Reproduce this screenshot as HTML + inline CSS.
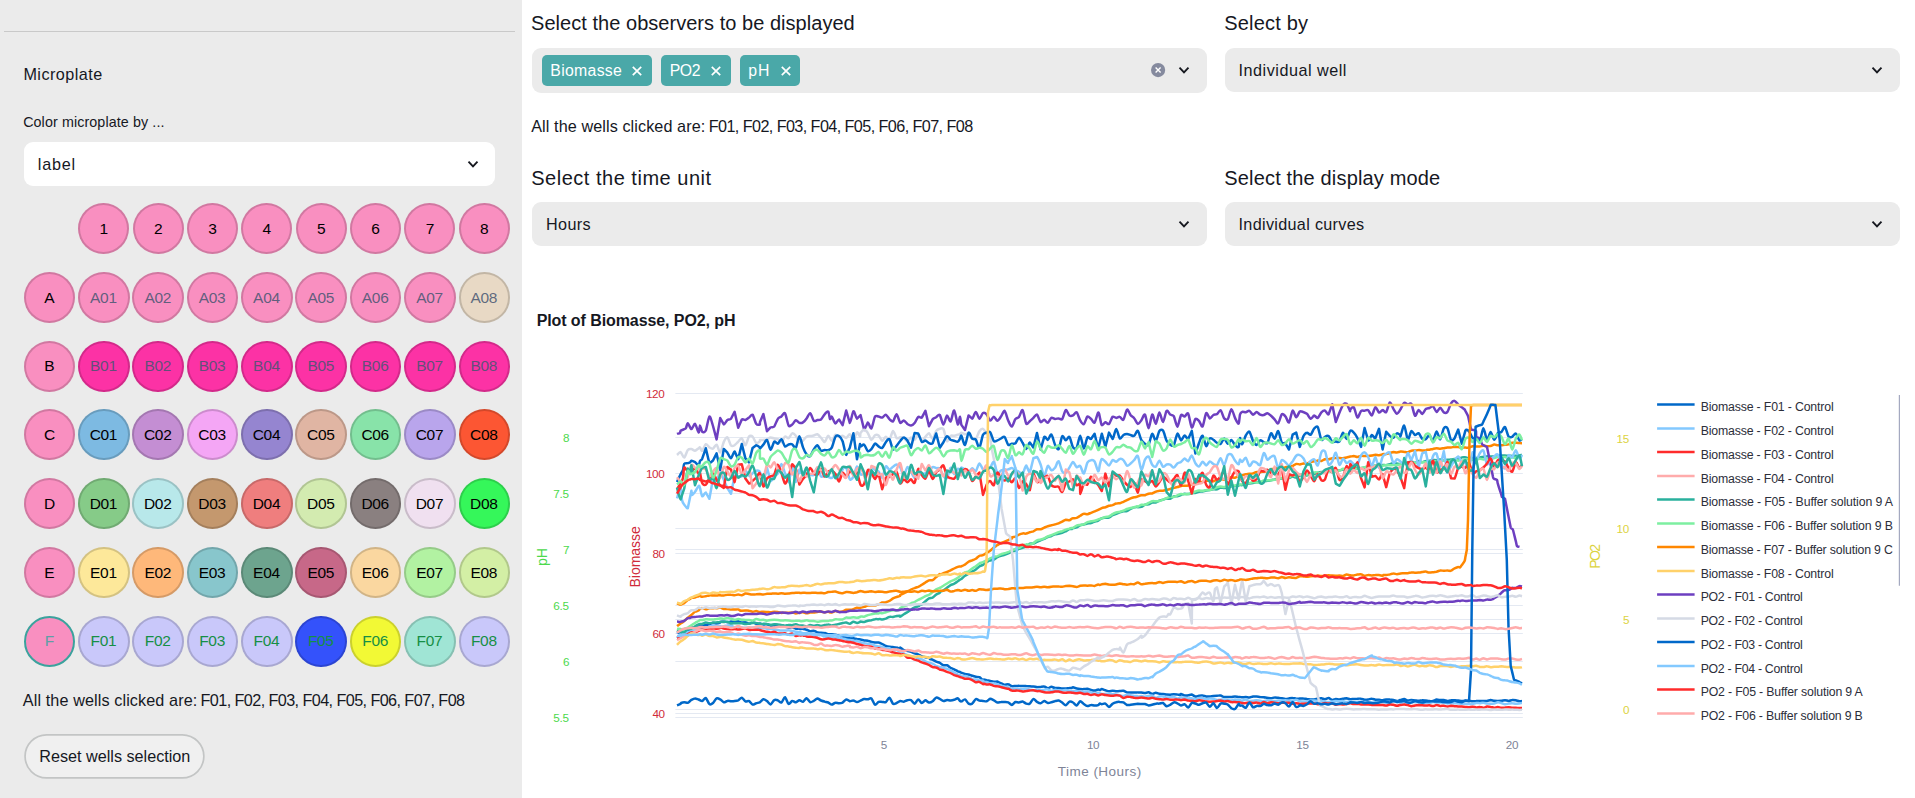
<!DOCTYPE html><html><head><meta charset="utf-8"><title>Microplate</title><style>html,body{margin:0;padding:0}body{width:1915px;height:798px;overflow:hidden;position:relative;background:#fff;font-family:'Liberation Sans',sans-serif;}</style></head><body><div style="position:absolute;left:0;top:0;width:522px;height:798px;background:#ebebeb"></div>
<div style="position:absolute;left:4px;top:30.5px;width:511px;height:1.5px;background:#c9c9c9"></div>
<div style="position:absolute;left:23.43px;top:64px;font-size:16.2px;line-height:20px;color:#16181f;white-space:pre;letter-spacing:0.452px;">Microplate</div>
<div style="position:absolute;left:23.14px;top:113px;font-size:14.3px;line-height:18px;color:#16181f;white-space:pre;letter-spacing:0.103px;">Color microplate by ...</div>
<div style="position:absolute;left:24px;top:142px;width:471px;height:44px;background:#fff;border-radius:9px"></div>
<div style="position:absolute;left:37.73px;top:154px;font-size:16.2px;line-height:20px;color:#16181f;white-space:pre;letter-spacing:0.810px;">label</div>
<svg style="position:absolute;left:462.7px;top:154px" width="20" height="20" viewBox="462.7 154 20 20"><path d="M468.20 161.70 L472.70 166.30 L477.20 161.70" fill="none" stroke="#16181f" stroke-width="1.9" stroke-linecap="butt" stroke-linejoin="miter"/></svg>
<div style="position:absolute;left:78.35px;top:202.95px;width:51.0px;height:51.0px;box-sizing:border-box;border-radius:50%;background:#f98fc0;border:2px solid rgba(0,0,0,0.16)"></div><div style="position:absolute;left:99.54px;top:219px;font-size:15.5px;line-height:19px;color:#000;white-space:pre;">1</div>
<div style="position:absolute;left:132.70px;top:202.95px;width:51.0px;height:51.0px;box-sizing:border-box;border-radius:50%;background:#f98fc0;border:2px solid rgba(0,0,0,0.16)"></div><div style="position:absolute;left:153.89px;top:219px;font-size:15.5px;line-height:19px;color:#000;white-space:pre;">2</div>
<div style="position:absolute;left:187.05px;top:202.95px;width:51.0px;height:51.0px;box-sizing:border-box;border-radius:50%;background:#f98fc0;border:2px solid rgba(0,0,0,0.16)"></div><div style="position:absolute;left:208.24px;top:219px;font-size:15.5px;line-height:19px;color:#000;white-space:pre;">3</div>
<div style="position:absolute;left:241.40px;top:202.95px;width:51.0px;height:51.0px;box-sizing:border-box;border-radius:50%;background:#f98fc0;border:2px solid rgba(0,0,0,0.16)"></div><div style="position:absolute;left:262.59px;top:219px;font-size:15.5px;line-height:19px;color:#000;white-space:pre;">4</div>
<div style="position:absolute;left:295.75px;top:202.95px;width:51.0px;height:51.0px;box-sizing:border-box;border-radius:50%;background:#f98fc0;border:2px solid rgba(0,0,0,0.16)"></div><div style="position:absolute;left:316.94px;top:219px;font-size:15.5px;line-height:19px;color:#000;white-space:pre;">5</div>
<div style="position:absolute;left:350.10px;top:202.95px;width:51.0px;height:51.0px;box-sizing:border-box;border-radius:50%;background:#f98fc0;border:2px solid rgba(0,0,0,0.16)"></div><div style="position:absolute;left:371.29px;top:219px;font-size:15.5px;line-height:19px;color:#000;white-space:pre;">6</div>
<div style="position:absolute;left:404.45px;top:202.95px;width:51.0px;height:51.0px;box-sizing:border-box;border-radius:50%;background:#f98fc0;border:2px solid rgba(0,0,0,0.16)"></div><div style="position:absolute;left:425.64px;top:219px;font-size:15.5px;line-height:19px;color:#000;white-space:pre;">7</div>
<div style="position:absolute;left:458.80px;top:202.95px;width:51.0px;height:51.0px;box-sizing:border-box;border-radius:50%;background:#f98fc0;border:2px solid rgba(0,0,0,0.16)"></div><div style="position:absolute;left:479.99px;top:219px;font-size:15.5px;line-height:19px;color:#000;white-space:pre;">8</div>
<div style="position:absolute;left:24.00px;top:271.76px;width:51.0px;height:51.0px;box-sizing:border-box;border-radius:50%;background:#f98fc0;border:2px solid rgba(0,0,0,0.16)"></div><div style="position:absolute;left:44.33px;top:288px;font-size:15.5px;line-height:19px;color:#000;white-space:pre;">A</div>
<div style="position:absolute;left:78.05px;top:271.76px;width:51.6px;height:51.0px;box-sizing:border-box;border-radius:50%;background:#f98fc0;border:2px solid rgba(0,0,0,0.16)"></div><div style="position:absolute;left:90.05px;top:288px;font-size:15.5px;line-height:19px;color:rgba(70,85,113,0.85);white-space:pre;letter-spacing:-0.3px;">A01</div>
<div style="position:absolute;left:132.40px;top:271.76px;width:51.6px;height:51.0px;box-sizing:border-box;border-radius:50%;background:#f98fc0;border:2px solid rgba(0,0,0,0.16)"></div><div style="position:absolute;left:144.40px;top:288px;font-size:15.5px;line-height:19px;color:rgba(70,85,113,0.85);white-space:pre;letter-spacing:-0.3px;">A02</div>
<div style="position:absolute;left:186.75px;top:271.76px;width:51.6px;height:51.0px;box-sizing:border-box;border-radius:50%;background:#f98fc0;border:2px solid rgba(0,0,0,0.16)"></div><div style="position:absolute;left:198.75px;top:288px;font-size:15.5px;line-height:19px;color:rgba(70,85,113,0.85);white-space:pre;letter-spacing:-0.3px;">A03</div>
<div style="position:absolute;left:241.10px;top:271.76px;width:51.6px;height:51.0px;box-sizing:border-box;border-radius:50%;background:#f98fc0;border:2px solid rgba(0,0,0,0.16)"></div><div style="position:absolute;left:253.10px;top:288px;font-size:15.5px;line-height:19px;color:rgba(70,85,113,0.85);white-space:pre;letter-spacing:-0.3px;">A04</div>
<div style="position:absolute;left:295.45px;top:271.76px;width:51.6px;height:51.0px;box-sizing:border-box;border-radius:50%;background:#f98fc0;border:2px solid rgba(0,0,0,0.16)"></div><div style="position:absolute;left:307.45px;top:288px;font-size:15.5px;line-height:19px;color:rgba(70,85,113,0.85);white-space:pre;letter-spacing:-0.3px;">A05</div>
<div style="position:absolute;left:349.80px;top:271.76px;width:51.6px;height:51.0px;box-sizing:border-box;border-radius:50%;background:#f98fc0;border:2px solid rgba(0,0,0,0.16)"></div><div style="position:absolute;left:361.80px;top:288px;font-size:15.5px;line-height:19px;color:rgba(70,85,113,0.85);white-space:pre;letter-spacing:-0.3px;">A06</div>
<div style="position:absolute;left:404.15px;top:271.76px;width:51.6px;height:51.0px;box-sizing:border-box;border-radius:50%;background:#f98fc0;border:2px solid rgba(0,0,0,0.16)"></div><div style="position:absolute;left:416.15px;top:288px;font-size:15.5px;line-height:19px;color:rgba(70,85,113,0.85);white-space:pre;letter-spacing:-0.3px;">A07</div>
<div style="position:absolute;left:458.50px;top:271.76px;width:51.6px;height:51.0px;box-sizing:border-box;border-radius:50%;background:#e8d9c5;border:2px solid rgba(0,0,0,0.16)"></div><div style="position:absolute;left:470.50px;top:288px;font-size:15.5px;line-height:19px;color:rgba(70,85,113,0.85);white-space:pre;letter-spacing:-0.3px;">A08</div>
<div style="position:absolute;left:24.00px;top:340.57px;width:51.0px;height:51.0px;box-sizing:border-box;border-radius:50%;background:#f98fc0;border:2px solid rgba(0,0,0,0.16)"></div><div style="position:absolute;left:44.33px;top:356px;font-size:15.5px;line-height:19px;color:#000;white-space:pre;">B</div>
<div style="position:absolute;left:78.05px;top:340.57px;width:51.6px;height:51.0px;box-sizing:border-box;border-radius:50%;background:#fc32a5;border:2px solid rgba(0,0,0,0.16)"></div><div style="position:absolute;left:90.05px;top:356px;font-size:15.5px;line-height:19px;color:rgba(70,85,113,0.85);white-space:pre;letter-spacing:-0.3px;">B01</div>
<div style="position:absolute;left:132.40px;top:340.57px;width:51.6px;height:51.0px;box-sizing:border-box;border-radius:50%;background:#fc32a5;border:2px solid rgba(0,0,0,0.16)"></div><div style="position:absolute;left:144.40px;top:356px;font-size:15.5px;line-height:19px;color:rgba(70,85,113,0.85);white-space:pre;letter-spacing:-0.3px;">B02</div>
<div style="position:absolute;left:186.75px;top:340.57px;width:51.6px;height:51.0px;box-sizing:border-box;border-radius:50%;background:#fc32a5;border:2px solid rgba(0,0,0,0.16)"></div><div style="position:absolute;left:198.75px;top:356px;font-size:15.5px;line-height:19px;color:rgba(70,85,113,0.85);white-space:pre;letter-spacing:-0.3px;">B03</div>
<div style="position:absolute;left:241.10px;top:340.57px;width:51.6px;height:51.0px;box-sizing:border-box;border-radius:50%;background:#fc32a5;border:2px solid rgba(0,0,0,0.16)"></div><div style="position:absolute;left:253.10px;top:356px;font-size:15.5px;line-height:19px;color:rgba(70,85,113,0.85);white-space:pre;letter-spacing:-0.3px;">B04</div>
<div style="position:absolute;left:295.45px;top:340.57px;width:51.6px;height:51.0px;box-sizing:border-box;border-radius:50%;background:#fc32a5;border:2px solid rgba(0,0,0,0.16)"></div><div style="position:absolute;left:307.45px;top:356px;font-size:15.5px;line-height:19px;color:rgba(70,85,113,0.85);white-space:pre;letter-spacing:-0.3px;">B05</div>
<div style="position:absolute;left:349.80px;top:340.57px;width:51.6px;height:51.0px;box-sizing:border-box;border-radius:50%;background:#fc32a5;border:2px solid rgba(0,0,0,0.16)"></div><div style="position:absolute;left:361.80px;top:356px;font-size:15.5px;line-height:19px;color:rgba(70,85,113,0.85);white-space:pre;letter-spacing:-0.3px;">B06</div>
<div style="position:absolute;left:404.15px;top:340.57px;width:51.6px;height:51.0px;box-sizing:border-box;border-radius:50%;background:#fc32a5;border:2px solid rgba(0,0,0,0.16)"></div><div style="position:absolute;left:416.15px;top:356px;font-size:15.5px;line-height:19px;color:rgba(70,85,113,0.85);white-space:pre;letter-spacing:-0.3px;">B07</div>
<div style="position:absolute;left:458.50px;top:340.57px;width:51.6px;height:51.0px;box-sizing:border-box;border-radius:50%;background:#fc32a5;border:2px solid rgba(0,0,0,0.16)"></div><div style="position:absolute;left:470.50px;top:356px;font-size:15.5px;line-height:19px;color:rgba(70,85,113,0.85);white-space:pre;letter-spacing:-0.3px;">B08</div>
<div style="position:absolute;left:24.00px;top:409.38px;width:51.0px;height:51.0px;box-sizing:border-box;border-radius:50%;background:#f98fc0;border:2px solid rgba(0,0,0,0.16)"></div><div style="position:absolute;left:43.90px;top:425px;font-size:15.5px;line-height:19px;color:#000;white-space:pre;">C</div>
<div style="position:absolute;left:78.05px;top:409.38px;width:51.6px;height:51.0px;box-sizing:border-box;border-radius:50%;background:#7dbae2;border:2px solid rgba(0,0,0,0.16)"></div><div style="position:absolute;left:89.63px;top:425px;font-size:15.5px;line-height:19px;color:#000;white-space:pre;letter-spacing:-0.3px;">C01</div>
<div style="position:absolute;left:132.40px;top:409.38px;width:51.6px;height:51.0px;box-sizing:border-box;border-radius:50%;background:#c48ed3;border:2px solid rgba(0,0,0,0.16)"></div><div style="position:absolute;left:143.98px;top:425px;font-size:15.5px;line-height:19px;color:#000;white-space:pre;letter-spacing:-0.3px;">C02</div>
<div style="position:absolute;left:186.75px;top:409.38px;width:51.6px;height:51.0px;box-sizing:border-box;border-radius:50%;background:#f4a6f5;border:2px solid rgba(0,0,0,0.16)"></div><div style="position:absolute;left:198.33px;top:425px;font-size:15.5px;line-height:19px;color:#000;white-space:pre;letter-spacing:-0.3px;">C03</div>
<div style="position:absolute;left:241.10px;top:409.38px;width:51.6px;height:51.0px;box-sizing:border-box;border-radius:50%;background:#9585d0;border:2px solid rgba(0,0,0,0.16)"></div><div style="position:absolute;left:252.68px;top:425px;font-size:15.5px;line-height:19px;color:#000;white-space:pre;letter-spacing:-0.3px;">C04</div>
<div style="position:absolute;left:295.45px;top:409.38px;width:51.6px;height:51.0px;box-sizing:border-box;border-radius:50%;background:#e0b5a3;border:2px solid rgba(0,0,0,0.16)"></div><div style="position:absolute;left:307.03px;top:425px;font-size:15.5px;line-height:19px;color:#000;white-space:pre;letter-spacing:-0.3px;">C05</div>
<div style="position:absolute;left:349.80px;top:409.38px;width:51.6px;height:51.0px;box-sizing:border-box;border-radius:50%;background:#88e3a9;border:2px solid rgba(0,0,0,0.16)"></div><div style="position:absolute;left:361.38px;top:425px;font-size:15.5px;line-height:19px;color:#000;white-space:pre;letter-spacing:-0.3px;">C06</div>
<div style="position:absolute;left:404.15px;top:409.38px;width:51.6px;height:51.0px;box-sizing:border-box;border-radius:50%;background:#b9a5ec;border:2px solid rgba(0,0,0,0.16)"></div><div style="position:absolute;left:415.73px;top:425px;font-size:15.5px;line-height:19px;color:#000;white-space:pre;letter-spacing:-0.3px;">C07</div>
<div style="position:absolute;left:458.50px;top:409.38px;width:51.6px;height:51.0px;box-sizing:border-box;border-radius:50%;background:#fc5633;border:2px solid rgba(0,0,0,0.16)"></div><div style="position:absolute;left:470.08px;top:425px;font-size:15.5px;line-height:19px;color:#000;white-space:pre;letter-spacing:-0.3px;">C08</div>
<div style="position:absolute;left:24.00px;top:478.19px;width:51.0px;height:51.0px;box-sizing:border-box;border-radius:50%;background:#f98fc0;border:2px solid rgba(0,0,0,0.16)"></div><div style="position:absolute;left:43.90px;top:494px;font-size:15.5px;line-height:19px;color:#000;white-space:pre;">D</div>
<div style="position:absolute;left:78.05px;top:478.19px;width:51.6px;height:51.0px;box-sizing:border-box;border-radius:50%;background:#86cb88;border:2px solid rgba(0,0,0,0.16)"></div><div style="position:absolute;left:89.63px;top:494px;font-size:15.5px;line-height:19px;color:#000;white-space:pre;letter-spacing:-0.3px;">D01</div>
<div style="position:absolute;left:132.40px;top:478.19px;width:51.6px;height:51.0px;box-sizing:border-box;border-radius:50%;background:#b8e8ea;border:2px solid rgba(0,0,0,0.16)"></div><div style="position:absolute;left:143.98px;top:494px;font-size:15.5px;line-height:19px;color:#000;white-space:pre;letter-spacing:-0.3px;">D02</div>
<div style="position:absolute;left:186.75px;top:478.19px;width:51.6px;height:51.0px;box-sizing:border-box;border-radius:50%;background:#c4986e;border:2px solid rgba(0,0,0,0.16)"></div><div style="position:absolute;left:198.33px;top:494px;font-size:15.5px;line-height:19px;color:#000;white-space:pre;letter-spacing:-0.3px;">D03</div>
<div style="position:absolute;left:241.10px;top:478.19px;width:51.6px;height:51.0px;box-sizing:border-box;border-radius:50%;background:#ef7e7e;border:2px solid rgba(0,0,0,0.16)"></div><div style="position:absolute;left:252.68px;top:494px;font-size:15.5px;line-height:19px;color:#000;white-space:pre;letter-spacing:-0.3px;">D04</div>
<div style="position:absolute;left:295.45px;top:478.19px;width:51.6px;height:51.0px;box-sizing:border-box;border-radius:50%;background:#d3ebb0;border:2px solid rgba(0,0,0,0.16)"></div><div style="position:absolute;left:307.03px;top:494px;font-size:15.5px;line-height:19px;color:#000;white-space:pre;letter-spacing:-0.3px;">D05</div>
<div style="position:absolute;left:349.80px;top:478.19px;width:51.6px;height:51.0px;box-sizing:border-box;border-radius:50%;background:#8a8080;border:2px solid rgba(0,0,0,0.16)"></div><div style="position:absolute;left:361.38px;top:494px;font-size:15.5px;line-height:19px;color:#000;white-space:pre;letter-spacing:-0.3px;">D06</div>
<div style="position:absolute;left:404.15px;top:478.19px;width:51.6px;height:51.0px;box-sizing:border-box;border-radius:50%;background:#f0e0f0;border:2px solid rgba(0,0,0,0.16)"></div><div style="position:absolute;left:415.73px;top:494px;font-size:15.5px;line-height:19px;color:#000;white-space:pre;letter-spacing:-0.3px;">D07</div>
<div style="position:absolute;left:458.50px;top:478.19px;width:51.6px;height:51.0px;box-sizing:border-box;border-radius:50%;background:#35f75a;border:2px solid rgba(0,0,0,0.16)"></div><div style="position:absolute;left:470.08px;top:494px;font-size:15.5px;line-height:19px;color:#000;white-space:pre;letter-spacing:-0.3px;">D08</div>
<div style="position:absolute;left:24.00px;top:547.00px;width:51.0px;height:51.0px;box-sizing:border-box;border-radius:50%;background:#f98fc0;border:2px solid rgba(0,0,0,0.16)"></div><div style="position:absolute;left:44.33px;top:563px;font-size:15.5px;line-height:19px;color:#000;white-space:pre;">E</div>
<div style="position:absolute;left:78.05px;top:547.00px;width:51.6px;height:51.0px;box-sizing:border-box;border-radius:50%;background:#fde89a;border:2px solid rgba(0,0,0,0.16)"></div><div style="position:absolute;left:90.05px;top:563px;font-size:15.5px;line-height:19px;color:#000;white-space:pre;letter-spacing:-0.3px;">E01</div>
<div style="position:absolute;left:132.40px;top:547.00px;width:51.6px;height:51.0px;box-sizing:border-box;border-radius:50%;background:#feb87a;border:2px solid rgba(0,0,0,0.16)"></div><div style="position:absolute;left:144.40px;top:563px;font-size:15.5px;line-height:19px;color:#000;white-space:pre;letter-spacing:-0.3px;">E02</div>
<div style="position:absolute;left:186.75px;top:547.00px;width:51.6px;height:51.0px;box-sizing:border-box;border-radius:50%;background:#88c6cc;border:2px solid rgba(0,0,0,0.16)"></div><div style="position:absolute;left:198.75px;top:563px;font-size:15.5px;line-height:19px;color:#000;white-space:pre;letter-spacing:-0.3px;">E03</div>
<div style="position:absolute;left:241.10px;top:547.00px;width:51.6px;height:51.0px;box-sizing:border-box;border-radius:50%;background:#6da48e;border:2px solid rgba(0,0,0,0.16)"></div><div style="position:absolute;left:253.10px;top:563px;font-size:15.5px;line-height:19px;color:#000;white-space:pre;letter-spacing:-0.3px;">E04</div>
<div style="position:absolute;left:295.45px;top:547.00px;width:51.6px;height:51.0px;box-sizing:border-box;border-radius:50%;background:#c76888;border:2px solid rgba(0,0,0,0.16)"></div><div style="position:absolute;left:307.45px;top:563px;font-size:15.5px;line-height:19px;color:#000;white-space:pre;letter-spacing:-0.3px;">E05</div>
<div style="position:absolute;left:349.80px;top:547.00px;width:51.6px;height:51.0px;box-sizing:border-box;border-radius:50%;background:#fad7a0;border:2px solid rgba(0,0,0,0.16)"></div><div style="position:absolute;left:361.80px;top:563px;font-size:15.5px;line-height:19px;color:#000;white-space:pre;letter-spacing:-0.3px;">E06</div>
<div style="position:absolute;left:404.15px;top:547.00px;width:51.6px;height:51.0px;box-sizing:border-box;border-radius:50%;background:#b2f2a2;border:2px solid rgba(0,0,0,0.16)"></div><div style="position:absolute;left:416.15px;top:563px;font-size:15.5px;line-height:19px;color:#000;white-space:pre;letter-spacing:-0.3px;">E07</div>
<div style="position:absolute;left:458.50px;top:547.00px;width:51.6px;height:51.0px;box-sizing:border-box;border-radius:50%;background:#d3efa5;border:2px solid rgba(0,0,0,0.16)"></div><div style="position:absolute;left:470.50px;top:563px;font-size:15.5px;line-height:19px;color:#000;white-space:pre;letter-spacing:-0.3px;">E08</div>
<div style="position:absolute;left:24.00px;top:615.81px;width:51.0px;height:51.0px;box-sizing:border-box;border-radius:50%;background:#f98fc0;border:2px solid #3ba29d"></div><div style="position:absolute;left:44.77px;top:631px;font-size:15.5px;line-height:19px;color:#5f9ea6;white-space:pre;">F</div>
<div style="position:absolute;left:78.05px;top:615.81px;width:51.6px;height:51.0px;box-sizing:border-box;border-radius:50%;background:#c9c8fa;border:2px solid rgba(0,0,0,0.16)"></div><div style="position:absolute;left:90.49px;top:631px;font-size:15.5px;line-height:19px;color:#168f45;white-space:pre;letter-spacing:-0.3px;">F01</div>
<div style="position:absolute;left:132.40px;top:615.81px;width:51.6px;height:51.0px;box-sizing:border-box;border-radius:50%;background:#c9c8fa;border:2px solid rgba(0,0,0,0.16)"></div><div style="position:absolute;left:144.84px;top:631px;font-size:15.5px;line-height:19px;color:#168f45;white-space:pre;letter-spacing:-0.3px;">F02</div>
<div style="position:absolute;left:186.75px;top:615.81px;width:51.6px;height:51.0px;box-sizing:border-box;border-radius:50%;background:#c9c8fa;border:2px solid rgba(0,0,0,0.16)"></div><div style="position:absolute;left:199.19px;top:631px;font-size:15.5px;line-height:19px;color:#168f45;white-space:pre;letter-spacing:-0.3px;">F03</div>
<div style="position:absolute;left:241.10px;top:615.81px;width:51.6px;height:51.0px;box-sizing:border-box;border-radius:50%;background:#c9c8fa;border:2px solid rgba(0,0,0,0.16)"></div><div style="position:absolute;left:253.54px;top:631px;font-size:15.5px;line-height:19px;color:#168f45;white-space:pre;letter-spacing:-0.3px;">F04</div>
<div style="position:absolute;left:295.45px;top:615.81px;width:51.6px;height:51.0px;box-sizing:border-box;border-radius:50%;background:#3452fb;border:2px solid rgba(0,0,0,0.16)"></div><div style="position:absolute;left:307.89px;top:631px;font-size:15.5px;line-height:19px;color:#168f45;white-space:pre;letter-spacing:-0.3px;">F05</div>
<div style="position:absolute;left:349.80px;top:615.81px;width:51.6px;height:51.0px;box-sizing:border-box;border-radius:50%;background:#f2f935;border:2px solid rgba(0,0,0,0.16)"></div><div style="position:absolute;left:362.24px;top:631px;font-size:15.5px;line-height:19px;color:#168f45;white-space:pre;letter-spacing:-0.3px;">F06</div>
<div style="position:absolute;left:404.15px;top:615.81px;width:51.6px;height:51.0px;box-sizing:border-box;border-radius:50%;background:#a0e5d5;border:2px solid rgba(0,0,0,0.16)"></div><div style="position:absolute;left:416.59px;top:631px;font-size:15.5px;line-height:19px;color:#168f45;white-space:pre;letter-spacing:-0.3px;">F07</div>
<div style="position:absolute;left:458.50px;top:615.81px;width:51.6px;height:51.0px;box-sizing:border-box;border-radius:50%;background:#c9c8fa;border:2px solid rgba(0,0,0,0.16)"></div><div style="position:absolute;left:470.94px;top:631px;font-size:15.5px;line-height:19px;color:#168f45;white-space:pre;letter-spacing:-0.3px;">F08</div>
<div><span style="position:absolute;left:22.83px;top:690px;font-size:16.2px;line-height:20px;color:#16181f;white-space:pre;letter-spacing:0.104px;">All the wells clicked are: </span><span style="position:absolute;left:200.53px;top:690px;font-size:16.2px;line-height:20px;color:#16181f;white-space:pre;letter-spacing:-0.583px;">F01, F02, F03, F04, F05, F06, F07, F08</span></div>
<svg style="position:absolute;left:20px;top:730px" width="190" height="54" viewBox="20 730 190 54"><rect x="25.05" y="734.85" width="178.8" height="43" rx="21.5" fill="#f0f0f0" stroke="#c3c5c5" stroke-width="1.7"/></svg>
<div style="position:absolute;left:39.23px;top:746px;font-size:16.2px;line-height:20px;color:#16181f;white-space:pre;">Reset wells selection</div>
<div style="position:absolute;left:531.10px;top:11px;font-size:20px;line-height:24px;color:#16181f;white-space:pre;letter-spacing:0.034px;">Select the observers to be displayed</div>
<div style="position:absolute;left:1224.30px;top:11px;font-size:20px;line-height:24px;color:#16181f;white-space:pre;letter-spacing:0.179px;">Select by</div>
<div style="position:absolute;left:531.20px;top:166px;font-size:20px;line-height:24px;color:#16181f;white-space:pre;letter-spacing:0.516px;">Select the time unit</div>
<div style="position:absolute;left:1224.30px;top:166px;font-size:20px;line-height:24px;color:#16181f;white-space:pre;letter-spacing:0.162px;">Select the display mode</div>
<div style="position:absolute;left:532px;top:48px;width:675px;height:45px;background:#ebebeb;border-radius:9px"></div>
<div style="position:absolute;left:1225px;top:48px;width:675px;height:44px;background:#ebebeb;border-radius:9px"></div>
<div style="position:absolute;left:532px;top:202px;width:675px;height:44px;background:#ebebeb;border-radius:9px"></div>
<div style="position:absolute;left:1225px;top:202px;width:675px;height:44px;background:#ebebeb;border-radius:9px"></div>
<div style="position:absolute;left:542px;top:55px;width:110px;height:31px;background:#4aa8a8;border-radius:5px"></div><div style="position:absolute;left:550.35px;top:61px;font-size:15.8px;line-height:19px;color:#fff;white-space:pre;letter-spacing:0.305px;">Biomasse</div><svg style="position:absolute;left:628.9px;top:62.599999999999994px" width="16" height="16" viewBox="628.9 62.599999999999994 16 16"><path d="M632.6999999999999 66.39999999999999 L641.1 74.8 M641.1 66.39999999999999 L632.6999999999999 74.8" stroke="#fff" stroke-width="1.7" fill="none"/></svg>
<div style="position:absolute;left:661px;top:55px;width:70px;height:31px;background:#4aa8a8;border-radius:5px"></div><div style="position:absolute;left:669.65px;top:61px;font-size:15.8px;line-height:19px;color:#fff;white-space:pre;letter-spacing:-0.407px;">PO2</div><svg style="position:absolute;left:707.9px;top:62.599999999999994px" width="16" height="16" viewBox="707.9 62.599999999999994 16 16"><path d="M711.6999999999999 66.39999999999999 L720.1 74.8 M720.1 66.39999999999999 L711.6999999999999 74.8" stroke="#fff" stroke-width="1.7" fill="none"/></svg>
<div style="position:absolute;left:740px;top:55px;width:60px;height:31px;background:#4aa8a8;border-radius:5px"></div><div style="position:absolute;left:748.35px;top:61px;font-size:15.8px;line-height:19px;color:#fff;white-space:pre;letter-spacing:0.993px;">pH</div><svg style="position:absolute;left:777.7px;top:62.599999999999994px" width="16" height="16" viewBox="777.7 62.599999999999994 16 16"><path d="M781.5 66.39999999999999 L789.9000000000001 74.8 M789.9000000000001 66.39999999999999 L781.5 74.8" stroke="#fff" stroke-width="1.7" fill="none"/></svg>
<svg style="position:absolute;left:1150px;top:62px" width="16" height="16" viewBox="1150 62 16 16"><circle cx="1158.1" cy="70.1" r="7.1" fill="#858a9e"/><path d="M1155.6 67.6 L1160.6 72.6 M1160.6 67.6 L1155.6 72.6" stroke="#fff" stroke-width="1.35" fill="none"/></svg>
<svg style="position:absolute;left:1174.2px;top:60px" width="20" height="20" viewBox="1174.2 60 20 20"><path d="M1179.70 67.70 L1184.20 72.30 L1188.70 67.70" fill="none" stroke="#16181f" stroke-width="1.9" stroke-linecap="butt" stroke-linejoin="miter"/></svg>
<svg style="position:absolute;left:1867.3px;top:60px" width="20" height="20" viewBox="1867.3 60 20 20"><path d="M1872.80 67.70 L1877.30 72.30 L1881.80 67.70" fill="none" stroke="#16181f" stroke-width="1.9" stroke-linecap="butt" stroke-linejoin="miter"/></svg>
<svg style="position:absolute;left:1174.2px;top:214px" width="20" height="20" viewBox="1174.2 214 20 20"><path d="M1179.70 221.70 L1184.20 226.30 L1188.70 221.70" fill="none" stroke="#16181f" stroke-width="1.9" stroke-linecap="butt" stroke-linejoin="miter"/></svg>
<svg style="position:absolute;left:1867.3px;top:214px" width="20" height="20" viewBox="1867.3 214 20 20"><path d="M1872.80 221.70 L1877.30 226.30 L1881.80 221.70" fill="none" stroke="#16181f" stroke-width="1.9" stroke-linecap="butt" stroke-linejoin="miter"/></svg>
<div style="position:absolute;left:1238.53px;top:60px;font-size:16.2px;line-height:20px;color:#16181f;white-space:pre;letter-spacing:0.512px;">Individual well</div>
<div style="position:absolute;left:546.03px;top:214px;font-size:16.2px;line-height:20px;color:#16181f;white-space:pre;letter-spacing:0.339px;">Hours</div>
<div style="position:absolute;left:1238.53px;top:214px;font-size:16.2px;line-height:20px;color:#16181f;white-space:pre;letter-spacing:0.317px;">Individual curves</div>
<div><span style="position:absolute;left:531.23px;top:116px;font-size:16.2px;line-height:20px;color:#16181f;white-space:pre;letter-spacing:0.088px;">All the wells clicked are: </span><span style="position:absolute;left:708.73px;top:116px;font-size:16.2px;line-height:20px;color:#16181f;white-space:pre;letter-spacing:-0.586px;">F01, F02, F03, F04, F05, F06, F07, F08</span></div>
<div style="position:absolute;left:536.64px;top:311px;font-size:16px;line-height:19px;color:#16181f;white-space:pre;font-weight:700;letter-spacing:-0.084px;">Plot of Biomasse, PO2, pH</div>
<svg style="position:absolute;left:522px;top:340px" width="1393" height="458" viewBox="522 340 1393 458" font-family="'Liberation Sans',sans-serif"><path d="M675.4 393.5 H1522.8" stroke="#e4e9f2" stroke-width="1" fill="none"/><path d="M675.4 473.5 H1522.8" stroke="#e4e9f2" stroke-width="1" fill="none"/><path d="M675.4 553.5 H1522.8" stroke="#e4e9f2" stroke-width="1" fill="none"/><path d="M675.4 633.5 H1522.8" stroke="#e4e9f2" stroke-width="1" fill="none"/><path d="M675.4 713.5 H1522.8" stroke="#e4e9f2" stroke-width="1" fill="none"/><path d="M675.4 437.5 H1522.8" stroke="#e4e9f2" stroke-width="1" fill="none"/><path d="M675.4 493.5 H1522.8" stroke="#e4e9f2" stroke-width="1" fill="none"/><path d="M675.4 549.5 H1522.8" stroke="#e4e9f2" stroke-width="1" fill="none"/><path d="M675.4 605.5 H1522.8" stroke="#e4e9f2" stroke-width="1" fill="none"/><path d="M675.4 661.5 H1522.8" stroke="#e4e9f2" stroke-width="1" fill="none"/><path d="M675.4 717.5 H1522.8" stroke="#e4e9f2" stroke-width="1" fill="none"/><path d="M675.4 528.5 H1522.8" stroke="#e4e9f2" stroke-width="1" fill="none"/><path d="M675.4 619.5 H1522.8" stroke="#e4e9f2" stroke-width="1" fill="none"/><path d="M675.4 709.5 H1522.8" stroke="#e4e9f2" stroke-width="1" fill="none"/><g fill="none" stroke-width="2.5" stroke-linejoin="round" stroke-linecap="butt"><path d="M677.0 632.0 C677.5 632.2 679.9 633.2 680.6 633.5 C681.3 633.7 681.5 634.1 682.0 634.0 C682.5 633.9 683.4 633.0 684.2 632.6 C685.0 632.1 687.0 631.4 687.8 630.9 C688.6 630.4 689.5 629.5 690.0 629.0 C690.5 628.5 690.7 627.7 691.4 627.6 C692.1 627.4 694.0 628.2 695.0 628.0 C696.0 627.8 697.6 626.7 698.6 626.4 C699.6 626.1 701.3 626.1 702.2 625.9 C703.1 625.7 704.5 625.1 705.0 625.0 C705.5 624.9 705.2 625.2 705.8 625.1 C706.4 625.0 708.4 624.5 709.4 624.2 C710.4 623.9 712.0 623.3 713.0 623.1 C714.0 623.0 715.6 623.5 716.6 623.5 C717.6 623.4 719.5 622.7 720.0 622.5 C720.2 622.3 720.0 622.2 720.2 622.1 C720.7 621.9 722.8 621.5 723.8 621.5 C724.8 621.5 726.4 622.2 727.4 622.2 C728.4 622.2 730.0 621.7 731.0 621.6 C732.0 621.5 733.6 621.8 734.6 621.7 C735.6 621.7 737.4 621.2 738.2 621.2 C739.0 621.3 739.5 621.8 740.0 622.0 C740.5 622.2 741.0 622.6 741.8 622.6 C742.6 622.6 744.4 622.0 745.4 622.2 C746.4 622.4 748.0 623.7 749.0 623.7 C750.0 623.7 751.6 622.3 752.6 622.3 C753.6 622.3 755.2 623.5 756.2 623.7 C757.2 624.0 759.3 623.9 759.8 623.9 C760.0 623.9 759.8 623.4 760.0 623.5 C760.5 623.6 762.4 624.4 763.4 624.5 C764.4 624.6 766.0 624.1 767.0 624.2 C768.0 624.4 769.6 625.5 770.6 625.7 C771.6 625.9 773.2 625.5 774.2 625.4 C775.2 625.3 777.0 624.8 777.8 624.9 C778.6 624.9 779.5 625.8 780.0 626.0 C780.5 626.2 780.7 626.4 781.4 626.5 C782.1 626.5 784.0 626.2 785.0 626.4 C786.0 626.6 787.6 627.6 788.6 627.7 C789.6 627.9 791.2 627.5 792.2 627.6 C793.2 627.7 794.8 628.5 795.8 628.7 C796.8 628.9 798.8 628.8 799.4 628.8 C800.0 628.8 799.5 629.0 800.0 629.0 C800.5 629.0 802.1 628.8 803.0 628.9 C803.9 629.0 805.6 629.4 806.6 629.8 C807.6 630.1 809.2 631.2 810.2 631.3 C811.2 631.5 812.8 630.5 813.8 630.7 C814.8 630.8 816.4 632.1 817.4 632.4 C818.4 632.7 820.0 632.6 821.0 632.7 C822.0 632.8 824.0 633.0 824.6 633.0 C825.0 633.1 824.6 632.8 825.0 633.0 C825.5 633.2 827.2 634.0 828.2 634.2 C829.2 634.3 830.8 634.2 831.8 634.3 C832.8 634.4 834.4 634.6 835.4 634.7 C836.4 634.9 838.0 635.3 839.0 635.6 C840.0 635.9 841.6 636.7 842.6 637.0 C843.6 637.3 845.2 637.6 846.2 637.7 C847.2 637.9 849.3 638.1 849.8 638.1 C850.0 638.1 849.8 637.7 850.0 637.7 C850.5 637.7 852.4 638.2 853.4 638.3 C854.4 638.5 856.0 638.8 857.0 639.0 C858.0 639.1 859.6 639.3 860.6 639.5 C861.6 639.7 863.2 640.2 864.2 640.4 C865.2 640.6 866.8 640.5 867.8 640.8 C868.8 641.0 870.4 641.7 871.4 642.0 C872.4 642.3 874.0 642.5 875.0 642.6 C876.0 642.7 877.6 642.3 878.6 642.5 C879.6 642.7 881.2 643.5 882.2 644.0 C883.2 644.5 884.8 645.6 885.8 646.0 C886.8 646.4 888.4 646.7 889.4 646.8 C890.4 647.0 892.0 647.0 893.0 647.1 C894.0 647.2 895.6 647.3 896.6 647.6 C897.6 647.8 899.5 648.7 900.0 648.7 C900.2 648.7 900.0 647.4 900.2 647.6 C900.7 647.8 902.8 649.5 903.8 650.0 C904.8 650.5 906.4 650.7 907.4 650.9 C908.4 651.2 910.0 651.4 911.0 651.8 C912.0 652.1 913.6 653.0 914.6 653.3 C915.6 653.7 917.2 653.8 918.2 654.3 C919.2 654.7 920.8 656.0 921.8 656.4 C922.8 656.8 924.4 657.0 925.4 657.2 C926.4 657.4 928.3 657.7 929.0 657.9 C929.7 658.2 929.5 658.8 930.0 659.0 C930.5 659.2 931.7 659.3 932.6 659.7 C933.5 660.0 935.2 661.2 936.2 661.7 C937.2 662.2 938.8 662.4 939.8 662.9 C940.8 663.4 942.4 665.0 943.4 665.3 C944.4 665.6 946.0 664.9 947.0 665.2 C948.0 665.6 949.6 667.2 950.6 667.8 C951.6 668.3 953.2 668.8 954.2 669.3 C955.2 669.8 957.0 670.9 957.8 671.3 C958.6 671.7 959.5 671.8 960.0 672.0 C960.5 672.2 960.7 672.4 961.4 672.7 C962.1 672.9 964.0 673.7 965.0 673.9 C966.0 674.2 967.6 674.2 968.6 674.5 C969.6 674.8 971.2 675.4 972.2 675.7 C973.2 676.1 974.8 676.6 975.8 676.8 C976.8 677.0 978.4 676.7 979.4 677.2 C980.4 677.7 982.3 679.8 983.0 680.1 C983.7 680.4 983.5 679.4 984.0 679.4 C984.5 679.4 985.7 679.9 986.6 680.2 C987.5 680.4 989.2 680.9 990.2 681.1 C991.2 681.3 992.8 681.7 993.8 681.8 C994.8 681.9 996.5 681.4 997.4 681.5 C998.3 681.7 999.5 682.8 1000.0 683.0 C1000.5 683.2 1000.3 682.8 1001.0 683.1 C1001.7 683.3 1003.6 684.6 1004.6 684.8 C1005.6 684.9 1007.2 684.0 1008.2 684.2 C1009.2 684.3 1010.8 685.9 1011.8 686.1 C1012.8 686.4 1014.7 686.0 1015.4 686.0 C1016.1 686.0 1016.3 686.0 1016.8 686.0 C1017.3 686.0 1018.2 685.7 1019.0 685.8 C1019.8 685.8 1021.6 686.1 1022.6 686.1 C1023.6 686.1 1025.2 685.9 1026.2 686.0 C1027.2 686.0 1028.8 686.2 1029.8 686.3 C1030.8 686.4 1032.4 686.4 1033.4 686.5 C1034.4 686.6 1036.1 687.0 1037.0 687.1 C1037.9 687.2 1039.5 687.0 1040.0 687.0 C1040.5 687.0 1040.0 687.0 1040.6 686.9 C1041.2 686.9 1043.2 686.4 1044.2 686.6 C1045.2 686.7 1046.8 688.1 1047.8 688.2 C1048.8 688.2 1050.4 686.8 1051.4 686.8 C1052.4 686.8 1054.0 687.9 1055.0 688.1 C1056.0 688.2 1057.6 687.9 1058.6 687.9 C1059.6 688.0 1061.2 688.3 1062.2 688.4 C1063.2 688.5 1064.8 688.5 1065.8 688.4 C1066.8 688.3 1068.6 687.9 1069.4 687.9 C1070.2 687.8 1071.1 688.1 1071.6 688.0 C1072.1 687.9 1072.3 687.1 1073.0 687.2 C1073.7 687.3 1075.6 688.2 1076.6 688.5 C1077.6 688.8 1079.2 689.0 1080.2 689.0 C1081.2 689.1 1082.8 689.2 1083.8 689.1 C1084.8 689.1 1086.4 688.6 1087.4 688.7 C1088.4 688.8 1090.0 689.7 1091.0 689.9 C1092.0 690.2 1093.6 690.7 1094.6 690.6 C1095.6 690.6 1097.4 689.6 1098.2 689.5 C1099.0 689.4 1099.5 690.1 1100.0 690.0 C1100.5 689.9 1101.0 689.1 1101.8 689.1 C1102.6 689.1 1104.4 690.0 1105.4 690.3 C1106.4 690.6 1108.0 691.3 1109.0 691.3 C1110.0 691.4 1111.6 690.8 1112.6 690.8 C1113.6 690.8 1115.2 691.2 1116.2 691.3 C1117.2 691.3 1118.8 691.2 1119.8 691.1 C1120.8 691.0 1122.4 690.6 1123.4 690.8 C1124.4 691.0 1126.0 692.1 1127.0 692.4 C1128.0 692.6 1129.6 692.5 1130.6 692.5 C1131.6 692.5 1133.3 692.4 1134.2 692.4 C1135.1 692.4 1136.5 692.5 1137.0 692.5 C1137.5 692.5 1137.2 692.4 1137.8 692.4 C1138.4 692.4 1140.4 692.4 1141.4 692.5 C1142.4 692.6 1144.0 693.0 1145.0 693.0 C1146.0 692.9 1147.6 692.2 1148.6 692.3 C1149.6 692.4 1151.2 693.8 1152.2 693.9 C1153.2 693.9 1154.8 692.7 1155.8 692.7 C1156.8 692.7 1158.4 693.6 1159.4 693.8 C1160.4 694.0 1162.0 693.9 1163.0 694.0 C1164.0 694.1 1165.6 694.5 1166.6 694.6 C1167.6 694.7 1169.2 694.7 1170.2 694.7 C1171.2 694.6 1172.8 694.3 1173.8 694.3 C1174.8 694.3 1176.5 694.5 1177.4 694.6 C1178.3 694.6 1179.5 695.1 1180.0 695.0 C1180.5 694.9 1180.3 693.8 1181.0 693.9 C1181.7 694.0 1183.6 695.3 1184.6 695.5 C1185.6 695.7 1187.2 695.4 1188.2 695.3 C1189.2 695.2 1190.8 694.5 1191.8 694.6 C1192.8 694.8 1194.4 696.4 1195.4 696.6 C1196.4 696.7 1198.0 695.9 1199.0 695.7 C1200.0 695.6 1201.6 695.4 1202.6 695.6 C1203.6 695.7 1205.2 696.4 1206.2 696.5 C1207.2 696.6 1208.8 696.5 1209.8 696.4 C1210.8 696.3 1212.4 696.0 1213.4 695.9 C1214.4 695.8 1216.0 695.7 1217.0 695.7 C1218.0 695.7 1219.6 695.4 1220.6 695.6 C1221.6 695.8 1223.2 696.8 1224.2 697.0 C1225.2 697.2 1226.8 696.9 1227.8 696.9 C1228.8 697.0 1230.4 697.2 1231.4 697.1 C1232.4 697.0 1234.0 696.4 1235.0 696.4 C1236.0 696.4 1237.9 697.1 1238.6 697.1 C1239.3 697.2 1239.5 697.0 1240.0 697.0 C1240.5 697.0 1241.4 697.3 1242.2 697.3 C1243.0 697.3 1244.8 697.0 1245.8 697.0 C1246.8 697.0 1248.4 697.5 1249.4 697.4 C1250.4 697.4 1252.0 696.6 1253.0 696.4 C1254.0 696.3 1255.6 696.5 1256.6 696.6 C1257.6 696.7 1259.2 697.0 1260.2 697.1 C1261.2 697.1 1262.8 697.1 1263.8 697.2 C1264.8 697.4 1266.4 697.6 1267.4 697.8 C1268.4 697.9 1270.0 698.2 1271.0 698.2 C1272.0 698.2 1273.6 697.5 1274.6 697.5 C1275.6 697.4 1277.2 697.7 1278.2 697.8 C1279.2 697.9 1280.8 698.0 1281.8 698.2 C1282.8 698.4 1284.4 699.0 1285.4 699.0 C1286.4 699.1 1288.0 698.6 1289.0 698.4 C1290.0 698.2 1291.6 697.8 1292.6 697.9 C1293.6 697.9 1295.2 698.6 1296.2 698.7 C1297.2 698.8 1299.3 698.6 1299.8 698.5 C1300.0 698.5 1299.8 698.5 1300.0 698.5 C1300.5 698.5 1302.4 698.4 1303.4 698.5 C1304.4 698.5 1306.0 698.7 1307.0 698.9 C1308.0 699.0 1309.6 699.4 1310.6 699.5 C1311.6 699.6 1313.2 699.5 1314.2 699.4 C1315.2 699.3 1316.8 698.8 1317.8 698.6 C1318.8 698.5 1320.4 698.2 1321.4 698.3 C1322.4 698.4 1324.0 699.4 1325.0 699.3 C1326.0 699.3 1327.6 698.0 1328.6 698.1 C1329.6 698.2 1331.2 699.8 1332.2 699.9 C1333.2 700.1 1334.8 699.2 1335.8 699.1 C1336.8 699.1 1338.4 699.5 1339.4 699.5 C1340.4 699.4 1342.0 699.0 1343.0 698.8 C1344.0 698.7 1345.6 698.3 1346.6 698.3 C1347.6 698.4 1349.2 699.3 1350.2 699.3 C1351.2 699.4 1352.8 698.9 1353.8 698.9 C1354.8 698.8 1356.4 698.8 1357.4 698.8 C1358.4 698.7 1360.0 698.5 1361.0 698.7 C1362.0 698.8 1363.6 699.6 1364.6 699.7 C1365.6 699.9 1367.2 699.7 1368.2 699.5 C1369.2 699.4 1370.8 698.6 1371.8 698.7 C1372.8 698.7 1374.4 699.5 1375.4 699.7 C1376.4 699.8 1378.0 699.7 1379.0 699.8 C1380.0 699.9 1381.6 700.3 1382.6 700.2 C1383.6 700.2 1385.2 699.6 1386.2 699.5 C1387.2 699.4 1388.8 699.4 1389.8 699.5 C1390.8 699.5 1392.4 699.7 1393.4 699.9 C1394.4 700.1 1396.1 700.9 1397.0 700.9 C1397.9 701.0 1399.5 700.1 1400.0 700.0 C1400.5 699.9 1400.0 700.1 1400.6 699.9 C1401.2 699.8 1403.2 698.9 1404.2 699.0 C1405.2 699.1 1406.8 700.4 1407.8 700.5 C1408.8 700.7 1410.4 700.0 1411.4 700.0 C1412.4 700.0 1414.0 700.2 1415.0 700.4 C1416.0 700.5 1417.6 700.8 1418.6 700.8 C1419.6 700.8 1421.2 700.3 1422.2 700.3 C1423.2 700.2 1424.8 700.5 1425.8 700.6 C1426.8 700.7 1428.4 701.1 1429.4 701.1 C1430.4 701.2 1432.0 701.1 1433.0 700.9 C1434.0 700.7 1435.6 699.7 1436.6 699.6 C1437.6 699.5 1439.2 700.0 1440.2 700.1 C1441.2 700.1 1442.8 700.0 1443.8 700.1 C1444.8 700.2 1446.4 700.8 1447.4 700.9 C1448.4 700.9 1450.0 700.3 1451.0 700.3 C1452.0 700.2 1453.6 700.3 1454.6 700.3 C1455.6 700.4 1457.2 700.4 1458.2 700.5 C1459.2 700.6 1460.8 701.0 1461.8 701.0 C1462.8 701.1 1464.4 700.8 1465.4 700.8 C1466.4 700.7 1468.0 700.6 1469.0 700.7 C1470.0 700.8 1471.6 701.3 1472.6 701.3 C1473.6 701.4 1475.2 701.1 1476.2 701.1 C1477.2 701.0 1478.8 701.1 1479.8 701.1 C1480.8 701.1 1482.4 701.1 1483.4 701.1 C1484.4 701.1 1486.0 701.1 1487.0 701.0 C1488.0 700.9 1489.6 700.2 1490.6 700.1 C1491.6 700.1 1493.2 700.7 1494.2 700.8 C1495.2 700.9 1496.8 700.9 1497.8 700.9 C1498.8 700.9 1500.4 700.9 1501.4 700.8 C1502.4 700.7 1504.0 700.2 1505.0 700.2 C1506.0 700.2 1507.6 700.9 1508.6 700.9 C1509.6 700.9 1511.2 700.0 1512.2 700.0 C1513.2 699.9 1514.8 700.1 1515.8 700.3 C1516.8 700.5 1518.5 701.2 1519.4 701.3 C1520.3 701.4 1521.6 701.1 1522.0 701.1" stroke="#0068c9"/><path d="M677.0 638.1 C677.5 637.5 679.6 634.7 680.6 634.2 C681.6 633.6 683.6 634.3 684.2 634.1 C684.8 633.9 684.5 633.3 685.0 633.0 C685.5 632.7 686.9 632.3 687.8 632.0 C688.7 631.8 690.4 631.5 691.4 631.1 C692.4 630.7 694.0 629.8 695.0 629.4 C696.0 628.9 697.9 628.4 698.6 628.3 C699.3 628.1 699.5 627.9 700.0 628.0 C700.5 628.1 701.4 628.6 702.2 628.6 C703.0 628.6 704.8 628.3 705.8 628.0 C706.8 627.7 708.4 627.1 709.4 626.7 C710.4 626.4 712.0 625.7 713.0 625.6 C714.0 625.5 715.6 626.0 716.6 626.1 C717.6 626.1 719.5 626.0 720.0 626.0 C720.2 626.0 720.0 626.3 720.2 626.3 C720.7 626.4 722.8 626.4 723.8 626.2 C724.8 626.1 726.4 625.5 727.4 625.4 C728.4 625.3 730.0 625.5 731.0 625.8 C732.0 626.0 733.6 627.1 734.6 627.2 C735.6 627.3 737.2 626.4 738.2 626.5 C739.2 626.6 740.8 627.5 741.8 627.6 C742.8 627.8 744.4 627.7 745.4 627.7 C746.4 627.7 748.0 627.8 749.0 627.8 C750.0 627.7 751.6 627.7 752.6 627.6 C753.6 627.6 755.2 627.4 756.2 627.5 C757.2 627.6 759.3 628.1 759.8 628.1 C760.0 628.1 759.8 627.5 760.0 627.5 C760.5 627.5 762.4 627.7 763.4 627.9 C764.4 628.1 766.0 628.6 767.0 628.8 C768.0 629.0 769.6 629.0 770.6 629.1 C771.6 629.2 773.2 629.3 774.2 629.4 C775.2 629.5 776.8 629.8 777.8 629.9 C778.8 630.1 780.4 630.4 781.4 630.5 C782.4 630.6 784.0 630.6 785.0 630.6 C786.0 630.5 787.6 630.1 788.6 630.2 C789.6 630.2 791.2 630.7 792.2 631.0 C793.2 631.2 794.8 631.6 795.8 631.7 C796.8 631.9 798.8 632.2 799.4 632.2 C800.0 632.2 799.5 631.8 800.0 632.0 C800.5 632.2 802.1 633.1 803.0 633.3 C803.9 633.4 805.6 633.0 806.6 633.1 C807.6 633.2 809.2 633.8 810.2 633.9 C811.2 634.0 812.8 633.4 813.8 633.6 C814.8 633.8 816.4 635.1 817.4 635.3 C818.4 635.5 820.0 634.8 821.0 635.0 C822.0 635.2 823.6 636.4 824.6 636.6 C825.6 636.8 827.2 636.6 828.2 636.6 C829.2 636.7 830.8 636.7 831.8 636.9 C832.8 637.0 834.4 637.4 835.4 637.6 C836.4 637.8 838.0 638.2 839.0 638.4 C840.0 638.5 841.6 638.2 842.6 638.4 C843.6 638.5 845.2 639.3 846.2 639.5 C847.2 639.8 849.3 640.0 849.8 640.1 C850.0 640.1 849.8 639.9 850.0 640.0 C850.5 640.1 852.4 640.8 853.4 640.9 C854.4 641.1 856.0 640.7 857.0 640.9 C858.0 641.1 859.6 641.9 860.6 642.3 C861.6 642.6 863.2 643.1 864.2 643.3 C865.2 643.5 866.8 643.7 867.8 643.8 C868.8 643.9 870.4 643.8 871.4 644.1 C872.4 644.3 874.0 645.4 875.0 645.7 C876.0 646.1 877.6 646.3 878.6 646.4 C879.6 646.6 881.2 646.4 882.2 646.7 C883.2 647.0 884.8 648.2 885.8 648.4 C886.8 648.6 888.4 648.0 889.4 648.3 C890.4 648.6 892.0 650.1 893.0 650.3 C894.0 650.6 895.6 649.9 896.6 650.1 C897.6 650.2 899.5 651.4 900.0 651.5 C900.2 651.6 900.0 650.7 900.2 651.0 C900.7 651.2 902.8 653.0 903.8 653.6 C904.8 654.2 906.4 654.8 907.4 655.2 C908.4 655.6 910.0 656.2 911.0 656.4 C912.0 656.7 913.6 656.5 914.6 656.8 C915.6 657.1 917.2 658.2 918.2 658.5 C919.2 658.9 920.8 659.0 921.8 659.4 C922.8 659.8 924.4 660.9 925.4 661.3 C926.4 661.8 928.0 662.4 929.0 662.7 C930.0 663.0 931.6 663.3 932.6 663.7 C933.6 664.2 935.2 665.3 936.2 665.8 C937.2 666.2 939.3 666.8 939.8 667.0 C940.0 667.1 939.8 666.9 940.0 667.0 C940.5 667.1 942.4 667.6 943.4 667.9 C944.4 668.1 946.0 668.5 947.0 668.8 C948.0 669.2 949.6 669.8 950.6 670.3 C951.6 670.8 953.2 671.7 954.2 672.4 C955.2 673.0 957.0 674.3 957.8 674.7 C958.6 675.1 959.5 674.7 960.0 675.0 C960.5 675.3 960.7 676.4 961.4 676.5 C962.1 676.7 964.0 676.0 965.0 676.1 C966.0 676.2 967.6 676.9 968.6 677.3 C969.6 677.7 971.2 678.7 972.2 679.1 C973.2 679.4 974.8 679.4 975.8 679.6 C976.8 679.8 978.4 680.5 979.4 680.6 C980.4 680.7 982.3 680.4 983.0 680.6 C983.7 680.8 983.5 681.8 984.0 682.0 C984.5 682.2 985.7 681.8 986.6 682.0 C987.5 682.2 989.2 683.1 990.2 683.3 C991.2 683.5 992.8 683.1 993.8 683.3 C994.8 683.4 996.4 683.9 997.4 684.3 C998.4 684.6 1000.0 685.4 1001.0 685.7 C1002.0 686.0 1003.6 686.2 1004.6 686.4 C1005.6 686.7 1007.2 687.1 1008.2 687.4 C1009.2 687.8 1010.8 688.7 1011.8 688.9 C1012.8 689.1 1014.8 688.8 1015.4 688.8 C1016.0 688.8 1015.5 689.0 1016.0 689.0 C1016.5 689.0 1018.1 688.6 1019.0 688.7 C1019.9 688.7 1021.6 689.2 1022.6 689.2 C1023.6 689.1 1025.2 688.4 1026.2 688.5 C1027.2 688.6 1028.8 689.5 1029.8 689.7 C1030.8 689.9 1032.4 690.2 1033.4 690.2 C1034.4 690.2 1036.0 689.6 1037.0 689.6 C1038.0 689.7 1039.6 690.3 1040.6 690.3 C1041.6 690.3 1043.2 689.8 1044.2 689.7 C1045.2 689.5 1046.8 689.3 1047.8 689.4 C1048.8 689.6 1050.4 690.9 1051.4 690.9 C1052.4 691.0 1054.0 689.8 1055.0 689.8 C1056.0 689.7 1057.6 690.3 1058.6 690.4 C1059.6 690.5 1061.2 690.5 1062.2 690.4 C1063.2 690.4 1064.8 689.9 1065.8 690.0 C1066.8 690.2 1068.7 691.2 1069.4 691.3 C1070.1 691.4 1070.5 691.1 1071.0 691.0 C1071.5 690.9 1072.2 690.9 1073.0 690.9 C1073.8 691.0 1075.6 691.1 1076.6 691.1 C1077.6 691.2 1079.2 691.4 1080.2 691.5 C1081.2 691.7 1082.8 692.2 1083.8 692.1 C1084.8 692.1 1086.4 691.3 1087.4 691.3 C1088.4 691.4 1090.0 692.1 1091.0 692.4 C1092.0 692.7 1093.6 693.5 1094.6 693.5 C1095.6 693.5 1097.2 692.7 1098.2 692.7 C1099.2 692.8 1100.8 693.7 1101.8 693.9 C1102.8 694.0 1104.4 693.9 1105.4 693.9 C1106.4 693.8 1108.0 693.6 1109.0 693.7 C1110.0 693.7 1111.6 694.1 1112.6 694.2 C1113.6 694.3 1115.2 694.2 1116.2 694.4 C1117.2 694.6 1118.8 695.4 1119.8 695.6 C1120.8 695.8 1122.4 696.0 1123.4 695.9 C1124.4 695.8 1126.0 694.8 1127.0 694.7 C1128.0 694.6 1129.6 695.0 1130.6 695.2 C1131.6 695.4 1133.3 695.8 1134.2 695.9 C1135.1 696.0 1136.5 695.9 1137.0 696.0 C1137.5 696.1 1137.2 696.6 1137.8 696.6 C1138.4 696.6 1140.4 696.1 1141.4 696.1 C1142.4 696.1 1144.0 696.8 1145.0 696.7 C1146.0 696.7 1147.6 696.1 1148.6 695.9 C1149.6 695.8 1151.2 695.3 1152.2 695.6 C1153.2 695.8 1154.8 697.6 1155.8 697.8 C1156.8 697.9 1158.4 696.8 1159.4 696.6 C1160.4 696.4 1162.0 696.3 1163.0 696.4 C1164.0 696.6 1165.6 697.5 1166.6 697.6 C1167.6 697.7 1169.2 697.3 1170.2 697.2 C1171.2 697.2 1172.8 696.8 1173.8 697.0 C1174.8 697.2 1176.4 698.4 1177.4 698.4 C1178.4 698.4 1180.0 697.3 1181.0 697.2 C1182.0 697.2 1183.6 697.6 1184.6 697.8 C1185.6 698.0 1187.2 698.4 1188.2 698.4 C1189.2 698.5 1190.8 698.1 1191.8 698.3 C1192.8 698.4 1194.4 699.2 1195.4 699.2 C1196.4 699.2 1198.0 698.3 1199.0 698.1 C1200.0 697.9 1201.6 697.7 1202.6 697.9 C1203.6 698.1 1205.2 699.2 1206.2 699.3 C1207.2 699.3 1208.8 698.5 1209.8 698.5 C1210.8 698.4 1212.4 698.6 1213.4 698.8 C1214.4 699.0 1216.0 699.8 1217.0 699.9 C1218.0 700.0 1219.6 699.5 1220.6 699.5 C1221.6 699.4 1223.2 699.7 1224.2 699.7 C1225.2 699.8 1226.8 699.9 1227.8 700.0 C1228.8 700.1 1230.4 700.5 1231.4 700.4 C1232.4 700.3 1234.0 699.7 1235.0 699.6 C1236.0 699.6 1237.9 700.0 1238.6 700.0 C1239.3 700.1 1239.5 699.9 1240.0 700.0 C1240.5 700.1 1241.4 700.8 1242.2 700.8 C1243.0 700.7 1244.8 699.4 1245.8 699.5 C1246.8 699.5 1248.4 700.7 1249.4 700.9 C1250.4 701.0 1252.0 700.9 1253.0 700.8 C1254.0 700.7 1255.6 700.2 1256.6 700.2 C1257.6 700.2 1259.2 700.6 1260.2 700.7 C1261.2 700.9 1262.8 701.4 1263.8 701.3 C1264.8 701.3 1266.4 700.5 1267.4 700.3 C1268.4 700.2 1270.0 700.4 1271.0 700.4 C1272.0 700.5 1273.6 700.9 1274.6 700.9 C1275.6 701.0 1277.2 700.7 1278.2 700.6 C1279.2 700.5 1280.8 700.4 1281.8 700.4 C1282.8 700.3 1284.4 700.3 1285.4 700.3 C1286.4 700.4 1288.0 700.7 1289.0 700.8 C1290.0 700.9 1291.6 701.2 1292.6 701.0 C1293.6 700.9 1295.2 699.7 1296.2 699.8 C1297.2 699.8 1298.8 701.1 1299.8 701.3 C1300.8 701.6 1302.4 701.5 1303.4 701.5 C1304.4 701.5 1306.0 701.4 1307.0 701.2 C1308.0 701.1 1309.6 700.7 1310.6 700.6 C1311.6 700.5 1313.2 700.5 1314.2 700.6 C1315.2 700.7 1316.8 700.9 1317.8 701.0 C1318.8 701.1 1320.4 701.1 1321.4 701.2 C1322.4 701.3 1324.0 701.4 1325.0 701.6 C1326.0 701.7 1327.6 702.0 1328.6 701.9 C1329.6 701.9 1331.2 701.6 1332.2 701.4 C1333.2 701.3 1334.8 701.0 1335.8 700.9 C1336.8 700.9 1338.4 701.2 1339.4 701.3 C1340.4 701.3 1342.0 701.0 1343.0 701.1 C1344.0 701.2 1345.6 702.0 1346.6 702.1 C1347.6 702.1 1349.2 701.6 1350.2 701.6 C1351.2 701.6 1352.8 702.1 1353.8 702.2 C1354.8 702.2 1356.4 701.8 1357.4 701.8 C1358.4 701.7 1360.0 701.9 1361.0 701.9 C1362.0 701.9 1363.6 701.9 1364.6 701.9 C1365.6 702.0 1367.2 702.1 1368.2 702.2 C1369.2 702.2 1370.8 702.6 1371.8 702.6 C1372.8 702.6 1374.4 702.2 1375.4 702.2 C1376.4 702.1 1378.0 702.1 1379.0 702.1 C1380.0 702.1 1381.6 702.2 1382.6 702.3 C1383.6 702.3 1385.2 702.7 1386.2 702.7 C1387.2 702.8 1388.8 703.0 1389.8 702.9 C1390.8 702.7 1392.4 702.0 1393.4 701.8 C1394.4 701.7 1396.1 702.0 1397.0 702.1 C1397.9 702.2 1399.5 702.4 1400.0 702.5 C1400.5 702.6 1400.0 702.8 1400.6 702.8 C1401.2 702.8 1403.2 702.5 1404.2 702.5 C1405.2 702.4 1406.8 702.3 1407.8 702.3 C1408.8 702.2 1410.4 701.9 1411.4 701.9 C1412.4 701.9 1414.0 702.1 1415.0 702.2 C1416.0 702.2 1417.6 702.1 1418.6 702.3 C1419.6 702.5 1421.2 703.6 1422.2 703.7 C1423.2 703.7 1424.8 702.9 1425.8 702.8 C1426.8 702.7 1428.4 703.2 1429.4 703.0 C1430.4 702.9 1432.0 702.0 1433.0 702.0 C1434.0 701.9 1435.6 702.6 1436.6 702.6 C1437.6 702.7 1439.2 702.5 1440.2 702.5 C1441.2 702.5 1442.8 702.8 1443.8 702.9 C1444.8 703.0 1446.4 703.4 1447.4 703.4 C1448.4 703.5 1450.0 703.2 1451.0 703.2 C1452.0 703.2 1453.6 703.2 1454.6 703.2 C1455.6 703.3 1457.2 703.4 1458.2 703.5 C1459.2 703.6 1460.8 703.8 1461.8 703.8 C1462.8 703.8 1464.4 703.6 1465.4 703.6 C1466.4 703.7 1468.0 704.0 1469.0 704.0 C1470.0 704.1 1471.6 704.1 1472.6 704.0 C1473.6 703.8 1475.2 703.1 1476.2 703.0 C1477.2 702.9 1478.8 703.2 1479.8 703.2 C1480.8 703.1 1482.4 702.6 1483.4 702.7 C1484.4 702.7 1486.0 703.4 1487.0 703.6 C1488.0 703.7 1489.6 703.7 1490.6 703.7 C1491.6 703.7 1493.2 703.6 1494.2 703.4 C1495.2 703.3 1496.8 702.4 1497.8 702.3 C1498.8 702.2 1500.4 702.7 1501.4 703.0 C1502.4 703.3 1504.0 704.2 1505.0 704.3 C1506.0 704.4 1507.6 703.8 1508.6 703.6 C1509.6 703.5 1511.2 703.1 1512.2 703.2 C1513.2 703.2 1514.8 703.7 1515.8 703.7 C1516.8 703.7 1518.5 703.5 1519.4 703.4 C1520.3 703.3 1521.6 702.9 1522.0 702.9" stroke="#83c9ff"/><path d="M677.0 637.7 C677.5 637.6 679.8 637.0 680.6 636.8 C681.5 636.5 682.5 636.2 683.0 636.0 C683.5 635.8 683.5 635.5 684.2 635.2 C684.9 634.9 686.8 634.5 687.8 634.1 C688.8 633.7 690.4 632.7 691.4 632.4 C692.4 632.2 694.0 632.5 695.0 632.3 C696.0 632.1 697.9 631.2 698.6 630.9 C699.3 630.5 699.5 630.2 700.0 630.0 C700.5 629.8 701.4 629.5 702.2 629.5 C703.0 629.5 704.8 630.0 705.8 630.0 C706.8 630.0 708.4 629.6 709.4 629.4 C710.4 629.1 712.0 628.5 713.0 628.4 C714.0 628.3 715.6 628.8 716.6 628.8 C717.6 628.7 719.5 628.2 720.0 628.0 C720.2 627.8 720.0 627.1 720.2 627.2 C720.7 627.3 722.8 628.3 723.8 628.6 C724.8 628.9 726.4 629.0 727.4 629.1 C728.4 629.2 730.0 629.3 731.0 629.3 C732.0 629.3 733.6 629.0 734.6 629.0 C735.6 629.0 737.2 629.4 738.2 629.4 C739.2 629.4 740.8 629.2 741.8 629.1 C742.8 628.9 744.4 628.4 745.4 628.5 C746.4 628.6 748.0 629.8 749.0 629.9 C750.0 630.1 751.6 629.6 752.6 629.5 C753.6 629.5 755.2 629.6 756.2 629.7 C757.2 629.7 759.3 629.9 759.8 629.9 C760.0 630.0 759.8 629.8 760.0 630.0 C760.5 630.2 762.4 630.8 763.4 631.1 C764.4 631.3 766.0 631.5 767.0 631.7 C768.0 631.9 769.6 632.5 770.6 632.5 C771.6 632.5 773.2 631.6 774.2 631.8 C775.2 631.9 776.8 633.2 777.8 633.4 C778.8 633.7 780.4 633.5 781.4 633.5 C782.4 633.5 784.0 633.2 785.0 633.3 C786.0 633.5 787.6 634.4 788.6 634.4 C789.6 634.5 791.2 633.4 792.2 633.6 C793.2 633.9 794.8 635.7 795.8 635.9 C796.8 636.2 798.8 635.3 799.4 635.3 C800.0 635.2 799.5 635.5 800.0 635.5 C800.5 635.5 802.1 635.2 803.0 635.4 C803.9 635.5 805.6 636.2 806.6 636.4 C807.6 636.6 809.2 636.7 810.2 636.7 C811.2 636.8 812.8 636.7 813.8 636.9 C814.8 637.0 816.4 637.5 817.4 637.8 C818.4 638.2 820.0 639.1 821.0 639.3 C822.0 639.5 823.6 639.4 824.6 639.3 C825.6 639.2 827.2 638.4 828.2 638.4 C829.2 638.4 830.8 639.0 831.8 639.2 C832.8 639.4 834.4 639.5 835.4 639.6 C836.4 639.8 838.0 640.1 839.0 640.3 C840.0 640.5 841.6 640.7 842.6 640.9 C843.6 641.1 845.2 641.6 846.2 641.8 C847.2 642.0 849.3 642.3 849.8 642.3 C850.0 642.3 849.8 641.9 850.0 642.0 C850.5 642.1 852.4 642.5 853.4 642.8 C854.4 643.1 856.0 643.7 857.0 644.0 C858.0 644.2 859.6 644.5 860.6 644.8 C861.6 645.0 863.2 645.7 864.2 645.9 C865.2 646.2 866.8 646.4 867.8 646.5 C868.8 646.5 870.4 646.3 871.4 646.6 C872.4 646.9 874.0 648.4 875.0 648.6 C876.0 648.8 877.6 648.2 878.6 648.3 C879.6 648.5 881.2 649.5 882.2 649.7 C883.2 650.0 884.8 650.0 885.8 650.2 C886.8 650.3 888.4 650.8 889.4 651.1 C890.4 651.4 892.0 652.1 893.0 652.4 C894.0 652.7 895.6 653.0 896.6 653.2 C897.6 653.4 899.5 653.8 900.0 654.0 C900.2 654.2 900.0 654.6 900.2 654.6 C900.7 654.7 902.8 653.9 903.8 654.4 C904.8 654.8 906.4 657.1 907.4 657.6 C908.4 658.1 910.0 657.6 911.0 657.9 C912.0 658.2 913.6 659.2 914.6 659.6 C915.6 659.9 917.2 660.3 918.2 660.7 C919.2 661.1 920.8 662.0 921.8 662.4 C922.8 662.8 924.4 663.1 925.4 663.5 C926.4 663.8 928.0 664.5 929.0 665.0 C930.0 665.5 931.6 666.6 932.6 667.0 C933.6 667.3 935.2 667.1 936.2 667.5 C937.2 667.8 939.3 669.2 939.8 669.5 C940.0 669.8 939.8 669.4 940.0 669.5 C940.5 669.6 942.4 670.0 943.4 670.3 C944.4 670.7 946.0 671.5 947.0 671.9 C948.0 672.3 949.6 672.6 950.6 673.1 C951.6 673.5 953.2 674.7 954.2 675.2 C955.2 675.6 957.0 675.9 957.8 676.2 C958.6 676.5 959.5 676.8 960.0 677.0 C960.5 677.2 960.7 677.1 961.4 677.4 C962.1 677.6 964.0 678.6 965.0 678.8 C966.0 679.0 967.6 678.5 968.6 678.7 C969.6 678.8 971.2 679.6 972.2 680.1 C973.2 680.6 974.8 682.0 975.8 682.3 C976.8 682.5 978.4 681.6 979.4 681.9 C980.4 682.1 982.3 683.8 983.0 684.1 C983.7 684.3 983.5 683.7 984.0 683.8 C984.5 683.9 985.7 684.4 986.6 684.5 C987.5 684.6 989.2 684.2 990.2 684.4 C991.2 684.6 992.8 685.6 993.8 685.9 C994.8 686.2 996.4 686.1 997.4 686.3 C998.4 686.4 1000.0 686.8 1001.0 687.1 C1002.0 687.4 1003.6 687.9 1004.6 688.1 C1005.6 688.4 1007.2 688.4 1008.2 688.7 C1009.2 689.1 1010.8 690.3 1011.8 690.6 C1012.8 690.9 1014.8 690.8 1015.4 690.7 C1016.0 690.7 1015.5 690.4 1016.0 690.4 C1016.5 690.4 1018.1 690.6 1019.0 690.7 C1019.9 690.8 1021.6 691.3 1022.6 691.4 C1023.6 691.4 1025.2 691.1 1026.2 691.0 C1027.2 690.9 1028.8 690.6 1029.8 690.5 C1030.8 690.4 1032.4 690.1 1033.4 690.2 C1034.4 690.3 1036.0 690.9 1037.0 691.1 C1038.0 691.2 1039.6 691.0 1040.6 691.2 C1041.6 691.3 1043.2 692.0 1044.2 692.2 C1045.2 692.4 1046.8 692.6 1047.8 692.6 C1048.8 692.6 1050.4 692.5 1051.4 692.3 C1052.4 692.2 1054.0 691.7 1055.0 691.6 C1056.0 691.5 1057.6 691.3 1058.6 691.4 C1059.6 691.5 1061.2 692.2 1062.2 692.4 C1063.2 692.6 1064.8 692.7 1065.8 692.7 C1066.8 692.7 1068.7 692.4 1069.4 692.4 C1070.1 692.4 1070.5 692.4 1071.0 692.5 C1071.5 692.6 1072.2 692.7 1073.0 692.8 C1073.8 692.9 1075.6 693.3 1076.6 693.3 C1077.6 693.3 1079.2 692.6 1080.2 692.7 C1081.2 692.8 1082.8 693.8 1083.8 694.0 C1084.8 694.1 1086.4 693.7 1087.4 693.8 C1088.4 694.0 1090.0 695.0 1091.0 695.0 C1092.0 695.1 1093.6 694.2 1094.6 694.3 C1095.6 694.3 1097.2 695.4 1098.2 695.4 C1099.2 695.4 1100.8 694.3 1101.8 694.3 C1102.8 694.2 1104.4 694.9 1105.4 695.1 C1106.4 695.3 1108.0 695.5 1109.0 695.5 C1110.0 695.6 1111.6 695.7 1112.6 695.7 C1113.6 695.7 1115.2 695.3 1116.2 695.3 C1117.2 695.3 1118.8 695.2 1119.8 695.6 C1120.8 696.0 1122.4 697.7 1123.4 697.9 C1124.4 698.0 1126.0 696.8 1127.0 696.7 C1128.0 696.6 1129.6 696.9 1130.6 697.0 C1131.6 697.2 1133.3 697.6 1134.2 697.8 C1135.1 697.9 1136.5 698.0 1137.0 698.0 C1137.5 698.0 1137.2 698.0 1137.8 698.0 C1138.4 697.9 1140.4 697.6 1141.4 697.6 C1142.4 697.6 1144.0 697.8 1145.0 698.0 C1146.0 698.1 1147.6 698.6 1148.6 698.6 C1149.6 698.6 1151.2 697.7 1152.2 697.8 C1153.2 697.8 1154.8 698.6 1155.8 698.8 C1156.8 699.0 1158.4 699.0 1159.4 699.2 C1160.4 699.3 1162.0 699.6 1163.0 699.6 C1164.0 699.6 1165.6 699.0 1166.6 699.0 C1167.6 699.0 1169.2 699.6 1170.2 699.7 C1171.2 699.8 1172.8 699.7 1173.8 699.7 C1174.8 699.7 1176.4 699.3 1177.4 699.4 C1178.4 699.4 1180.0 700.1 1181.0 700.2 C1182.0 700.2 1183.6 699.4 1184.6 699.4 C1185.6 699.5 1187.2 700.4 1188.2 700.6 C1189.2 700.7 1190.8 700.6 1191.8 700.7 C1192.8 700.8 1194.4 701.4 1195.4 701.3 C1196.4 701.3 1198.0 700.4 1199.0 700.3 C1200.0 700.2 1201.6 700.5 1202.6 700.7 C1203.6 700.9 1205.2 701.5 1206.2 701.6 C1207.2 701.7 1208.8 701.7 1209.8 701.7 C1210.8 701.7 1212.4 701.7 1213.4 701.6 C1214.4 701.5 1216.0 701.2 1217.0 701.0 C1218.0 700.9 1219.6 700.5 1220.6 700.5 C1221.6 700.6 1223.2 701.5 1224.2 701.5 C1225.2 701.6 1226.8 700.8 1227.8 700.9 C1228.8 701.0 1230.4 701.9 1231.4 702.1 C1232.4 702.3 1234.0 702.0 1235.0 702.0 C1236.0 702.1 1237.9 702.2 1238.6 702.3 C1239.3 702.4 1239.5 702.3 1240.0 702.4 C1240.5 702.5 1241.4 702.9 1242.2 703.0 C1243.0 703.2 1244.8 703.2 1245.8 703.1 C1246.8 703.0 1248.4 702.4 1249.4 702.4 C1250.4 702.3 1252.0 702.9 1253.0 702.9 C1254.0 703.0 1255.6 702.4 1256.6 702.5 C1257.6 702.5 1259.2 703.6 1260.2 703.5 C1261.2 703.5 1262.8 702.1 1263.8 702.0 C1264.8 702.0 1266.4 703.3 1267.4 703.3 C1268.4 703.3 1270.0 702.3 1271.0 702.2 C1272.0 702.1 1273.6 702.7 1274.6 702.8 C1275.6 702.9 1277.2 703.2 1278.2 703.2 C1279.2 703.2 1280.8 702.8 1281.8 702.8 C1282.8 702.7 1284.4 702.9 1285.4 702.9 C1286.4 702.8 1288.0 702.6 1289.0 702.7 C1290.0 702.8 1291.6 703.6 1292.6 703.7 C1293.6 703.8 1295.2 703.2 1296.2 703.2 C1297.2 703.2 1298.8 703.8 1299.8 703.9 C1300.8 704.0 1302.4 703.7 1303.4 703.7 C1304.4 703.6 1306.0 703.6 1307.0 703.6 C1308.0 703.6 1309.6 703.6 1310.6 703.6 C1311.6 703.6 1313.2 703.3 1314.2 703.4 C1315.2 703.5 1316.8 704.1 1317.8 704.2 C1318.8 704.3 1320.4 704.1 1321.4 703.9 C1322.4 703.8 1324.0 703.2 1325.0 703.1 C1326.0 703.1 1327.6 703.5 1328.6 703.6 C1329.6 703.6 1331.2 703.2 1332.2 703.4 C1333.2 703.5 1334.8 704.6 1335.8 704.7 C1336.8 704.8 1338.4 704.1 1339.4 704.0 C1340.4 704.0 1342.0 704.4 1343.0 704.4 C1344.0 704.4 1345.6 704.1 1346.6 704.0 C1347.6 703.8 1349.2 703.3 1350.2 703.3 C1351.2 703.3 1352.8 704.0 1353.8 704.1 C1354.8 704.2 1356.4 703.7 1357.4 703.7 C1358.4 703.8 1360.0 704.4 1361.0 704.5 C1362.0 704.6 1363.6 704.6 1364.6 704.6 C1365.6 704.6 1367.2 704.5 1368.2 704.6 C1369.2 704.6 1370.8 704.8 1371.8 704.9 C1372.8 705.0 1374.4 705.1 1375.4 705.1 C1376.4 705.1 1378.0 704.9 1379.0 704.9 C1380.0 704.9 1381.6 704.9 1382.6 705.0 C1383.6 705.1 1385.2 705.7 1386.2 705.6 C1387.2 705.5 1388.8 704.6 1389.8 704.5 C1390.8 704.4 1392.4 704.7 1393.4 704.8 C1394.4 705.0 1396.1 705.7 1397.0 705.7 C1397.9 705.7 1399.5 705.1 1400.0 705.0 C1400.5 704.9 1400.0 705.2 1400.6 705.1 C1401.2 705.0 1403.2 704.4 1404.2 704.4 C1405.2 704.4 1406.8 704.8 1407.8 705.1 C1408.8 705.3 1410.4 706.1 1411.4 706.2 C1412.4 706.2 1414.0 705.7 1415.0 705.5 C1416.0 705.4 1417.6 705.2 1418.6 705.1 C1419.6 705.1 1421.2 705.2 1422.2 705.3 C1423.2 705.4 1424.8 705.5 1425.8 705.5 C1426.8 705.5 1428.4 705.2 1429.4 705.3 C1430.4 705.4 1432.0 706.1 1433.0 706.1 C1434.0 706.1 1435.6 705.1 1436.6 705.1 C1437.6 705.0 1439.2 705.8 1440.2 705.9 C1441.2 706.0 1442.8 705.7 1443.8 705.8 C1444.8 705.9 1446.4 706.5 1447.4 706.5 C1448.4 706.5 1450.0 705.9 1451.0 705.8 C1452.0 705.8 1453.6 706.1 1454.6 706.2 C1455.6 706.3 1457.2 706.3 1458.2 706.4 C1459.2 706.4 1460.8 706.4 1461.8 706.5 C1462.8 706.6 1464.4 706.8 1465.4 706.9 C1466.4 707.0 1468.0 707.3 1469.0 707.3 C1470.0 707.2 1471.6 706.7 1472.6 706.7 C1473.6 706.7 1475.2 707.3 1476.2 707.4 C1477.2 707.4 1478.8 706.9 1479.8 706.9 C1480.8 707.0 1482.4 707.8 1483.4 707.7 C1484.4 707.7 1486.0 706.8 1487.0 706.6 C1488.0 706.5 1489.6 706.8 1490.6 707.0 C1491.6 707.1 1493.2 707.7 1494.2 707.7 C1495.2 707.7 1496.8 707.0 1497.8 707.0 C1498.8 707.0 1500.4 707.7 1501.4 707.7 C1502.4 707.8 1504.0 707.6 1505.0 707.6 C1506.0 707.5 1507.6 707.3 1508.6 707.3 C1509.6 707.3 1511.2 707.7 1512.2 707.8 C1513.2 707.8 1514.8 707.8 1515.8 707.8 C1516.8 707.9 1518.5 708.0 1519.4 708.0 C1520.3 708.1 1521.6 708.0 1522.0 708.0" stroke="#ff2b2b"/><path d="M677.0 640.2 C677.5 639.9 679.6 638.8 680.6 638.2 C681.6 637.6 683.6 636.2 684.2 635.9 C684.8 635.5 684.5 636.0 685.0 636.0 C685.5 636.0 686.9 636.1 687.8 635.7 C688.7 635.4 690.4 634.0 691.4 633.4 C692.4 632.9 694.0 632.3 695.0 631.8 C696.0 631.2 697.9 629.9 698.6 629.7 C699.3 629.4 699.5 629.9 700.0 630.0 C700.5 630.1 701.4 630.2 702.2 630.3 C703.0 630.5 704.8 631.1 705.8 631.2 C706.8 631.2 708.4 630.7 709.4 630.7 C710.4 630.7 712.0 630.7 713.0 630.9 C714.0 631.1 715.6 631.9 716.6 631.9 C717.6 632.0 719.5 631.6 720.0 631.5 C720.2 631.4 720.0 631.4 720.2 631.5 C720.7 631.6 722.8 632.2 723.8 632.3 C724.8 632.4 726.4 632.0 727.4 632.0 C728.4 632.1 730.0 632.0 731.0 632.4 C732.0 632.7 733.6 634.1 734.6 634.3 C735.6 634.5 737.4 633.6 738.2 633.6 C739.0 633.6 739.5 633.8 740.0 634.0 C740.5 634.2 741.0 634.6 741.8 634.9 C742.6 635.1 744.4 635.7 745.4 635.7 C746.4 635.8 748.0 635.3 749.0 635.3 C750.0 635.3 751.6 635.9 752.6 636.0 C753.6 636.1 755.2 635.8 756.2 635.9 C757.2 636.0 758.8 636.7 759.8 636.9 C760.8 637.1 762.4 637.1 763.4 637.2 C764.4 637.4 766.0 637.8 767.0 638.0 C768.0 638.2 769.6 638.3 770.6 638.5 C771.6 638.8 773.2 639.4 774.2 639.6 C775.2 639.7 776.8 639.3 777.8 639.4 C778.8 639.5 780.4 640.1 781.4 640.3 C782.4 640.6 784.0 641.0 785.0 641.1 C786.0 641.2 787.6 641.1 788.6 641.2 C789.6 641.3 791.2 641.7 792.2 641.7 C793.2 641.7 794.8 641.1 795.8 641.2 C796.8 641.4 798.8 642.7 799.4 642.9 C800.0 643.1 799.5 642.6 800.0 642.5 C800.5 642.4 802.1 642.2 803.0 642.3 C803.9 642.3 805.6 642.5 806.6 642.7 C807.6 642.8 809.2 642.8 810.2 643.1 C811.2 643.4 812.8 644.5 813.8 644.8 C814.8 645.0 816.4 645.1 817.4 644.9 C818.4 644.7 820.0 643.5 821.0 643.6 C822.0 643.7 823.6 645.3 824.6 645.6 C825.6 645.9 827.2 645.4 828.2 645.5 C829.2 645.5 830.8 645.9 831.8 645.9 C832.8 645.8 834.4 645.1 835.4 645.1 C836.4 645.0 838.0 645.3 839.0 645.5 C840.0 645.7 841.6 646.7 842.6 646.7 C843.6 646.8 845.2 646.0 846.2 645.9 C847.2 645.8 849.3 645.9 849.8 646.0 C850.0 646.2 849.8 646.8 850.0 647.0 C850.5 647.2 852.4 647.4 853.4 647.4 C854.4 647.4 856.0 646.6 857.0 646.8 C858.0 646.9 859.6 648.2 860.6 648.2 C861.6 648.3 863.2 647.2 864.2 647.1 C865.2 647.0 866.8 647.1 867.8 647.3 C868.8 647.5 870.4 648.2 871.4 648.3 C872.4 648.4 874.0 648.0 875.0 648.2 C876.0 648.3 877.6 649.2 878.6 649.3 C879.6 649.4 881.2 648.8 882.2 648.8 C883.2 648.9 884.8 649.5 885.8 649.7 C886.8 649.9 888.4 650.3 889.4 650.3 C890.4 650.3 892.0 649.7 893.0 649.6 C894.0 649.5 895.6 649.5 896.6 649.6 C897.6 649.7 899.5 650.3 900.0 650.5 C900.2 650.7 900.0 650.6 900.2 650.7 C900.7 650.8 902.8 651.2 903.8 651.1 C904.8 651.0 906.4 650.1 907.4 650.0 C908.4 649.9 910.0 650.2 911.0 650.4 C912.0 650.6 913.6 651.3 914.6 651.4 C915.6 651.4 917.2 650.3 918.2 650.4 C919.2 650.6 920.8 651.9 921.8 652.2 C922.8 652.4 924.4 652.2 925.4 652.2 C926.4 652.3 928.0 652.5 929.0 652.6 C930.0 652.7 931.6 652.9 932.6 652.8 C933.6 652.7 935.2 651.8 936.2 651.8 C937.2 651.8 938.8 652.3 939.8 652.6 C940.8 652.9 942.4 653.6 943.4 653.7 C944.4 653.7 946.0 652.9 947.0 652.8 C948.0 652.8 949.6 653.5 950.6 653.6 C951.6 653.7 953.2 653.6 954.2 653.6 C955.2 653.7 957.0 653.8 957.8 653.8 C958.6 653.8 959.5 653.5 960.0 653.5 C960.5 653.5 960.7 653.7 961.4 653.7 C962.1 653.8 964.0 653.5 965.0 653.6 C966.0 653.7 967.6 654.8 968.6 654.7 C969.6 654.7 971.2 653.5 972.2 653.3 C973.2 653.2 974.8 653.6 975.8 653.8 C976.8 653.9 978.4 654.7 979.4 654.5 C980.4 654.4 982.0 653.0 983.0 652.9 C984.0 652.8 985.6 653.9 986.6 654.1 C987.6 654.4 989.2 654.9 990.2 654.7 C991.2 654.6 992.8 653.2 993.8 653.0 C994.8 652.9 996.4 653.8 997.4 654.0 C998.4 654.1 1000.0 654.0 1001.0 654.1 C1002.0 654.2 1003.6 654.8 1004.6 654.8 C1005.6 654.9 1007.2 654.8 1008.2 654.7 C1009.2 654.6 1010.8 654.4 1011.8 654.3 C1012.8 654.3 1014.4 654.2 1015.4 654.3 C1016.4 654.4 1018.0 655.1 1019.0 655.1 C1020.0 655.2 1021.6 654.7 1022.6 654.4 C1023.6 654.1 1025.2 653.3 1026.2 653.3 C1027.2 653.3 1028.8 654.3 1029.8 654.6 C1030.8 654.9 1032.4 655.2 1033.4 655.1 C1034.4 655.0 1036.0 654.0 1037.0 654.0 C1038.0 654.0 1039.6 654.9 1040.6 655.0 C1041.6 655.1 1043.2 654.6 1044.2 654.5 C1045.2 654.5 1046.8 654.6 1047.8 654.6 C1048.8 654.7 1050.4 654.7 1051.4 654.7 C1052.4 654.8 1054.0 655.0 1055.0 655.0 C1056.0 655.0 1057.6 654.6 1058.6 654.6 C1059.6 654.6 1061.2 655.0 1062.2 655.0 C1063.2 655.1 1064.8 654.6 1065.8 654.7 C1066.8 654.8 1068.4 655.4 1069.4 655.5 C1070.4 655.6 1072.0 655.5 1073.0 655.5 C1074.0 655.4 1075.6 655.0 1076.6 655.0 C1077.6 655.0 1079.2 655.2 1080.2 655.3 C1081.2 655.4 1082.8 655.4 1083.8 655.4 C1084.8 655.5 1086.4 655.6 1087.4 655.6 C1088.4 655.6 1090.0 655.6 1091.0 655.4 C1092.0 655.3 1093.6 654.6 1094.6 654.6 C1095.6 654.6 1097.4 655.1 1098.2 655.3 C1099.0 655.4 1099.5 655.4 1100.0 655.5 C1100.5 655.6 1101.0 656.1 1101.8 656.1 C1102.6 656.0 1104.4 655.3 1105.4 655.2 C1106.4 655.2 1108.0 655.4 1109.0 655.5 C1110.0 655.6 1111.6 656.0 1112.6 655.9 C1113.6 655.9 1115.2 655.2 1116.2 655.2 C1117.2 655.2 1118.8 655.8 1119.8 655.9 C1120.8 656.0 1122.4 655.9 1123.4 656.0 C1124.4 656.1 1126.0 656.6 1127.0 656.6 C1128.0 656.7 1129.6 656.3 1130.6 656.3 C1131.6 656.2 1133.2 656.2 1134.2 656.3 C1135.2 656.3 1136.8 656.5 1137.8 656.5 C1138.8 656.5 1140.4 656.3 1141.4 656.3 C1142.4 656.3 1144.0 656.7 1145.0 656.6 C1146.0 656.5 1147.6 655.7 1148.6 655.7 C1149.6 655.7 1151.2 656.4 1152.2 656.4 C1153.2 656.5 1154.8 656.2 1155.8 656.1 C1156.8 655.9 1158.4 655.4 1159.4 655.4 C1160.4 655.5 1162.0 656.2 1163.0 656.4 C1164.0 656.6 1165.6 656.8 1166.6 656.8 C1167.6 656.8 1169.2 656.5 1170.2 656.4 C1171.2 656.3 1172.8 656.1 1173.8 656.2 C1174.8 656.3 1176.4 657.0 1177.4 657.0 C1178.4 657.0 1180.0 656.6 1181.0 656.5 C1182.0 656.4 1183.6 656.4 1184.6 656.3 C1185.6 656.1 1187.2 655.4 1188.2 655.6 C1189.2 655.8 1190.8 657.5 1191.8 657.7 C1192.8 658.0 1194.4 657.7 1195.4 657.6 C1196.4 657.5 1198.0 657.1 1199.0 657.0 C1200.0 657.0 1201.6 657.0 1202.6 657.1 C1203.6 657.1 1205.2 657.5 1206.2 657.6 C1207.2 657.8 1208.8 658.1 1209.8 657.9 C1210.8 657.8 1212.4 656.9 1213.4 656.8 C1214.4 656.8 1216.0 657.5 1217.0 657.7 C1218.0 657.8 1219.6 657.8 1220.6 657.8 C1221.6 657.7 1223.2 657.6 1224.2 657.6 C1225.2 657.5 1226.8 657.3 1227.8 657.3 C1228.8 657.4 1230.4 658.2 1231.4 658.1 C1232.4 658.0 1234.0 657.0 1235.0 656.9 C1236.0 656.8 1237.9 657.3 1238.6 657.4 C1239.3 657.5 1239.5 657.3 1240.0 657.5 C1240.5 657.7 1241.4 658.6 1242.2 658.6 C1243.0 658.6 1244.8 657.4 1245.8 657.3 C1246.8 657.2 1248.4 657.7 1249.4 657.7 C1250.4 657.6 1252.0 656.9 1253.0 656.9 C1254.0 656.8 1255.6 657.1 1256.6 657.3 C1257.6 657.4 1259.2 657.9 1260.2 658.0 C1261.2 658.1 1262.8 658.1 1263.8 658.0 C1264.8 657.9 1266.4 657.4 1267.4 657.4 C1268.4 657.3 1270.0 657.5 1271.0 657.7 C1272.0 657.9 1273.6 658.8 1274.6 658.8 C1275.6 658.8 1277.2 657.9 1278.2 657.6 C1279.2 657.3 1280.8 656.9 1281.8 656.9 C1282.8 657.0 1284.4 657.7 1285.4 657.9 C1286.4 658.2 1288.0 658.7 1289.0 658.6 C1290.0 658.4 1291.6 657.1 1292.6 657.0 C1293.6 657.0 1295.2 658.0 1296.2 658.1 C1297.2 658.2 1298.8 657.8 1299.8 657.8 C1300.8 657.8 1302.4 658.1 1303.4 658.1 C1304.4 658.2 1306.0 658.2 1307.0 658.1 C1308.0 658.0 1309.6 657.7 1310.6 657.5 C1311.6 657.3 1313.2 656.9 1314.2 656.8 C1315.2 656.8 1316.8 657.1 1317.8 657.2 C1318.8 657.4 1320.4 657.9 1321.4 658.0 C1322.4 658.1 1324.0 658.1 1325.0 658.2 C1326.0 658.2 1327.6 658.4 1328.6 658.5 C1329.6 658.6 1331.2 658.7 1332.2 658.7 C1333.2 658.8 1334.8 658.8 1335.8 658.7 C1336.8 658.7 1338.4 658.4 1339.4 658.3 C1340.4 658.3 1342.0 658.5 1343.0 658.4 C1344.0 658.3 1345.6 657.6 1346.6 657.7 C1347.6 657.7 1349.2 658.5 1350.2 658.5 C1351.2 658.4 1352.8 657.2 1353.8 657.2 C1354.8 657.2 1356.4 658.1 1357.4 658.3 C1358.4 658.4 1360.0 658.2 1361.0 658.2 C1362.0 658.2 1363.6 658.4 1364.6 658.4 C1365.6 658.4 1367.2 658.0 1368.2 658.0 C1369.2 657.9 1370.8 658.1 1371.8 658.1 C1372.8 658.1 1374.4 658.3 1375.4 658.2 C1376.4 658.1 1378.0 657.3 1379.0 657.4 C1380.0 657.5 1381.6 659.0 1382.6 659.1 C1383.6 659.2 1385.2 658.1 1386.2 658.0 C1387.2 657.9 1388.8 658.5 1389.8 658.5 C1390.8 658.6 1392.4 658.2 1393.4 658.3 C1394.4 658.4 1396.0 659.0 1397.0 659.2 C1398.0 659.3 1399.6 659.5 1400.6 659.4 C1401.6 659.3 1403.2 658.7 1404.2 658.6 C1405.2 658.6 1406.8 659.0 1407.8 658.9 C1408.8 658.8 1410.4 658.1 1411.4 658.1 C1412.4 658.1 1414.0 658.5 1415.0 658.7 C1416.0 658.8 1417.6 659.2 1418.6 659.1 C1419.6 659.0 1421.2 658.1 1422.2 658.0 C1423.2 657.9 1424.8 658.2 1425.8 658.4 C1426.8 658.5 1428.4 659.1 1429.4 659.1 C1430.4 659.2 1432.0 658.9 1433.0 658.8 C1434.0 658.7 1435.6 658.4 1436.6 658.5 C1437.6 658.6 1439.2 659.3 1440.2 659.4 C1441.2 659.6 1442.8 659.6 1443.8 659.5 C1444.8 659.5 1446.4 659.1 1447.4 659.0 C1448.4 658.9 1450.0 658.8 1451.0 658.8 C1452.0 658.8 1453.6 659.1 1454.6 659.1 C1455.6 659.0 1457.2 658.5 1458.2 658.4 C1459.2 658.4 1460.8 658.7 1461.8 658.7 C1462.8 658.7 1464.4 658.6 1465.4 658.5 C1466.4 658.4 1468.0 657.7 1469.0 657.8 C1470.0 658.0 1471.6 659.5 1472.6 659.6 C1473.6 659.7 1475.2 658.5 1476.2 658.5 C1477.2 658.6 1478.8 659.8 1479.8 659.7 C1480.8 659.7 1482.4 658.3 1483.4 658.2 C1484.4 658.2 1486.0 659.3 1487.0 659.4 C1488.0 659.4 1489.6 658.5 1490.6 658.4 C1491.6 658.3 1493.2 658.6 1494.2 658.6 C1495.2 658.6 1496.8 658.3 1497.8 658.4 C1498.8 658.5 1500.4 659.0 1501.4 659.2 C1502.4 659.4 1504.0 659.7 1505.0 659.6 C1506.0 659.5 1507.6 658.7 1508.6 658.6 C1509.6 658.4 1511.2 658.4 1512.2 658.5 C1513.2 658.6 1514.8 659.3 1515.8 659.4 C1516.8 659.6 1518.5 659.8 1519.4 659.7 C1520.3 659.7 1521.6 659.1 1522.0 659.0" stroke="#ffabab"/><path d="M677.0 630.4 C677.5 630.7 679.8 631.9 680.6 632.1 C681.5 632.3 682.5 632.0 683.0 632.0 C683.5 632.0 683.5 632.6 684.2 632.2 C684.9 631.8 686.8 629.6 687.8 629.1 C688.8 628.6 690.4 629.1 691.4 628.8 C692.4 628.4 694.0 627.0 695.0 626.4 C696.0 625.7 697.9 624.7 698.6 624.3 C699.3 624.0 699.5 624.1 700.0 624.0 C700.5 623.9 701.4 624.1 702.2 623.9 C703.0 623.7 704.8 622.6 705.8 622.5 C706.8 622.4 708.4 623.3 709.4 623.3 C710.4 623.3 712.0 622.8 713.0 622.6 C714.0 622.5 715.6 622.3 716.6 622.3 C717.6 622.2 719.5 622.1 720.0 622.0 C720.2 621.9 720.0 621.7 720.2 621.7 C720.7 621.7 722.8 622.0 723.8 622.0 C724.8 622.0 726.4 621.5 727.4 621.7 C728.4 621.9 730.0 623.4 731.0 623.6 C732.0 623.8 733.6 623.1 734.6 623.0 C735.6 623.0 737.2 623.1 738.2 623.2 C739.2 623.2 740.8 623.1 741.8 623.3 C742.8 623.4 744.4 624.0 745.4 624.1 C746.4 624.1 748.0 623.8 749.0 623.7 C750.0 623.5 751.6 623.2 752.6 623.1 C753.6 622.9 755.2 622.7 756.2 622.9 C757.2 623.0 759.3 623.7 759.8 623.9 C760.0 624.0 759.8 624.0 760.0 624.0 C760.5 624.0 762.4 623.8 763.4 623.8 C764.4 623.7 766.0 623.7 767.0 623.9 C768.0 624.0 769.6 624.7 770.6 624.8 C771.6 624.8 773.2 624.4 774.2 624.3 C775.2 624.3 776.8 624.4 777.8 624.4 C778.8 624.5 780.4 624.7 781.4 624.9 C782.4 625.0 784.0 625.7 785.0 625.7 C786.0 625.7 787.6 625.0 788.6 624.9 C789.6 624.8 791.2 625.3 792.2 625.2 C793.2 625.1 794.8 624.2 795.8 624.3 C796.8 624.4 798.8 625.6 799.4 625.7 C800.0 625.9 799.5 625.6 800.0 625.6 C800.5 625.6 802.1 625.4 803.0 625.5 C803.9 625.6 805.6 626.6 806.6 626.5 C807.6 626.5 809.2 625.2 810.2 625.0 C811.2 624.9 812.8 625.7 813.8 625.7 C814.8 625.7 816.4 625.0 817.4 625.1 C818.4 625.1 820.0 626.0 821.0 626.0 C822.0 626.0 823.6 625.3 824.6 625.1 C825.6 624.9 827.4 624.4 828.2 624.4 C829.0 624.3 829.5 624.8 830.0 625.0 C830.5 625.2 831.0 625.5 831.8 625.5 C832.6 625.4 834.4 625.0 835.4 624.8 C836.4 624.6 838.0 624.2 839.0 623.9 C840.0 623.7 841.6 623.3 842.6 623.1 C843.6 622.9 845.2 622.4 846.2 622.5 C847.2 622.6 848.8 623.9 849.8 623.8 C850.8 623.7 852.4 621.8 853.4 621.7 C854.4 621.6 856.1 622.9 857.0 622.9 C857.9 623.0 859.5 622.2 860.0 622.0 C860.5 621.8 860.0 621.5 860.6 621.5 C861.2 621.5 863.2 622.0 864.2 621.9 C865.2 621.8 866.8 620.9 867.8 620.7 C868.8 620.5 870.4 620.5 871.4 620.3 C872.4 620.0 874.0 619.3 875.0 619.2 C876.0 619.0 877.9 619.2 878.6 619.2 C879.3 619.1 879.5 619.0 880.0 619.0 C880.5 619.0 881.4 619.5 882.2 619.5 C883.0 619.4 884.8 618.9 885.8 618.6 C886.8 618.2 888.4 617.2 889.4 616.9 C890.4 616.7 892.0 617.0 893.0 616.9 C894.0 616.8 895.6 616.2 896.6 616.0 C897.6 615.9 899.5 615.7 900.0 615.8 C900.2 615.9 900.0 616.9 900.2 616.7 C900.7 616.5 902.8 614.9 903.8 614.3 C904.8 613.6 906.4 612.7 907.4 612.1 C908.4 611.4 910.0 610.2 911.0 609.6 C912.0 608.9 913.6 607.8 914.6 607.4 C915.6 606.9 917.4 606.7 918.2 606.4 C919.0 606.1 919.5 605.3 920.0 605.0 C920.5 604.7 921.0 605.1 921.8 604.5 C922.6 604.0 924.4 602.2 925.4 601.3 C926.4 600.4 928.0 598.9 929.0 598.4 C930.0 597.9 931.6 598.1 932.6 597.6 C933.6 597.1 935.2 595.3 936.2 594.6 C937.2 594.0 939.3 593.1 939.8 592.7 C940.0 592.3 939.8 592.3 940.0 592.0 C940.5 591.7 942.4 591.0 943.4 590.4 C944.4 589.8 946.0 588.5 947.0 587.7 C948.0 587.0 949.6 585.7 950.6 585.1 C951.6 584.6 953.2 584.3 954.2 583.7 C955.2 583.2 957.0 581.8 957.8 581.3 C958.6 580.7 959.5 579.9 960.0 579.6 C960.5 579.3 960.7 579.5 961.4 578.9 C962.1 578.4 964.0 576.4 965.0 575.7 C966.0 574.9 967.6 574.2 968.6 573.7 C969.6 573.1 971.2 572.2 972.2 571.6 C973.2 571.0 974.8 570.1 975.8 569.4 C976.8 568.6 978.8 566.9 979.4 566.4 C980.0 565.9 979.5 566.2 980.0 566.0 C980.5 565.8 982.1 565.4 983.0 564.9 C983.9 564.4 985.6 563.0 986.6 562.3 C987.6 561.6 989.5 560.2 990.0 560.0 C990.2 559.8 990.0 560.6 990.2 560.6 C990.7 560.5 992.8 560.1 993.8 559.7 C994.8 559.2 996.4 557.8 997.4 557.2 C998.4 556.7 1000.0 556.1 1001.0 555.8 C1002.0 555.4 1003.6 555.2 1004.6 554.9 C1005.6 554.6 1007.2 554.0 1008.2 553.5 C1009.2 553.0 1010.8 551.9 1011.8 551.5 C1012.8 551.1 1014.4 551.0 1015.4 550.7 C1016.4 550.3 1018.0 549.3 1019.0 548.9 C1020.0 548.6 1021.6 548.3 1022.6 547.9 C1023.6 547.6 1025.5 546.9 1026.2 546.5 C1026.9 546.2 1027.2 545.9 1027.7 545.5 C1028.2 545.1 1029.0 544.0 1029.8 543.7 C1030.6 543.4 1032.4 543.7 1033.4 543.5 C1034.4 543.2 1036.0 542.3 1037.0 541.9 C1038.0 541.4 1039.6 540.7 1040.6 540.3 C1041.6 539.8 1043.2 539.4 1044.2 538.9 C1045.2 538.5 1046.8 537.4 1047.8 537.0 C1048.8 536.6 1050.4 536.4 1051.4 536.0 C1052.4 535.6 1054.0 534.6 1055.0 534.3 C1056.0 534.0 1057.6 533.9 1058.6 533.7 C1059.6 533.5 1061.2 533.1 1062.2 532.8 C1063.2 532.4 1064.8 531.9 1065.8 531.3 C1066.8 530.8 1068.6 529.4 1069.4 529.1 C1070.2 528.8 1071.1 529.1 1071.6 529.0 C1072.1 528.9 1072.3 528.4 1073.0 528.2 C1073.7 527.9 1075.6 527.6 1076.6 527.3 C1077.6 526.9 1079.2 525.8 1080.2 525.4 C1081.2 525.0 1082.8 524.8 1083.8 524.5 C1084.8 524.3 1086.4 523.7 1087.4 523.5 C1088.4 523.3 1090.0 523.4 1091.0 523.1 C1092.0 522.8 1093.6 521.9 1094.6 521.5 C1095.6 521.2 1097.2 521.1 1098.2 520.6 C1099.2 520.1 1100.8 518.6 1101.8 518.3 C1102.8 517.9 1104.4 517.9 1105.4 517.8 C1106.4 517.7 1108.0 517.9 1109.0 517.5 C1110.0 517.2 1111.6 515.7 1112.6 515.2 C1113.6 514.6 1115.2 514.3 1116.2 513.9 C1117.2 513.5 1118.8 512.8 1119.8 512.4 C1120.8 512.0 1122.4 511.5 1123.4 511.3 C1124.4 511.1 1126.0 511.3 1127.0 511.0 C1128.0 510.7 1129.6 509.4 1130.6 508.9 C1131.6 508.4 1133.3 507.6 1134.2 507.4 C1135.1 507.1 1136.5 507.0 1137.0 507.0 C1137.5 507.0 1137.2 507.2 1137.8 507.2 C1138.4 507.2 1140.4 507.2 1141.4 506.8 C1142.4 506.5 1144.0 505.0 1145.0 504.6 C1146.0 504.3 1147.6 504.7 1148.6 504.4 C1149.6 504.1 1151.2 502.8 1152.2 502.5 C1153.2 502.3 1154.8 502.7 1155.8 502.4 C1156.8 502.2 1158.4 501.0 1159.4 500.6 C1160.4 500.2 1162.0 499.9 1163.0 499.6 C1164.0 499.3 1165.6 498.7 1166.6 498.6 C1167.6 498.5 1169.2 499.0 1170.2 498.7 C1171.2 498.4 1172.8 496.8 1173.8 496.4 C1174.8 496.1 1176.4 496.4 1177.4 496.2 C1178.4 496.0 1180.0 495.4 1181.0 495.0 C1182.0 494.7 1183.6 493.8 1184.6 493.7 C1185.6 493.6 1187.2 494.2 1188.2 494.1 C1189.2 494.1 1190.8 493.4 1191.8 493.3 C1192.8 493.1 1194.4 493.1 1195.4 492.9 C1196.4 492.6 1198.0 492.0 1199.0 491.8 C1200.0 491.6 1201.6 491.6 1202.6 491.4 C1203.6 491.2 1205.2 490.8 1206.2 490.6 C1207.2 490.4 1208.8 490.1 1209.8 489.9 C1210.8 489.7 1212.4 489.4 1213.4 489.3 C1214.4 489.2 1216.0 489.6 1217.0 489.3 C1218.0 489.0 1219.6 487.6 1220.6 487.4 C1221.6 487.3 1223.2 488.1 1224.2 488.1 C1225.2 488.1 1226.8 487.9 1227.8 487.6 C1228.8 487.3 1230.4 486.5 1231.4 486.2 C1232.4 486.0 1234.0 485.9 1235.0 485.9 C1236.0 485.8 1237.9 485.8 1238.6 485.6 C1239.3 485.5 1239.5 485.1 1240.0 485.0 C1240.5 484.9 1241.4 485.3 1242.2 485.1 C1243.0 485.0 1244.8 484.1 1245.8 483.8 C1246.8 483.6 1248.4 483.7 1249.4 483.6 C1250.4 483.5 1252.0 483.3 1253.0 483.1 C1254.0 483.0 1255.6 482.5 1256.6 482.3 C1257.6 482.2 1259.2 482.2 1260.2 482.0 C1261.2 481.9 1262.8 481.6 1263.8 481.4 C1264.8 481.2 1266.4 481.0 1267.4 480.8 C1268.4 480.7 1270.0 480.4 1271.0 480.2 C1272.0 480.0 1273.6 479.7 1274.6 479.5 C1275.6 479.2 1277.2 478.9 1278.2 478.8 C1279.2 478.6 1280.8 478.5 1281.8 478.4 C1282.8 478.3 1284.4 478.1 1285.4 478.0 C1286.4 478.0 1288.0 478.2 1289.0 478.0 C1290.0 477.8 1291.6 476.6 1292.6 476.6 C1293.6 476.5 1295.2 477.7 1296.2 477.5 C1297.2 477.3 1298.8 475.8 1299.8 475.5 C1300.8 475.2 1302.4 475.3 1303.4 475.3 C1304.4 475.3 1306.0 475.6 1307.0 475.4 C1308.0 475.2 1309.6 474.1 1310.6 473.9 C1311.6 473.7 1313.2 473.9 1314.2 473.8 C1315.2 473.7 1317.2 473.2 1317.7 473.0 C1317.8 472.8 1317.7 472.8 1317.8 472.7 C1318.3 472.6 1320.4 472.2 1321.4 472.0 C1322.4 471.9 1324.0 471.9 1325.0 471.7 C1326.0 471.6 1327.6 471.3 1328.6 471.1 C1329.6 470.8 1331.2 470.2 1332.2 470.2 C1333.2 470.2 1334.8 471.2 1335.8 471.2 C1336.8 471.2 1338.4 470.6 1339.4 470.4 C1340.4 470.2 1342.0 469.7 1343.0 469.6 C1344.0 469.5 1345.6 469.6 1346.6 469.6 C1347.6 469.6 1349.2 469.6 1350.2 469.4 C1351.2 469.2 1352.8 468.5 1353.8 468.3 C1354.8 468.1 1356.4 467.9 1357.4 467.9 C1358.4 467.9 1360.0 468.3 1361.0 468.2 C1362.0 468.2 1363.6 467.7 1364.6 467.5 C1365.6 467.3 1367.2 466.8 1368.2 466.6 C1369.2 466.5 1370.8 466.6 1371.8 466.4 C1372.8 466.3 1374.4 465.8 1375.4 465.6 C1376.4 465.4 1378.0 465.2 1379.0 465.1 C1380.0 465.0 1382.0 465.0 1382.6 465.0 C1383.2 465.0 1383.0 465.0 1383.5 465.0 C1384.0 465.0 1385.3 465.3 1386.2 465.2 C1387.1 465.1 1388.8 464.4 1389.8 464.1 C1390.8 463.8 1392.4 463.2 1393.4 463.1 C1394.4 463.1 1396.0 463.5 1397.0 463.6 C1398.0 463.7 1399.6 463.9 1400.6 463.9 C1401.6 463.8 1403.2 463.4 1404.2 463.2 C1405.2 463.0 1406.8 462.7 1407.8 462.5 C1408.8 462.2 1410.4 461.4 1411.4 461.5 C1412.4 461.5 1414.0 462.9 1415.0 462.9 C1416.0 462.8 1417.6 461.1 1418.6 461.0 C1419.6 460.9 1421.2 462.2 1422.2 462.2 C1423.2 462.2 1425.1 461.2 1425.8 461.1 C1426.5 460.9 1426.5 461.0 1427.0 461.0 C1427.5 461.0 1428.6 460.9 1429.4 460.8 C1430.2 460.7 1432.0 460.1 1433.0 460.0 C1434.0 459.9 1435.6 460.3 1436.6 460.2 C1437.6 460.1 1439.2 459.4 1440.2 459.4 C1441.2 459.4 1442.8 460.3 1443.8 460.3 C1444.8 460.3 1446.4 459.8 1447.4 459.7 C1448.4 459.6 1450.0 459.7 1451.0 459.6 C1452.0 459.5 1453.6 459.2 1454.6 459.1 C1455.6 459.0 1457.4 458.9 1458.2 458.8 C1459.0 458.7 1459.5 458.7 1460.0 458.5 C1460.5 458.3 1461.0 457.5 1461.8 457.4 C1462.6 457.2 1464.4 457.1 1465.4 457.3 C1466.4 457.4 1468.0 458.4 1469.0 458.4 C1470.0 458.5 1471.6 457.6 1472.6 457.5 C1473.6 457.4 1475.2 458.0 1476.2 458.0 C1477.2 458.0 1478.8 457.6 1479.8 457.4 C1480.8 457.2 1482.4 456.8 1483.4 456.7 C1484.4 456.5 1486.0 456.2 1487.0 456.2 C1488.0 456.1 1489.6 456.4 1490.6 456.5 C1491.6 456.5 1493.2 456.7 1494.2 456.6 C1495.2 456.5 1496.8 456.0 1497.8 455.8 C1498.8 455.6 1500.4 455.5 1501.4 455.5 C1502.4 455.5 1504.0 455.6 1505.0 455.6 C1506.0 455.6 1507.6 455.7 1508.6 455.7 C1509.6 455.7 1511.2 455.9 1512.2 455.9 C1513.2 455.9 1514.8 455.8 1515.8 455.8 C1516.8 455.7 1518.5 455.8 1519.4 455.6 C1520.3 455.5 1521.6 454.9 1522.0 454.7" stroke="#29b09d"/><path d="M677.0 628.7 C677.5 628.8 679.8 628.7 680.6 628.9 C681.5 629.1 682.5 630.0 683.0 630.0 C683.5 630.0 683.5 629.3 684.2 628.9 C684.9 628.5 686.8 628.0 687.8 627.5 C688.8 626.9 690.4 625.9 691.4 625.2 C692.4 624.6 694.0 623.6 695.0 623.0 C696.0 622.4 697.9 621.4 698.6 621.0 C699.3 620.6 699.5 620.1 700.0 620.0 C700.5 619.9 701.4 620.2 702.2 620.1 C703.0 620.0 704.8 619.4 705.8 619.3 C706.8 619.2 708.4 619.3 709.4 619.4 C710.4 619.4 712.0 619.7 713.0 619.6 C714.0 619.6 715.6 619.1 716.6 619.0 C717.6 618.8 719.5 618.6 720.0 618.5 C720.2 618.4 720.0 618.3 720.2 618.4 C720.7 618.4 722.8 619.0 723.8 618.9 C724.8 618.9 726.4 617.9 727.4 617.9 C728.4 617.9 730.0 618.6 731.0 618.8 C732.0 619.1 733.6 619.7 734.6 619.7 C735.6 619.7 737.2 619.0 738.2 619.0 C739.2 619.0 740.8 619.5 741.8 619.7 C742.8 619.8 744.4 619.9 745.4 620.0 C746.4 620.0 748.0 619.9 749.0 620.0 C750.0 620.1 751.6 620.8 752.6 620.7 C753.6 620.5 755.2 619.2 756.2 619.1 C757.2 619.0 759.3 619.8 759.8 619.9 C760.0 620.0 759.8 620.0 760.0 620.0 C760.5 620.0 762.4 619.6 763.4 619.7 C764.4 619.8 766.0 620.6 767.0 620.7 C768.0 620.7 769.6 620.1 770.6 620.0 C771.6 619.9 773.2 619.8 774.2 619.8 C775.2 619.8 776.8 619.9 777.8 620.0 C778.8 620.1 780.4 620.6 781.4 620.6 C782.4 620.7 784.0 620.3 785.0 620.3 C786.0 620.3 787.6 620.4 788.6 620.5 C789.6 620.6 791.2 621.0 792.2 621.1 C793.2 621.1 794.8 620.9 795.8 620.8 C796.8 620.8 798.8 620.7 799.4 620.7 C800.0 620.7 799.5 620.9 800.0 621.0 C800.5 621.1 802.1 621.2 803.0 621.1 C803.9 621.0 805.6 620.3 806.6 620.3 C807.6 620.2 809.2 620.9 810.2 621.0 C811.2 621.1 812.8 620.9 813.8 621.0 C814.8 621.1 816.4 621.7 817.4 621.8 C818.4 621.8 820.0 621.4 821.0 621.3 C822.0 621.2 823.6 621.0 824.6 620.9 C825.6 620.9 827.4 621.0 828.2 620.9 C829.0 620.8 829.5 620.6 830.0 620.5 C830.5 620.4 831.0 620.7 831.8 620.5 C832.6 620.3 834.4 619.4 835.4 619.3 C836.4 619.1 838.0 619.5 839.0 619.5 C840.0 619.5 841.6 619.6 842.6 619.4 C843.6 619.1 845.2 617.9 846.2 617.6 C847.2 617.4 848.8 617.9 849.8 617.8 C850.8 617.8 852.4 617.3 853.4 617.3 C854.4 617.3 856.1 617.8 857.0 617.8 C857.9 617.8 859.5 617.2 860.0 617.0 C860.5 616.8 860.0 616.5 860.6 616.5 C861.2 616.4 863.2 616.9 864.2 616.7 C865.2 616.6 866.8 615.5 867.8 615.1 C868.8 614.8 870.4 614.5 871.4 614.3 C872.4 614.1 874.0 613.7 875.0 613.6 C876.0 613.5 877.9 613.5 878.6 613.4 C879.3 613.3 879.5 613.0 880.0 613.0 C880.5 613.0 881.4 613.4 882.2 613.3 C883.0 613.2 884.8 612.5 885.8 612.2 C886.8 611.9 888.4 611.3 889.4 611.0 C890.4 610.8 892.0 610.3 893.0 610.3 C894.0 610.2 895.6 610.7 896.6 610.6 C897.6 610.4 899.5 609.4 900.0 609.0 C900.2 608.6 900.0 608.4 900.2 608.1 C900.7 607.7 902.8 606.9 903.8 606.5 C904.8 606.1 906.4 605.5 907.4 605.1 C908.4 604.6 910.0 603.7 911.0 603.3 C912.0 602.9 913.6 602.6 914.6 602.1 C915.6 601.6 917.4 600.2 918.2 599.8 C919.0 599.4 919.5 599.2 920.0 599.0 C920.5 598.8 921.0 598.6 921.8 598.2 C922.6 597.8 924.4 596.6 925.4 596.1 C926.4 595.6 928.0 595.3 929.0 594.8 C930.0 594.2 931.6 592.8 932.6 592.0 C933.6 591.3 935.2 590.0 936.2 589.4 C937.2 588.9 939.3 588.0 939.8 587.8 C940.0 587.6 939.8 588.3 940.0 588.0 C940.5 587.7 942.4 586.3 943.4 585.7 C944.4 585.0 946.0 584.1 947.0 583.5 C948.0 582.9 949.6 581.8 950.6 581.3 C951.6 580.8 953.2 580.4 954.2 579.9 C955.2 579.4 957.0 578.3 957.8 577.7 C958.6 577.2 959.5 576.4 960.0 576.0 C960.5 575.6 960.7 575.6 961.4 575.0 C962.1 574.5 964.0 572.9 965.0 572.4 C966.0 571.9 967.6 571.9 968.6 571.4 C969.6 570.8 971.2 569.2 972.2 568.5 C973.2 567.8 974.8 567.0 975.8 566.3 C976.8 565.6 978.8 564.0 979.4 563.5 C980.0 563.0 979.5 563.2 980.0 563.0 C980.5 562.8 982.1 562.5 983.0 562.1 C983.9 561.7 985.6 560.8 986.6 560.3 C987.6 559.8 989.5 558.8 990.0 558.5 C990.2 558.2 990.0 558.6 990.2 558.4 C990.7 558.2 992.8 557.3 993.8 556.9 C994.8 556.6 996.4 556.4 997.4 556.1 C998.4 555.7 1000.0 554.8 1001.0 554.4 C1002.0 554.0 1003.6 553.6 1004.6 553.2 C1005.6 552.9 1007.2 552.6 1008.2 552.2 C1009.2 551.8 1010.8 550.8 1011.8 550.3 C1012.8 549.9 1014.4 549.3 1015.4 549.0 C1016.4 548.6 1018.0 548.4 1019.0 547.9 C1020.0 547.4 1021.6 545.9 1022.6 545.4 C1023.6 544.9 1025.5 544.5 1026.2 544.4 C1026.9 544.2 1027.2 544.5 1027.7 544.5 C1028.2 544.5 1029.0 544.8 1029.8 544.6 C1030.6 544.4 1032.4 543.7 1033.4 543.1 C1034.4 542.5 1036.0 540.8 1037.0 540.3 C1038.0 539.8 1039.6 539.7 1040.6 539.5 C1041.6 539.2 1043.2 538.7 1044.2 538.3 C1045.2 537.9 1046.8 536.9 1047.8 536.4 C1048.8 536.0 1050.4 535.5 1051.4 535.1 C1052.4 534.7 1054.0 534.1 1055.0 533.7 C1056.0 533.3 1057.6 532.6 1058.6 532.2 C1059.6 531.8 1061.2 531.5 1062.2 531.2 C1063.2 530.8 1064.8 530.1 1065.8 529.7 C1066.8 529.3 1068.6 528.8 1069.4 528.6 C1070.2 528.3 1071.1 528.1 1071.6 528.0 C1072.1 527.9 1072.3 528.3 1073.0 527.9 C1073.7 527.6 1075.6 526.1 1076.6 525.7 C1077.6 525.3 1079.2 525.1 1080.2 524.9 C1081.2 524.7 1082.8 524.8 1083.8 524.4 C1084.8 524.0 1086.4 522.6 1087.4 522.2 C1088.4 521.7 1090.0 521.5 1091.0 521.3 C1092.0 521.2 1093.6 521.1 1094.6 520.8 C1095.6 520.6 1097.2 519.8 1098.2 519.4 C1099.2 519.1 1100.8 518.8 1101.8 518.4 C1102.8 518.1 1104.4 517.3 1105.4 517.0 C1106.4 516.7 1108.0 516.8 1109.0 516.4 C1110.0 516.0 1111.6 514.7 1112.6 514.1 C1113.6 513.6 1115.2 512.9 1116.2 512.5 C1117.2 512.2 1118.8 512.0 1119.8 511.8 C1120.8 511.5 1122.4 511.0 1123.4 510.6 C1124.4 510.2 1126.0 509.4 1127.0 509.0 C1128.0 508.6 1129.6 508.2 1130.6 507.9 C1131.6 507.7 1133.3 507.5 1134.2 507.2 C1135.1 507.0 1136.5 506.4 1137.0 506.3 C1137.5 506.2 1137.2 506.9 1137.8 506.7 C1138.4 506.5 1140.4 505.1 1141.4 504.8 C1142.4 504.6 1144.0 505.1 1145.0 504.8 C1146.0 504.6 1147.6 503.4 1148.6 502.9 C1149.6 502.4 1151.2 501.5 1152.2 501.2 C1153.2 501.0 1154.8 501.2 1155.8 501.2 C1156.8 501.2 1158.4 501.2 1159.4 501.0 C1160.4 500.8 1162.0 500.1 1163.0 499.7 C1164.0 499.3 1165.6 498.6 1166.6 498.2 C1167.6 497.7 1169.2 497.0 1170.2 496.8 C1171.2 496.7 1172.8 497.2 1173.8 497.0 C1174.8 496.8 1176.4 495.7 1177.4 495.3 C1178.4 494.9 1180.0 494.2 1181.0 494.1 C1182.0 494.0 1183.6 494.4 1184.6 494.3 C1185.6 494.3 1187.2 494.1 1188.2 493.9 C1189.2 493.8 1190.8 493.4 1191.8 493.1 C1192.8 492.7 1194.4 491.9 1195.4 491.5 C1196.4 491.2 1198.0 490.7 1199.0 490.6 C1200.0 490.5 1201.6 490.9 1202.6 490.8 C1203.6 490.7 1205.2 490.2 1206.2 490.1 C1207.2 489.9 1208.8 490.2 1209.8 490.0 C1210.8 489.8 1212.4 489.2 1213.4 488.8 C1214.4 488.4 1216.0 487.6 1217.0 487.3 C1218.0 487.0 1219.6 486.6 1220.6 486.6 C1221.6 486.6 1223.2 487.1 1224.2 487.0 C1225.2 487.0 1226.8 486.6 1227.8 486.4 C1228.8 486.1 1230.4 485.5 1231.4 485.4 C1232.4 485.3 1234.0 485.6 1235.0 485.5 C1236.0 485.4 1237.9 484.9 1238.6 484.7 C1239.3 484.6 1239.5 484.5 1240.0 484.5 C1240.5 484.5 1241.4 484.6 1242.2 484.4 C1243.0 484.2 1244.8 483.5 1245.8 483.3 C1246.8 483.1 1248.4 483.3 1249.4 483.1 C1250.4 482.9 1252.0 482.2 1253.0 482.1 C1254.0 482.0 1255.6 482.4 1256.6 482.4 C1257.6 482.4 1259.2 482.6 1260.2 482.3 C1261.2 482.0 1262.8 480.7 1263.8 480.4 C1264.8 480.1 1266.4 480.4 1267.4 480.3 C1268.4 480.3 1270.0 480.3 1271.0 480.2 C1272.0 480.1 1273.6 479.9 1274.6 479.8 C1275.6 479.6 1277.2 479.2 1278.2 479.0 C1279.2 478.7 1280.8 478.2 1281.8 478.1 C1282.8 478.0 1284.4 478.6 1285.4 478.4 C1286.4 478.3 1288.0 477.6 1289.0 477.2 C1290.0 476.8 1291.6 475.8 1292.6 475.6 C1293.6 475.5 1295.2 476.3 1296.2 476.1 C1297.2 475.9 1298.8 474.8 1299.8 474.5 C1300.8 474.2 1302.4 474.0 1303.4 474.0 C1304.4 474.0 1306.0 474.7 1307.0 474.6 C1308.0 474.6 1309.6 473.9 1310.6 473.6 C1311.6 473.3 1313.2 472.6 1314.2 472.4 C1315.2 472.3 1317.2 472.4 1317.7 472.5 C1317.8 472.6 1317.7 473.4 1317.8 473.4 C1318.3 473.4 1320.4 472.9 1321.4 472.7 C1322.4 472.5 1324.0 472.3 1325.0 472.1 C1326.0 471.9 1327.6 471.2 1328.6 471.2 C1329.6 471.1 1331.2 472.0 1332.2 472.0 C1333.2 472.0 1334.8 471.3 1335.8 471.1 C1336.8 471.0 1338.4 471.1 1339.4 470.7 C1340.4 470.4 1342.0 469.1 1343.0 468.8 C1344.0 468.6 1345.6 469.1 1346.6 469.1 C1347.6 469.1 1349.2 469.0 1350.2 468.9 C1351.2 468.8 1352.8 468.2 1353.8 468.2 C1354.8 468.2 1356.4 468.9 1357.4 468.8 C1358.4 468.8 1360.0 468.2 1361.0 468.0 C1362.0 467.8 1363.6 467.5 1364.6 467.3 C1365.6 467.1 1367.2 466.5 1368.2 466.5 C1369.2 466.6 1370.8 467.7 1371.8 467.5 C1372.8 467.4 1374.4 465.7 1375.4 465.6 C1376.4 465.5 1378.0 466.5 1379.0 466.6 C1380.0 466.6 1382.0 466.0 1382.6 465.8 C1383.2 465.7 1383.0 465.6 1383.5 465.5 C1384.0 465.4 1385.3 465.0 1386.2 465.0 C1387.1 464.9 1388.8 465.3 1389.8 465.3 C1390.8 465.3 1392.4 465.1 1393.4 465.1 C1394.4 465.0 1396.0 465.2 1397.0 465.1 C1398.0 465.0 1399.6 464.6 1400.6 464.3 C1401.6 464.1 1403.2 463.8 1404.2 463.7 C1405.2 463.6 1406.8 463.7 1407.8 463.6 C1408.8 463.4 1410.4 462.8 1411.4 462.7 C1412.4 462.6 1414.0 463.0 1415.0 463.0 C1416.0 463.0 1417.6 462.8 1418.6 462.7 C1419.6 462.6 1421.2 462.4 1422.2 462.3 C1423.2 462.3 1425.1 462.4 1425.8 462.3 C1426.5 462.3 1426.5 462.1 1427.0 462.0 C1427.5 461.9 1428.6 461.7 1429.4 461.6 C1430.2 461.6 1432.0 461.6 1433.0 461.5 C1434.0 461.4 1435.6 460.9 1436.6 460.9 C1437.6 460.8 1439.2 461.2 1440.2 461.1 C1441.2 461.1 1442.8 460.2 1443.8 460.3 C1444.8 460.4 1446.4 461.9 1447.4 461.9 C1448.4 462.0 1450.0 461.1 1451.0 460.7 C1452.0 460.4 1453.6 459.4 1454.6 459.4 C1455.6 459.4 1457.4 460.6 1458.2 460.7 C1459.0 460.8 1459.5 460.0 1460.0 460.0 C1460.5 460.0 1461.0 461.0 1461.8 460.9 C1462.6 460.8 1464.4 459.6 1465.4 459.4 C1466.4 459.2 1468.0 459.4 1469.0 459.4 C1470.0 459.5 1471.6 459.9 1472.6 459.9 C1473.6 459.9 1475.2 459.9 1476.2 459.7 C1477.2 459.6 1478.8 458.8 1479.8 458.8 C1480.8 458.7 1482.4 459.4 1483.4 459.4 C1484.4 459.3 1486.0 458.3 1487.0 458.2 C1488.0 458.2 1489.6 459.0 1490.6 459.0 C1491.6 458.9 1493.2 458.3 1494.2 458.0 C1495.2 457.7 1496.8 457.1 1497.8 457.0 C1498.8 456.9 1500.4 457.4 1501.4 457.4 C1502.4 457.4 1504.0 456.8 1505.0 456.9 C1506.0 457.0 1507.6 458.1 1508.6 458.2 C1509.6 458.3 1511.2 457.7 1512.2 457.6 C1513.2 457.5 1514.8 457.8 1515.8 457.7 C1516.8 457.6 1518.5 457.3 1519.4 457.1 C1520.3 456.9 1521.6 456.5 1522.0 456.5" stroke="#7defa1"/><path d="M677.0 626.1 C677.5 625.7 679.8 624.1 680.6 623.5 C681.5 623.0 682.5 622.4 683.0 622.0 C683.5 621.6 683.5 621.6 684.2 621.0 C684.9 620.4 686.8 618.7 687.8 617.8 C688.8 617.0 690.4 615.8 691.4 614.9 C692.4 614.1 694.0 612.5 695.0 611.8 C696.0 611.2 697.9 610.8 698.6 610.4 C699.3 610.0 699.5 609.3 700.0 609.0 C700.5 608.7 701.4 608.0 702.2 608.1 C703.0 608.1 704.8 609.3 705.8 609.3 C706.8 609.3 708.4 608.5 709.4 608.3 C710.4 608.2 712.2 608.2 713.0 608.2 C713.8 608.1 714.5 608.0 715.0 608.0 C715.5 608.0 715.9 608.4 716.6 608.3 C717.3 608.3 719.2 607.5 720.2 607.6 C721.2 607.7 722.8 608.8 723.8 609.0 C724.8 609.2 726.4 608.9 727.4 609.0 C728.4 609.0 730.0 609.5 731.0 609.6 C732.0 609.7 733.6 609.5 734.6 609.5 C735.6 609.5 737.4 609.3 738.2 609.4 C739.0 609.6 739.5 610.3 740.0 610.5 C740.5 610.7 741.0 610.7 741.8 610.7 C742.6 610.7 744.4 610.7 745.4 610.6 C746.4 610.6 748.0 610.5 749.0 610.7 C750.0 610.8 751.6 611.7 752.6 611.7 C753.6 611.8 755.2 611.1 756.2 611.1 C757.2 611.1 758.8 611.9 759.8 612.0 C760.8 612.1 762.4 611.7 763.4 611.7 C764.4 611.7 766.0 611.9 767.0 612.0 C768.0 612.0 769.6 612.3 770.6 612.2 C771.6 612.2 773.2 611.8 774.2 611.8 C775.2 611.8 777.0 611.9 777.8 612.0 C778.6 612.1 779.5 612.4 780.0 612.5 C780.5 612.6 780.7 612.9 781.4 612.9 C782.1 612.9 784.0 612.7 785.0 612.7 C786.0 612.7 787.6 612.9 788.6 612.8 C789.6 612.8 791.2 612.5 792.2 612.5 C793.2 612.6 794.8 613.4 795.8 613.4 C796.8 613.5 798.4 612.8 799.4 612.7 C800.4 612.5 802.0 612.1 803.0 612.2 C804.0 612.3 805.6 613.2 806.6 613.3 C807.6 613.3 809.2 612.7 810.2 612.6 C811.2 612.5 812.8 612.7 813.8 612.6 C814.8 612.5 816.4 612.0 817.4 611.9 C818.4 611.8 820.0 611.6 821.0 611.6 C822.0 611.7 823.6 612.3 824.6 612.3 C825.6 612.3 827.4 611.7 828.2 611.8 C829.0 611.8 829.5 612.4 830.0 612.5 C830.5 612.6 831.0 612.7 831.8 612.5 C832.6 612.4 834.4 611.2 835.4 611.1 C836.4 611.0 838.0 611.6 839.0 611.7 C840.0 611.7 841.6 611.7 842.6 611.4 C843.6 611.2 845.2 609.9 846.2 609.7 C847.2 609.5 848.8 609.9 849.8 609.8 C850.8 609.7 852.4 609.4 853.4 609.1 C854.4 608.8 856.1 607.9 857.0 607.7 C857.9 607.6 859.5 608.0 860.0 608.0 C860.5 608.0 860.0 607.7 860.6 607.5 C861.2 607.4 863.2 607.2 864.2 606.9 C865.2 606.6 866.8 605.8 867.8 605.6 C868.8 605.4 870.4 605.5 871.4 605.5 C872.4 605.5 874.0 605.7 875.0 605.5 C876.0 605.4 877.9 604.4 878.6 604.2 C879.3 603.9 879.5 603.9 880.0 603.7 C880.5 603.5 881.4 602.7 882.2 602.5 C883.0 602.3 884.8 602.5 885.8 602.3 C886.8 602.0 888.4 601.4 889.4 600.9 C890.4 600.3 892.0 599.0 893.0 598.4 C894.0 597.9 895.6 597.3 896.6 597.0 C897.6 596.6 899.5 596.3 900.0 596.0 C900.2 595.7 900.0 595.2 900.2 594.9 C900.7 594.5 902.8 593.8 903.8 593.3 C904.8 592.9 906.4 592.1 907.4 591.6 C908.4 591.0 910.0 590.0 911.0 589.5 C912.0 589.0 913.6 588.4 914.6 588.1 C915.6 587.7 917.4 587.1 918.2 586.8 C919.0 586.5 919.5 586.3 920.0 586.0 C920.5 585.7 921.0 585.2 921.8 584.7 C922.6 584.2 924.4 583.2 925.4 582.5 C926.4 581.9 928.0 580.8 929.0 580.4 C930.0 580.1 931.6 580.6 932.6 580.1 C933.6 579.6 935.2 577.9 936.2 577.0 C937.2 576.2 939.3 574.4 939.8 574.1 C940.0 573.8 939.8 575.2 940.0 575.0 C940.5 574.8 942.4 573.5 943.4 573.1 C944.4 572.6 946.0 572.4 947.0 572.0 C948.0 571.6 949.6 570.9 950.6 570.4 C951.6 569.9 953.2 569.0 954.2 568.5 C955.2 568.0 957.0 567.1 957.8 566.8 C958.6 566.5 959.5 566.5 960.0 566.4 C960.5 566.3 960.7 566.6 961.4 566.3 C962.1 566.1 964.0 565.3 965.0 564.6 C966.0 564.0 967.6 562.3 968.6 561.7 C969.6 561.1 971.6 560.6 972.2 560.3 C972.8 560.1 972.5 560.2 973.0 560.0 C973.5 559.8 974.9 559.4 975.8 558.8 C976.7 558.1 978.4 556.3 979.4 555.8 C980.4 555.2 982.0 555.6 983.0 555.2 C984.0 554.8 985.6 553.5 986.6 552.9 C987.6 552.3 989.2 551.4 990.2 550.7 C991.2 550.0 992.8 548.4 993.8 547.6 C994.8 546.8 996.4 545.8 997.4 545.1 C998.4 544.5 1000.0 543.4 1001.0 542.9 C1002.0 542.4 1003.6 542.0 1004.6 541.6 C1005.6 541.2 1007.2 540.5 1008.2 540.1 C1009.2 539.7 1011.3 539.0 1011.8 538.6 C1012.0 538.2 1011.8 537.7 1012.0 537.4 C1012.5 537.1 1014.4 537.1 1015.4 536.7 C1016.4 536.3 1018.0 535.0 1019.0 534.6 C1020.0 534.1 1021.6 533.5 1022.6 533.4 C1023.6 533.2 1025.2 533.8 1026.2 533.6 C1027.2 533.4 1028.8 532.6 1029.8 532.2 C1030.8 531.9 1032.4 531.7 1033.4 531.3 C1034.4 530.8 1036.0 529.6 1037.0 529.3 C1038.0 529.0 1039.6 529.5 1040.6 529.3 C1041.6 529.1 1043.2 528.1 1044.2 527.6 C1045.2 527.2 1046.8 526.5 1047.8 526.2 C1048.8 525.9 1050.4 525.5 1051.4 525.3 C1052.4 525.0 1054.0 524.7 1055.0 524.4 C1056.0 524.1 1057.6 523.7 1058.6 523.3 C1059.6 522.9 1061.2 522.1 1062.2 521.6 C1063.2 521.1 1064.8 519.9 1065.8 519.7 C1066.8 519.6 1068.6 520.5 1069.4 520.3 C1070.2 520.2 1071.1 519.1 1071.6 518.8 C1072.1 518.5 1072.3 518.4 1073.0 518.3 C1073.7 518.2 1075.6 518.2 1076.6 517.9 C1077.6 517.5 1079.2 516.4 1080.2 515.8 C1081.2 515.2 1082.8 513.9 1083.8 513.7 C1084.8 513.4 1086.4 514.3 1087.4 514.2 C1088.4 514.1 1090.0 513.2 1091.0 512.8 C1092.0 512.4 1093.6 511.8 1094.6 511.4 C1095.6 511.0 1097.2 510.4 1098.2 509.9 C1099.2 509.4 1100.8 508.5 1101.8 508.1 C1102.8 507.7 1104.4 507.5 1105.4 507.2 C1106.4 506.9 1108.0 506.1 1109.0 505.8 C1110.0 505.5 1111.6 505.4 1112.6 505.1 C1113.6 504.7 1115.2 503.8 1116.2 503.6 C1117.2 503.3 1118.8 503.4 1119.8 503.2 C1120.8 502.9 1122.4 502.2 1123.4 501.8 C1124.4 501.4 1126.0 500.7 1127.0 500.2 C1128.0 499.7 1129.6 498.8 1130.6 498.4 C1131.6 498.0 1133.3 497.5 1134.2 497.3 C1135.1 497.1 1136.5 496.9 1137.0 496.8 C1137.5 496.7 1137.2 496.6 1137.8 496.4 C1138.4 496.2 1140.4 495.5 1141.4 495.3 C1142.4 495.1 1144.0 495.4 1145.0 495.2 C1146.0 494.9 1147.6 494.0 1148.6 493.7 C1149.6 493.5 1151.2 493.7 1152.2 493.4 C1153.2 493.2 1154.8 492.1 1155.8 491.7 C1156.8 491.4 1158.4 490.8 1159.4 490.7 C1160.4 490.5 1162.0 490.8 1163.0 490.7 C1164.0 490.6 1165.6 490.1 1166.6 489.9 C1167.6 489.6 1169.2 489.3 1170.2 489.0 C1171.2 488.7 1172.8 488.1 1173.8 487.8 C1174.8 487.5 1176.4 487.3 1177.4 487.0 C1178.4 486.8 1180.0 486.1 1181.0 485.9 C1182.0 485.7 1183.6 485.9 1184.6 485.8 C1185.6 485.7 1187.2 485.6 1188.2 485.4 C1189.2 485.2 1190.8 484.5 1191.8 484.3 C1192.8 484.1 1194.4 484.3 1195.4 484.1 C1196.4 483.9 1198.0 483.2 1199.0 482.9 C1200.0 482.5 1201.6 482.0 1202.6 481.8 C1203.6 481.5 1205.2 481.0 1206.2 480.8 C1207.2 480.7 1208.8 480.7 1209.8 480.8 C1210.8 480.8 1212.4 481.4 1213.4 481.3 C1214.4 481.1 1216.0 480.0 1217.0 479.7 C1218.0 479.4 1219.6 479.0 1220.6 479.0 C1221.6 479.0 1223.2 479.8 1224.2 479.7 C1225.2 479.6 1226.8 478.6 1227.8 478.3 C1228.8 477.9 1230.4 477.4 1231.4 477.3 C1232.4 477.2 1234.0 478.0 1235.0 477.8 C1236.0 477.6 1237.9 476.0 1238.6 475.7 C1239.3 475.5 1239.5 476.1 1240.0 476.0 C1240.5 475.9 1241.4 475.6 1242.2 475.4 C1243.0 475.1 1244.8 474.5 1245.8 474.3 C1246.8 474.1 1248.4 474.0 1249.4 473.8 C1250.4 473.7 1252.0 473.7 1253.0 473.4 C1254.0 473.2 1255.6 472.1 1256.6 472.0 C1257.6 471.8 1259.2 472.3 1260.2 472.2 C1261.2 472.1 1262.8 471.5 1263.8 471.4 C1264.8 471.3 1266.4 471.8 1267.4 471.5 C1268.4 471.2 1270.0 469.5 1271.0 469.1 C1272.0 468.8 1273.6 469.2 1274.6 469.0 C1275.6 468.8 1277.2 467.9 1278.2 467.8 C1279.2 467.6 1280.8 468.3 1281.8 468.2 C1282.8 468.1 1284.4 467.4 1285.4 467.2 C1286.4 466.9 1288.0 466.6 1289.0 466.4 C1290.0 466.3 1291.6 466.3 1292.6 466.0 C1293.6 465.6 1295.2 464.1 1296.2 463.9 C1297.2 463.7 1298.8 464.4 1299.8 464.4 C1300.8 464.3 1302.4 463.7 1303.4 463.5 C1304.4 463.4 1306.0 463.5 1307.0 463.3 C1308.0 463.1 1309.6 462.3 1310.6 462.0 C1311.6 461.7 1313.2 461.5 1314.2 461.3 C1315.2 461.1 1317.2 460.8 1317.7 460.7 C1317.8 460.6 1317.7 460.4 1317.8 460.4 C1318.3 460.5 1320.4 461.1 1321.4 460.9 C1322.4 460.7 1324.0 459.5 1325.0 459.2 C1326.0 459.0 1327.6 459.4 1328.6 459.3 C1329.6 459.2 1331.2 458.5 1332.2 458.3 C1333.2 458.2 1334.8 458.0 1335.8 458.0 C1336.8 457.9 1338.4 458.0 1339.4 458.0 C1340.4 458.1 1342.0 458.3 1343.0 458.2 C1344.0 458.1 1345.6 457.6 1346.6 457.4 C1347.6 457.2 1349.2 456.8 1350.2 456.6 C1351.2 456.5 1352.8 456.1 1353.8 456.1 C1354.8 456.2 1356.4 457.0 1357.4 457.0 C1358.4 457.0 1360.0 456.0 1361.0 455.9 C1362.0 455.7 1363.6 456.0 1364.6 456.0 C1365.6 456.0 1367.2 455.9 1368.2 455.9 C1369.2 455.8 1370.8 455.8 1371.8 455.6 C1372.8 455.4 1374.4 454.8 1375.4 454.7 C1376.4 454.7 1378.0 455.3 1379.0 455.3 C1380.0 455.2 1382.0 454.5 1382.6 454.3 C1383.2 454.1 1383.0 454.0 1383.5 454.0 C1384.0 454.0 1385.3 454.3 1386.2 454.1 C1387.1 454.0 1388.8 453.4 1389.8 453.1 C1390.8 452.8 1392.4 452.1 1393.4 452.0 C1394.4 452.0 1396.0 452.5 1397.0 452.4 C1398.0 452.4 1399.6 451.7 1400.6 451.6 C1401.6 451.5 1403.2 451.8 1404.2 451.9 C1405.2 452.0 1406.8 452.4 1407.8 452.2 C1408.8 452.1 1410.4 450.9 1411.4 450.7 C1412.4 450.4 1414.0 450.7 1415.0 450.6 C1416.0 450.5 1417.6 450.1 1418.6 450.1 C1419.6 450.0 1421.2 450.4 1422.2 450.4 C1423.2 450.5 1425.1 450.5 1425.8 450.4 C1426.5 450.3 1426.5 449.8 1427.0 449.7 C1427.5 449.6 1428.6 449.9 1429.4 449.8 C1430.2 449.7 1432.0 449.1 1433.0 448.9 C1434.0 448.7 1435.6 448.3 1436.6 448.3 C1437.6 448.3 1439.2 448.8 1440.2 448.8 C1441.2 448.8 1442.8 448.4 1443.8 448.2 C1444.8 448.0 1446.4 447.6 1447.4 447.5 C1448.4 447.4 1450.0 447.6 1451.0 447.5 C1452.0 447.4 1453.6 446.8 1454.6 446.7 C1455.6 446.7 1457.4 447.0 1458.2 447.1 C1459.0 447.2 1459.5 447.4 1460.0 447.5 C1460.5 447.6 1461.0 447.5 1461.8 447.5 C1462.6 447.5 1464.4 447.6 1465.4 447.6 C1466.4 447.6 1468.0 447.8 1469.0 447.6 C1470.0 447.4 1471.6 446.4 1472.6 446.2 C1473.6 446.1 1475.2 446.4 1476.2 446.5 C1477.2 446.5 1478.8 446.6 1479.8 446.5 C1480.8 446.4 1482.4 445.7 1483.4 445.7 C1484.4 445.6 1486.0 446.1 1487.0 446.2 C1488.0 446.2 1489.6 446.2 1490.6 445.9 C1491.6 445.7 1493.2 444.7 1494.2 444.6 C1495.2 444.5 1496.8 445.1 1497.8 445.2 C1498.8 445.3 1500.4 445.3 1501.4 445.3 C1502.4 445.2 1504.0 444.9 1505.0 444.8 C1506.0 444.7 1507.6 444.7 1508.6 444.4 C1509.6 444.1 1511.2 443.0 1512.2 442.8 C1513.2 442.6 1514.8 442.8 1515.8 442.8 C1516.8 442.9 1518.5 443.1 1519.4 443.1 C1520.3 443.2 1521.6 443.2 1522.0 443.2" stroke="#ff8700"/><path d="M677.0 644.8 C677.5 644.3 679.8 642.1 680.6 641.4 C681.5 640.8 682.5 640.4 683.0 640.0 C683.5 639.6 683.5 639.5 684.2 639.0 C684.9 638.4 687.0 636.5 687.8 635.8 C688.6 635.1 689.5 634.3 690.0 634.0 C690.5 633.7 690.7 633.5 691.4 633.5 C692.1 633.5 694.0 634.1 695.0 634.3 C696.0 634.5 697.9 635.0 698.6 635.0 C699.3 635.0 699.5 634.4 700.0 634.5 C700.5 634.6 701.4 635.7 702.2 635.7 C703.0 635.8 704.8 634.5 705.8 634.6 C706.8 634.6 708.4 635.9 709.4 636.0 C710.4 636.2 712.0 635.8 713.0 636.0 C714.0 636.2 715.6 637.3 716.6 637.4 C717.6 637.6 719.5 637.1 720.0 637.0 C720.2 636.9 720.0 636.4 720.2 636.4 C720.7 636.5 722.8 637.3 723.8 637.5 C724.8 637.8 726.4 637.9 727.4 638.0 C728.4 638.2 730.0 638.6 731.0 638.8 C732.0 639.0 733.6 639.5 734.6 639.6 C735.6 639.7 737.2 639.6 738.2 639.6 C739.2 639.6 740.8 639.6 741.8 639.8 C742.8 640.0 744.4 640.6 745.4 640.9 C746.4 641.2 748.0 641.7 749.0 641.7 C750.0 641.8 751.6 641.0 752.6 641.1 C753.6 641.3 755.2 642.3 756.2 642.6 C757.2 642.8 759.3 642.8 759.8 642.8 C760.0 642.9 759.8 643.0 760.0 643.0 C760.5 643.0 762.4 643.0 763.4 643.2 C764.4 643.3 766.0 643.8 767.0 644.0 C768.0 644.1 769.6 644.2 770.6 644.4 C771.6 644.6 773.2 645.1 774.2 645.1 C775.2 645.0 776.8 644.2 777.8 644.1 C778.8 644.1 780.4 644.3 781.4 644.5 C782.4 644.8 784.0 645.8 785.0 646.1 C786.0 646.4 787.6 646.3 788.6 646.4 C789.6 646.6 791.2 647.0 792.2 647.2 C793.2 647.4 794.8 647.6 795.8 647.7 C796.8 647.8 798.8 648.2 799.4 648.1 C800.0 648.1 799.5 647.7 800.0 647.6 C800.5 647.5 802.1 647.5 803.0 647.7 C803.9 647.8 805.6 648.5 806.6 648.6 C807.6 648.7 809.2 648.5 810.2 648.5 C811.2 648.5 812.8 648.3 813.8 648.4 C814.8 648.5 816.4 649.2 817.4 649.2 C818.4 649.3 820.0 648.7 821.0 648.8 C822.0 648.9 823.6 649.7 824.6 649.9 C825.6 650.1 827.2 650.2 828.2 650.2 C829.2 650.2 830.8 649.8 831.8 649.9 C832.8 649.9 834.4 650.2 835.4 650.4 C836.4 650.5 838.0 650.8 839.0 650.9 C840.0 651.1 841.6 651.3 842.6 651.4 C843.6 651.6 845.2 651.8 846.2 651.8 C847.2 651.8 849.3 651.4 849.8 651.5 C850.0 651.5 849.8 651.8 850.0 652.0 C850.5 652.2 852.4 652.8 853.4 652.9 C854.4 652.9 856.0 652.3 857.0 652.3 C858.0 652.3 859.6 652.7 860.6 652.8 C861.6 653.0 863.2 653.3 864.2 653.3 C865.2 653.4 866.8 653.3 867.8 653.3 C868.8 653.3 870.4 653.3 871.4 653.4 C872.4 653.6 874.0 654.6 875.0 654.6 C876.0 654.5 877.6 653.1 878.6 653.2 C879.6 653.3 881.2 654.9 882.2 655.2 C883.2 655.4 884.8 655.1 885.8 655.1 C886.8 655.1 888.4 655.3 889.4 655.4 C890.4 655.4 892.0 655.3 893.0 655.2 C894.0 655.2 895.6 655.1 896.6 655.2 C897.6 655.2 899.5 655.4 900.0 655.5 C900.2 655.6 900.0 656.2 900.2 656.1 C900.7 656.0 902.8 655.1 903.8 655.0 C904.8 654.9 906.4 655.3 907.4 655.5 C908.4 655.6 910.0 655.7 911.0 656.0 C912.0 656.2 913.6 657.0 914.6 657.0 C915.6 657.0 917.2 656.2 918.2 656.2 C919.2 656.2 920.8 656.8 921.8 656.9 C922.8 657.0 924.4 656.6 925.4 656.8 C926.4 656.9 928.0 657.9 929.0 657.8 C930.0 657.8 931.6 656.5 932.6 656.3 C933.6 656.1 935.2 656.6 936.2 656.7 C937.2 656.7 938.8 656.5 939.8 656.6 C940.8 656.8 942.4 657.6 943.4 657.8 C944.4 658.0 946.0 657.7 947.0 657.8 C948.0 657.8 949.6 658.0 950.6 658.1 C951.6 658.3 953.2 659.0 954.2 658.9 C955.2 658.9 957.0 658.0 957.8 657.9 C958.6 657.9 959.5 658.3 960.0 658.5 C960.5 658.7 960.7 659.1 961.4 659.2 C962.1 659.4 964.0 659.6 965.0 659.6 C966.0 659.5 967.6 659.0 968.6 658.8 C969.6 658.6 971.2 658.0 972.2 658.0 C973.2 658.0 974.8 658.8 975.8 658.9 C976.8 659.1 978.4 659.2 979.4 659.3 C980.4 659.4 982.0 659.6 983.0 659.6 C984.0 659.6 985.6 659.2 986.6 659.0 C987.6 658.9 989.2 658.5 990.2 658.5 C991.2 658.5 992.8 659.1 993.8 659.1 C994.8 659.2 996.4 659.0 997.4 659.1 C998.4 659.1 1000.0 659.2 1001.0 659.3 C1002.0 659.3 1003.6 659.6 1004.6 659.5 C1005.6 659.4 1007.2 658.7 1008.2 658.6 C1009.2 658.5 1010.8 659.0 1011.8 659.0 C1012.8 658.9 1014.4 658.2 1015.4 658.3 C1016.4 658.3 1018.0 659.5 1019.0 659.5 C1020.0 659.6 1021.6 658.7 1022.6 658.7 C1023.6 658.8 1025.2 660.0 1026.2 660.0 C1027.2 660.0 1028.8 658.9 1029.8 658.8 C1030.8 658.7 1032.4 659.2 1033.4 659.2 C1034.4 659.2 1036.0 658.7 1037.0 658.8 C1038.0 658.9 1039.6 660.0 1040.6 660.1 C1041.6 660.3 1043.2 659.9 1044.2 659.8 C1045.2 659.8 1046.8 660.1 1047.8 660.1 C1048.8 660.1 1050.4 660.1 1051.4 660.1 C1052.4 660.0 1054.0 659.4 1055.0 659.5 C1056.0 659.5 1057.6 660.5 1058.6 660.4 C1059.6 660.4 1061.2 659.1 1062.2 659.2 C1063.2 659.3 1064.8 661.1 1065.8 661.2 C1066.8 661.2 1068.4 659.7 1069.4 659.6 C1070.4 659.6 1072.0 660.9 1073.0 660.9 C1074.0 661.0 1075.6 659.9 1076.6 659.7 C1077.6 659.4 1079.2 659.3 1080.2 659.4 C1081.2 659.5 1082.8 660.4 1083.8 660.5 C1084.8 660.6 1086.4 660.4 1087.4 660.3 C1088.4 660.2 1090.0 659.9 1091.0 659.9 C1092.0 659.8 1093.6 659.7 1094.6 659.8 C1095.6 659.9 1097.4 660.6 1098.2 660.7 C1099.0 660.8 1099.5 660.4 1100.0 660.5 C1100.5 660.6 1101.0 661.2 1101.8 661.3 C1102.6 661.4 1104.4 661.3 1105.4 661.1 C1106.4 660.9 1108.0 660.1 1109.0 660.0 C1110.0 659.8 1111.6 660.1 1112.6 660.4 C1113.6 660.7 1115.2 661.9 1116.2 661.9 C1117.2 661.8 1118.8 660.3 1119.8 660.2 C1120.8 660.1 1122.4 661.0 1123.4 661.2 C1124.4 661.4 1126.0 661.4 1127.0 661.5 C1128.0 661.6 1129.6 662.1 1130.6 662.0 C1131.6 661.8 1133.2 660.7 1134.2 660.5 C1135.2 660.3 1136.8 660.6 1137.8 660.7 C1138.8 660.9 1140.4 661.4 1141.4 661.4 C1142.4 661.4 1144.0 660.6 1145.0 660.6 C1146.0 660.6 1147.6 661.2 1148.6 661.3 C1149.6 661.4 1151.2 661.2 1152.2 661.2 C1153.2 661.2 1154.8 661.2 1155.8 661.4 C1156.8 661.6 1158.4 662.5 1159.4 662.4 C1160.4 662.4 1162.0 661.4 1163.0 661.3 C1164.0 661.2 1165.6 661.7 1166.6 661.8 C1167.6 661.8 1169.2 661.7 1170.2 661.8 C1171.2 661.8 1172.8 662.3 1173.8 662.3 C1174.8 662.4 1176.4 662.1 1177.4 662.1 C1178.4 662.1 1180.0 662.3 1181.0 662.2 C1182.0 662.1 1183.6 661.7 1184.6 661.7 C1185.6 661.6 1187.2 661.8 1188.2 661.8 C1189.2 661.8 1190.8 661.6 1191.8 661.7 C1192.8 661.8 1194.4 662.2 1195.4 662.4 C1196.4 662.5 1198.0 662.8 1199.0 662.7 C1200.0 662.6 1201.6 661.9 1202.6 661.7 C1203.6 661.6 1205.2 661.6 1206.2 661.6 C1207.2 661.6 1208.8 661.8 1209.8 662.1 C1210.8 662.3 1212.4 663.2 1213.4 663.4 C1214.4 663.5 1216.0 663.2 1217.0 663.1 C1218.0 662.9 1219.6 662.3 1220.6 662.4 C1221.6 662.4 1223.2 663.5 1224.2 663.5 C1225.2 663.6 1226.8 662.8 1227.8 662.8 C1228.8 662.7 1230.4 663.3 1231.4 663.3 C1232.4 663.2 1234.0 662.6 1235.0 662.5 C1236.0 662.4 1237.9 662.6 1238.6 662.6 C1239.3 662.7 1239.5 662.9 1240.0 663.0 C1240.5 663.1 1241.4 663.6 1242.2 663.7 C1243.0 663.8 1244.8 664.0 1245.8 663.9 C1246.8 663.8 1248.4 663.1 1249.4 663.1 C1250.4 663.1 1252.0 663.9 1253.0 664.0 C1254.0 664.1 1255.6 663.8 1256.6 663.7 C1257.6 663.6 1259.2 663.3 1260.2 663.4 C1261.2 663.4 1262.8 664.1 1263.8 664.1 C1264.8 664.2 1266.4 664.0 1267.4 663.9 C1268.4 663.7 1270.0 663.3 1271.0 663.3 C1272.0 663.3 1273.6 663.9 1274.6 663.9 C1275.6 664.0 1277.2 663.6 1278.2 663.6 C1279.2 663.5 1280.8 663.6 1281.8 663.7 C1282.8 663.7 1284.4 663.9 1285.4 664.0 C1286.4 664.0 1288.0 664.1 1289.0 664.0 C1290.0 664.0 1291.6 663.5 1292.6 663.5 C1293.6 663.4 1295.2 663.6 1296.2 663.6 C1297.2 663.6 1298.8 663.3 1299.8 663.3 C1300.8 663.4 1302.4 663.8 1303.4 663.9 C1304.4 664.0 1306.0 664.1 1307.0 664.2 C1308.0 664.2 1309.6 664.1 1310.6 664.2 C1311.6 664.3 1313.2 664.9 1314.2 665.0 C1315.2 665.1 1316.8 664.8 1317.8 664.8 C1318.8 664.7 1320.4 664.7 1321.4 664.6 C1322.4 664.5 1324.0 664.4 1325.0 664.2 C1326.0 664.1 1327.6 663.8 1328.6 663.8 C1329.6 663.7 1331.2 664.0 1332.2 664.1 C1333.2 664.2 1334.8 664.5 1335.8 664.5 C1336.8 664.5 1338.4 664.4 1339.4 664.4 C1340.4 664.4 1342.0 664.1 1343.0 664.3 C1344.0 664.4 1345.6 665.2 1346.6 665.3 C1347.6 665.4 1349.2 664.9 1350.2 664.8 C1351.2 664.7 1352.8 664.5 1353.8 664.4 C1354.8 664.3 1356.4 664.2 1357.4 664.3 C1358.4 664.3 1360.0 664.8 1361.0 665.0 C1362.0 665.2 1363.6 665.4 1364.6 665.5 C1365.6 665.5 1367.2 665.5 1368.2 665.4 C1369.2 665.4 1370.8 665.0 1371.8 665.1 C1372.8 665.1 1374.4 665.6 1375.4 665.5 C1376.4 665.4 1378.0 664.5 1379.0 664.5 C1380.0 664.5 1381.6 665.3 1382.6 665.3 C1383.6 665.4 1385.2 665.1 1386.2 665.0 C1387.2 665.0 1388.8 665.0 1389.8 665.0 C1390.8 664.9 1392.4 665.0 1393.4 664.9 C1394.4 664.9 1396.1 664.5 1397.0 664.6 C1397.9 664.7 1399.5 665.3 1400.0 665.5 C1400.5 665.7 1400.0 666.1 1400.6 666.1 C1401.2 666.0 1403.2 665.2 1404.2 665.3 C1405.2 665.3 1406.8 666.6 1407.8 666.6 C1408.8 666.6 1410.4 665.7 1411.4 665.4 C1412.4 665.2 1414.0 664.6 1415.0 664.7 C1416.0 664.8 1417.6 666.0 1418.6 666.1 C1419.6 666.3 1421.2 665.8 1422.2 665.8 C1423.2 665.8 1424.8 666.3 1425.8 666.2 C1426.8 666.1 1428.4 665.2 1429.4 665.2 C1430.4 665.1 1432.0 665.5 1433.0 665.8 C1434.0 666.1 1435.6 667.1 1436.6 667.1 C1437.6 667.1 1439.2 666.2 1440.2 666.0 C1441.2 665.9 1442.8 666.0 1443.8 666.0 C1444.8 666.0 1446.4 666.0 1447.4 666.1 C1448.4 666.3 1450.0 666.9 1451.0 666.9 C1452.0 666.9 1453.6 666.3 1454.6 666.3 C1455.6 666.3 1457.2 666.8 1458.2 666.8 C1459.2 666.8 1460.8 666.4 1461.8 666.3 C1462.8 666.3 1464.4 666.4 1465.4 666.3 C1466.4 666.3 1468.0 665.8 1469.0 665.8 C1470.0 665.7 1471.6 666.2 1472.6 666.2 C1473.6 666.2 1475.2 665.7 1476.2 665.8 C1477.2 665.9 1478.8 666.7 1479.8 666.9 C1480.8 667.1 1482.4 667.1 1483.4 667.0 C1484.4 666.9 1486.0 666.2 1487.0 666.3 C1488.0 666.3 1489.6 667.1 1490.6 667.2 C1491.6 667.2 1493.2 666.8 1494.2 666.7 C1495.2 666.7 1496.8 666.8 1497.8 666.7 C1498.8 666.7 1500.4 666.3 1501.4 666.3 C1502.4 666.4 1504.0 666.7 1505.0 666.8 C1506.0 666.9 1507.6 667.0 1508.6 667.0 C1509.6 667.0 1511.2 666.8 1512.2 666.9 C1513.2 667.0 1514.8 667.4 1515.8 667.5 C1516.8 667.6 1518.5 667.5 1519.4 667.5 C1520.3 667.5 1521.6 667.5 1522.0 667.4" stroke="#ffd16a"/><path d="M677.0 433.9 C677.4 433.7 679.5 433.4 680.0 433.0 C680.5 432.6 680.0 431.4 680.6 430.8 C681.2 430.3 683.4 429.6 684.2 429.2 C685.0 428.8 685.5 428.9 686.0 428.0 C686.5 427.1 687.0 423.1 687.8 423.2 C688.6 423.4 690.4 429.0 691.4 429.1 C692.4 429.2 694.0 423.4 695.0 423.8 C696.0 424.3 697.9 432.3 698.6 432.5 C699.3 432.8 699.5 425.7 700.0 425.6 C700.5 425.5 701.4 431.0 702.2 431.7 C703.0 432.4 704.8 432.6 705.8 430.5 C706.8 428.3 708.4 417.2 709.4 416.6 C710.4 416.0 712.0 422.8 713.0 426.0 L716.6 439.4 L720.2 418.1 L723.8 424.4 C724.8 424.7 726.4 420.8 727.4 420.0 C728.4 419.3 730.0 420.0 731.0 418.8 L734.6 411.8 L738.2 427.8 L741.8 419.6 C742.8 418.5 744.4 420.3 745.4 420.0 C746.4 419.7 748.0 418.3 749.0 417.6 C750.0 416.8 751.6 414.0 752.6 414.8 C753.6 415.7 755.2 422.4 756.2 423.8 C757.2 425.1 759.3 424.7 759.8 424.5 C760.0 424.2 759.8 423.5 760.0 422.0 L763.4 414.1 L767.0 431.2 L770.6 427.4 C771.6 426.7 773.2 427.7 774.2 426.5 C775.2 425.2 776.8 420.3 777.8 418.9 C778.8 417.4 780.4 417.3 781.4 416.5 C782.4 415.7 784.0 412.0 785.0 413.3 C786.0 414.6 787.6 423.9 788.6 425.5 C789.6 427.1 791.2 425.3 792.2 424.6 C793.2 423.9 794.8 420.5 795.8 420.3 C796.8 420.0 798.4 422.6 799.4 422.9 C800.4 423.2 802.0 423.0 803.0 422.4 C804.0 421.8 805.6 419.8 806.6 418.4 C807.6 417.1 809.2 412.8 810.2 413.2 C811.2 413.5 812.8 419.9 813.8 420.8 C814.8 421.8 816.4 420.3 817.4 420.1 C818.4 419.9 820.0 420.2 821.0 419.4 C822.0 418.6 823.6 415.5 824.6 414.4 C825.6 413.2 827.4 410.9 828.2 411.6 C829.0 412.2 829.5 418.3 830.0 419.0 C830.5 419.7 831.0 416.0 831.8 416.7 C832.6 417.3 834.4 423.0 835.4 423.4 C836.4 423.8 838.0 419.2 839.0 419.4 L842.6 425.1 L846.2 410.5 L849.8 423.0 C850.8 423.1 852.4 411.8 853.4 411.2 C854.4 410.6 856.0 418.1 857.0 418.7 L860.6 415.2 L864.2 430.0 L867.8 422.5 C868.8 422.3 870.4 429.2 871.4 428.4 C872.4 427.5 874.0 418.4 875.0 416.7 C876.0 415.0 877.6 416.4 878.6 416.5 C879.6 416.6 881.2 417.8 882.2 417.6 C883.2 417.3 884.8 414.5 885.8 414.7 C886.8 414.9 888.4 418.1 889.4 419.1 C890.4 420.0 892.0 422.0 893.0 421.4 C894.0 420.7 895.6 414.1 896.6 414.3 C897.6 414.5 899.2 421.9 900.2 422.8 C901.2 423.7 902.8 420.3 903.8 420.5 C904.8 420.6 906.4 423.2 907.4 424.0 C908.4 424.7 910.0 425.7 911.0 425.6 C912.0 425.5 913.6 424.3 914.6 423.0 C915.6 421.8 917.2 417.7 918.2 416.9 C919.2 416.1 920.8 418.4 921.8 417.6 L925.4 410.9 L929.0 426.2 L932.6 419.3 C933.6 418.0 935.2 417.9 936.2 417.2 C937.2 416.6 938.8 413.9 939.8 415.0 C940.8 416.0 942.4 424.5 943.4 424.6 C944.4 424.7 946.0 416.1 947.0 415.6 C948.0 415.2 949.6 422.1 950.6 421.4 C951.6 420.6 953.2 410.0 954.2 410.5 C955.2 410.9 957.0 423.4 957.8 424.3 C958.6 425.2 959.5 416.7 960.0 416.8 C960.5 416.9 960.7 423.0 961.4 424.9 L965.0 430.0 L968.6 415.4 L972.2 418.7 C973.2 418.2 974.8 412.0 975.8 412.0 C976.8 412.0 978.4 418.5 979.4 418.7 C980.4 418.8 982.0 413.6 983.0 413.0 C984.0 412.4 985.6 413.2 986.6 414.3 C987.6 415.3 989.2 420.3 990.2 420.6 C991.2 421.0 992.8 416.7 993.8 416.7 C994.8 416.7 996.4 420.7 997.4 420.7 C998.4 420.7 1000.0 418.0 1001.0 416.6 C1002.0 415.2 1003.6 410.4 1004.6 410.9 C1005.6 411.5 1007.2 418.3 1008.2 420.5 C1009.2 422.7 1010.8 426.8 1011.8 426.6 C1012.8 426.4 1014.4 420.4 1015.4 419.1 C1016.4 417.7 1018.0 418.2 1019.0 416.9 C1020.0 415.7 1021.6 409.2 1022.6 410.2 C1023.6 411.1 1025.2 422.0 1026.2 423.6 C1027.2 425.2 1028.8 422.0 1029.8 421.2 C1030.8 420.4 1032.4 418.8 1033.4 417.9 C1034.4 417.0 1036.0 414.0 1037.0 414.6 C1038.0 415.2 1039.6 421.4 1040.6 422.1 C1041.6 422.9 1043.2 419.6 1044.2 419.7 C1045.2 419.8 1046.8 423.1 1047.8 422.8 C1048.8 422.5 1050.4 418.4 1051.4 417.8 C1052.4 417.3 1054.0 418.8 1055.0 418.9 C1056.0 419.0 1057.6 418.4 1058.6 418.4 C1059.6 418.4 1061.2 420.3 1062.2 419.1 C1063.2 417.9 1064.8 410.6 1065.8 410.1 C1066.8 409.6 1068.4 414.7 1069.4 415.5 C1070.4 416.2 1072.0 415.9 1073.0 415.4 C1074.0 414.9 1075.6 411.5 1076.6 412.2 C1077.6 412.9 1079.2 418.7 1080.2 420.4 C1081.2 422.1 1082.8 424.7 1083.8 424.2 C1084.8 423.6 1086.4 417.4 1087.4 416.6 C1088.4 415.9 1090.0 418.0 1091.0 418.8 C1092.0 419.7 1093.6 423.4 1094.6 422.5 C1095.6 421.6 1097.4 413.2 1098.2 412.6 C1099.0 411.9 1099.5 416.2 1100.0 418.0 C1100.5 419.8 1101.0 424.5 1101.8 425.1 C1102.6 425.7 1104.4 422.5 1105.4 422.3 C1106.4 422.2 1108.0 424.8 1109.0 424.0 C1110.0 423.2 1111.6 417.7 1112.6 416.8 C1113.6 416.0 1115.2 417.9 1116.2 417.9 C1117.2 417.9 1118.8 416.6 1119.8 416.9 C1120.8 417.1 1122.4 420.7 1123.4 419.7 C1124.4 418.7 1126.0 410.4 1127.0 409.7 C1128.0 409.1 1129.6 413.9 1130.6 415.1 C1131.6 416.2 1133.2 416.9 1134.2 418.2 C1135.2 419.4 1136.8 423.6 1137.8 423.9 C1138.8 424.2 1140.4 421.6 1141.4 420.2 C1142.4 418.9 1144.0 413.5 1145.0 414.6 C1146.0 415.8 1147.6 428.4 1148.6 428.3 C1149.6 428.3 1151.2 415.2 1152.2 414.5 C1153.2 413.9 1154.8 423.9 1155.8 423.7 C1156.8 423.4 1158.4 412.7 1159.4 412.5 C1160.4 412.3 1162.0 422.3 1163.0 422.1 C1164.0 421.9 1165.6 412.0 1166.6 410.9 C1167.6 409.8 1169.2 413.7 1170.2 414.5 C1171.2 415.2 1172.8 414.5 1173.8 416.2 C1174.8 418.0 1176.4 426.8 1177.4 426.7 C1178.4 426.5 1180.0 416.7 1181.0 415.2 C1182.0 413.8 1183.6 416.8 1184.6 416.5 C1185.6 416.3 1187.2 412.1 1188.2 413.7 C1189.2 415.2 1190.8 426.7 1191.8 427.5 C1192.8 428.3 1194.4 420.0 1195.4 419.0 C1196.4 418.1 1198.0 419.9 1199.0 420.9 C1200.0 422.0 1201.6 427.4 1202.6 426.3 C1203.6 425.2 1205.2 414.2 1206.2 413.1 C1207.2 412.0 1208.8 418.2 1209.8 418.4 C1210.8 418.7 1212.4 415.6 1213.4 415.0 C1214.4 414.4 1216.0 414.8 1217.0 414.1 C1218.0 413.5 1219.6 409.7 1220.6 410.3 C1221.6 410.9 1223.2 417.1 1224.2 418.4 C1225.2 419.6 1226.8 420.4 1227.8 419.1 C1228.8 417.8 1230.4 409.5 1231.4 409.3 C1232.4 409.1 1234.0 415.8 1235.0 417.9 C1236.0 419.9 1237.9 424.1 1238.6 423.6 C1239.3 423.1 1239.5 416.2 1240.0 414.5 C1240.5 412.8 1241.4 412.1 1242.2 411.8 C1243.0 411.5 1244.8 412.3 1245.8 412.2 C1246.8 412.0 1248.4 410.5 1249.4 410.9 C1250.4 411.2 1252.0 414.6 1253.0 414.7 C1254.0 414.9 1255.6 412.1 1256.6 412.1 C1257.6 412.1 1259.2 414.3 1260.2 414.7 C1261.2 415.1 1262.8 415.2 1263.8 415.0 C1264.8 414.8 1266.4 413.1 1267.4 413.2 C1268.4 413.3 1270.0 414.9 1271.0 415.8 C1272.0 416.7 1273.6 418.3 1274.6 419.4 C1275.6 420.5 1277.2 424.0 1278.2 423.3 C1279.2 422.6 1280.8 415.3 1281.8 414.3 C1282.8 413.4 1284.4 415.2 1285.4 416.4 C1286.4 417.5 1288.0 423.2 1289.0 422.4 C1290.0 421.6 1291.6 411.5 1292.6 410.7 C1293.6 410.0 1295.2 417.1 1296.2 417.2 C1297.2 417.3 1298.8 412.2 1299.8 411.4 C1300.8 410.7 1302.4 411.8 1303.4 412.1 C1304.4 412.4 1306.0 412.8 1307.0 413.8 C1308.0 414.7 1309.6 418.5 1310.6 418.8 C1311.6 419.0 1313.2 415.7 1314.2 415.6 C1315.2 415.5 1316.8 418.4 1317.8 417.9 C1318.8 417.4 1320.4 413.4 1321.4 412.4 C1322.4 411.4 1324.0 410.4 1325.0 410.6 C1326.0 410.9 1327.6 415.1 1328.6 414.3 L1332.2 404.3 L1335.8 422.1 L1339.4 412.8 C1340.4 410.4 1342.0 406.2 1343.0 404.9 C1344.0 403.6 1345.6 403.0 1346.6 403.8 C1347.6 404.7 1349.5 410.2 1350.0 411.0 C1350.2 411.8 1350.0 410.1 1350.2 409.6 C1350.7 409.1 1352.8 406.2 1353.8 407.3 C1354.8 408.4 1356.4 416.9 1357.4 417.5 C1358.4 418.0 1360.0 412.1 1361.0 411.1 C1362.0 410.2 1363.6 410.8 1364.6 410.7 C1365.6 410.5 1367.2 409.6 1368.2 410.3 C1369.2 411.0 1370.8 415.9 1371.8 415.4 C1372.8 415.0 1374.4 407.5 1375.4 407.1 C1376.4 406.7 1378.0 412.1 1379.0 412.5 C1380.0 412.9 1381.6 410.1 1382.6 410.1 C1383.6 410.0 1385.2 413.2 1386.2 412.1 C1387.2 411.1 1388.8 402.9 1389.8 402.5 C1390.8 402.0 1392.4 407.2 1393.4 408.8 C1394.4 410.4 1396.0 413.6 1397.0 413.7 C1398.0 413.7 1399.6 410.8 1400.6 409.2 C1401.6 407.7 1403.2 403.4 1404.2 402.8 C1405.2 402.1 1406.8 404.5 1407.8 404.7 C1408.8 404.9 1410.4 402.4 1411.4 404.0 C1412.4 405.6 1414.0 414.9 1415.0 415.7 C1416.0 416.5 1417.6 410.1 1418.6 409.9 C1419.6 409.7 1421.2 414.1 1422.2 414.0 C1423.2 413.8 1424.8 409.8 1425.8 409.0 C1426.8 408.1 1428.4 408.4 1429.4 408.0 C1430.4 407.6 1432.0 405.8 1433.0 406.3 C1434.0 406.9 1435.6 411.7 1436.6 411.9 C1437.6 412.1 1439.2 407.7 1440.2 407.7 C1441.2 407.8 1442.8 411.8 1443.8 412.4 C1444.8 413.0 1446.4 413.1 1447.4 411.9 C1448.4 410.6 1450.0 405.0 1451.0 403.5 C1452.0 401.9 1453.6 400.7 1454.6 400.9 C1455.6 401.0 1457.2 403.7 1458.2 404.6 C1459.2 405.5 1460.9 406.6 1461.8 407.3 C1462.7 408.0 1464.1 409.0 1464.6 409.5 C1465.1 410.0 1464.9 410.1 1465.4 411.0 C1465.9 411.9 1467.5 414.7 1468.0 416.0 C1468.5 417.3 1468.6 418.5 1469.0 420.3 C1469.4 422.1 1470.5 427.6 1471.0 429.0 C1471.5 430.4 1471.9 429.6 1472.6 429.9 C1473.3 430.1 1475.5 430.1 1476.0 431.0 C1476.2 431.9 1476.0 435.3 1476.2 436.4 C1476.7 437.5 1479.0 437.7 1479.8 438.7 C1480.6 439.8 1481.5 443.1 1482.0 444.0 C1482.5 444.9 1482.7 444.7 1483.4 445.1 L1487.0 447.0 L1490.6 464.5 L1493.0 477.0 C1493.5 479.0 1493.6 478.4 1494.2 478.9 C1494.8 479.3 1496.5 479.3 1497.0 480.0 C1497.5 480.7 1497.2 481.6 1497.8 483.7 C1498.4 485.9 1500.8 493.1 1501.4 495.0 C1502.0 496.9 1501.5 496.5 1502.0 497.0 L1505.0 498.8 L1508.6 517.1 L1510.7 527.5 C1511.2 529.2 1511.9 528.5 1512.2 528.8 C1512.5 529.2 1512.5 528.3 1513.0 530.0 C1513.5 531.7 1515.2 538.8 1515.8 541.1 C1516.4 543.3 1516.5 545.2 1517.0 546.0 C1517.5 546.8 1519.1 546.8 1519.5 546.9" stroke="#6d3fc0"/><path d="M677.0 455.0 C677.5 454.6 679.6 451.8 680.6 452.1 C681.6 452.5 683.2 457.9 684.2 457.6 C685.2 457.3 686.8 451.2 687.8 450.0 C688.8 448.8 690.4 449.0 691.4 449.1 C692.4 449.2 694.0 450.8 695.0 450.7 C696.0 450.6 697.9 448.7 698.6 448.3 C699.3 447.8 699.5 447.1 700.0 447.5 C700.5 447.9 701.4 451.3 702.2 450.8 C703.0 450.4 704.8 444.7 705.8 444.2 C706.8 443.7 708.4 446.7 709.4 447.4 C710.4 448.0 712.0 449.0 713.0 448.6 C714.0 448.2 715.6 444.1 716.6 444.7 C717.6 445.2 719.2 452.8 720.2 452.4 C721.2 452.0 722.8 444.0 723.8 441.9 C724.8 439.7 726.4 436.8 727.4 437.4 C728.4 437.9 730.0 444.4 731.0 445.5 C732.0 446.6 733.6 445.8 734.6 445.2 C735.6 444.7 737.2 442.6 738.2 441.7 C739.2 440.7 740.8 437.9 741.8 438.4 C742.8 438.9 744.4 445.4 745.4 445.2 C746.4 444.9 748.0 437.8 749.0 436.5 C750.0 435.3 751.6 435.7 752.6 436.6 C753.6 437.5 755.2 442.2 756.2 442.9 C757.2 443.6 759.3 441.9 759.8 441.5 C760.0 441.1 759.8 440.2 760.0 440.0 C760.5 439.8 762.4 440.0 763.4 439.9 C764.4 439.8 766.0 439.7 767.0 439.3 C768.0 438.9 769.6 437.5 770.6 437.4 C771.6 437.3 773.2 438.3 774.2 438.5 C775.2 438.8 776.8 438.6 777.8 439.2 C778.8 439.7 780.4 442.6 781.4 442.2 C782.4 441.8 784.0 437.0 785.0 436.5 C786.0 435.9 787.6 438.6 788.6 438.2 C789.6 437.7 791.2 433.7 792.2 433.4 C793.2 433.1 794.8 434.5 795.8 435.8 C796.8 437.0 798.4 441.6 799.4 442.3 C800.4 443.0 802.0 441.3 803.0 440.5 C804.0 439.7 805.6 437.3 806.6 436.7 C807.6 436.0 809.2 436.2 810.2 436.0 C811.2 435.9 812.8 435.6 813.8 435.4 C814.8 435.2 816.4 434.0 817.4 434.3 C818.4 434.6 820.0 436.6 821.0 437.7 C822.0 438.7 823.6 442.2 824.6 442.0 C825.6 441.7 827.2 436.0 828.2 435.8 C829.2 435.6 830.8 441.0 831.8 440.8 C832.8 440.7 834.4 435.3 835.4 434.7 C836.4 434.2 838.0 436.7 839.0 436.9 C840.0 437.0 841.6 435.6 842.6 435.7 C843.6 435.9 845.2 438.2 846.2 437.9 C847.2 437.7 848.8 433.9 849.8 434.2 C850.8 434.5 852.4 440.2 853.4 439.9 C854.4 439.7 856.1 432.8 857.0 432.3 C857.9 431.8 859.5 436.4 860.0 436.5 C860.5 436.6 860.0 433.8 860.6 432.9 C861.2 431.9 863.2 429.7 864.2 429.7 C865.2 429.7 866.8 431.4 867.8 432.9 C868.8 434.3 870.4 439.6 871.4 439.9 C872.4 440.3 874.0 435.9 875.0 435.3 C876.0 434.7 877.6 434.9 878.6 435.6 C879.6 436.4 881.2 440.6 882.2 440.8 C883.2 441.0 884.8 436.9 885.8 436.8 C886.8 436.7 888.4 441.0 889.4 440.1 C890.4 439.3 892.0 431.2 893.0 430.9 C894.0 430.6 895.6 437.1 896.6 438.0 C897.6 438.9 899.2 437.3 900.2 437.3 C901.2 437.3 902.8 437.2 903.8 437.8 C904.8 438.4 906.4 441.4 907.4 441.3 C908.4 441.3 910.0 437.7 911.0 437.5 C912.0 437.3 913.6 440.3 914.6 439.9 C915.6 439.5 917.2 434.6 918.2 434.7 C919.2 434.8 920.8 440.3 921.8 440.6 C922.8 441.0 924.4 438.0 925.4 436.9 C926.4 435.9 928.0 433.1 929.0 433.3 C930.0 433.6 931.6 439.0 932.6 438.7 C933.6 438.4 935.2 432.4 936.2 431.0 C937.2 429.6 938.8 429.1 939.8 428.8 C940.8 428.6 942.4 427.2 943.4 429.0 C944.4 430.7 946.0 440.3 947.0 441.2 C948.0 442.2 949.6 436.6 950.6 435.9 C951.6 435.1 953.2 436.0 954.2 435.8 C955.2 435.7 957.0 435.0 957.8 434.7 C958.6 434.5 959.5 434.3 960.0 434.0 C960.5 433.7 960.7 432.7 961.4 432.7 C962.1 432.7 964.0 434.2 965.0 434.3 C966.0 434.4 967.6 432.7 968.6 433.3 C969.6 433.9 971.2 437.8 972.2 438.6 C973.2 439.4 974.8 440.2 975.8 439.1 C976.8 438.1 978.4 432.8 979.4 431.3 C980.4 429.9 982.0 428.5 983.0 428.9 C984.0 429.2 985.6 432.5 986.6 433.5 C987.6 434.5 989.5 435.4 990.0 436.0 C990.2 436.6 990.0 435.6 990.2 437.6 C990.5 439.6 991.5 447.0 992.0 450.0 L993.8 458.8 L997.4 476.6 L998.0 479.5 L1001.0 503.9 L1001.6 509.0 L1004.6 525.4 L1006.0 533.0 C1006.5 534.4 1007.6 534.6 1008.2 535.2 C1008.8 535.7 1009.5 534.8 1010.0 537.0 C1010.5 539.2 1011.4 547.5 1011.8 550.8 L1013.0 560.0 L1015.4 588.5 L1016.8 604.8 L1019.0 612.7 C1019.8 615.7 1022.0 623.8 1022.6 625.8 C1023.0 627.8 1022.6 625.8 1023.0 626.8 C1023.5 627.8 1025.2 631.2 1026.2 632.9 C1027.2 634.7 1028.8 637.1 1029.8 638.9 C1030.8 640.6 1032.5 643.6 1033.4 645.3 C1034.3 647.0 1036.0 650.0 1036.5 650.9 C1037.0 651.8 1036.5 650.5 1037.0 651.7 C1037.6 652.9 1039.6 657.5 1040.6 659.6 C1041.6 661.6 1043.6 665.2 1044.2 666.4 C1044.8 667.7 1044.5 668.4 1045.0 668.4 C1045.5 668.4 1046.9 666.4 1047.8 666.7 C1048.7 667.0 1050.4 669.8 1051.4 670.3 C1052.4 670.9 1054.0 670.6 1055.0 670.4 C1056.0 670.2 1057.6 669.1 1058.6 668.9 C1059.6 668.6 1061.2 668.5 1062.2 668.7 C1063.2 668.8 1064.8 669.8 1065.8 670.1 C1066.8 670.3 1068.4 670.9 1069.4 670.5 C1070.4 670.2 1072.0 668.1 1073.0 667.8 C1074.0 667.5 1075.6 668.2 1076.6 668.5 C1077.6 668.7 1079.5 669.4 1080.0 669.5 C1080.2 669.6 1080.0 669.8 1080.2 669.4 C1080.7 668.9 1082.8 667.1 1083.8 666.4 C1084.8 665.7 1086.4 665.3 1087.4 664.6 C1088.4 664.0 1090.0 662.5 1091.0 661.8 C1092.0 661.1 1093.6 660.2 1094.6 659.6 C1095.6 659.0 1097.5 657.6 1098.0 657.5 C1098.2 657.4 1098.0 658.8 1098.2 658.8 C1098.7 658.8 1100.8 657.9 1101.8 657.5 C1102.8 657.1 1104.4 656.4 1105.4 655.7 C1106.4 655.0 1108.0 653.4 1109.0 652.6 C1110.0 651.8 1111.6 650.5 1112.6 649.9 C1113.6 649.4 1115.2 648.9 1116.2 648.9 C1117.2 648.8 1119.3 649.7 1119.8 649.5 C1120.0 649.4 1119.8 647.2 1120.0 647.6 C1120.5 648.0 1122.4 653.0 1123.4 652.5 C1124.4 652.1 1126.0 645.8 1127.0 644.4 C1128.0 643.0 1129.6 643.2 1130.6 642.8 C1131.6 642.3 1133.2 641.7 1134.2 641.1 C1135.2 640.6 1136.8 639.7 1137.8 639.0 C1138.8 638.2 1140.8 636.0 1141.4 635.8 C1141.8 635.6 1141.4 637.8 1141.8 637.7 C1142.3 637.6 1144.0 636.4 1145.0 635.4 C1146.0 634.4 1147.8 631.6 1148.6 630.5 C1149.4 629.5 1150.2 628.6 1150.7 628.0 C1151.2 627.4 1151.5 627.4 1152.2 626.5 C1152.9 625.6 1154.8 622.8 1155.8 621.5 C1156.8 620.2 1158.4 618.2 1159.4 617.4 C1160.4 616.7 1162.0 616.5 1163.0 616.4 C1164.0 616.3 1165.8 617.0 1166.6 616.6 C1167.4 616.3 1168.0 614.3 1168.5 614.0 C1169.0 613.7 1169.4 615.2 1170.2 614.3 C1171.0 613.4 1172.8 608.4 1173.8 607.6 C1174.8 606.9 1176.4 608.8 1177.4 609.0 C1178.4 609.1 1180.3 608.8 1181.0 608.6 C1181.7 608.4 1182.1 608.3 1182.6 607.6 C1183.1 606.9 1183.8 604.5 1184.6 603.9 L1188.2 603.3 L1191.8 623.5 L1192.0 600.0 L1195.4 599.8 C1196.4 599.3 1198.0 597.9 1199.0 596.9 C1200.0 595.9 1201.8 592.8 1202.6 592.4 C1203.4 592.1 1204.5 594.2 1205.0 594.4 C1205.5 594.6 1205.5 594.3 1206.2 594.1 C1206.9 593.8 1208.8 591.8 1209.8 592.8 C1210.8 593.8 1212.7 601.8 1213.4 601.2 C1214.1 600.7 1214.5 591.0 1215.0 589.0 L1217.0 587.3 L1220.6 603.0 L1224.2 586.5 L1227.0 584.0 L1227.8 582.1 L1231.4 604.0 L1235.0 584.7 L1238.6 599.5 L1242.2 579.9 L1245.8 602.0 L1249.4 586.3 L1253.0 585.1 C1254.0 584.8 1255.6 584.3 1256.6 584.2 C1257.6 584.1 1259.4 584.4 1260.2 584.3 C1261.0 584.1 1261.5 583.5 1262.0 583.0 C1262.5 582.5 1263.0 580.7 1263.8 581.1 C1264.6 581.5 1266.4 585.1 1267.4 585.5 C1268.4 585.9 1270.0 583.9 1271.0 584.0 C1272.0 584.0 1273.6 585.8 1274.6 585.9 C1275.6 586.1 1277.4 584.7 1278.2 584.9 C1279.0 585.0 1279.5 585.8 1280.0 587.0 L1281.8 593.1 L1285.4 614.1 L1289.0 599.8 L1289.8 601.0 C1290.3 602.8 1291.8 609.2 1292.6 612.5 C1293.4 615.8 1294.9 622.4 1295.4 624.5 C1295.9 626.6 1295.6 625.2 1296.2 627.6 C1296.8 629.9 1298.8 637.5 1299.8 641.1 C1300.8 644.6 1302.5 650.8 1303.0 652.7 L1303.4 654.2 L1307.0 668.7 L1310.5 682.8 L1310.6 682.9 C1311.1 683.4 1313.4 685.4 1314.2 686.0 C1315.0 686.7 1315.5 686.1 1316.0 687.5 C1316.5 688.9 1317.2 693.1 1317.8 695.6 C1318.4 698.1 1319.5 703.6 1320.0 705.0 C1320.5 706.4 1320.7 705.4 1321.4 705.8 C1322.1 706.2 1324.1 707.4 1325.0 707.8 C1325.9 708.3 1327.5 708.8 1328.0 709.0 C1328.5 709.2 1328.0 708.9 1328.6 708.9 C1329.2 709.0 1331.2 709.4 1332.2 709.5 C1333.2 709.5 1334.8 709.1 1335.8 709.1 C1336.8 709.1 1338.4 709.4 1339.4 709.4 C1340.4 709.4 1342.0 709.1 1343.0 709.0 C1344.0 708.9 1345.6 708.8 1346.6 708.8 C1347.6 708.8 1349.2 708.9 1350.2 709.0 C1351.2 709.1 1352.8 709.3 1353.8 709.4 C1354.8 709.4 1356.4 709.2 1357.4 709.2 C1358.4 709.1 1360.0 709.2 1361.0 709.2 C1362.0 709.2 1363.6 708.9 1364.6 708.9 C1365.6 708.9 1367.2 709.2 1368.2 709.3 C1369.2 709.3 1370.8 709.3 1371.8 709.3 C1372.8 709.3 1374.4 709.2 1375.4 709.3 C1376.4 709.3 1378.0 709.7 1379.0 709.7 C1380.0 709.7 1381.6 709.4 1382.6 709.4 C1383.6 709.3 1385.2 709.5 1386.2 709.5 C1387.2 709.4 1388.8 709.2 1389.8 709.2 C1390.8 709.1 1392.4 709.5 1393.4 709.4 C1394.4 709.4 1396.0 709.0 1397.0 708.9 C1398.0 708.8 1399.6 709.0 1400.6 709.0 C1401.6 709.0 1403.2 709.1 1404.2 709.1 C1405.2 709.2 1406.8 709.3 1407.8 709.3 C1408.8 709.3 1410.4 709.2 1411.4 709.2 C1412.4 709.1 1414.0 709.0 1415.0 709.1 C1416.0 709.1 1417.6 709.4 1418.6 709.5 C1419.6 709.6 1421.2 709.7 1422.2 709.7 C1423.2 709.7 1424.8 709.3 1425.8 709.3 C1426.8 709.3 1428.4 709.6 1429.4 709.6 C1430.4 709.6 1432.0 709.5 1433.0 709.4 C1434.0 709.4 1435.6 709.2 1436.6 709.2 C1437.6 709.2 1439.2 709.6 1440.2 709.6 C1441.2 709.6 1442.8 709.3 1443.8 709.2 C1444.8 709.1 1446.4 709.0 1447.4 709.1 C1448.4 709.1 1450.0 709.6 1451.0 709.7 C1452.0 709.8 1453.6 709.8 1454.6 709.7 C1455.6 709.7 1457.2 709.5 1458.2 709.6 C1459.2 709.6 1460.8 709.8 1461.8 709.8 C1462.8 709.9 1464.4 709.7 1465.4 709.7 C1466.4 709.6 1468.0 709.6 1469.0 709.6 C1470.0 709.6 1471.6 709.8 1472.6 709.8 C1473.6 709.8 1475.2 709.6 1476.2 709.6 C1477.2 709.6 1478.8 709.7 1479.8 709.7 C1480.8 709.7 1482.4 709.5 1483.4 709.5 C1484.4 709.5 1486.0 709.5 1487.0 709.5 C1488.0 709.6 1489.6 710.0 1490.6 710.0 C1491.6 710.0 1493.2 709.5 1494.2 709.5 C1495.2 709.5 1496.8 709.7 1497.8 709.8 C1498.8 709.8 1500.4 709.8 1501.4 709.8 C1502.4 709.7 1504.0 709.5 1505.0 709.5 C1506.0 709.5 1507.6 709.7 1508.6 709.7 C1509.6 709.7 1511.2 709.6 1512.2 709.6 C1513.2 709.6 1514.8 709.7 1515.8 709.7 C1516.8 709.8 1518.5 709.8 1519.4 709.9 C1520.3 709.9 1521.6 709.8 1522.0 709.8" stroke="#d5dae5"/><path d="M677.0 481.9 C677.5 480.8 679.8 475.9 680.6 474.3 C681.5 472.6 682.5 471.5 683.0 470.0 C683.5 468.5 683.5 464.9 684.2 463.9 C684.9 462.9 687.0 463.3 687.8 463.1 C688.6 462.9 689.5 462.8 690.0 462.5 C690.5 462.2 690.7 460.8 691.4 460.7 C692.1 460.7 694.0 461.5 695.0 462.1 C696.0 462.8 697.9 465.6 698.6 465.5 C699.3 465.3 699.5 462.0 700.0 461.0 C700.5 460.0 701.4 460.5 702.2 458.7 L705.8 448.3 L709.4 463.5 L713.0 460.5 L716.6 453.4 L720.2 470.1 L723.8 448.9 L727.4 452.7 C728.4 454.1 730.0 458.5 731.0 458.3 C732.0 458.1 733.6 451.3 734.6 451.4 L738.2 459.1 L741.8 444.0 L745.4 458.4 L749.0 462.3 L752.6 447.9 L756.2 445.2 C757.2 445.2 759.3 446.9 759.8 447.4 C760.0 447.9 759.8 449.0 760.0 448.6 C760.5 448.2 762.4 445.9 763.4 444.6 C764.4 443.4 766.0 439.4 767.0 440.1 C768.0 440.8 769.6 449.6 770.6 449.8 C771.6 450.0 773.2 442.6 774.2 441.7 C775.2 440.8 776.8 444.0 777.8 443.7 C778.8 443.4 780.4 438.9 781.4 439.2 C782.4 439.6 784.0 445.7 785.0 446.4 C786.0 447.2 787.6 444.8 788.6 444.5 C789.6 444.2 791.2 443.9 792.2 444.3 C793.2 444.8 794.8 449.0 795.8 447.9 C796.8 446.7 798.4 436.4 799.4 436.3 C800.4 436.2 802.0 444.8 803.0 447.4 C804.0 450.0 805.6 453.2 806.6 454.4 C807.6 455.7 809.2 456.8 810.2 456.1 C811.2 455.3 812.8 450.9 813.8 449.4 C814.8 447.9 816.4 445.1 817.4 445.3 C818.4 445.5 820.0 450.1 821.0 450.7 C822.0 451.4 823.6 450.0 824.6 449.9 C825.6 449.9 827.2 450.6 828.2 450.3 C829.2 450.0 830.8 449.5 831.8 447.6 C832.8 445.7 834.4 438.4 835.4 436.8 C836.4 435.1 838.0 435.4 839.0 436.0 C840.0 436.7 841.6 438.7 842.6 441.3 C843.6 444.0 845.2 454.0 846.2 454.9 L849.8 447.7 L853.4 433.2 L857.0 459.3 L860.0 444.0 L860.6 446.5 C861.2 446.6 863.2 444.0 864.2 444.7 C865.2 445.3 866.8 450.4 867.8 451.1 C868.8 451.7 870.4 450.3 871.4 449.2 C872.4 448.2 874.0 444.0 875.0 443.6 C876.0 443.2 877.6 445.8 878.6 446.4 C879.6 447.0 881.2 448.5 882.2 447.9 C883.2 447.3 884.8 443.5 885.8 442.2 C886.8 441.0 888.4 438.1 889.4 439.2 C890.4 440.2 892.0 448.4 893.0 449.4 C894.0 450.3 895.6 447.0 896.6 445.8 C897.6 444.6 899.2 442.1 900.2 441.0 C901.2 439.8 902.8 437.4 903.8 437.4 C904.8 437.3 906.4 439.2 907.4 440.6 L911.0 447.6 L914.6 433.0 L918.2 433.6 C919.2 434.8 920.8 440.9 921.8 441.9 C922.8 442.9 924.4 440.3 925.4 440.5 C926.4 440.6 928.0 442.7 929.0 443.1 C930.0 443.5 931.6 444.6 932.6 443.3 L936.2 433.5 L939.8 447.8 L943.4 442.2 C944.4 440.6 946.0 436.5 947.0 436.2 C948.0 435.8 949.6 439.0 950.6 439.7 C951.6 440.3 953.2 440.5 954.2 440.8 C955.2 441.1 957.0 442.0 957.8 441.7 C958.6 441.4 959.5 439.5 960.0 438.7 C960.5 437.9 960.7 434.9 961.4 435.8 C962.1 436.7 964.0 445.4 965.0 445.0 C966.0 444.5 967.6 433.5 968.6 432.6 C969.6 431.7 971.2 437.7 972.2 438.7 C973.2 439.7 974.8 438.3 975.8 439.6 C976.8 440.8 978.4 448.3 979.4 447.6 C980.4 447.0 982.0 437.0 983.0 434.8 C984.0 432.7 985.6 432.9 986.6 432.6 C987.6 432.2 989.2 431.0 990.2 432.2 C991.2 433.4 992.8 440.0 993.8 441.2 C994.8 442.3 996.4 440.7 997.4 440.4 C998.4 440.0 1000.0 439.0 1001.0 438.5 C1002.0 438.0 1003.6 436.0 1004.6 436.9 C1005.6 437.8 1007.2 443.9 1008.2 444.9 C1009.2 445.8 1010.8 444.0 1011.8 443.8 C1012.8 443.6 1014.4 444.2 1015.4 443.3 C1016.4 442.5 1018.0 437.8 1019.0 437.7 C1020.0 437.6 1021.6 441.2 1022.6 442.8 C1023.6 444.3 1025.2 448.9 1026.2 448.9 C1027.2 448.8 1028.8 442.6 1029.8 442.4 L1033.4 447.5 L1037.0 432.9 L1040.6 449.6 L1044.2 436.9 C1045.2 435.5 1046.8 440.3 1047.8 439.9 C1048.8 439.6 1050.4 433.9 1051.4 434.5 C1052.4 435.2 1054.0 442.6 1055.0 444.7 C1056.0 446.7 1057.6 450.3 1058.6 449.1 C1059.6 447.9 1061.2 437.5 1062.2 436.3 C1063.2 435.0 1064.8 440.2 1065.8 440.3 C1066.8 440.4 1068.4 436.0 1069.4 436.9 C1070.4 437.9 1072.0 445.6 1073.0 447.2 C1074.0 448.7 1075.6 449.6 1076.6 448.0 C1077.6 446.4 1079.2 435.7 1080.2 435.7 C1081.2 435.8 1082.8 448.3 1083.8 448.5 C1084.8 448.8 1086.4 438.8 1087.4 437.4 C1088.4 436.1 1090.0 439.5 1091.0 439.0 L1094.6 433.7 L1098.2 448.7 L1101.8 433.7 L1105.4 446.7 L1109.0 432.6 L1112.6 439.0 C1113.6 438.5 1115.2 429.2 1116.2 429.1 C1117.2 429.0 1118.8 437.6 1119.8 438.4 C1120.8 439.2 1122.4 435.7 1123.4 435.1 C1124.4 434.4 1126.0 434.0 1127.0 434.0 C1128.0 434.0 1129.6 434.8 1130.6 435.1 C1131.6 435.3 1133.2 436.4 1134.2 435.8 C1135.2 435.2 1136.8 430.2 1137.8 430.8 C1138.8 431.4 1140.4 438.4 1141.4 440.2 C1142.4 442.1 1144.0 443.1 1145.0 443.7 C1146.0 444.4 1147.6 446.1 1148.6 444.7 C1149.6 443.3 1151.2 434.4 1152.2 433.9 C1153.2 433.3 1154.8 441.2 1155.8 440.8 C1156.8 440.3 1158.4 432.3 1159.4 430.9 C1160.4 429.4 1162.0 429.3 1163.0 430.6 C1164.0 432.0 1165.6 438.7 1166.6 440.7 C1167.6 442.6 1169.2 444.0 1170.2 444.6 C1171.2 445.2 1172.8 446.7 1173.8 445.1 C1174.8 443.6 1176.4 434.4 1177.4 433.7 C1178.4 433.0 1180.0 440.1 1181.0 440.4 C1182.0 440.6 1183.6 435.6 1184.6 435.5 C1185.6 435.3 1187.2 439.7 1188.2 439.1 L1191.8 430.9 L1195.4 453.6 L1199.0 443.0 C1200.0 440.4 1201.6 435.2 1202.6 435.7 C1203.6 436.1 1205.2 445.7 1206.2 446.1 C1207.2 446.5 1208.8 439.3 1209.8 438.4 C1210.8 437.5 1212.4 439.1 1213.4 439.8 C1214.4 440.4 1216.0 442.2 1217.0 442.8 C1218.0 443.4 1219.6 444.6 1220.6 444.0 C1221.6 443.4 1223.2 438.5 1224.2 438.4 C1225.2 438.4 1226.8 443.5 1227.8 443.7 C1228.8 444.0 1230.4 439.8 1231.4 440.0 C1232.4 440.2 1234.0 444.0 1235.0 445.0 C1236.0 446.0 1237.9 448.1 1238.6 447.1 C1239.3 446.1 1239.5 438.4 1240.0 438.0 C1240.5 437.6 1241.4 444.6 1242.2 444.2 C1243.0 443.8 1244.8 437.2 1245.8 435.5 C1246.8 433.7 1248.4 431.0 1249.4 431.7 C1250.4 432.5 1252.0 439.0 1253.0 440.8 C1254.0 442.7 1255.6 444.9 1256.6 444.9 C1257.6 444.8 1259.2 440.7 1260.2 440.3 C1261.2 439.9 1262.8 441.8 1263.8 442.1 C1264.8 442.5 1266.4 444.2 1267.4 442.9 C1268.4 441.6 1270.0 433.8 1271.0 433.2 C1272.0 432.6 1273.6 439.0 1274.6 438.7 C1275.6 438.4 1277.2 430.6 1278.2 431.1 C1279.2 431.7 1280.8 440.8 1281.8 442.6 C1282.8 444.3 1284.4 442.4 1285.4 443.4 L1289.0 449.5 L1292.6 434.7 L1296.2 432.6 L1299.8 446.9 L1303.4 436.2 C1304.4 434.2 1306.0 432.8 1307.0 432.7 C1308.0 432.5 1309.6 435.4 1310.6 434.8 C1311.6 434.3 1313.2 429.6 1314.2 428.5 C1315.2 427.4 1316.8 425.5 1317.8 427.1 C1318.8 428.8 1320.4 438.5 1321.4 439.8 C1322.4 441.2 1324.0 437.4 1325.0 436.9 C1326.0 436.3 1327.6 435.4 1328.6 436.1 C1329.6 436.8 1331.2 440.8 1332.2 441.6 C1333.2 442.3 1334.8 441.6 1335.8 441.6 C1336.8 441.6 1338.4 442.6 1339.4 441.4 C1340.4 440.1 1342.0 433.1 1343.0 432.8 C1344.0 432.4 1345.6 439.2 1346.6 438.9 C1347.6 438.6 1349.2 431.8 1350.2 430.9 C1351.2 430.0 1352.8 431.5 1353.8 432.6 C1354.8 433.6 1356.4 436.1 1357.4 438.1 L1361.0 446.9 L1364.6 428.1 L1368.2 440.4 C1369.2 441.4 1370.8 435.3 1371.8 435.0 C1372.8 434.7 1374.4 439.0 1375.4 438.1 L1379.0 428.8 L1382.6 449.4 L1386.2 431.7 L1389.8 435.9 C1390.8 436.8 1392.4 438.2 1393.4 437.8 C1394.4 437.4 1396.1 433.7 1397.0 433.3 C1397.9 432.9 1399.5 434.6 1400.0 435.0 C1400.5 435.4 1400.0 437.4 1400.6 436.0 C1401.2 434.7 1403.2 425.0 1404.2 425.5 C1405.2 426.0 1406.8 438.7 1407.8 439.5 C1408.8 440.3 1410.4 431.7 1411.4 431.1 C1412.4 430.5 1414.0 434.7 1415.0 435.0 C1416.0 435.3 1417.6 432.7 1418.6 433.2 C1419.6 433.7 1421.2 437.9 1422.2 438.7 C1423.2 439.6 1424.8 439.6 1425.8 439.1 C1426.8 438.6 1428.4 434.9 1429.4 435.1 C1430.4 435.3 1432.0 441.3 1433.0 440.8 C1434.0 440.3 1435.6 431.6 1436.6 431.4 C1437.6 431.2 1439.2 439.7 1440.2 439.3 C1441.2 438.8 1442.8 430.0 1443.8 428.4 C1444.8 426.9 1446.4 426.5 1447.4 428.2 C1448.4 429.8 1450.0 438.5 1451.0 439.9 C1452.0 441.3 1453.6 439.7 1454.6 438.2 L1458.2 429.6 L1461.8 443.7 L1465.4 430.7 C1466.4 429.0 1468.0 430.3 1469.0 431.3 C1470.0 432.4 1471.6 437.0 1472.6 438.0 C1473.6 439.0 1475.2 438.0 1476.2 438.4 C1477.2 438.9 1478.8 442.6 1479.8 441.2 C1480.8 439.7 1482.4 428.4 1483.4 428.2 C1484.4 428.0 1486.0 439.3 1487.0 439.8 C1488.0 440.4 1489.6 432.0 1490.6 432.0 C1491.6 432.0 1493.2 439.6 1494.2 439.8 C1495.2 439.9 1496.8 434.3 1497.8 433.2 C1498.8 432.1 1500.4 432.9 1501.4 432.0 C1502.4 431.2 1504.0 426.4 1505.0 427.0 C1506.0 427.7 1507.6 435.2 1508.6 436.6 C1509.6 438.0 1511.2 437.2 1512.2 436.8 C1513.2 436.3 1514.8 433.0 1515.8 433.5 C1516.8 434.0 1518.5 439.6 1519.4 440.4 C1520.3 441.1 1521.6 439.0 1522.0 438.8" stroke="#0068c9"/><path d="M677.0 498.4 C677.5 496.9 679.9 487.0 680.6 487.2 C681.3 487.4 681.5 497.5 682.0 500.0 C682.5 502.5 683.5 503.6 684.2 504.7 C684.9 505.8 686.5 507.5 687.0 508.0 L687.8 508.2 L691.4 490.8 L692.0 495.0 C692.5 495.2 694.1 493.2 695.0 491.9 C695.9 490.6 697.9 486.4 698.6 485.9 C699.3 485.3 699.5 486.5 700.0 488.0 C700.5 489.5 701.4 495.6 702.2 496.2 C703.0 496.9 704.8 492.2 705.8 492.5 L709.4 498.8 L713.0 478.7 L716.6 481.0 C717.6 480.1 719.2 472.5 720.2 472.3 C721.2 472.1 722.8 477.5 723.8 479.8 C724.8 482.0 726.4 486.1 727.4 488.1 L731.0 493.7 L734.6 475.8 L738.2 475.9 C739.2 475.9 740.8 477.0 741.8 476.2 C742.8 475.5 744.4 470.6 745.4 470.5 C746.4 470.4 748.3 474.8 749.0 475.5 C749.7 476.3 749.5 476.3 750.0 476.0 C750.5 475.7 751.7 474.0 752.6 473.3 C753.5 472.5 755.2 471.0 756.2 470.8 C757.2 470.5 758.8 470.1 759.8 471.7 L763.4 482.2 L767.0 467.9 L770.6 480.9 C771.6 482.0 773.2 476.9 774.2 475.8 C775.2 474.8 776.8 475.1 777.8 473.5 C778.8 471.8 780.4 464.0 781.4 464.0 C782.4 464.0 784.0 470.7 785.0 473.3 L788.6 482.1 L792.2 466.9 L795.8 481.9 L799.4 469.6 C800.0 468.4 799.5 472.7 800.0 473.0 C800.5 473.3 802.1 471.7 803.0 471.8 C803.9 471.9 805.6 473.1 806.6 473.5 C807.6 473.8 809.2 474.2 810.2 474.4 C811.2 474.6 812.8 475.9 813.8 474.9 C814.8 474.0 816.4 467.3 817.4 467.5 C818.4 467.7 820.0 475.3 821.0 476.5 C822.0 477.7 823.6 475.7 824.6 475.7 C825.6 475.7 827.2 476.4 828.2 476.8 C829.2 477.1 830.8 478.4 831.8 478.0 C832.8 477.7 834.4 474.0 835.4 474.2 C836.4 474.4 838.0 480.1 839.0 479.4 C840.0 478.7 841.6 470.9 842.6 469.3 C843.6 467.6 845.2 466.4 846.2 467.8 C847.2 469.2 848.8 478.1 849.8 479.3 C850.8 480.6 852.4 478.4 853.4 476.6 C854.4 474.8 856.0 466.8 857.0 466.5 C858.0 466.2 859.6 473.4 860.6 474.4 C861.6 475.4 863.2 473.5 864.2 473.5 C865.2 473.5 866.8 474.9 867.8 474.2 C868.8 473.4 870.4 468.7 871.4 468.1 C872.4 467.4 874.0 469.3 875.0 469.8 C876.0 470.3 877.6 470.5 878.6 471.6 C879.6 472.7 881.2 478.3 882.2 477.6 C883.2 476.9 884.8 467.5 885.8 466.4 C886.8 465.3 888.4 469.7 889.4 469.7 C890.4 469.8 892.0 467.5 893.0 466.8 C894.0 466.0 895.6 464.6 896.6 464.6 C897.6 464.7 899.2 465.8 900.2 467.3 C901.2 468.9 902.8 475.4 903.8 475.4 C904.8 475.4 906.4 467.6 907.4 467.1 C908.4 466.6 910.0 470.3 911.0 471.9 C912.0 473.4 913.6 477.7 914.6 478.0 C915.6 478.2 917.2 474.4 918.2 473.9 C919.2 473.3 920.8 474.3 921.8 474.2 C922.8 474.1 924.4 473.5 925.4 473.1 C926.4 472.6 928.0 472.0 929.0 471.1 C930.0 470.3 931.6 467.5 932.6 467.1 C933.6 466.6 935.2 467.8 936.2 468.1 C937.2 468.3 938.8 467.7 939.8 468.8 C940.8 469.9 942.4 474.5 943.4 475.8 C944.4 477.2 946.0 479.4 947.0 478.2 C948.0 477.1 949.6 468.3 950.6 467.8 C951.6 467.2 953.2 474.0 954.2 474.2 C955.2 474.3 957.0 469.4 957.8 468.8 C958.6 468.2 959.5 470.2 960.0 470.0 C960.5 469.8 960.7 467.6 961.4 467.5 C962.1 467.4 964.0 468.9 965.0 469.5 C966.0 470.2 967.6 472.1 968.6 472.0 C969.6 471.8 971.2 468.4 972.2 468.3 C973.2 468.2 974.8 471.9 975.8 471.2 C976.8 470.5 978.4 463.6 979.4 463.4 C980.4 463.2 982.0 468.8 983.0 469.5 C984.0 470.1 985.6 468.1 986.6 467.8 C987.6 467.5 989.2 468.3 990.2 467.5 C991.2 466.6 992.8 461.3 993.8 462.1 C994.8 462.9 996.4 472.1 997.4 473.3 C998.4 474.5 1000.0 471.0 1001.0 470.5 C1002.0 470.1 1003.6 470.1 1004.6 469.9 C1005.6 469.8 1007.2 469.7 1008.2 469.4 C1009.2 469.1 1010.8 467.9 1011.8 468.0 C1012.8 468.1 1014.4 469.5 1015.4 470.0 C1016.4 470.6 1018.0 471.2 1019.0 471.8 C1020.0 472.3 1021.6 474.9 1022.6 474.0 C1023.6 473.1 1025.2 465.6 1026.2 465.4 L1029.8 473.1 L1033.4 458.3 L1037.0 457.0 C1038.0 457.9 1039.6 461.8 1040.6 464.5 C1041.6 467.1 1043.2 475.8 1044.2 476.0 C1045.2 476.2 1046.8 466.8 1047.8 466.0 C1048.8 465.2 1050.4 470.0 1051.4 470.2 C1052.4 470.5 1054.0 469.1 1055.0 467.8 C1056.0 466.5 1057.6 460.7 1058.6 461.2 C1059.6 461.7 1061.2 469.8 1062.2 471.4 C1063.2 473.0 1064.8 473.2 1065.8 472.7 C1066.8 472.2 1068.4 469.1 1069.4 467.6 C1070.4 466.1 1072.0 461.9 1073.0 461.9 C1074.0 461.8 1075.6 466.6 1076.6 467.2 C1077.6 467.8 1079.2 465.0 1080.2 465.9 C1081.2 466.7 1082.8 474.0 1083.8 473.5 C1084.8 473.1 1086.4 464.6 1087.4 462.7 C1088.4 460.8 1090.0 460.3 1091.0 460.2 C1092.0 460.0 1093.6 460.0 1094.6 461.5 C1095.6 463.1 1097.4 470.9 1098.2 471.3 C1099.0 471.6 1099.5 465.7 1100.0 464.0 C1100.5 462.3 1101.0 459.3 1101.8 459.0 C1102.6 458.7 1104.4 460.9 1105.4 461.8 C1106.4 462.7 1108.0 465.7 1109.0 465.5 C1110.0 465.3 1111.6 460.7 1112.6 460.1 C1113.6 459.6 1115.2 461.9 1116.2 461.8 C1117.2 461.6 1118.8 459.2 1119.8 459.0 C1120.8 458.7 1122.4 459.1 1123.4 460.1 C1124.4 461.0 1126.0 465.1 1127.0 465.6 C1128.0 466.1 1129.6 464.4 1130.6 463.6 C1131.6 462.8 1133.2 461.1 1134.2 460.0 C1135.2 459.0 1136.8 454.7 1137.8 456.1 C1138.8 457.4 1140.4 469.1 1141.4 469.6 C1142.4 470.1 1144.0 461.5 1145.0 459.7 C1146.0 457.9 1147.6 455.9 1148.6 456.6 C1149.6 457.3 1151.2 463.3 1152.2 464.7 C1153.2 466.1 1154.8 467.1 1155.8 466.6 C1156.8 466.0 1158.4 460.6 1159.4 460.7 C1160.4 460.7 1162.0 466.3 1163.0 466.8 C1164.0 467.4 1165.6 464.8 1166.6 464.5 C1167.6 464.2 1169.2 464.2 1170.2 464.7 C1171.2 465.1 1172.8 467.8 1173.8 467.6 C1174.8 467.5 1176.4 464.2 1177.4 463.4 C1178.4 462.6 1180.0 462.7 1181.0 462.0 C1182.0 461.3 1183.6 458.7 1184.6 458.6 C1185.6 458.5 1187.2 461.7 1188.2 461.3 C1189.2 460.9 1190.8 455.3 1191.8 455.6 C1192.8 455.9 1194.4 461.7 1195.4 463.2 C1196.4 464.7 1198.0 466.6 1199.0 466.4 C1200.0 466.2 1201.6 461.8 1202.6 461.7 C1203.6 461.6 1205.2 465.4 1206.2 465.4 C1207.2 465.4 1208.8 461.8 1209.8 461.6 C1210.8 461.4 1212.4 463.5 1213.4 464.0 C1214.4 464.5 1216.0 465.7 1217.0 464.9 C1218.0 464.1 1219.6 458.1 1220.6 458.2 C1221.6 458.2 1223.2 465.6 1224.2 465.1 C1225.2 464.6 1226.8 456.5 1227.8 455.0 C1228.8 453.5 1230.4 453.7 1231.4 454.5 C1232.4 455.3 1234.0 459.2 1235.0 460.6 C1236.0 462.0 1237.9 464.4 1238.6 464.3 C1239.3 464.1 1239.5 459.9 1240.0 459.6 C1240.5 459.3 1241.4 462.1 1242.2 461.9 C1243.0 461.6 1244.8 457.1 1245.8 457.7 C1246.8 458.3 1248.4 465.3 1249.4 465.9 C1250.4 466.5 1252.0 462.2 1253.0 461.7 C1254.0 461.2 1255.6 462.2 1256.6 462.7 C1257.6 463.1 1259.2 466.3 1260.2 464.9 C1261.2 463.5 1262.8 453.7 1263.8 453.0 C1264.8 452.2 1266.4 459.1 1267.4 459.7 C1268.4 460.2 1270.0 457.2 1271.0 456.8 C1272.0 456.3 1273.6 454.9 1274.6 456.5 C1275.6 458.1 1277.2 467.6 1278.2 468.1 C1279.2 468.6 1280.8 460.9 1281.8 460.1 C1282.8 459.3 1284.4 461.5 1285.4 462.2 C1286.4 463.0 1288.0 465.5 1289.0 465.4 C1290.0 465.2 1291.6 462.7 1292.6 461.4 C1293.6 460.0 1295.2 456.6 1296.2 455.7 C1297.2 454.8 1298.8 454.7 1299.8 455.1 C1300.8 455.4 1302.4 456.9 1303.4 458.2 C1304.4 459.6 1306.0 464.3 1307.0 464.7 C1308.0 465.1 1309.6 461.9 1310.6 461.1 C1311.6 460.3 1313.2 458.6 1314.2 459.3 C1315.2 459.9 1316.8 466.4 1317.8 465.4 C1318.8 464.5 1320.4 454.3 1321.4 452.3 C1322.4 450.3 1324.0 449.7 1325.0 451.4 C1326.0 453.1 1327.6 463.0 1328.6 464.4 C1329.6 465.8 1331.2 463.1 1332.2 461.5 C1333.2 459.8 1334.8 452.2 1335.8 452.7 C1336.8 453.2 1338.4 464.0 1339.4 464.8 C1340.4 465.7 1342.0 458.9 1343.0 458.7 C1344.0 458.4 1345.6 462.7 1346.6 463.1 C1347.6 463.4 1349.2 461.0 1350.2 461.1 C1351.2 461.3 1352.8 463.7 1353.8 464.1 C1354.8 464.6 1356.4 465.8 1357.4 464.6 C1358.4 463.3 1360.0 457.1 1361.0 455.4 C1362.0 453.7 1363.6 452.2 1364.6 452.4 C1365.6 452.7 1367.2 455.1 1368.2 457.0 C1369.2 459.0 1370.8 466.0 1371.8 466.0 C1372.8 466.1 1374.4 457.0 1375.4 457.3 C1376.4 457.6 1378.0 468.2 1379.0 468.1 C1380.0 468.1 1381.6 458.9 1382.6 456.9 C1383.6 454.9 1385.2 454.3 1386.2 453.8 C1387.2 453.2 1388.8 451.5 1389.8 452.8 C1390.8 454.1 1392.4 462.0 1393.4 462.9 C1394.4 463.8 1396.0 459.5 1397.0 459.3 C1398.0 459.1 1399.6 460.9 1400.6 461.6 C1401.6 462.2 1403.2 465.1 1404.2 463.9 C1405.2 462.6 1406.8 453.5 1407.8 453.0 C1408.8 452.4 1410.4 460.3 1411.4 460.0 L1415.0 451.1 L1418.6 467.5 L1422.2 453.4 L1425.8 451.9 L1429.4 468.9 L1433.0 456.2 C1434.0 454.0 1435.6 452.2 1436.6 453.7 L1440.2 466.7 L1443.8 451.2 L1447.4 472.8 L1451.0 466.3 C1452.0 464.5 1453.6 461.7 1454.6 460.3 C1455.6 458.9 1457.2 456.2 1458.2 456.4 C1459.2 456.7 1460.8 461.3 1461.8 462.2 C1462.8 463.2 1464.4 462.3 1465.4 463.1 L1469.0 467.6 L1472.6 452.3 L1476.2 460.2 C1477.2 460.3 1478.8 454.6 1479.8 453.3 C1480.8 452.0 1482.4 449.2 1483.4 450.7 C1484.4 452.3 1486.0 463.0 1487.0 464.3 C1488.0 465.5 1489.6 460.7 1490.6 459.5 C1491.6 458.4 1493.2 457.1 1494.2 456.4 C1495.2 455.7 1496.8 453.3 1497.8 454.5 C1498.8 455.6 1500.4 462.5 1501.4 464.5 C1502.4 466.4 1504.0 469.5 1505.0 468.2 C1506.0 466.9 1507.6 457.1 1508.6 455.5 C1509.6 454.0 1511.2 458.1 1512.2 457.4 C1513.2 456.6 1514.8 450.1 1515.8 450.2 C1516.8 450.4 1518.5 457.8 1519.4 458.5 C1520.3 459.1 1521.6 455.5 1522.0 455.0" stroke="#83c9ff"/><path d="M677.0 489.1 C677.5 488.3 679.8 484.9 680.6 483.4 C681.5 481.8 682.5 480.2 683.0 478.0 C683.5 475.8 683.5 468.7 684.2 467.7 C684.9 466.7 686.8 470.7 687.8 471.2 C688.8 471.7 690.4 471.6 691.4 471.2 C692.4 470.8 694.0 468.1 695.0 468.5 C696.0 468.9 697.9 473.1 698.6 473.7 C699.3 474.3 699.5 471.7 700.0 473.0 C700.5 474.3 701.4 481.4 702.2 483.0 C703.0 484.7 704.8 485.4 705.8 484.8 C706.8 484.1 708.4 480.0 709.4 478.4 C710.4 476.7 712.0 472.7 713.0 473.0 C714.0 473.2 715.6 478.1 716.6 479.9 C717.6 481.7 719.2 484.4 720.2 485.5 L723.8 487.9 L727.4 467.1 L731.0 469.6 L734.6 482.1 L738.2 464.8 L741.8 464.3 L745.4 478.6 L749.0 483.6 C750.0 484.0 751.6 481.6 752.6 480.8 C753.6 479.9 755.2 478.7 756.2 477.7 C757.2 476.6 758.8 472.1 759.8 473.3 C760.8 474.6 762.4 485.8 763.4 486.5 C764.4 487.2 766.0 479.9 767.0 478.4 C768.0 477.0 769.6 476.9 770.6 476.4 C771.6 475.9 773.2 476.3 774.2 474.7 C775.2 473.0 776.8 465.0 777.8 464.7 C778.8 464.5 780.4 470.0 781.4 472.7 C782.4 475.4 784.0 483.0 785.0 483.5 C786.0 484.1 787.6 479.1 788.6 476.4 C789.6 473.7 791.2 465.4 792.2 464.2 L795.8 468.2 L799.4 484.6 L803.0 478.9 C804.0 477.5 805.6 476.6 806.6 475.1 C807.6 473.5 809.2 468.2 810.2 467.9 C811.2 467.7 812.8 472.4 813.8 473.4 C814.8 474.4 816.4 475.4 817.4 474.7 C818.4 474.1 820.0 468.5 821.0 468.8 C822.0 469.0 823.6 476.2 824.6 476.6 C825.6 477.1 827.2 472.5 828.2 471.7 C829.2 470.9 830.8 470.6 831.8 470.9 C832.8 471.2 834.4 472.4 835.4 473.9 C836.4 475.4 838.0 481.6 839.0 481.5 C840.0 481.3 841.6 473.5 842.6 472.8 C843.6 472.1 845.2 476.9 846.2 476.7 C847.2 476.5 848.8 471.7 849.8 471.3 C850.8 470.9 852.4 473.8 853.4 474.0 C854.4 474.2 856.0 471.3 857.0 472.8 C858.0 474.3 859.6 483.2 860.6 484.8 C861.6 486.4 863.2 485.9 864.2 483.9 C865.2 481.8 866.8 471.9 867.8 470.3 C868.8 468.8 870.4 471.6 871.4 472.9 C872.4 474.1 874.0 478.9 875.0 479.0 L878.6 473.8 L882.2 489.2 L885.8 477.8 C886.8 476.0 888.4 477.3 889.4 476.8 C890.4 476.3 892.0 474.7 893.0 474.0 C894.0 473.3 895.6 470.4 896.6 471.7 C897.6 473.0 899.2 482.2 900.2 483.3 C901.2 484.3 902.8 479.3 903.8 479.1 C904.8 479.0 906.4 482.2 907.4 482.3 C908.4 482.3 910.0 479.2 911.0 479.3 C912.0 479.4 913.6 484.2 914.6 482.8 C915.6 481.3 917.2 470.1 918.2 469.0 C919.2 467.9 920.8 473.6 921.8 475.0 C922.8 476.4 924.4 479.2 925.4 478.7 C926.4 478.1 928.0 470.8 929.0 470.9 C930.0 470.9 931.6 478.9 932.6 479.0 C933.6 479.2 935.2 473.5 936.2 472.2 C937.2 470.8 938.8 470.3 939.8 469.3 C940.8 468.4 942.4 464.5 943.4 465.5 C944.4 466.5 946.0 474.4 947.0 476.2 C948.0 478.0 949.6 477.8 950.6 478.1 C951.6 478.5 953.2 479.2 954.2 478.6 C955.2 478.0 957.0 474.4 957.8 473.8 C958.6 473.1 959.5 474.0 960.0 474.0 C960.5 474.0 960.7 474.6 961.4 473.9 C962.1 473.2 964.0 469.5 965.0 469.1 C966.0 468.8 967.6 470.0 968.6 471.6 C969.6 473.3 971.2 480.3 972.2 481.0 C973.2 481.6 974.8 477.5 975.8 476.4 L979.4 472.5 L983.0 494.9 L986.6 484.8 C987.6 482.8 989.2 480.9 990.2 481.0 C991.2 481.0 992.8 486.3 993.8 485.1 C994.8 483.9 996.4 473.7 997.4 472.7 C998.4 471.8 1000.0 477.4 1001.0 478.5 C1002.0 479.6 1003.6 480.4 1004.6 480.4 C1005.6 480.4 1007.2 478.2 1008.2 478.4 C1009.2 478.7 1010.8 482.3 1011.8 482.3 C1012.8 482.3 1014.4 477.5 1015.4 478.3 C1016.4 479.1 1018.0 487.5 1019.0 488.0 C1020.0 488.4 1021.6 481.9 1022.6 481.4 C1023.6 480.8 1025.2 482.8 1026.2 484.1 L1029.8 490.2 L1033.4 473.3 L1037.0 481.8 C1037.9 482.8 1039.5 481.1 1040.0 480.0 C1040.5 478.9 1040.0 474.5 1040.6 474.2 C1041.2 473.8 1043.2 477.2 1044.2 477.5 C1045.2 477.7 1046.8 475.0 1047.8 476.1 C1048.8 477.2 1050.4 483.7 1051.4 485.2 C1052.4 486.7 1054.0 486.6 1055.0 486.8 C1056.0 487.0 1057.6 485.9 1058.6 486.7 C1059.6 487.4 1061.2 492.6 1062.2 492.0 C1063.2 491.5 1064.8 484.5 1065.8 483.0 C1066.8 481.6 1068.4 482.1 1069.4 481.5 C1070.4 481.0 1072.0 478.9 1073.0 479.4 C1074.0 479.9 1075.6 484.6 1076.6 485.2 C1077.6 485.9 1079.5 482.8 1080.0 484.0 C1080.2 485.2 1080.0 493.8 1080.2 493.9 C1080.7 493.9 1082.8 485.4 1083.8 484.1 C1084.8 482.8 1086.4 485.5 1087.4 484.5 C1088.4 483.4 1090.0 477.2 1091.0 476.7 C1092.0 476.2 1093.6 480.1 1094.6 481.3 C1095.6 482.4 1097.2 483.5 1098.2 484.9 L1101.8 491.0 L1105.4 473.6 L1109.0 486.2 C1110.0 486.0 1111.6 474.3 1112.6 472.8 C1113.6 471.3 1115.2 475.3 1116.2 475.7 C1117.2 476.1 1118.8 474.7 1119.8 475.4 C1120.8 476.1 1122.4 479.5 1123.4 480.8 C1124.4 482.2 1126.0 483.8 1127.0 484.7 C1128.0 485.6 1129.6 487.3 1130.6 487.0 C1131.6 486.7 1133.2 481.9 1134.2 482.7 C1135.2 483.5 1137.0 492.9 1137.8 492.8 C1138.6 492.7 1139.5 483.9 1140.0 482.0 C1140.5 480.1 1140.7 479.3 1141.4 479.2 C1142.1 479.1 1144.0 480.6 1145.0 481.2 C1146.0 481.7 1147.6 483.2 1148.6 483.2 C1149.6 483.2 1151.2 480.5 1152.2 480.9 C1153.2 481.4 1154.8 486.3 1155.8 486.4 C1156.8 486.6 1158.4 483.4 1159.4 482.0 C1160.4 480.7 1162.0 477.0 1163.0 476.7 C1164.0 476.3 1165.6 478.7 1166.6 479.5 C1167.6 480.3 1169.2 482.4 1170.2 482.3 C1171.2 482.2 1172.8 480.0 1173.8 478.9 C1174.8 477.9 1176.4 474.2 1177.4 475.1 C1178.4 476.0 1180.0 485.9 1181.0 485.6 C1182.0 485.2 1183.6 473.4 1184.6 472.7 C1185.6 472.0 1187.2 477.8 1188.2 480.8 L1191.8 493.5 L1195.4 479.0 L1199.0 482.6 C1199.7 482.4 1199.5 479.4 1200.0 478.0 C1200.5 476.6 1201.7 471.8 1202.6 472.8 C1203.5 473.8 1205.2 482.8 1206.2 484.8 C1207.2 486.8 1208.8 488.2 1209.8 487.0 C1210.8 485.7 1212.4 476.8 1213.4 475.7 C1214.4 474.7 1216.0 479.8 1217.0 479.9 C1218.0 479.9 1219.6 477.4 1220.6 476.3 C1221.6 475.2 1223.2 470.8 1224.2 471.9 C1225.2 473.0 1226.8 483.5 1227.8 484.3 C1228.8 485.1 1230.4 479.4 1231.4 477.6 C1232.4 475.7 1234.0 472.3 1235.0 471.4 C1236.0 470.5 1237.9 470.6 1238.6 471.3 C1239.3 471.9 1239.5 474.6 1240.0 476.0 C1240.5 477.4 1241.4 480.2 1242.2 481.2 C1243.0 482.2 1244.8 483.5 1245.8 482.9 C1246.8 482.4 1248.4 477.6 1249.4 477.3 C1250.4 477.0 1252.0 480.5 1253.0 480.8 C1254.0 481.0 1255.6 480.4 1256.6 479.0 C1257.6 477.7 1259.2 472.2 1260.2 471.2 C1261.2 470.1 1262.8 471.6 1263.8 471.4 C1264.8 471.2 1266.4 469.5 1267.4 469.8 C1268.4 470.0 1270.0 472.7 1271.0 473.2 C1272.0 473.8 1273.6 473.5 1274.6 473.6 C1275.6 473.8 1277.2 475.1 1278.2 474.4 L1281.8 468.5 L1285.4 489.8 L1289.0 474.3 L1292.6 475.6 C1293.6 475.6 1295.2 473.3 1296.2 474.2 C1297.2 475.0 1298.8 481.2 1299.8 481.6 C1300.8 482.0 1302.4 478.6 1303.4 477.0 C1304.4 475.5 1306.0 470.8 1307.0 470.6 C1308.0 470.4 1309.6 474.1 1310.6 475.6 C1311.6 477.1 1313.2 481.4 1314.2 481.2 C1315.2 481.0 1316.8 474.3 1317.8 474.1 C1318.8 474.0 1320.4 479.6 1321.4 480.3 C1322.4 481.1 1324.0 481.0 1325.0 479.3 C1326.0 477.7 1327.6 469.6 1328.6 468.7 C1329.6 467.7 1331.2 472.4 1332.2 472.3 C1333.2 472.2 1334.8 466.9 1335.8 468.0 C1336.8 469.1 1338.4 478.4 1339.4 479.8 C1340.4 481.1 1342.0 479.4 1343.0 477.5 C1344.0 475.6 1345.6 467.0 1346.6 466.2 C1347.6 465.5 1349.5 472.3 1350.0 472.0 C1350.2 471.7 1350.0 464.7 1350.2 464.2 C1350.7 463.6 1352.8 468.5 1353.8 468.2 L1357.4 462.3 L1361.0 478.1 L1364.6 487.4 L1368.2 462.2 L1371.8 476.7 L1375.4 475.9 C1376.4 476.3 1378.0 479.9 1379.0 479.6 C1380.0 479.4 1381.6 473.1 1382.6 474.2 L1386.2 487.1 L1389.8 472.7 L1393.4 468.6 C1394.4 468.3 1396.0 469.4 1397.0 470.7 C1398.0 471.9 1399.6 475.2 1400.6 477.7 L1404.2 488.1 L1407.8 462.6 L1411.4 461.9 C1412.4 462.3 1414.0 464.8 1415.0 465.7 C1416.0 466.5 1417.6 467.6 1418.6 468.1 C1419.6 468.6 1421.2 469.1 1422.2 469.0 C1423.2 469.0 1424.8 467.5 1425.8 467.7 C1426.8 467.8 1428.4 471.0 1429.4 470.0 C1430.4 469.0 1432.0 460.5 1433.0 460.8 C1434.0 461.1 1435.6 470.9 1436.6 472.1 C1437.6 473.4 1439.2 470.1 1440.2 469.7 C1441.2 469.2 1442.8 470.1 1443.8 469.0 L1447.4 461.8 L1451.0 478.3 L1454.6 478.6 C1455.6 477.1 1457.2 469.8 1458.2 468.1 C1459.2 466.5 1460.8 466.7 1461.8 466.7 C1462.8 466.7 1464.4 468.5 1465.4 468.0 C1466.4 467.5 1468.0 462.3 1469.0 463.1 C1470.0 463.8 1471.6 472.0 1472.6 473.1 C1473.6 474.3 1475.2 471.9 1476.2 471.4 C1477.2 471.0 1478.8 470.5 1479.8 470.0 C1480.8 469.4 1482.4 468.4 1483.4 467.5 C1484.4 466.6 1486.0 464.9 1487.0 463.6 C1488.0 462.3 1489.6 458.0 1490.6 458.4 C1491.6 458.8 1493.2 466.2 1494.2 466.5 C1495.2 466.7 1496.8 461.0 1497.8 460.1 C1498.8 459.2 1500.4 460.1 1501.4 460.4 C1502.4 460.6 1504.0 460.7 1505.0 461.7 C1506.0 462.8 1507.6 466.5 1508.6 467.9 C1509.6 469.3 1511.2 472.5 1512.2 471.7 C1513.2 470.9 1514.8 462.9 1515.8 462.4 C1516.8 461.9 1518.5 467.8 1519.4 468.2 C1520.3 468.5 1521.6 465.4 1522.0 465.0" stroke="#ff2b2b"/><path d="M677.0 477.3 C677.5 477.9 679.6 480.8 680.6 481.5 C681.6 482.3 683.2 483.3 684.2 482.7 C685.2 482.0 686.8 479.4 687.8 476.9 C688.8 474.4 690.4 466.5 691.4 465.2 C692.4 463.9 694.0 467.2 695.0 467.6 C696.0 468.1 697.9 468.0 698.6 468.5 C699.3 469.0 699.5 471.0 700.0 471.0 C700.5 471.0 701.4 468.8 702.2 468.6 C703.0 468.4 704.8 468.4 705.8 469.5 C706.8 470.6 708.4 476.1 709.4 476.4 C710.4 476.7 712.0 472.8 713.0 471.7 C714.0 470.5 715.6 467.4 716.6 468.2 C717.6 469.1 719.2 478.0 720.2 477.9 C721.2 477.7 722.8 467.9 723.8 467.0 C724.8 466.1 726.4 470.0 727.4 471.3 C728.4 472.7 730.0 476.9 731.0 476.4 C732.0 475.9 733.6 469.4 734.6 467.9 C735.6 466.4 737.2 464.9 738.2 465.8 C739.2 466.7 740.8 473.6 741.8 474.2 C742.8 474.8 744.4 471.4 745.4 470.1 L749.0 465.2 L752.6 488.2 L756.2 483.6 C757.2 481.9 758.8 477.1 759.8 476.4 L763.4 478.3 L767.0 464.1 L770.6 467.4 C771.6 467.2 773.2 461.9 774.2 462.2 C775.2 462.5 776.8 468.1 777.8 469.5 C778.8 470.8 780.4 472.5 781.4 471.6 C782.4 470.7 784.0 464.3 785.0 463.3 C786.0 462.4 787.6 463.0 788.6 464.5 C789.6 466.1 791.2 473.4 792.2 474.3 C793.2 475.1 794.8 469.4 795.8 470.4 C796.8 471.4 798.4 480.7 799.4 481.2 C800.4 481.6 802.0 474.2 803.0 473.5 C804.0 472.9 805.6 476.6 806.6 476.6 C807.6 476.7 809.2 474.3 810.2 473.8 C811.2 473.3 812.8 474.2 813.8 473.3 C814.8 472.4 816.4 467.8 817.4 467.3 C818.4 466.9 820.0 470.2 821.0 470.4 C822.0 470.5 823.6 468.0 824.6 468.4 C825.6 468.8 827.2 473.1 828.2 473.2 C829.2 473.3 830.8 470.5 831.8 469.4 C832.8 468.2 834.4 465.0 835.4 465.0 C836.4 465.0 838.0 468.2 839.0 469.6 C840.0 471.0 841.6 473.5 842.6 474.7 C843.6 475.8 845.2 478.9 846.2 477.7 C847.2 476.4 848.8 466.2 849.8 465.9 C850.8 465.6 852.4 475.3 853.4 475.8 C854.4 476.2 856.0 470.1 857.0 468.9 C858.0 467.8 859.6 466.9 860.6 467.9 C861.6 468.9 863.2 472.9 864.2 475.8 L867.8 488.5 L871.4 465.9 L875.0 467.5 C876.0 468.7 877.6 473.6 878.6 474.6 C879.6 475.6 881.2 473.0 882.2 474.5 C883.2 476.0 884.8 485.1 885.8 485.1 C886.8 485.0 888.4 474.8 889.4 474.0 C890.4 473.3 892.0 480.2 893.0 479.6 C894.0 478.9 895.6 471.9 896.6 469.6 C897.6 467.3 899.2 462.1 900.2 463.1 C901.2 464.2 902.8 475.3 903.8 477.1 C904.8 478.8 906.4 476.3 907.4 475.5 C908.4 474.7 910.0 471.5 911.0 471.5 C912.0 471.5 913.6 474.7 914.6 475.7 L918.2 478.6 L921.8 463.9 L925.4 470.5 C926.4 470.6 928.0 464.7 929.0 465.1 C930.0 465.4 931.6 472.2 932.6 473.1 C933.6 474.0 935.2 472.1 936.2 471.5 C937.2 470.9 938.8 468.2 939.8 468.9 C940.8 469.5 942.4 475.9 943.4 476.3 C944.4 476.7 946.0 472.4 947.0 471.6 C948.0 470.8 949.6 470.6 950.6 470.8 C951.6 471.0 953.2 472.3 954.2 472.8 C955.2 473.3 957.0 474.5 957.8 474.3 C958.6 474.2 959.5 471.8 960.0 472.0 C960.5 472.2 960.7 475.7 961.4 475.5 C962.1 475.2 964.0 470.6 965.0 470.4 C966.0 470.1 967.6 474.0 968.6 473.9 C969.6 473.8 971.2 469.4 972.2 469.5 C973.2 469.7 974.8 473.7 975.8 474.7 C976.8 475.7 978.4 477.1 979.4 476.6 C980.4 476.2 982.0 473.2 983.0 471.6 C984.0 470.0 985.6 464.7 986.6 465.4 C987.6 466.0 989.2 474.7 990.2 476.1 C991.2 477.5 992.8 474.9 993.8 475.0 C994.8 475.0 996.4 476.3 997.4 476.5 C998.4 476.7 1000.0 477.4 1001.0 476.3 C1002.0 475.3 1003.6 469.2 1004.6 469.1 C1005.6 469.0 1007.2 475.0 1008.2 475.7 C1009.2 476.5 1010.8 474.9 1011.8 474.3 C1012.8 473.7 1014.4 471.4 1015.4 471.5 L1019.0 474.5 L1022.6 490.6 L1026.2 476.8 C1027.2 474.4 1028.8 473.9 1029.8 473.7 C1030.8 473.6 1032.4 474.5 1033.4 475.7 C1034.4 476.8 1036.1 481.7 1037.0 481.9 C1037.9 482.1 1039.5 476.8 1040.0 477.0 C1040.5 477.2 1040.0 482.8 1040.6 483.0 C1041.2 483.3 1043.2 479.5 1044.2 478.7 C1045.2 477.8 1046.8 477.5 1047.8 477.0 C1048.8 476.5 1050.4 474.5 1051.4 475.1 C1052.4 475.6 1054.0 480.7 1055.0 480.8 L1058.6 475.6 L1062.2 490.2 L1065.8 469.4 L1069.4 472.5 L1073.0 486.8 L1076.6 475.7 C1077.6 474.7 1079.5 479.7 1080.0 480.0 C1080.2 480.3 1080.0 476.8 1080.2 477.6 C1080.7 478.3 1082.8 484.7 1083.8 485.2 C1084.8 485.6 1086.4 481.2 1087.4 480.8 C1088.4 480.3 1090.0 483.0 1091.0 482.1 C1092.0 481.2 1093.6 475.0 1094.6 474.8 C1095.6 474.5 1097.2 479.8 1098.2 480.2 C1099.2 480.6 1100.8 477.3 1101.8 477.6 C1102.8 477.9 1104.4 482.4 1105.4 482.5 C1106.4 482.7 1108.0 479.6 1109.0 478.7 C1110.0 477.9 1111.6 476.6 1112.6 476.6 C1113.6 476.7 1115.2 479.1 1116.2 479.2 C1117.2 479.3 1118.8 476.6 1119.8 477.1 C1120.8 477.7 1122.4 484.0 1123.4 483.2 C1124.4 482.3 1126.0 471.5 1127.0 471.1 C1128.0 470.6 1129.6 477.7 1130.6 480.0 C1131.6 482.4 1133.2 487.3 1134.2 487.7 C1135.2 488.0 1137.0 483.7 1137.8 482.4 C1138.6 481.0 1139.5 477.6 1140.0 478.0 C1140.5 478.4 1140.7 485.8 1141.4 485.4 C1142.1 485.0 1144.0 476.5 1145.0 475.2 C1146.0 473.9 1147.6 476.8 1148.6 476.2 C1149.6 475.6 1151.2 470.1 1152.2 470.9 C1153.2 471.6 1154.8 480.1 1155.8 481.5 C1156.8 482.9 1158.4 481.7 1159.4 480.6 C1160.4 479.4 1162.0 474.1 1163.0 473.3 C1164.0 472.5 1165.6 473.6 1166.6 474.8 C1167.6 476.1 1169.2 480.5 1170.2 482.0 C1171.2 483.6 1172.8 486.5 1173.8 485.9 C1174.8 485.4 1176.4 479.1 1177.4 478.2 C1178.4 477.4 1180.0 479.2 1181.0 479.8 C1182.0 480.4 1183.6 483.2 1184.6 482.3 C1185.6 481.5 1187.2 473.6 1188.2 473.8 C1189.2 474.1 1190.8 482.5 1191.8 484.0 C1192.8 485.5 1194.4 484.6 1195.4 484.5 C1196.4 484.5 1198.0 483.9 1199.0 483.6 C1200.0 483.3 1201.6 483.7 1202.6 482.5 C1203.6 481.2 1205.2 476.5 1206.2 475.0 C1207.2 473.6 1208.8 473.4 1209.8 472.2 C1210.8 471.1 1212.4 467.4 1213.4 466.7 C1214.4 466.0 1216.0 465.5 1217.0 467.0 C1218.0 468.5 1219.6 475.3 1220.6 477.0 C1221.6 478.7 1223.2 478.7 1224.2 479.0 C1225.2 479.3 1226.8 481.1 1227.8 479.2 C1228.8 477.2 1230.4 466.5 1231.4 465.2 C1232.4 464.0 1234.0 468.8 1235.0 470.4 C1236.0 472.1 1237.9 476.2 1238.6 476.8 C1239.3 477.3 1239.5 473.5 1240.0 474.0 C1240.5 474.5 1241.4 479.9 1242.2 480.2 C1243.0 480.5 1244.8 476.4 1245.8 476.1 C1246.8 475.7 1248.4 477.4 1249.4 477.8 C1250.4 478.1 1252.0 478.7 1253.0 478.5 C1254.0 478.3 1255.6 478.0 1256.6 476.6 C1257.6 475.2 1259.2 469.7 1260.2 468.6 C1261.2 467.4 1262.8 468.0 1263.8 468.5 C1264.8 468.9 1266.4 470.6 1267.4 471.8 C1268.4 473.0 1270.0 477.8 1271.0 477.1 L1274.6 466.6 L1278.2 483.5 L1281.8 464.2 L1285.4 480.8 L1289.0 470.5 C1290.0 468.7 1291.6 467.7 1292.6 467.9 C1293.6 468.1 1295.2 471.0 1296.2 471.9 C1297.2 472.9 1298.8 474.1 1299.8 474.5 C1300.8 474.9 1302.4 473.9 1303.4 475.0 C1304.4 476.0 1306.0 481.9 1307.0 481.9 C1308.0 481.8 1309.6 475.2 1310.6 474.6 C1311.6 474.0 1313.2 477.7 1314.2 477.8 C1315.2 477.9 1316.8 475.8 1317.8 475.1 C1318.8 474.4 1320.4 472.9 1321.4 472.7 C1322.4 472.4 1324.0 473.9 1325.0 473.2 C1326.0 472.5 1327.6 468.0 1328.6 467.9 C1329.6 467.8 1331.2 472.0 1332.2 472.4 C1333.2 472.7 1334.8 469.9 1335.8 470.3 C1336.8 470.8 1338.4 475.0 1339.4 475.8 C1340.4 476.7 1342.0 477.4 1343.0 476.4 C1344.0 475.5 1345.6 469.6 1346.6 469.3 C1347.6 468.9 1349.2 473.6 1350.2 473.7 C1351.2 473.8 1352.8 470.0 1353.8 469.9 C1354.8 469.8 1356.4 473.1 1357.4 472.9 C1358.4 472.7 1360.0 468.6 1361.0 468.2 C1362.0 467.8 1363.6 470.2 1364.6 470.2 C1365.6 470.1 1367.2 468.4 1368.2 468.1 C1369.2 467.7 1370.8 467.8 1371.8 467.6 C1372.8 467.3 1374.4 466.5 1375.4 466.2 C1376.4 465.9 1378.0 463.5 1379.0 465.2 C1380.0 466.9 1381.6 477.1 1382.6 478.0 C1383.6 478.9 1385.2 472.2 1386.2 471.4 C1387.2 470.7 1388.8 472.3 1389.8 472.7 C1390.8 473.2 1392.4 474.8 1393.4 474.5 C1394.4 474.1 1396.0 471.5 1397.0 470.4 C1398.0 469.3 1399.6 466.3 1400.6 466.6 C1401.6 467.0 1403.2 472.5 1404.2 473.0 C1405.2 473.5 1406.8 471.6 1407.8 470.2 C1408.8 468.7 1410.4 462.5 1411.4 462.5 C1412.4 462.4 1414.0 468.2 1415.0 469.9 C1416.0 471.6 1417.6 474.4 1418.6 474.5 C1419.6 474.6 1421.2 472.2 1422.2 470.6 C1423.2 469.0 1424.8 463.1 1425.8 463.4 C1426.8 463.7 1428.4 472.1 1429.4 472.7 C1430.4 473.3 1432.0 467.9 1433.0 467.8 C1434.0 467.8 1435.6 473.5 1436.6 472.6 C1437.6 471.7 1439.2 462.1 1440.2 461.6 C1441.2 461.1 1442.8 468.7 1443.8 469.0 C1444.8 469.4 1446.4 463.5 1447.4 464.1 C1448.4 464.8 1450.0 473.4 1451.0 473.7 C1452.0 474.1 1453.6 467.4 1454.6 466.6 C1455.6 465.8 1457.2 468.8 1458.2 468.1 C1459.2 467.4 1460.8 461.0 1461.8 461.7 C1462.8 462.4 1464.4 472.3 1465.4 473.2 C1466.4 474.0 1468.0 467.4 1469.0 467.5 C1470.0 467.6 1471.6 472.4 1472.6 473.9 C1473.6 475.3 1475.2 478.2 1476.2 477.8 C1477.2 477.3 1478.8 472.2 1479.8 470.9 C1480.8 469.7 1482.4 467.6 1483.4 468.8 C1484.4 470.1 1486.0 479.9 1487.0 479.9 C1488.0 480.0 1489.6 470.5 1490.6 468.9 C1491.6 467.4 1493.2 470.1 1494.2 469.1 C1495.2 468.2 1496.8 462.7 1497.8 462.4 C1498.8 462.2 1500.4 466.8 1501.4 467.4 C1502.4 468.1 1504.0 466.7 1505.0 467.2 C1506.0 467.7 1507.6 471.4 1508.6 470.9 C1509.6 470.3 1511.2 464.4 1512.2 463.4 C1513.2 462.3 1514.8 462.5 1515.8 463.3 C1516.8 464.1 1518.5 468.7 1519.4 469.0 C1520.3 469.4 1521.6 466.2 1522.0 465.8" stroke="#ffabab"/><path d="M677.0 487.6 C677.5 489.3 679.6 499.3 680.6 499.4 L684.2 488.7 L687.8 468.5 L690.0 473.0 L691.4 465.3 L695.0 485.2 L698.6 475.4 C699.6 472.9 701.2 468.9 702.2 467.7 L705.8 466.9 L709.4 481.2 L713.0 477.3 C714.0 478.3 715.6 488.5 716.6 488.1 C717.6 487.7 719.2 476.8 720.2 474.6 C721.2 472.5 722.8 472.1 723.8 472.8 C724.8 473.6 726.4 479.1 727.4 479.8 C728.4 480.5 730.0 479.1 731.0 477.9 C732.0 476.6 733.6 471.1 734.6 471.1 C735.6 471.0 737.2 477.2 738.2 477.7 C739.2 478.3 740.8 475.1 741.8 474.9 C742.8 474.7 744.4 477.0 745.4 476.6 C746.4 476.3 748.0 473.8 749.0 472.3 C750.0 470.7 751.6 465.1 752.6 465.7 C753.6 466.2 755.2 473.2 756.2 476.1 C757.2 479.0 758.8 486.5 759.8 486.2 C760.8 485.9 762.4 474.0 763.4 474.2 C764.4 474.4 766.0 486.8 767.0 487.5 C768.0 488.3 769.6 480.6 770.6 479.3 C771.6 478.1 773.2 479.8 774.2 478.6 C775.2 477.4 776.8 471.4 777.8 470.6 C778.8 469.8 780.4 471.8 781.4 472.8 C782.4 473.8 784.0 477.5 785.0 477.7 L788.6 474.5 L792.2 497.1 L795.8 467.8 L799.4 462.0 C800.4 463.1 802.0 474.4 803.0 475.2 C804.0 476.0 805.6 466.8 806.6 467.6 C807.6 468.4 809.2 477.3 810.2 480.8 L813.8 492.3 L817.4 470.9 L821.0 462.4 C822.0 463.1 823.6 473.7 824.6 475.5 C825.6 477.4 827.2 476.6 828.2 475.7 C829.2 474.8 830.8 469.0 831.8 469.3 C832.8 469.6 834.4 477.5 835.4 478.1 C836.4 478.7 838.0 475.1 839.0 473.5 C840.0 471.9 841.6 467.8 842.6 466.9 C843.6 466.1 845.2 467.3 846.2 467.3 C847.2 467.4 848.8 466.3 849.8 467.1 C850.8 468.0 852.4 471.4 853.4 473.2 L857.0 479.8 L860.6 464.3 L864.2 472.4 L867.8 489.2 L871.4 470.2 L875.0 474.8 C876.0 473.9 877.6 465.4 878.6 464.0 C879.6 462.6 881.2 463.5 882.2 465.0 C883.2 466.6 884.8 473.8 885.8 474.6 C886.8 475.5 888.4 471.6 889.4 471.3 C890.4 470.9 892.0 471.7 893.0 472.3 C894.0 472.9 895.6 474.2 896.6 475.8 C897.6 477.3 899.2 483.7 900.2 483.2 C901.2 482.7 902.8 472.9 903.8 472.3 C904.8 471.7 906.4 480.0 907.4 478.9 C908.4 477.9 910.0 465.7 911.0 464.9 C912.0 464.2 913.6 472.6 914.6 473.6 C915.6 474.5 917.2 471.9 918.2 471.8 C919.2 471.7 920.8 472.1 921.8 472.8 C922.8 473.5 924.4 477.6 925.4 476.9 C926.4 476.2 928.0 468.3 929.0 467.9 C930.0 467.6 931.6 473.4 932.6 474.5 C933.6 475.6 935.2 475.8 936.2 475.9 L939.8 475.0 L943.4 493.9 L947.0 470.6 L950.6 472.0 L954.2 463.5 L957.8 479.1 L960.0 471.0 C960.5 469.6 960.7 468.0 961.4 468.9 C962.1 469.9 964.0 477.4 965.0 477.8 C966.0 478.3 967.6 471.8 968.6 472.1 C969.6 472.4 971.2 479.4 972.2 480.0 C973.2 480.7 974.8 477.1 975.8 476.9 C976.8 476.6 978.4 479.0 979.4 478.3 C980.4 477.6 982.0 472.9 983.0 471.8 C984.0 470.7 985.6 471.0 986.6 470.4 C987.6 469.8 989.2 467.4 990.2 467.4 C991.2 467.3 992.8 467.7 993.8 470.0 C994.8 472.2 996.4 482.5 997.4 483.5 C998.4 484.4 1000.0 477.9 1001.0 476.8 C1002.0 475.7 1003.6 475.4 1004.6 476.0 C1005.6 476.7 1007.2 481.8 1008.2 481.4 C1009.2 481.1 1010.8 475.2 1011.8 473.7 C1012.8 472.2 1014.4 470.0 1015.4 470.6 C1016.4 471.1 1018.0 477.3 1019.0 477.5 L1022.6 472.5 L1026.2 493.6 L1029.8 486.1 L1033.4 471.0 L1037.0 472.3 C1037.9 473.3 1039.5 478.2 1040.0 478.0 C1040.5 477.8 1040.0 470.7 1040.6 471.0 C1041.2 471.3 1043.2 477.8 1044.2 480.3 C1045.2 482.8 1046.8 488.3 1047.8 488.6 C1048.8 488.9 1050.4 483.9 1051.4 482.6 C1052.4 481.3 1054.0 480.2 1055.0 479.3 C1056.0 478.4 1057.6 475.7 1058.6 476.0 C1059.6 476.4 1061.2 481.4 1062.2 481.8 C1063.2 482.2 1064.8 477.6 1065.8 478.7 C1066.8 479.7 1068.4 487.3 1069.4 488.9 L1073.0 490.1 L1076.6 476.0 L1080.0 481.0 C1080.2 481.9 1080.0 482.1 1080.2 482.4 C1080.7 482.7 1082.8 483.6 1083.8 483.2 C1084.8 482.9 1086.4 480.0 1087.4 479.8 C1088.4 479.6 1090.0 481.4 1091.0 481.8 C1092.0 482.3 1093.6 482.7 1094.6 483.0 C1095.6 483.2 1097.2 482.9 1098.2 483.6 C1099.2 484.2 1100.8 487.5 1101.8 487.7 L1105.4 484.5 L1109.0 500.3 L1112.6 471.5 L1116.2 474.4 C1117.2 475.3 1118.8 476.0 1119.8 477.6 C1120.8 479.2 1122.4 483.6 1123.4 485.7 C1124.4 487.7 1126.0 492.8 1127.0 491.9 C1128.0 491.1 1129.6 480.9 1130.6 479.6 C1131.6 478.3 1133.2 481.7 1134.2 482.8 C1135.2 483.8 1137.0 487.8 1137.8 487.2 C1138.6 486.7 1139.5 481.2 1140.0 479.0 C1140.5 476.8 1140.7 471.6 1141.4 471.6 C1142.1 471.6 1144.0 477.1 1145.0 479.0 L1148.6 485.0 L1152.2 470.3 L1155.8 484.3 L1159.4 469.2 L1163.0 475.0 L1166.6 492.1 L1170.2 496.1 C1171.2 494.8 1172.8 485.4 1173.8 483.1 C1174.8 480.8 1176.4 479.9 1177.4 479.9 C1178.4 479.9 1180.0 483.0 1181.0 483.1 C1182.0 483.2 1183.6 482.2 1184.6 480.5 C1185.6 478.7 1187.2 471.7 1188.2 470.6 C1189.2 469.4 1190.8 470.7 1191.8 472.4 C1192.8 474.1 1194.4 482.1 1195.4 482.5 C1196.4 482.9 1198.3 475.9 1199.0 475.0 C1199.7 474.1 1199.5 476.0 1200.0 476.0 C1200.5 476.0 1201.7 475.0 1202.6 475.3 C1203.5 475.6 1205.2 476.9 1206.2 477.8 C1207.2 478.7 1208.8 480.3 1209.8 481.7 C1210.8 483.1 1212.4 487.7 1213.4 487.7 C1214.4 487.8 1216.0 483.2 1217.0 482.1 C1218.0 481.1 1219.6 482.4 1220.6 480.1 L1224.2 466.2 L1227.8 494.7 L1231.4 480.6 L1235.0 495.8 L1238.6 480.3 L1240.0 474.0 C1240.5 473.8 1241.4 477.0 1242.2 479.0 C1243.0 480.9 1244.8 488.4 1245.8 487.8 C1246.8 487.3 1248.4 476.8 1249.4 475.3 C1250.4 473.9 1252.0 478.0 1253.0 477.9 C1254.0 477.8 1255.6 473.9 1256.6 474.6 C1257.6 475.4 1259.2 481.9 1260.2 483.1 C1261.2 484.2 1262.8 483.8 1263.8 482.5 C1264.8 481.2 1266.4 475.6 1267.4 473.7 C1268.4 471.8 1270.0 468.9 1271.0 469.0 C1272.0 469.1 1273.6 474.5 1274.6 474.4 C1275.6 474.3 1277.2 469.3 1278.2 468.3 C1279.2 467.2 1280.8 466.5 1281.8 466.8 C1282.8 467.1 1284.4 470.6 1285.4 470.5 C1286.4 470.4 1288.0 466.2 1289.0 466.3 C1290.0 466.4 1291.6 470.2 1292.6 471.3 C1293.6 472.5 1295.2 472.4 1296.2 474.6 L1299.8 486.5 L1303.4 471.5 L1307.0 464.3 L1310.6 464.6 L1314.2 479.8 L1317.8 475.2 C1318.8 474.3 1320.4 474.2 1321.4 473.5 C1322.4 472.7 1324.0 470.5 1325.0 469.9 C1326.0 469.2 1327.6 469.1 1328.6 468.7 L1332.2 466.9 L1335.8 483.6 L1339.4 485.8 C1340.4 485.3 1342.0 481.5 1343.0 480.0 C1344.0 478.5 1345.6 476.5 1346.6 475.0 C1347.6 473.6 1349.2 470.8 1350.2 469.6 C1351.2 468.3 1352.8 466.6 1353.8 466.0 C1354.8 465.4 1356.4 463.8 1357.4 465.3 C1358.4 466.7 1360.0 475.0 1361.0 476.1 C1362.0 477.3 1363.6 472.3 1364.6 473.5 C1365.6 474.6 1367.2 484.4 1368.2 484.1 C1369.2 483.7 1370.8 473.4 1371.8 471.1 C1372.8 468.8 1374.4 468.8 1375.4 467.8 C1376.4 466.7 1378.0 463.5 1379.0 463.8 C1380.0 464.1 1381.6 469.3 1382.6 470.0 C1383.6 470.6 1385.2 468.6 1386.2 468.4 C1387.2 468.2 1388.8 468.4 1389.8 468.5 C1390.8 468.6 1392.4 468.9 1393.4 468.9 C1394.4 468.8 1396.0 466.5 1397.0 467.9 L1400.6 478.7 L1404.2 458.1 L1407.8 468.6 C1408.8 470.3 1410.4 468.8 1411.4 470.2 C1412.4 471.5 1414.0 478.0 1415.0 478.4 C1416.0 478.8 1417.6 474.6 1418.6 473.3 L1422.2 468.8 L1425.8 486.4 L1429.4 461.4 L1433.0 474.7 C1434.0 474.7 1435.6 461.7 1436.6 461.5 C1437.6 461.3 1439.2 472.4 1440.2 473.1 C1441.2 473.9 1442.8 467.1 1443.8 466.9 C1444.8 466.7 1446.4 472.7 1447.4 472.0 C1448.4 471.3 1450.0 463.5 1451.0 461.8 C1452.0 460.1 1453.6 459.2 1454.6 460.2 C1455.6 461.2 1457.2 468.0 1458.2 468.7 C1459.2 469.3 1460.8 466.1 1461.8 464.9 C1462.8 463.7 1464.4 459.7 1465.4 460.3 C1466.4 461.0 1468.0 468.1 1469.0 469.5 C1470.0 470.8 1471.6 471.2 1472.6 469.7 L1476.2 458.5 L1479.8 478.1 L1483.4 474.6 C1484.4 474.4 1486.0 477.5 1487.0 476.5 C1488.0 475.6 1489.6 469.7 1490.6 467.9 C1491.6 466.0 1493.2 463.3 1494.2 463.2 C1495.2 463.1 1496.8 467.8 1497.8 467.0 C1498.8 466.2 1500.4 457.9 1501.4 457.4 C1502.4 457.0 1504.0 463.8 1505.0 463.9 C1506.0 464.0 1507.6 458.0 1508.6 458.3 C1509.6 458.5 1511.2 465.5 1512.2 465.7 C1513.2 466.0 1514.8 461.5 1515.8 460.1 C1516.8 458.7 1518.5 454.9 1519.4 455.7 C1520.3 456.6 1521.6 464.6 1522.0 466.1" stroke="#29b09d"/><path d="M677.0 484.5 C677.5 484.1 679.6 481.3 680.6 481.3 C681.6 481.4 683.2 486.3 684.2 484.9 C685.2 483.4 687.0 472.7 687.8 471.2 C688.6 469.6 689.5 473.6 690.0 474.0 C690.5 474.4 690.7 474.2 691.4 473.9 C692.1 473.6 694.0 473.1 695.0 471.9 C696.0 470.6 697.9 465.8 698.6 465.1 C699.3 464.4 699.5 466.9 700.0 467.0 C700.5 467.1 701.4 466.7 702.2 466.0 C703.0 465.3 704.8 462.5 705.8 462.2 C706.8 461.8 708.4 461.4 709.4 463.5 C710.4 465.7 712.0 476.3 713.0 477.3 C714.0 478.3 715.6 473.1 716.6 470.5 C717.6 467.8 719.2 460.0 720.2 458.4 C721.2 456.9 722.8 458.9 723.8 459.2 C724.8 459.5 726.4 459.7 727.4 460.7 C728.4 461.7 730.0 465.9 731.0 466.4 C732.0 467.0 733.6 465.7 734.6 464.4 C735.6 463.1 737.2 458.1 738.2 457.1 C739.2 456.2 740.8 457.0 741.8 457.7 C742.8 458.5 744.4 462.3 745.4 462.4 C746.4 462.5 748.0 458.3 749.0 458.5 C750.0 458.7 751.6 464.4 752.6 463.6 C753.6 462.8 755.2 454.7 756.2 452.8 C757.2 450.9 759.3 449.6 759.8 450.4 C760.0 451.2 759.8 457.3 760.0 458.5 C760.5 459.7 762.4 457.7 763.4 458.6 C764.4 459.5 766.0 464.9 767.0 464.7 C768.0 464.5 769.6 458.5 770.6 456.9 C771.6 455.3 773.2 454.3 774.2 453.4 C775.2 452.5 776.8 450.6 777.8 450.5 C778.8 450.4 780.4 451.6 781.4 452.7 C782.4 453.8 784.0 457.1 785.0 458.5 C786.0 459.8 787.6 463.6 788.6 462.4 C789.6 461.3 791.2 452.2 792.2 450.4 C793.2 448.5 794.8 448.4 795.8 449.3 C796.8 450.2 798.4 455.8 799.4 457.1 C800.4 458.3 802.0 458.6 803.0 458.3 C804.0 458.0 805.6 455.2 806.6 454.9 C807.6 454.6 809.2 456.8 810.2 456.2 C811.2 455.6 812.8 451.8 813.8 450.9 C814.8 450.0 816.4 449.4 817.4 449.8 C818.4 450.2 820.0 453.0 821.0 453.8 C822.0 454.6 823.6 455.7 824.6 455.4 C825.6 455.1 827.2 451.5 828.2 451.8 C829.2 452.0 830.8 456.6 831.8 457.3 C832.8 457.9 834.4 457.2 835.4 456.2 C836.4 455.2 838.0 450.1 839.0 449.9 C840.0 449.7 841.6 454.5 842.6 454.7 C843.6 455.0 845.2 451.8 846.2 451.5 C847.2 451.2 848.8 452.6 849.8 452.5 C850.8 452.5 852.4 451.4 853.4 451.1 C854.4 450.9 856.1 450.5 857.0 450.7 C857.9 451.0 859.5 452.0 860.0 453.0 C860.5 454.0 860.0 457.1 860.6 457.5 C861.2 457.8 863.2 455.6 864.2 455.3 C865.2 454.9 866.8 454.8 867.8 454.8 C868.8 454.9 870.4 455.6 871.4 455.6 C872.4 455.6 874.0 455.2 875.0 454.6 C876.0 454.1 877.6 451.6 878.6 451.9 C879.6 452.2 881.2 456.8 882.2 456.8 C883.2 456.8 884.8 451.7 885.8 451.8 C886.8 451.9 888.4 458.3 889.4 457.6 C890.4 457.0 892.0 448.3 893.0 447.4 C894.0 446.4 895.6 450.9 896.6 450.9 C897.6 451.0 899.2 448.4 900.2 447.8 C901.2 447.1 902.8 446.8 903.8 446.5 C904.8 446.3 906.4 444.6 907.4 445.8 C908.4 447.0 910.0 454.5 911.0 455.1 C912.0 455.8 913.6 451.3 914.6 450.3 C915.6 449.3 917.2 447.8 918.2 447.9 C919.2 447.9 920.8 450.9 921.8 450.5 C922.8 450.2 924.4 445.0 925.4 445.4 C926.4 445.8 928.0 452.5 929.0 453.2 C930.0 454.0 931.6 451.4 932.6 450.6 C933.6 449.9 935.2 447.7 936.2 447.7 C937.2 447.7 938.8 449.1 939.8 450.4 C940.8 451.6 942.4 456.1 943.4 456.4 C944.4 456.6 946.0 452.7 947.0 451.8 C948.0 451.0 949.6 450.7 950.6 450.5 C951.6 450.3 953.2 450.2 954.2 450.2 C955.2 450.3 957.0 451.2 957.8 451.1 C958.6 451.1 959.5 448.3 960.0 449.7 C960.5 451.1 960.7 460.9 961.4 460.9 C962.1 461.0 964.0 451.7 965.0 450.0 C966.0 448.3 967.6 449.7 968.6 449.1 C969.6 448.5 971.2 445.8 972.2 445.7 C973.2 445.7 974.8 448.4 975.8 448.7 C976.8 449.0 978.4 447.8 979.4 447.8 C980.4 447.8 982.0 448.1 983.0 448.7 C984.0 449.3 985.6 452.1 986.6 452.1 C987.6 452.0 989.2 449.3 990.2 448.5 C991.2 447.6 992.8 444.6 993.8 446.2 C994.8 447.8 996.4 459.1 997.4 459.8 C998.4 460.5 1000.0 452.3 1001.0 451.1 C1002.0 449.8 1003.6 450.0 1004.6 451.0 C1005.6 451.9 1007.2 458.7 1008.2 458.0 C1009.2 457.2 1010.8 445.9 1011.8 445.4 C1012.8 445.0 1014.4 454.1 1015.4 455.0 C1016.4 456.0 1018.0 452.4 1019.0 452.3 C1020.0 452.2 1021.6 455.3 1022.6 454.2 C1023.6 453.2 1025.2 445.9 1026.2 445.1 C1027.2 444.4 1028.8 447.7 1029.8 448.9 C1030.8 450.1 1032.4 454.5 1033.4 453.5 C1034.4 452.5 1036.0 442.4 1037.0 441.7 C1038.0 441.0 1039.6 446.9 1040.6 448.5 C1041.6 450.0 1043.2 453.1 1044.2 452.7 C1045.2 452.4 1046.8 446.8 1047.8 446.1 C1048.8 445.3 1050.4 447.4 1051.4 447.6 C1052.4 447.8 1054.0 448.0 1055.0 447.6 C1056.0 447.3 1057.6 445.0 1058.6 445.2 C1059.6 445.4 1061.2 447.8 1062.2 448.9 C1063.2 450.0 1064.8 453.2 1065.8 452.8 C1066.8 452.4 1068.4 445.9 1069.4 446.1 C1070.4 446.2 1072.0 453.4 1073.0 453.8 C1074.0 454.2 1075.6 449.8 1076.6 448.7 C1077.6 447.6 1079.2 445.1 1080.2 446.0 C1081.2 446.8 1082.8 454.6 1083.8 454.7 C1084.8 454.8 1086.4 447.2 1087.4 446.4 C1088.4 445.7 1090.0 450.0 1091.0 449.2 C1092.0 448.5 1093.6 441.0 1094.6 441.1 C1095.6 441.2 1097.4 449.0 1098.2 449.9 C1099.0 450.8 1099.5 447.9 1100.0 447.5 C1100.5 447.1 1101.0 447.2 1101.8 447.2 C1102.6 447.2 1104.4 446.6 1105.4 447.7 C1106.4 448.7 1108.0 453.9 1109.0 454.5 C1110.0 455.0 1111.6 452.8 1112.6 451.8 C1113.6 450.8 1115.2 447.9 1116.2 447.3 C1117.2 446.6 1118.8 447.7 1119.8 447.3 C1120.8 447.0 1122.4 444.8 1123.4 444.7 C1124.4 444.7 1126.0 446.7 1127.0 447.1 C1128.0 447.5 1129.6 447.2 1130.6 447.7 C1131.6 448.2 1133.2 450.2 1134.2 450.7 C1135.2 451.1 1136.8 452.0 1137.8 450.7 C1138.8 449.5 1140.4 442.1 1141.4 441.8 C1142.4 441.4 1144.0 448.3 1145.0 448.4 L1148.6 442.2 L1152.2 457.0 L1155.8 440.9 L1159.4 443.6 C1160.4 444.9 1162.0 449.8 1163.0 450.5 C1164.0 451.2 1165.6 450.0 1166.6 448.4 C1167.6 446.8 1169.2 439.6 1170.2 439.4 C1171.2 439.1 1172.8 445.8 1173.8 446.6 C1174.8 447.4 1176.4 445.5 1177.4 445.1 C1178.4 444.7 1180.0 444.4 1181.0 444.0 C1182.0 443.6 1183.6 442.9 1184.6 442.3 C1185.6 441.8 1187.2 439.0 1188.2 439.8 C1189.2 440.6 1190.8 446.8 1191.8 448.0 C1192.8 449.2 1194.4 447.3 1195.4 448.2 C1196.4 449.1 1198.0 455.3 1199.0 454.4 C1200.0 453.5 1201.6 444.2 1202.6 441.8 C1203.6 439.4 1205.2 437.6 1206.2 437.7 C1207.2 437.7 1208.8 441.2 1209.8 442.3 C1210.8 443.4 1212.4 444.7 1213.4 445.3 C1214.4 445.9 1216.0 447.6 1217.0 446.8 C1218.0 445.9 1219.6 440.7 1220.6 439.6 C1221.6 438.5 1223.2 438.8 1224.2 438.9 C1225.2 438.9 1226.8 438.7 1227.8 439.9 C1228.8 441.2 1230.4 446.7 1231.4 447.4 C1232.4 448.1 1234.0 446.1 1235.0 445.0 C1236.0 443.8 1237.9 439.8 1238.6 439.4 C1239.3 439.0 1239.5 442.0 1240.0 442.0 C1240.5 442.0 1241.4 439.6 1242.2 439.5 C1243.0 439.4 1244.8 441.0 1245.8 441.3 C1246.8 441.5 1248.4 440.5 1249.4 441.0 C1250.4 441.5 1252.0 445.5 1253.0 445.1 C1254.0 444.7 1255.6 437.9 1256.6 438.1 C1257.6 438.3 1259.2 446.1 1260.2 446.8 C1261.2 447.5 1262.8 443.7 1263.8 443.1 C1264.8 442.4 1266.4 442.4 1267.4 442.5 C1268.4 442.5 1270.0 443.3 1271.0 443.6 C1272.0 443.8 1273.6 444.6 1274.6 444.2 C1275.6 443.7 1277.2 440.2 1278.2 440.3 C1279.2 440.5 1280.8 444.6 1281.8 445.0 C1282.8 445.5 1284.4 444.2 1285.4 443.4 C1286.4 442.6 1288.0 439.2 1289.0 439.2 C1290.0 439.2 1291.6 443.1 1292.6 443.5 C1293.6 443.9 1295.2 442.5 1296.2 442.0 C1297.2 441.5 1298.8 439.7 1299.8 439.9 C1300.8 440.2 1302.4 443.5 1303.4 443.7 C1304.4 443.8 1306.0 440.6 1307.0 441.1 C1308.0 441.5 1309.6 446.4 1310.6 446.9 C1311.6 447.4 1313.2 445.6 1314.2 444.5 C1315.2 443.5 1316.8 440.2 1317.8 439.5 C1318.8 438.8 1320.4 439.9 1321.4 439.7 C1322.4 439.5 1324.0 438.1 1325.0 438.1 C1326.0 438.2 1327.6 439.3 1328.6 440.0 C1329.6 440.6 1331.2 442.9 1332.2 442.7 C1333.2 442.4 1334.8 438.6 1335.8 438.3 C1336.8 438.0 1338.4 440.7 1339.4 440.5 C1340.4 440.3 1342.0 437.7 1343.0 436.9 C1344.0 436.0 1345.6 433.2 1346.6 434.2 C1347.6 435.2 1349.2 443.3 1350.2 444.1 C1351.2 445.0 1352.8 440.3 1353.8 440.2 C1354.8 440.1 1356.4 443.7 1357.4 443.3 C1358.4 443.0 1360.0 437.4 1361.0 437.7 C1362.0 438.1 1363.6 445.7 1364.6 445.7 C1365.6 445.6 1367.2 438.4 1368.2 437.7 C1369.2 437.0 1370.8 440.3 1371.8 440.7 C1372.8 441.1 1374.4 440.3 1375.4 440.3 C1376.4 440.4 1378.0 440.5 1379.0 440.9 C1380.0 441.3 1381.6 443.3 1382.6 443.1 C1383.6 442.9 1385.2 439.6 1386.2 439.7 C1387.2 439.8 1388.8 444.6 1389.8 443.8 C1390.8 443.0 1392.4 435.3 1393.4 434.4 C1394.4 433.4 1396.1 436.3 1397.0 437.1 C1397.9 437.9 1399.5 439.7 1400.0 440.0 C1400.5 440.3 1400.0 439.3 1400.6 439.2 C1401.2 439.1 1403.2 438.9 1404.2 439.1 C1405.2 439.2 1406.8 439.5 1407.8 440.2 C1408.8 440.9 1410.4 443.7 1411.4 443.8 C1412.4 443.8 1414.0 440.9 1415.0 440.7 C1416.0 440.4 1417.6 441.5 1418.6 441.7 C1419.6 442.0 1421.2 443.5 1422.2 442.4 C1423.2 441.4 1424.8 435.5 1425.8 434.4 C1426.8 433.2 1428.4 433.0 1429.4 434.2 C1430.4 435.3 1432.0 442.1 1433.0 442.5 C1434.0 442.9 1435.6 437.6 1436.6 437.0 C1437.6 436.4 1439.2 438.8 1440.2 438.3 C1441.2 437.8 1442.8 433.4 1443.8 433.7 C1444.8 434.1 1446.4 439.4 1447.4 440.5 C1448.4 441.6 1450.0 440.9 1451.0 441.6 C1452.0 442.2 1453.6 444.9 1454.6 445.1 C1455.6 445.2 1457.2 442.3 1458.2 442.9 C1459.2 443.5 1460.8 449.7 1461.8 449.1 C1462.8 448.5 1464.4 440.5 1465.4 438.9 C1466.4 437.3 1468.0 437.3 1469.0 437.7 C1470.0 438.2 1471.6 441.8 1472.6 441.9 C1473.6 442.1 1475.2 438.7 1476.2 438.8 C1477.2 439.0 1478.8 443.3 1479.8 443.1 C1480.8 442.9 1482.4 437.5 1483.4 437.3 C1484.4 437.2 1486.0 442.2 1487.0 441.9 C1488.0 441.7 1489.6 436.5 1490.6 435.8 C1491.6 435.2 1493.2 437.6 1494.2 437.3 C1495.2 437.1 1496.8 434.1 1497.8 434.0 C1498.8 433.9 1500.4 435.3 1501.4 436.8 C1502.4 438.3 1504.0 444.1 1505.0 444.3 C1506.0 444.6 1507.6 437.8 1508.6 438.5 C1509.6 439.3 1511.2 449.4 1512.2 449.5 C1513.2 449.5 1514.8 440.8 1515.8 438.6 C1516.8 436.5 1518.5 434.2 1519.4 434.5 C1520.3 434.7 1521.6 439.4 1522.0 440.2" stroke="#7defa1"/><path d="M677.0 603.4 C677.5 603.6 680.0 604.5 680.6 604.7 C681.0 604.8 680.6 604.7 681.0 604.5 C681.5 604.3 683.2 603.7 684.2 603.1 C685.2 602.5 687.0 600.7 687.8 600.1 C688.6 599.5 689.5 599.3 690.0 599.0 C690.5 598.7 690.7 598.1 691.4 597.9 C692.1 597.7 694.0 597.7 695.0 597.5 C696.0 597.3 697.9 596.4 698.6 596.2 C699.3 596.0 699.5 595.9 700.0 596.0 C700.5 596.1 701.4 596.8 702.2 596.8 C703.0 596.9 704.8 596.4 705.8 596.2 C706.8 596.0 708.4 595.5 709.4 595.4 C710.4 595.3 712.0 595.4 713.0 595.4 C714.0 595.4 715.6 595.5 716.6 595.5 C717.6 595.4 719.5 595.0 720.0 595.0 C720.2 595.0 720.0 595.1 720.2 595.2 C720.7 595.3 722.8 595.5 723.8 595.4 C724.8 595.3 726.4 594.8 727.4 594.8 C728.4 594.7 730.0 594.7 731.0 594.8 C732.0 594.8 733.6 595.2 734.6 595.2 C735.6 595.2 737.2 594.5 738.2 594.5 C739.2 594.5 740.8 595.5 741.8 595.3 C742.8 595.2 744.4 593.8 745.4 593.6 C746.4 593.4 748.0 593.9 749.0 594.0 C750.0 594.2 751.6 594.5 752.6 594.6 C753.6 594.6 755.2 594.3 756.2 594.3 C757.2 594.2 758.8 594.1 759.8 594.1 C760.8 594.2 762.4 594.6 763.4 594.5 C764.4 594.5 766.0 593.8 767.0 593.7 C768.0 593.6 769.6 593.8 770.6 593.8 C771.6 593.8 773.2 593.4 774.2 593.4 C775.2 593.4 776.8 593.7 777.8 593.7 C778.8 593.7 780.4 593.2 781.4 593.2 C782.4 593.2 784.0 593.6 785.0 593.7 C786.0 593.7 787.6 593.7 788.6 593.6 C789.6 593.5 791.2 593.1 792.2 593.0 C793.2 592.9 794.8 592.9 795.8 592.8 C796.8 592.8 798.8 592.8 799.4 592.8 C800.0 592.8 799.5 593.0 800.0 593.0 C800.5 593.0 802.1 592.8 803.0 592.8 C803.9 592.8 805.6 592.9 806.6 592.9 C807.6 593.0 809.2 592.9 810.2 592.9 C811.2 592.9 812.8 592.7 813.8 592.7 C814.8 592.7 816.4 593.0 817.4 593.0 C818.4 593.0 820.0 592.8 821.0 592.8 C822.0 592.9 823.6 593.4 824.6 593.3 C825.6 593.2 827.2 592.3 828.2 592.1 C829.2 591.9 830.8 591.8 831.8 591.8 C832.8 591.7 834.4 591.5 835.4 591.6 C836.4 591.8 838.0 592.6 839.0 592.8 C840.0 593.1 841.6 593.3 842.6 593.2 C843.6 593.1 845.2 592.2 846.2 592.1 C847.2 592.0 848.8 592.1 849.8 592.2 C850.8 592.4 852.4 592.9 853.4 592.9 C854.4 592.9 856.0 592.4 857.0 592.2 C858.0 591.9 859.6 591.1 860.6 591.0 C861.6 591.0 863.2 591.8 864.2 591.9 C865.2 591.9 866.8 591.8 867.8 591.7 C868.8 591.6 870.4 591.2 871.4 591.2 C872.4 591.3 874.0 592.0 875.0 592.1 C876.0 592.1 877.6 591.7 878.6 591.6 C879.6 591.6 881.2 591.7 882.2 591.8 C883.2 591.9 884.8 592.2 885.8 592.2 C886.8 592.1 888.4 591.7 889.4 591.6 C890.4 591.4 892.0 591.1 893.0 591.0 C894.0 590.8 895.6 590.6 896.6 590.8 C897.6 590.9 899.2 591.7 900.2 591.8 C901.2 592.0 902.8 591.8 903.8 591.8 C904.8 591.7 906.4 591.2 907.4 591.2 C908.4 591.2 910.0 591.9 911.0 591.8 C912.0 591.8 913.6 591.2 914.6 591.2 C915.6 591.2 917.2 592.1 918.2 592.1 C919.2 592.0 920.8 590.8 921.8 590.7 C922.8 590.6 924.4 591.2 925.4 591.2 C926.4 591.2 928.0 590.6 929.0 590.6 C930.0 590.7 931.6 591.2 932.6 591.3 C933.6 591.3 935.2 591.2 936.2 591.1 C937.2 591.1 938.8 590.8 939.8 590.8 C940.8 590.7 942.4 590.9 943.4 590.8 C944.4 590.6 946.0 589.7 947.0 589.8 C948.0 590.0 949.6 591.5 950.6 591.6 C951.6 591.8 953.2 591.1 954.2 590.9 C955.2 590.6 957.0 590.0 957.8 589.9 C958.6 589.9 959.5 590.4 960.0 590.5 C960.5 590.6 960.7 590.8 961.4 590.7 C962.1 590.6 964.0 589.7 965.0 589.7 C966.0 589.7 967.6 590.7 968.6 590.8 C969.6 590.8 971.2 590.1 972.2 590.1 C973.2 590.1 974.8 590.9 975.8 590.8 C976.8 590.6 978.4 589.4 979.4 589.2 C980.4 589.0 982.0 589.5 983.0 589.6 C984.0 589.7 985.6 590.1 986.6 590.1 C987.6 590.1 989.2 589.8 990.2 589.6 C991.2 589.4 992.8 588.8 993.8 588.7 C994.8 588.6 996.4 588.7 997.4 588.7 C998.4 588.7 1000.0 588.4 1001.0 588.4 C1002.0 588.5 1003.6 589.1 1004.6 589.2 C1005.6 589.3 1007.2 589.2 1008.2 589.1 C1009.2 588.9 1010.8 588.3 1011.8 588.2 C1012.8 588.1 1014.4 588.5 1015.4 588.4 C1016.4 588.4 1018.0 588.1 1019.0 588.0 C1020.0 588.0 1021.6 588.1 1022.6 588.1 C1023.6 588.0 1025.2 587.6 1026.2 587.5 C1027.2 587.4 1028.8 587.5 1029.8 587.5 C1030.8 587.5 1032.4 587.5 1033.4 587.3 C1034.4 587.2 1036.0 586.7 1037.0 586.7 C1038.0 586.7 1039.6 587.3 1040.6 587.3 C1041.6 587.3 1043.2 586.7 1044.2 586.7 C1045.2 586.7 1046.8 587.3 1047.8 587.3 C1048.8 587.3 1050.4 587.0 1051.4 586.8 C1052.4 586.7 1054.0 586.5 1055.0 586.4 C1056.0 586.4 1057.6 586.5 1058.6 586.5 C1059.6 586.6 1061.2 586.9 1062.2 586.8 C1063.2 586.8 1064.8 586.1 1065.8 586.0 C1066.8 585.9 1068.4 585.8 1069.4 585.8 C1070.4 585.9 1072.0 586.1 1073.0 586.2 C1074.0 586.4 1075.6 587.0 1076.6 586.9 C1077.6 586.9 1079.2 586.0 1080.2 585.8 C1081.2 585.6 1082.8 585.5 1083.8 585.5 C1084.8 585.5 1086.4 585.7 1087.4 585.7 C1088.4 585.7 1090.0 585.4 1091.0 585.4 C1092.0 585.5 1093.6 586.0 1094.6 585.9 C1095.6 585.7 1097.4 584.6 1098.2 584.5 C1099.0 584.4 1099.5 585.0 1100.0 585.0 C1100.5 585.0 1101.0 584.4 1101.8 584.3 C1102.6 584.1 1104.4 583.7 1105.4 583.7 C1106.4 583.8 1108.0 584.4 1109.0 584.6 C1110.0 584.7 1111.6 584.8 1112.6 584.8 C1113.6 584.8 1115.2 584.7 1116.2 584.5 C1117.2 584.3 1118.8 583.6 1119.8 583.5 C1120.8 583.5 1122.4 584.0 1123.4 584.2 C1124.4 584.4 1126.0 584.8 1127.0 584.8 C1128.0 584.8 1129.6 584.1 1130.6 584.0 C1131.6 583.9 1133.2 584.4 1134.2 584.2 C1135.2 584.0 1136.8 582.6 1137.8 582.6 C1138.8 582.6 1140.4 584.1 1141.4 584.3 C1142.4 584.4 1144.0 583.9 1145.0 583.8 C1146.0 583.6 1147.6 583.3 1148.6 583.2 C1149.6 583.1 1151.2 583.1 1152.2 583.1 C1153.2 583.1 1154.8 583.3 1155.8 583.2 C1156.8 583.0 1158.4 582.0 1159.4 581.9 C1160.4 581.9 1162.0 583.0 1163.0 582.9 C1164.0 582.9 1165.6 582.0 1166.6 581.9 C1167.6 581.7 1169.2 581.8 1170.2 581.8 C1171.2 581.8 1172.8 581.8 1173.8 581.8 C1174.8 581.8 1176.4 582.0 1177.4 581.9 C1178.4 581.8 1180.0 581.2 1181.0 581.3 C1182.0 581.5 1183.6 582.7 1184.6 582.7 C1185.6 582.8 1187.2 581.8 1188.2 581.6 C1189.2 581.3 1190.8 580.8 1191.8 580.9 C1192.8 581.0 1194.4 582.3 1195.4 582.3 C1196.4 582.3 1198.0 581.2 1199.0 581.0 C1200.0 580.8 1201.6 580.9 1202.6 580.8 C1203.6 580.8 1205.2 580.7 1206.2 580.8 C1207.2 580.9 1208.8 581.7 1209.8 581.6 C1210.8 581.6 1212.4 580.7 1213.4 580.5 C1214.4 580.3 1216.0 580.1 1217.0 580.2 C1218.0 580.3 1219.6 581.2 1220.6 581.1 C1221.6 581.1 1223.2 579.9 1224.2 579.8 C1225.2 579.7 1226.8 580.5 1227.8 580.5 C1228.8 580.5 1230.4 579.8 1231.4 579.9 C1232.4 579.9 1234.0 580.8 1235.0 580.9 C1236.0 580.9 1237.9 580.3 1238.6 580.1 C1239.3 579.9 1239.5 579.7 1240.0 579.6 C1240.5 579.5 1241.4 579.3 1242.2 579.4 C1243.0 579.4 1244.8 579.9 1245.8 579.9 C1246.8 579.9 1248.4 579.5 1249.4 579.3 C1250.4 579.1 1252.0 578.6 1253.0 578.4 C1254.0 578.2 1255.6 578.3 1256.6 578.2 C1257.6 578.1 1259.2 577.7 1260.2 577.7 C1261.2 577.6 1262.8 577.9 1263.8 577.9 C1264.8 578.0 1266.4 578.3 1267.4 578.2 C1268.4 578.2 1270.0 577.7 1271.0 577.6 C1272.0 577.6 1273.6 577.5 1274.6 577.6 C1275.6 577.7 1277.2 578.3 1278.2 578.2 C1279.2 578.2 1280.8 577.2 1281.8 577.1 C1282.8 577.1 1284.4 578.0 1285.4 578.0 C1286.4 578.1 1288.0 577.3 1289.0 577.3 C1290.0 577.3 1291.6 577.7 1292.6 577.8 C1293.6 577.9 1295.2 578.1 1296.2 577.9 C1297.2 577.6 1298.8 576.4 1299.8 576.2 C1300.8 576.0 1302.4 576.3 1303.4 576.4 C1304.4 576.5 1306.0 576.8 1307.0 576.8 C1308.0 576.8 1309.6 576.4 1310.6 576.3 C1311.6 576.2 1313.2 576.1 1314.2 576.1 C1315.2 576.0 1317.2 576.1 1317.7 576.0 C1317.8 575.9 1317.7 575.6 1317.8 575.6 C1318.3 575.6 1320.4 575.9 1321.4 575.9 C1322.4 576.0 1324.0 576.0 1325.0 575.9 C1326.0 575.8 1327.6 575.3 1328.6 575.2 C1329.6 575.2 1331.2 575.6 1332.2 575.6 C1333.2 575.7 1334.8 575.7 1335.8 575.7 C1336.8 575.7 1338.4 575.6 1339.4 575.6 C1340.4 575.6 1342.0 576.1 1343.0 575.9 C1344.0 575.8 1345.6 574.7 1346.6 574.6 C1347.6 574.5 1349.2 575.1 1350.2 575.2 C1351.2 575.4 1352.8 575.5 1353.8 575.4 C1354.8 575.3 1356.4 574.8 1357.4 574.6 C1358.4 574.5 1360.0 574.1 1361.0 574.3 C1362.0 574.4 1363.6 575.6 1364.6 575.7 C1365.6 575.8 1367.2 575.1 1368.2 575.1 C1369.2 575.0 1370.8 575.4 1371.8 575.4 C1372.8 575.4 1374.4 575.1 1375.4 575.1 C1376.4 575.0 1378.0 574.9 1379.0 575.0 C1380.0 575.1 1382.0 575.8 1382.6 575.8 C1383.2 575.8 1383.0 575.1 1383.5 575.0 C1384.0 574.9 1385.3 575.2 1386.2 575.1 C1387.1 575.0 1388.8 574.6 1389.8 574.4 C1390.8 574.1 1392.4 573.6 1393.4 573.6 C1394.4 573.5 1396.0 574.2 1397.0 574.2 C1398.0 574.2 1399.6 573.7 1400.6 573.5 C1401.6 573.4 1403.2 573.3 1404.2 573.2 C1405.2 573.2 1406.8 573.3 1407.8 573.2 C1408.8 573.1 1410.4 572.5 1411.4 572.4 C1412.4 572.3 1414.0 572.7 1415.0 572.7 C1416.0 572.8 1417.6 572.7 1418.6 572.6 C1419.6 572.5 1421.2 572.2 1422.2 572.0 C1423.2 571.9 1425.1 571.5 1425.8 571.5 C1426.5 571.5 1426.5 571.8 1427.0 572.0 C1427.5 572.2 1428.6 572.6 1429.4 572.6 C1430.2 572.6 1432.0 572.4 1433.0 572.3 C1434.0 572.1 1435.6 572.0 1436.6 571.8 C1437.6 571.5 1439.2 570.6 1440.2 570.5 C1441.2 570.3 1442.8 570.8 1443.8 570.8 C1444.8 570.8 1446.7 570.5 1447.4 570.5 C1448.1 570.5 1448.5 570.8 1449.0 570.8 C1449.5 570.8 1450.2 571.1 1451.0 570.7 C1451.8 570.4 1453.6 568.8 1454.6 568.3 C1455.6 567.8 1457.4 567.0 1458.2 566.9 C1459.0 566.8 1459.5 567.8 1460.0 567.5 C1460.5 567.2 1461.1 565.9 1461.8 565.0 C1462.5 564.0 1464.1 562.1 1464.6 561.0 C1465.1 559.9 1465.1 558.6 1465.4 557.0 L1466.8 550.0 L1468.0 520.0 L1469.0 466.7 L1469.5 440.0 L1471.0 406.0 L1472.6 405.2 C1472.9 405.1 1472.6 405.0 1473.0 405.0 C1473.5 405.0 1475.2 405.0 1476.2 405.0 C1477.2 405.0 1478.8 405.0 1479.8 405.0 C1480.8 405.0 1482.4 405.0 1483.4 405.0 C1484.4 405.0 1486.0 405.0 1487.0 405.0 C1488.0 405.0 1489.6 405.0 1490.6 405.0 C1491.6 405.0 1493.2 405.0 1494.2 405.0 C1495.2 405.0 1496.8 405.0 1497.8 405.0 C1498.8 405.0 1500.4 405.0 1501.4 405.0 C1502.4 405.0 1504.0 405.0 1505.0 405.0 C1506.0 405.0 1507.6 405.0 1508.6 405.0 C1509.6 405.0 1511.2 405.0 1512.2 405.0 C1513.2 405.0 1514.8 405.0 1515.8 405.0 C1516.8 405.0 1518.5 405.0 1519.4 405.0 C1520.3 405.0 1521.6 405.0 1522.0 405.0" stroke="#ff8700"/><path d="M677.0 602.8 C677.5 602.9 680.0 603.5 680.6 603.7 C681.0 603.8 680.6 604.4 681.0 604.0 C681.5 603.6 683.2 601.7 684.2 601.1 C685.2 600.5 687.0 600.2 687.8 599.7 C688.6 599.3 689.5 598.3 690.0 598.0 C690.5 597.7 690.7 597.9 691.4 597.6 C692.1 597.3 694.0 596.4 695.0 595.9 C696.0 595.5 697.9 594.9 698.6 594.6 C699.3 594.3 699.5 594.2 700.0 594.0 C700.5 593.8 701.4 593.2 702.2 593.0 C703.0 592.8 704.8 592.6 705.8 592.7 C706.8 592.8 708.4 593.7 709.4 593.7 C710.4 593.6 712.0 592.5 713.0 592.4 C714.0 592.3 715.6 593.0 716.6 593.1 C717.6 593.1 719.5 592.6 720.0 592.5 C720.2 592.4 720.0 592.1 720.2 592.1 C720.7 592.1 722.8 592.2 723.8 592.2 C724.8 592.2 726.4 592.0 727.4 591.9 C728.4 591.8 730.0 591.7 731.0 591.7 C732.0 591.7 733.6 592.1 734.6 591.8 C735.6 591.6 737.2 590.1 738.2 590.0 C739.2 589.9 740.8 591.0 741.8 591.1 C742.8 591.2 744.4 590.6 745.4 590.4 C746.4 590.3 748.0 590.4 749.0 590.3 C750.0 590.2 751.6 589.9 752.6 589.8 C753.6 589.7 755.2 589.7 756.2 589.6 C757.2 589.5 759.3 589.0 759.8 588.9 C760.0 588.8 759.8 589.1 760.0 589.0 C760.5 588.9 762.4 588.4 763.4 588.5 C764.4 588.5 766.0 589.2 767.0 589.2 C768.0 589.2 769.6 588.9 770.6 588.6 C771.6 588.3 773.2 587.2 774.2 587.1 C775.2 586.9 776.8 587.6 777.8 587.6 C778.8 587.6 780.4 587.3 781.4 587.3 C782.4 587.2 784.0 587.4 785.0 587.3 C786.0 587.1 787.6 586.3 788.6 586.1 C789.6 585.9 791.2 585.8 792.2 585.7 C793.2 585.7 794.8 585.8 795.8 585.9 C796.8 586.0 798.8 586.3 799.4 586.3 C800.0 586.3 799.5 586.1 800.0 586.0 C800.5 585.9 802.1 586.0 803.0 585.8 C803.9 585.7 805.6 584.9 806.6 584.9 C807.6 585.0 809.2 586.0 810.2 585.9 C811.2 585.9 812.8 585.2 813.8 584.9 C814.8 584.6 816.4 583.8 817.4 583.8 C818.4 583.7 820.0 584.5 821.0 584.4 C822.0 584.4 823.6 583.7 824.6 583.6 C825.6 583.4 827.2 583.4 828.2 583.3 C829.2 583.3 830.8 583.3 831.8 583.3 C832.8 583.3 834.4 583.2 835.4 583.0 C836.4 582.8 838.0 582.0 839.0 581.9 C840.0 581.8 841.6 582.1 842.6 582.1 C843.6 582.2 845.2 582.5 846.2 582.5 C847.2 582.5 849.3 582.3 849.8 582.3 C850.0 582.2 849.8 582.1 850.0 582.0 C850.5 581.9 852.4 582.0 853.4 581.8 C854.4 581.6 856.0 580.5 857.0 580.4 C858.0 580.3 859.6 581.0 860.6 581.1 C861.6 581.2 863.2 581.1 864.2 581.0 C865.2 580.9 866.8 580.6 867.8 580.5 C868.8 580.4 870.4 580.4 871.4 580.3 C872.4 580.3 874.0 579.9 875.0 579.9 C876.0 579.9 877.6 580.6 878.6 580.6 C879.6 580.6 881.2 580.3 882.2 580.1 C883.2 579.9 884.8 579.6 885.8 579.3 C886.8 579.1 888.4 578.4 889.4 578.3 C890.4 578.2 892.0 578.7 893.0 578.7 C894.0 578.6 895.6 577.9 896.6 577.8 C897.6 577.7 899.5 578.0 900.0 578.0 C900.2 578.0 900.0 577.7 900.2 577.6 C900.7 577.5 902.8 577.2 903.8 577.2 C904.8 577.2 906.4 577.6 907.4 577.6 C908.4 577.7 910.0 577.5 911.0 577.4 C912.0 577.3 913.6 576.8 914.6 576.6 C915.6 576.4 917.2 576.1 918.2 575.9 C919.2 575.8 920.8 575.7 921.8 575.8 C922.8 575.9 924.4 576.7 925.4 576.6 C926.4 576.6 928.0 575.6 929.0 575.4 C930.0 575.2 931.6 575.3 932.6 575.3 C933.6 575.3 935.2 575.4 936.2 575.4 C937.2 575.4 939.3 575.4 939.8 575.3 C940.0 575.3 939.8 575.1 940.0 575.0 C940.5 574.9 942.4 574.7 943.4 574.6 C944.4 574.5 946.0 574.2 947.0 574.2 C948.0 574.2 949.6 574.8 950.6 574.7 C951.6 574.6 953.2 573.5 954.2 573.5 C955.2 573.4 957.0 574.4 957.8 574.4 C958.6 574.5 959.5 573.5 960.0 573.5 C960.5 573.5 960.7 574.6 961.4 574.5 C962.1 574.4 964.0 572.9 965.0 572.8 C966.0 572.7 967.6 573.7 968.6 573.8 C969.6 573.9 971.3 573.6 972.2 573.5 C973.1 573.3 974.5 573.0 975.0 573.0 C975.5 573.0 975.2 573.3 975.8 573.3 C976.4 573.3 978.4 573.1 979.4 572.8 C980.4 572.6 982.2 571.8 983.0 571.5 C983.8 571.2 984.5 572.6 985.0 571.0 L986.6 560.0 L987.3 480.0 L988.0 412.0 L989.5 405.5 C989.8 404.6 989.8 405.4 990.2 405.4 C990.6 405.3 991.5 405.1 992.0 405.0 C992.5 404.9 993.0 405.0 993.8 405.0 C994.6 405.0 996.4 405.0 997.4 405.0 C998.4 405.0 1000.0 405.0 1001.0 405.0 C1002.0 405.0 1003.6 405.0 1004.6 405.0 C1005.6 405.0 1007.2 405.0 1008.2 405.0 C1009.2 405.0 1010.8 405.0 1011.8 405.0 C1012.8 405.0 1014.4 405.0 1015.4 405.0 C1016.4 405.0 1018.0 405.0 1019.0 405.0 C1020.0 405.0 1021.6 405.0 1022.6 405.0 C1023.6 405.0 1025.2 405.0 1026.2 405.0 C1027.2 405.0 1028.8 405.0 1029.8 405.0 C1030.8 405.0 1032.4 405.0 1033.4 405.0 C1034.4 405.0 1036.0 405.0 1037.0 405.0 C1038.0 405.0 1039.6 405.0 1040.6 405.0 C1041.6 405.0 1043.2 405.0 1044.2 405.0 C1045.2 405.0 1046.8 405.0 1047.8 405.0 C1048.8 405.0 1050.4 405.0 1051.4 405.0 C1052.4 405.0 1054.0 405.0 1055.0 405.0 C1056.0 405.0 1057.6 405.0 1058.6 405.0 C1059.6 405.0 1061.2 405.0 1062.2 405.0 C1063.2 405.0 1064.8 405.0 1065.8 405.0 C1066.8 405.0 1068.4 405.0 1069.4 405.0 C1070.4 405.0 1072.0 405.0 1073.0 405.0 C1074.0 405.0 1075.6 405.0 1076.6 405.0 C1077.6 405.0 1079.2 405.0 1080.2 405.0 C1081.2 405.0 1082.8 405.0 1083.8 405.0 C1084.8 405.0 1086.4 405.0 1087.4 405.0 C1088.4 405.0 1090.0 405.0 1091.0 405.0 C1092.0 405.0 1093.6 405.0 1094.6 405.0 C1095.6 405.0 1097.2 405.0 1098.2 405.0 C1099.2 405.0 1100.8 405.0 1101.8 405.0 C1102.8 405.0 1104.4 405.0 1105.4 405.0 C1106.4 405.0 1108.0 405.0 1109.0 405.0 C1110.0 405.0 1111.6 405.0 1112.6 405.0 C1113.6 405.0 1115.2 405.0 1116.2 405.0 C1117.2 405.0 1118.8 405.0 1119.8 405.0 C1120.8 405.0 1122.4 405.0 1123.4 405.0 C1124.4 405.0 1126.0 405.0 1127.0 405.0 C1128.0 405.0 1129.6 405.0 1130.6 405.0 C1131.6 405.0 1133.2 405.0 1134.2 405.0 C1135.2 405.0 1136.8 405.0 1137.8 405.0 C1138.8 405.0 1140.4 405.0 1141.4 405.0 C1142.4 405.0 1144.0 405.0 1145.0 405.0 C1146.0 405.0 1147.6 405.0 1148.6 405.0 C1149.6 405.0 1151.2 405.0 1152.2 405.0 C1153.2 405.0 1154.8 405.0 1155.8 405.0 C1156.8 405.0 1158.4 405.0 1159.4 405.0 C1160.4 405.0 1162.0 405.0 1163.0 405.0 C1164.0 405.0 1165.6 405.0 1166.6 405.0 C1167.6 405.0 1169.2 405.0 1170.2 405.0 C1171.2 405.0 1172.8 405.0 1173.8 405.0 C1174.8 405.0 1176.4 405.0 1177.4 405.0 C1178.4 405.0 1180.0 405.0 1181.0 405.0 C1182.0 405.0 1183.6 405.0 1184.6 405.0 C1185.6 405.0 1187.2 405.0 1188.2 405.0 C1189.2 405.0 1190.8 405.0 1191.8 405.0 C1192.8 405.0 1194.4 405.0 1195.4 405.0 C1196.4 405.0 1198.0 405.0 1199.0 405.0 C1200.0 405.0 1201.6 405.0 1202.6 405.0 C1203.6 405.0 1205.2 405.0 1206.2 405.0 C1207.2 405.0 1208.8 405.0 1209.8 405.0 C1210.8 405.0 1212.4 405.0 1213.4 405.0 C1214.4 405.0 1216.0 405.0 1217.0 405.0 C1218.0 405.0 1219.6 405.0 1220.6 405.0 C1221.6 405.0 1223.2 405.0 1224.2 405.0 C1225.2 405.0 1226.8 405.0 1227.8 405.0 C1228.8 405.0 1230.4 405.0 1231.4 405.0 C1232.4 405.0 1234.0 405.0 1235.0 405.0 C1236.0 405.0 1237.6 405.0 1238.6 405.0 C1239.6 405.0 1241.2 405.0 1242.2 405.0 C1243.2 405.0 1244.8 405.0 1245.8 405.0 C1246.8 405.0 1248.4 405.0 1249.4 405.0 C1250.4 405.0 1252.0 405.0 1253.0 405.0 C1254.0 405.0 1255.6 405.0 1256.6 405.0 C1257.6 405.0 1259.2 405.0 1260.2 405.0 C1261.2 405.0 1262.8 405.0 1263.8 405.0 C1264.8 405.0 1266.4 405.0 1267.4 405.0 C1268.4 405.0 1270.0 405.0 1271.0 405.0 C1272.0 405.0 1273.6 405.0 1274.6 405.0 C1275.6 405.0 1277.2 405.0 1278.2 405.0 C1279.2 405.0 1280.8 405.0 1281.8 405.0 C1282.8 405.0 1284.4 405.0 1285.4 405.0 C1286.4 405.0 1288.0 405.0 1289.0 405.0 C1290.0 405.0 1291.6 405.0 1292.6 405.0 C1293.6 405.0 1295.2 405.0 1296.2 405.0 C1297.2 405.0 1298.8 405.0 1299.8 405.0 C1300.8 405.0 1302.4 405.0 1303.4 405.0 C1304.4 405.0 1306.0 405.0 1307.0 405.0 C1308.0 405.0 1309.6 405.0 1310.6 405.0 C1311.6 405.0 1313.2 405.0 1314.2 405.0 C1315.2 405.0 1316.8 405.0 1317.8 405.0 C1318.8 405.0 1320.4 405.0 1321.4 405.0 C1322.4 405.0 1324.0 405.0 1325.0 405.0 C1326.0 405.0 1327.6 405.0 1328.6 405.0 C1329.6 405.0 1331.2 405.0 1332.2 405.0 C1333.2 405.0 1334.8 405.0 1335.8 405.0 C1336.8 405.0 1338.4 405.0 1339.4 405.0 C1340.4 405.0 1342.0 405.0 1343.0 405.0 C1344.0 405.0 1345.6 405.0 1346.6 405.0 C1347.6 405.0 1349.2 405.0 1350.2 405.0 C1351.2 405.0 1352.8 405.0 1353.8 405.0 C1354.8 405.0 1356.4 405.0 1357.4 405.0 C1358.4 405.0 1360.0 405.0 1361.0 405.0 C1362.0 405.0 1363.6 405.0 1364.6 405.0 C1365.6 405.0 1367.2 405.0 1368.2 405.0 C1369.2 405.0 1370.8 405.0 1371.8 405.0 C1372.8 405.0 1374.4 405.0 1375.4 405.0 C1376.4 405.0 1378.0 405.0 1379.0 405.0 C1380.0 405.0 1381.6 405.0 1382.6 405.0 C1383.6 405.0 1385.2 405.0 1386.2 405.0 C1387.2 405.0 1388.8 405.0 1389.8 405.0 C1390.8 405.0 1392.4 405.0 1393.4 405.0 C1394.4 405.0 1396.0 405.0 1397.0 405.0 C1398.0 405.0 1399.6 405.0 1400.6 405.0 C1401.6 405.0 1403.2 405.0 1404.2 405.0 C1405.2 405.0 1406.8 405.0 1407.8 405.0 C1408.8 405.0 1410.4 405.0 1411.4 405.0 C1412.4 405.0 1414.0 405.0 1415.0 405.0 C1416.0 405.0 1417.6 405.0 1418.6 405.0 C1419.6 405.0 1421.2 405.0 1422.2 405.0 C1423.2 405.0 1424.8 405.0 1425.8 405.0 C1426.8 405.0 1428.4 405.0 1429.4 405.0 C1430.4 405.0 1432.0 405.0 1433.0 405.0 C1434.0 405.0 1435.6 405.0 1436.6 405.0 C1437.6 405.0 1439.2 405.0 1440.2 405.0 C1441.2 405.0 1442.8 405.0 1443.8 405.0 C1444.8 405.0 1446.4 405.0 1447.4 405.0 C1448.4 405.0 1450.0 405.0 1451.0 405.0 C1452.0 405.0 1453.6 405.0 1454.6 405.0 C1455.6 405.0 1457.2 405.0 1458.2 405.0 C1459.2 405.0 1460.8 405.0 1461.8 405.0 C1462.8 405.0 1464.4 405.0 1465.4 405.0 C1466.4 405.0 1468.0 405.0 1469.0 405.0 C1470.0 405.0 1471.6 405.0 1472.6 405.0 C1473.6 405.0 1475.2 405.0 1476.2 405.0 C1477.2 405.0 1478.8 405.0 1479.8 405.0 C1480.8 405.0 1482.4 405.0 1483.4 405.0 C1484.4 405.0 1486.0 405.0 1487.0 405.0 C1488.0 405.0 1489.6 405.0 1490.6 405.0 C1491.6 405.0 1493.2 405.0 1494.2 405.0 C1495.2 405.0 1496.8 405.0 1497.8 405.0 C1498.8 405.0 1500.4 405.0 1501.4 405.0 C1502.4 405.0 1504.0 405.0 1505.0 405.0 C1506.0 405.0 1507.6 405.0 1508.6 405.0 C1509.6 405.0 1511.2 405.0 1512.2 405.0 C1513.2 405.0 1514.8 405.0 1515.8 405.0 C1516.8 405.0 1518.5 405.0 1519.4 405.0 C1520.3 405.0 1521.6 405.0 1522.0 405.0" stroke="#ffd16a"/><path d="M677.0 621.6 C677.4 621.6 679.5 622.0 680.0 622.0 C680.5 622.0 680.0 622.0 680.6 621.8 C681.2 621.6 683.2 621.3 684.2 620.8 C685.2 620.3 687.0 618.6 687.8 618.2 C688.6 617.8 689.5 618.1 690.0 618.0 C690.5 617.9 690.7 617.4 691.4 617.3 C692.1 617.1 694.0 617.1 695.0 617.0 C696.0 616.8 697.6 616.4 698.6 616.4 C699.6 616.3 701.2 616.7 702.2 616.5 C703.2 616.4 704.8 615.5 705.8 615.4 C706.8 615.3 708.8 615.5 709.4 615.6 C710.0 615.6 709.5 615.8 710.0 615.8 C710.5 615.8 712.1 615.8 713.0 615.8 C713.9 615.8 715.6 615.9 716.6 615.8 C717.6 615.7 719.2 615.3 720.2 615.2 C721.2 615.2 722.8 615.5 723.8 615.5 C724.8 615.5 726.4 615.0 727.4 615.1 C728.4 615.2 730.0 615.8 731.0 615.9 C732.0 616.0 733.6 616.0 734.6 615.8 C735.6 615.6 737.2 614.6 738.2 614.5 C739.2 614.4 740.8 615.4 741.8 615.3 C742.8 615.2 744.4 614.1 745.4 613.9 C746.4 613.8 748.0 614.1 749.0 614.0 C750.0 614.0 751.6 613.9 752.6 613.9 C753.6 613.9 755.2 614.1 756.2 614.0 C757.2 614.0 758.8 613.5 759.8 613.5 C760.8 613.4 762.4 613.5 763.4 613.7 C764.4 613.8 766.0 614.6 767.0 614.6 C768.0 614.6 769.6 614.0 770.6 613.7 C771.6 613.5 773.2 612.8 774.2 612.7 C775.2 612.6 776.8 613.1 777.8 613.1 C778.8 613.1 780.4 612.5 781.4 612.5 C782.4 612.4 784.0 612.6 785.0 612.7 C786.0 612.8 787.6 613.1 788.6 613.2 C789.6 613.2 791.2 613.0 792.2 612.8 C793.2 612.6 794.8 611.7 795.8 611.8 C796.8 611.8 798.8 612.9 799.4 613.0 C800.0 613.2 799.5 612.7 800.0 612.5 C800.5 612.3 802.1 611.4 803.0 611.4 C803.9 611.4 805.6 612.5 806.6 612.5 C807.6 612.5 809.2 611.7 810.2 611.6 C811.2 611.4 812.8 611.4 813.8 611.3 C814.8 611.3 816.4 611.4 817.4 611.4 C818.4 611.4 820.0 611.3 821.0 611.4 C822.0 611.6 823.6 612.4 824.6 612.4 C825.6 612.4 827.2 611.5 828.2 611.4 C829.2 611.3 830.8 612.0 831.8 611.9 C832.8 611.9 834.4 610.8 835.4 610.8 C836.4 610.8 838.0 612.0 839.0 612.1 C840.0 612.3 841.6 611.9 842.6 611.9 C843.6 611.9 845.2 612.0 846.2 611.9 C847.2 611.7 848.8 610.9 849.8 610.8 C850.8 610.6 852.4 610.8 853.4 610.8 C854.4 610.8 856.0 610.8 857.0 610.7 C858.0 610.7 859.6 610.5 860.6 610.5 C861.6 610.4 863.2 610.6 864.2 610.6 C865.2 610.6 866.8 610.4 867.8 610.4 C868.8 610.4 870.4 610.6 871.4 610.7 C872.4 610.8 874.0 611.2 875.0 611.2 C876.0 611.2 877.6 610.9 878.6 610.7 C879.6 610.5 881.2 610.0 882.2 609.9 C883.2 609.8 884.8 610.0 885.8 610.0 C886.8 610.0 888.4 610.0 889.4 609.9 C890.4 609.8 892.0 609.4 893.0 609.4 C894.0 609.5 895.6 610.3 896.6 610.3 C897.6 610.4 899.2 610.0 900.2 609.8 C901.2 609.7 902.8 609.5 903.8 609.4 C904.8 609.3 906.4 609.1 907.4 609.1 C908.4 609.2 910.0 609.7 911.0 609.7 C912.0 609.8 913.6 609.4 914.6 609.4 C915.6 609.3 917.2 609.5 918.2 609.4 C919.2 609.3 920.8 608.5 921.8 608.4 C922.8 608.3 924.4 608.5 925.4 608.6 C926.4 608.6 928.0 608.9 929.0 608.8 C930.0 608.8 931.6 608.3 932.6 608.4 C933.6 608.4 935.2 608.9 936.2 609.0 C937.2 609.1 938.8 609.1 939.8 609.0 C940.8 608.9 942.4 608.3 943.4 608.3 C944.4 608.2 946.0 608.6 947.0 608.7 C948.0 608.7 949.6 608.9 950.6 608.7 C951.6 608.6 953.2 607.8 954.2 607.7 C955.2 607.7 957.0 608.4 957.8 608.4 C958.6 608.5 959.5 608.1 960.0 608.0 C960.5 607.9 960.7 607.9 961.4 608.0 C962.1 608.0 964.0 608.2 965.0 608.1 C966.0 608.0 967.6 607.2 968.6 607.2 C969.6 607.2 971.2 607.9 972.2 607.9 C973.2 607.9 974.8 607.2 975.8 607.2 C976.8 607.2 978.4 607.8 979.4 607.9 C980.4 608.0 982.0 607.9 983.0 607.8 C984.0 607.8 985.6 607.5 986.6 607.5 C987.6 607.6 989.2 608.0 990.2 607.9 C991.2 607.8 992.8 607.2 993.8 607.1 C994.8 607.0 996.4 607.3 997.4 607.3 C998.4 607.4 1000.0 607.4 1001.0 607.3 C1002.0 607.2 1003.6 606.5 1004.6 606.5 C1005.6 606.4 1007.2 606.7 1008.2 606.9 C1009.2 607.1 1010.8 607.7 1011.8 607.8 C1012.8 607.8 1014.4 607.4 1015.4 607.2 C1016.4 607.0 1018.0 606.3 1019.0 606.3 C1020.0 606.2 1021.6 606.4 1022.6 606.6 C1023.6 606.7 1025.2 607.3 1026.2 607.3 C1027.2 607.3 1028.8 606.8 1029.8 606.6 C1030.8 606.4 1032.4 606.2 1033.4 606.2 C1034.4 606.2 1036.0 606.4 1037.0 606.5 C1038.0 606.7 1039.6 607.1 1040.6 607.1 C1041.6 607.1 1043.2 606.4 1044.2 606.5 C1045.2 606.6 1046.8 607.4 1047.8 607.6 C1048.8 607.7 1050.4 607.8 1051.4 607.6 C1052.4 607.5 1054.0 606.5 1055.0 606.4 C1056.0 606.2 1057.6 606.7 1058.6 606.8 C1059.6 606.9 1061.2 607.2 1062.2 607.0 C1063.2 606.8 1064.8 605.6 1065.8 605.4 C1066.8 605.3 1068.4 605.5 1069.4 605.8 C1070.4 606.0 1072.0 606.9 1073.0 607.1 C1074.0 607.3 1075.6 607.7 1076.6 607.4 C1077.6 607.2 1079.2 605.8 1080.2 605.6 C1081.2 605.4 1082.8 606.3 1083.8 606.2 C1084.8 606.2 1086.4 605.0 1087.4 605.1 C1088.4 605.2 1090.0 606.8 1091.0 606.9 C1092.0 606.9 1093.6 605.7 1094.6 605.6 C1095.6 605.4 1097.4 605.8 1098.2 605.9 C1099.0 605.9 1099.5 606.0 1100.0 606.0 C1100.5 606.0 1101.0 605.9 1101.8 606.0 C1102.6 606.0 1104.4 606.2 1105.4 606.2 C1106.4 606.2 1108.0 606.2 1109.0 606.0 C1110.0 605.8 1111.6 605.2 1112.6 605.1 C1113.6 605.0 1115.2 605.5 1116.2 605.5 C1117.2 605.6 1118.8 605.4 1119.8 605.4 C1120.8 605.3 1122.4 605.1 1123.4 605.3 C1124.4 605.5 1126.0 606.5 1127.0 606.5 C1128.0 606.5 1129.6 605.4 1130.6 605.3 C1131.6 605.1 1133.2 605.3 1134.2 605.3 C1135.2 605.2 1136.8 604.9 1137.8 604.8 C1138.8 604.7 1140.4 604.6 1141.4 604.8 C1142.4 605.0 1144.0 606.2 1145.0 606.2 C1146.0 606.2 1147.6 605.3 1148.6 605.0 C1149.6 604.7 1151.2 604.3 1152.2 604.4 C1153.2 604.4 1154.8 605.1 1155.8 605.2 C1156.8 605.3 1158.4 605.2 1159.4 605.0 C1160.4 604.9 1162.0 604.2 1163.0 604.3 C1164.0 604.3 1165.6 605.3 1166.6 605.4 C1167.6 605.5 1169.2 604.8 1170.2 604.8 C1171.2 604.8 1172.8 605.5 1173.8 605.4 C1174.8 605.3 1176.4 604.3 1177.4 604.2 C1178.4 604.1 1180.0 604.8 1181.0 604.9 C1182.0 604.9 1183.6 604.4 1184.6 604.4 C1185.6 604.3 1187.2 604.4 1188.2 604.5 C1189.2 604.6 1190.8 605.1 1191.8 605.1 C1192.8 605.2 1194.4 604.8 1195.4 604.8 C1196.4 604.7 1198.0 604.6 1199.0 604.6 C1200.0 604.5 1201.6 604.3 1202.6 604.3 C1203.6 604.2 1205.2 604.5 1206.2 604.4 C1207.2 604.3 1208.8 603.7 1209.8 603.7 C1210.8 603.7 1212.4 604.2 1213.4 604.3 C1214.4 604.3 1216.0 604.3 1217.0 604.2 C1218.0 604.2 1219.6 603.9 1220.6 604.0 C1221.6 604.0 1223.2 604.8 1224.2 604.8 C1225.2 604.8 1226.8 604.1 1227.8 603.9 C1228.8 603.6 1230.4 602.8 1231.4 602.9 C1232.4 603.0 1234.0 604.6 1235.0 604.7 C1236.0 604.9 1237.9 604.0 1238.6 603.8 C1239.3 603.7 1239.5 603.7 1240.0 603.7 C1240.5 603.7 1241.4 603.8 1242.2 603.8 C1243.0 603.8 1244.8 603.9 1245.8 603.7 C1246.8 603.5 1248.4 602.7 1249.4 602.5 C1250.4 602.4 1252.0 602.7 1253.0 602.9 C1254.0 603.0 1255.6 603.3 1256.6 603.4 C1257.6 603.6 1259.2 603.9 1260.2 603.9 C1261.2 603.8 1262.8 603.0 1263.8 602.8 C1264.8 602.7 1266.4 602.7 1267.4 602.7 C1268.4 602.7 1270.0 602.9 1271.0 602.9 C1272.0 603.0 1273.6 603.0 1274.6 603.0 C1275.6 603.0 1277.2 603.1 1278.2 603.1 C1279.2 603.0 1280.8 602.5 1281.8 602.5 C1282.8 602.4 1284.4 602.6 1285.4 602.8 C1286.4 603.0 1288.0 603.8 1289.0 603.9 C1290.0 604.0 1291.6 603.6 1292.6 603.5 C1293.6 603.4 1295.2 603.3 1296.2 603.1 C1297.2 602.9 1299.3 601.9 1299.8 601.8 C1300.0 601.8 1299.8 602.5 1300.0 602.6 C1300.5 602.7 1302.4 602.6 1303.4 602.5 C1304.4 602.5 1306.0 602.3 1307.0 602.2 C1308.0 602.1 1309.6 601.8 1310.6 601.8 C1311.6 601.9 1313.2 602.4 1314.2 602.4 C1315.2 602.5 1316.8 602.4 1317.8 602.4 C1318.8 602.4 1320.4 602.4 1321.4 602.4 C1322.4 602.4 1324.0 602.3 1325.0 602.4 C1326.0 602.5 1327.6 603.0 1328.6 603.0 C1329.6 603.0 1331.2 602.6 1332.2 602.5 C1333.2 602.5 1334.8 602.8 1335.8 602.8 C1336.8 602.9 1338.4 603.0 1339.4 602.9 C1340.4 602.8 1342.0 602.2 1343.0 602.3 C1344.0 602.3 1345.6 602.9 1346.6 602.9 C1347.6 603.0 1349.2 602.5 1350.2 602.5 C1351.2 602.6 1352.8 603.1 1353.8 603.2 C1354.8 603.4 1356.4 603.5 1357.4 603.3 C1358.4 603.1 1360.0 602.1 1361.0 602.0 C1362.0 601.9 1363.6 602.5 1364.6 602.6 C1365.6 602.8 1367.2 603.2 1368.2 603.2 C1369.2 603.1 1370.8 602.4 1371.8 602.5 C1372.8 602.6 1374.4 603.5 1375.4 603.5 C1376.4 603.6 1378.0 602.8 1379.0 602.7 C1380.0 602.7 1381.6 603.2 1382.6 603.2 C1383.6 603.2 1385.2 602.4 1386.2 602.4 C1387.2 602.5 1388.8 603.3 1389.8 603.3 C1390.8 603.3 1392.4 602.4 1393.4 602.3 C1394.4 602.1 1396.0 602.3 1397.0 602.4 C1398.0 602.5 1399.6 603.1 1400.6 603.3 C1401.6 603.4 1403.2 603.4 1404.2 603.2 C1405.2 603.1 1406.8 602.1 1407.8 602.1 C1408.8 602.1 1410.4 603.3 1411.4 603.3 C1412.4 603.3 1414.0 602.0 1415.0 601.9 C1416.0 601.9 1417.6 602.7 1418.6 602.8 C1419.6 602.9 1421.2 602.7 1422.2 602.7 C1423.2 602.8 1425.1 603.3 1425.8 603.2 C1426.5 603.2 1426.5 602.8 1427.0 602.6 C1427.5 602.4 1428.6 602.1 1429.4 602.0 C1430.2 601.8 1432.0 601.5 1433.0 601.6 C1434.0 601.6 1435.6 602.4 1436.6 602.5 C1437.6 602.5 1439.2 602.0 1440.2 601.9 C1441.2 601.8 1442.8 601.7 1443.8 601.7 C1444.8 601.7 1446.4 602.0 1447.4 602.0 C1448.4 602.0 1450.0 601.7 1451.0 601.7 C1452.0 601.6 1453.6 601.7 1454.6 601.5 C1455.6 601.4 1457.4 600.8 1458.2 600.7 C1459.0 600.7 1459.5 601.1 1460.0 601.0 C1460.5 600.9 1461.0 600.4 1461.8 600.4 C1462.6 600.3 1464.4 600.9 1465.4 600.9 C1466.4 601.0 1468.0 600.8 1469.0 600.7 C1470.0 600.6 1471.6 600.4 1472.6 600.4 C1473.6 600.4 1475.2 600.6 1476.2 600.6 C1477.2 600.5 1478.8 600.0 1479.8 599.9 C1480.8 599.9 1482.4 600.5 1483.4 600.5 C1484.4 600.4 1486.0 599.6 1487.0 599.6 C1488.0 599.5 1489.8 599.9 1490.6 599.8 C1491.4 599.7 1492.5 599.2 1493.0 599.0 C1493.5 598.8 1493.5 598.5 1494.2 598.1 C1494.9 597.7 1497.3 596.3 1497.8 596.0 C1498.0 595.7 1497.8 596.5 1498.0 596.0 C1498.5 595.5 1500.6 593.6 1501.4 592.8 C1502.2 592.1 1503.5 591.0 1504.0 590.6 C1504.5 590.2 1504.3 590.3 1505.0 590.2 C1505.7 590.1 1507.6 590.4 1508.6 590.0 C1509.6 589.7 1511.5 588.3 1512.0 588.0 C1512.2 587.7 1512.0 587.8 1512.2 587.8 C1512.7 587.8 1514.8 588.2 1515.8 588.0 C1516.8 587.8 1518.5 586.3 1519.4 586.1 C1520.3 585.9 1521.6 586.4 1522.0 586.5" stroke="#6d3fc0"/><path d="M677.0 615.4 C677.5 615.6 680.0 616.6 680.6 616.7 C681.0 616.8 680.6 616.4 681.0 616.0 C681.5 615.6 683.2 614.5 684.2 614.1 C685.2 613.7 687.0 613.6 687.8 613.2 C688.6 612.7 689.5 611.4 690.0 611.0 C690.5 610.6 690.7 610.4 691.4 610.3 C692.1 610.1 694.0 610.3 695.0 610.0 C696.0 609.6 697.9 608.0 698.6 607.7 C699.3 607.4 699.5 607.9 700.0 608.0 C700.5 608.1 701.4 608.5 702.2 608.4 C703.0 608.3 704.8 607.3 705.8 607.3 C706.8 607.2 708.4 608.0 709.4 608.1 C710.4 608.1 712.0 607.8 713.0 607.7 C714.0 607.7 715.6 608.0 716.6 607.9 C717.6 607.8 719.2 607.3 720.2 607.1 C721.2 606.9 722.8 606.3 723.8 606.4 C724.8 606.4 726.4 607.1 727.4 607.2 C728.4 607.3 730.0 607.3 731.0 607.2 C732.0 607.1 733.6 606.3 734.6 606.3 C735.6 606.2 737.2 606.6 738.2 606.7 C739.2 606.8 740.8 607.2 741.8 607.0 C742.8 606.9 744.4 606.0 745.4 606.0 C746.4 605.9 748.0 606.6 749.0 606.7 C750.0 606.8 751.6 606.4 752.6 606.4 C753.6 606.4 755.2 606.7 756.2 606.7 C757.2 606.6 758.8 606.3 759.8 606.3 C760.8 606.2 762.4 606.4 763.4 606.4 C764.4 606.4 766.0 606.4 767.0 606.4 C768.0 606.5 769.6 606.8 770.6 606.9 C771.6 607.0 773.2 607.0 774.2 606.8 C775.2 606.6 776.8 605.5 777.8 605.4 C778.8 605.3 780.4 606.0 781.4 606.1 C782.4 606.3 784.0 606.4 785.0 606.4 C786.0 606.3 787.6 605.8 788.6 605.7 C789.6 605.6 791.2 605.6 792.2 605.6 C793.2 605.5 794.8 605.5 795.8 605.6 C796.8 605.7 798.8 606.3 799.4 606.3 C800.0 606.3 799.5 605.6 800.0 605.5 C800.5 605.4 802.1 605.9 803.0 605.8 C803.9 605.8 805.6 605.2 806.6 605.1 C807.6 605.0 809.2 604.9 810.2 604.9 C811.2 604.8 812.8 604.6 813.8 604.6 C814.8 604.7 816.4 605.1 817.4 605.1 C818.4 605.1 820.0 604.5 821.0 604.5 C822.0 604.5 823.6 605.2 824.6 605.2 C825.6 605.1 827.2 604.1 828.2 604.1 C829.2 604.0 830.8 604.8 831.8 604.8 C832.8 604.8 834.4 603.9 835.4 603.9 C836.4 604.0 838.0 605.2 839.0 605.3 C840.0 605.4 841.6 604.5 842.6 604.4 C843.6 604.2 845.2 604.2 846.2 604.3 C847.2 604.3 848.8 604.5 849.8 604.5 C850.8 604.5 852.4 604.2 853.4 604.2 C854.4 604.2 856.0 604.5 857.0 604.7 C858.0 604.9 859.6 605.5 860.6 605.5 C861.6 605.4 863.2 604.3 864.2 604.1 C865.2 604.0 866.8 604.4 867.8 604.5 C868.8 604.6 870.4 604.9 871.4 605.0 C872.4 605.1 874.0 605.0 875.0 604.9 C876.0 604.8 877.6 604.3 878.6 604.2 C879.6 604.1 881.2 604.2 882.2 604.3 C883.2 604.4 884.8 604.6 885.8 604.7 C886.8 604.8 888.4 604.9 889.4 604.9 C890.4 604.9 892.0 604.9 893.0 604.7 C894.0 604.6 895.6 604.0 896.6 603.9 C897.6 603.8 899.2 604.0 900.2 604.1 C901.2 604.3 902.8 605.0 903.8 605.1 C904.8 605.2 906.4 604.9 907.4 604.8 C908.4 604.8 910.0 605.0 911.0 604.9 C912.0 604.8 913.6 604.2 914.6 604.1 C915.6 604.0 917.2 604.3 918.2 604.3 C919.2 604.4 920.8 604.3 921.8 604.2 C922.8 604.2 924.4 603.9 925.4 603.8 C926.4 603.8 928.0 604.0 929.0 604.1 C930.0 604.1 931.6 604.3 932.6 604.2 C933.6 604.2 935.2 603.6 936.2 603.5 C937.2 603.4 938.8 603.5 939.8 603.6 C940.8 603.7 942.4 604.1 943.4 604.2 C944.4 604.3 946.0 604.2 947.0 604.2 C948.0 604.1 949.6 603.9 950.6 603.9 C951.6 603.8 953.2 603.8 954.2 603.8 C955.2 603.8 957.0 604.0 957.8 604.0 C958.6 603.9 959.5 603.7 960.0 603.7 C960.5 603.7 960.7 603.7 961.4 603.7 C962.1 603.8 964.0 604.1 965.0 604.0 C966.0 603.8 967.6 602.8 968.6 602.6 C969.6 602.4 971.2 602.4 972.2 602.5 C973.2 602.6 974.8 603.2 975.8 603.2 C976.8 603.2 978.4 602.5 979.4 602.5 C980.4 602.5 982.0 603.1 983.0 603.1 C984.0 603.1 985.6 602.8 986.6 602.7 C987.6 602.6 989.2 602.4 990.2 602.4 C991.2 602.4 992.8 602.7 993.8 602.7 C994.8 602.7 996.4 602.4 997.4 602.4 C998.4 602.4 1000.0 602.7 1001.0 602.7 C1002.0 602.7 1003.6 602.7 1004.6 602.7 C1005.6 602.7 1007.2 603.0 1008.2 603.0 C1009.2 603.0 1010.8 602.8 1011.8 602.6 C1012.8 602.5 1014.4 602.1 1015.4 602.0 C1016.4 601.8 1018.0 601.6 1019.0 601.8 C1020.0 601.9 1021.6 602.9 1022.6 602.9 C1023.6 603.0 1025.2 602.0 1026.2 602.0 C1027.2 602.1 1028.8 603.2 1029.8 603.2 C1030.8 603.3 1032.4 602.4 1033.4 602.3 C1034.4 602.2 1036.0 602.4 1037.0 602.4 C1038.0 602.4 1039.6 602.2 1040.6 602.2 C1041.6 602.2 1043.2 602.5 1044.2 602.4 C1045.2 602.4 1046.8 602.1 1047.8 602.0 C1048.8 601.8 1050.4 601.3 1051.4 601.2 C1052.4 601.1 1054.0 601.4 1055.0 601.4 C1056.0 601.4 1057.6 601.1 1058.6 601.1 C1059.6 601.1 1061.2 601.4 1062.2 601.5 C1063.2 601.6 1064.8 601.8 1065.8 601.9 C1066.8 602.0 1068.4 602.4 1069.4 602.2 C1070.4 602.0 1072.0 600.6 1073.0 600.5 C1074.0 600.5 1075.6 601.9 1076.6 601.9 C1077.6 601.9 1079.2 600.5 1080.2 600.3 C1081.2 600.0 1082.8 600.3 1083.8 600.2 C1084.8 600.2 1086.4 599.8 1087.4 599.8 C1088.4 599.8 1090.0 600.1 1091.0 600.2 C1092.0 600.4 1093.6 600.9 1094.6 601.0 C1095.6 601.1 1097.2 601.1 1098.2 601.0 C1099.2 600.9 1100.8 600.5 1101.8 600.4 C1102.8 600.3 1104.4 600.3 1105.4 600.4 C1106.4 600.5 1108.0 600.8 1109.0 600.9 C1110.0 601.0 1111.6 601.0 1112.6 600.9 C1113.6 600.7 1115.2 600.0 1116.2 599.8 C1117.2 599.6 1118.8 599.6 1119.8 599.5 C1120.8 599.5 1122.4 599.6 1123.4 599.6 C1124.4 599.6 1126.0 599.7 1127.0 599.8 C1128.0 599.9 1129.6 600.5 1130.6 600.4 C1131.6 600.3 1133.2 599.0 1134.2 599.0 C1135.2 599.1 1136.8 600.5 1137.8 600.7 C1138.8 600.9 1140.4 600.6 1141.4 600.4 C1142.4 600.2 1144.0 599.1 1145.0 599.0 C1146.0 598.9 1147.6 599.4 1148.6 599.4 C1149.6 599.4 1151.2 599.0 1152.2 599.0 C1153.2 599.0 1154.8 599.3 1155.8 599.4 C1156.8 599.5 1158.4 599.9 1159.4 599.7 C1160.4 599.6 1162.0 598.7 1163.0 598.6 C1164.0 598.4 1165.6 598.5 1166.6 598.7 C1167.6 598.9 1169.2 600.1 1170.2 600.0 C1171.2 599.9 1172.8 598.1 1173.8 598.0 C1174.8 597.9 1176.4 598.9 1177.4 599.0 C1178.4 599.1 1180.0 598.7 1181.0 598.7 C1182.0 598.7 1183.6 599.4 1184.6 599.3 C1185.6 599.1 1187.2 597.8 1188.2 597.8 C1189.2 597.8 1190.8 599.0 1191.8 599.2 C1192.8 599.4 1194.4 599.1 1195.4 598.9 C1196.4 598.8 1198.0 598.1 1199.0 598.1 C1200.0 598.1 1201.6 599.1 1202.6 599.1 C1203.6 599.1 1205.2 598.1 1206.2 598.0 C1207.2 597.9 1208.8 598.4 1209.8 598.4 C1210.8 598.4 1212.4 598.3 1213.4 598.2 C1214.4 598.2 1216.0 598.1 1217.0 598.1 C1218.0 598.1 1219.6 598.1 1220.6 598.0 C1221.6 598.0 1223.2 597.6 1224.2 597.6 C1225.2 597.5 1226.8 597.7 1227.8 597.7 C1228.8 597.7 1230.4 597.7 1231.4 597.6 C1232.4 597.6 1234.0 597.3 1235.0 597.4 C1236.0 597.5 1237.9 598.3 1238.6 598.3 C1239.3 598.3 1239.5 597.7 1240.0 597.5 C1240.5 597.3 1241.4 596.9 1242.2 597.0 C1243.0 597.0 1244.8 597.5 1245.8 597.7 C1246.8 597.9 1248.4 598.5 1249.4 598.4 C1250.4 598.4 1252.0 597.6 1253.0 597.3 C1254.0 597.1 1255.6 596.9 1256.6 596.9 C1257.6 596.9 1259.2 597.4 1260.2 597.3 C1261.2 597.3 1262.8 596.5 1263.8 596.5 C1264.8 596.6 1266.4 597.6 1267.4 597.7 C1268.4 597.8 1270.0 597.0 1271.0 597.0 C1272.0 597.0 1273.6 597.7 1274.6 597.7 C1275.6 597.7 1277.2 597.4 1278.2 597.3 C1279.2 597.3 1280.8 597.4 1281.8 597.4 C1282.8 597.5 1284.4 597.4 1285.4 597.5 C1286.4 597.5 1288.0 597.9 1289.0 597.8 C1290.0 597.7 1291.6 596.6 1292.6 596.5 C1293.6 596.4 1295.2 597.0 1296.2 597.0 C1297.2 596.9 1298.8 596.1 1299.8 596.2 C1300.8 596.2 1302.4 597.1 1303.4 597.2 C1304.4 597.2 1306.0 596.5 1307.0 596.5 C1308.0 596.5 1309.6 597.0 1310.6 597.2 C1311.6 597.5 1313.2 598.2 1314.2 598.2 C1315.2 598.2 1316.8 597.3 1317.8 597.1 C1318.8 596.9 1320.4 596.6 1321.4 596.6 C1322.4 596.7 1324.0 597.4 1325.0 597.4 C1326.0 597.5 1327.6 597.1 1328.6 597.0 C1329.6 597.0 1331.2 596.9 1332.2 596.9 C1333.2 596.8 1334.8 596.4 1335.8 596.5 C1336.8 596.6 1338.4 597.2 1339.4 597.3 C1340.4 597.4 1342.0 597.3 1343.0 597.2 C1344.0 597.0 1345.6 596.2 1346.6 596.3 C1347.6 596.4 1349.2 597.7 1350.2 597.8 C1351.2 597.9 1352.8 596.9 1353.8 596.9 C1354.8 596.8 1356.4 597.1 1357.4 597.2 C1358.4 597.3 1360.0 597.5 1361.0 597.3 C1362.0 597.1 1363.6 595.9 1364.6 595.8 C1365.6 595.8 1367.2 596.7 1368.2 597.0 C1369.2 597.3 1370.8 597.9 1371.8 597.9 C1372.8 597.9 1374.4 597.1 1375.4 596.9 C1376.4 596.7 1378.0 596.5 1379.0 596.4 C1380.0 596.4 1381.6 596.5 1382.6 596.5 C1383.6 596.5 1385.2 596.4 1386.2 596.4 C1387.2 596.4 1388.8 596.5 1389.8 596.4 C1390.8 596.3 1392.4 595.5 1393.4 595.6 C1394.4 595.6 1396.0 596.4 1397.0 596.5 C1398.0 596.6 1399.6 596.5 1400.6 596.5 C1401.6 596.5 1403.2 596.5 1404.2 596.6 C1405.2 596.8 1406.8 597.4 1407.8 597.5 C1408.8 597.5 1410.4 597.0 1411.4 596.8 C1412.4 596.5 1414.0 595.9 1415.0 595.9 C1416.0 595.8 1417.6 596.0 1418.6 596.3 C1419.6 596.5 1421.2 597.5 1422.2 597.6 C1423.2 597.7 1424.8 597.1 1425.8 596.9 C1426.8 596.7 1428.4 596.3 1429.4 596.1 C1430.4 595.9 1432.0 595.8 1433.0 595.8 C1434.0 595.8 1435.6 596.2 1436.6 596.2 C1437.6 596.1 1439.2 595.3 1440.2 595.3 C1441.2 595.3 1442.8 595.8 1443.8 596.0 C1444.8 596.3 1446.4 596.9 1447.4 597.0 C1448.4 597.0 1450.0 596.7 1451.0 596.5 C1452.0 596.4 1453.6 596.0 1454.6 595.9 C1455.6 595.8 1457.2 595.9 1458.2 595.9 C1459.2 595.8 1460.8 595.3 1461.8 595.3 C1462.8 595.4 1464.4 596.3 1465.4 596.4 C1466.4 596.5 1468.0 596.4 1469.0 596.2 C1470.0 596.0 1471.6 595.0 1472.6 595.2 C1473.6 595.3 1475.2 597.0 1476.2 597.2 C1477.2 597.4 1478.8 596.7 1479.8 596.5 C1480.8 596.2 1482.4 595.5 1483.4 595.4 C1484.4 595.3 1486.0 595.7 1487.0 595.9 C1488.0 596.1 1489.6 596.8 1490.6 596.9 C1491.6 597.0 1493.2 596.6 1494.2 596.4 C1495.2 596.1 1496.8 595.1 1497.8 595.3 C1498.8 595.4 1500.4 597.0 1501.4 597.2 C1502.4 597.4 1504.0 596.8 1505.0 596.8 C1506.0 596.7 1507.6 596.8 1508.6 596.7 C1509.6 596.6 1511.2 595.8 1512.2 595.8 C1513.2 595.8 1514.8 596.7 1515.8 596.7 C1516.8 596.6 1518.5 595.6 1519.4 595.5 C1520.3 595.4 1521.6 596.1 1522.0 596.2" stroke="#d5dae5"/><path d="M677.0 705.4 C677.5 705.2 680.0 704.1 680.6 703.8 C681.0 703.4 680.6 703.2 681.0 703.0 C681.5 702.8 683.2 702.3 684.2 702.3 C685.2 702.3 687.0 703.0 687.8 702.8 C688.6 702.6 689.5 701.4 690.0 701.0 C690.5 700.6 690.7 700.3 691.4 699.9 C692.1 699.5 694.0 698.4 695.0 698.4 C696.0 698.3 697.6 699.2 698.6 699.5 C699.6 699.9 701.2 701.3 702.2 701.1 C703.2 700.9 704.8 697.5 705.8 698.0 C706.8 698.4 708.4 703.4 709.4 704.1 C710.4 704.8 712.0 703.9 713.0 703.1 C714.0 702.2 715.6 698.8 716.6 698.3 C717.6 697.8 719.2 698.8 720.2 699.4 C721.2 699.9 722.8 702.1 723.8 702.3 C724.8 702.6 726.4 701.0 727.4 700.9 C728.4 700.7 730.0 701.2 731.0 701.2 C732.0 701.2 733.6 701.2 734.6 701.0 C735.6 700.9 737.2 700.7 738.2 700.3 C739.2 699.8 740.8 697.6 741.8 697.7 C742.8 697.9 744.4 701.0 745.4 701.4 C746.4 701.9 748.0 700.5 749.0 701.0 C750.0 701.4 751.6 704.3 752.6 704.6 C753.6 704.9 755.2 703.5 756.2 703.2 C757.2 702.8 758.8 702.9 759.8 702.3 C760.8 701.8 762.4 699.5 763.4 699.3 C764.4 699.1 766.0 700.4 767.0 701.1 C768.0 701.8 769.6 704.6 770.6 704.4 C771.6 704.3 773.2 700.6 774.2 700.1 C775.2 699.5 776.8 700.0 777.8 700.3 C778.8 700.7 780.4 703.0 781.4 702.6 C782.4 702.2 784.0 697.1 785.0 697.3 C786.0 697.5 787.6 703.5 788.6 704.0 C789.6 704.5 791.2 701.2 792.2 700.9 C793.2 700.7 794.8 702.3 795.8 702.3 C796.8 702.2 798.4 700.4 799.4 700.3 C800.4 700.2 802.0 702.0 803.0 701.8 C804.0 701.5 805.6 698.2 806.6 698.3 C807.6 698.3 809.2 701.8 810.2 702.2 C811.2 702.5 812.8 701.3 813.8 700.8 C814.8 700.2 816.4 698.6 817.4 698.5 C818.4 698.5 820.0 700.1 821.0 700.5 C822.0 700.9 823.6 701.4 824.6 701.6 C825.6 701.9 827.2 702.1 828.2 702.5 C829.2 702.9 830.8 704.6 831.8 704.6 C832.8 704.6 834.4 702.8 835.4 702.7 C836.4 702.5 838.0 703.3 839.0 703.3 C840.0 703.3 841.6 703.1 842.6 702.6 C843.6 702.0 845.2 699.6 846.2 699.4 C847.2 699.2 848.8 701.0 849.8 701.2 C850.8 701.3 852.4 700.3 853.4 700.5 C854.4 700.6 856.0 702.1 857.0 702.1 C858.0 702.1 859.6 701.0 860.6 700.5 C861.6 700.1 863.2 699.3 864.2 699.1 C865.2 698.9 866.8 699.4 867.8 699.3 C868.8 699.2 870.4 697.7 871.4 698.5 C872.4 699.3 874.0 704.2 875.0 704.7 C876.0 705.2 877.6 702.3 878.6 701.9 C879.6 701.5 881.2 701.9 882.2 701.9 C883.2 701.9 884.8 702.6 885.8 702.1 C886.8 701.5 888.4 697.6 889.4 697.8 C890.4 698.0 892.0 702.9 893.0 703.7 C894.0 704.4 895.6 703.4 896.6 703.0 C897.6 702.7 899.2 701.2 900.2 701.0 C901.2 700.8 902.8 701.8 903.8 701.7 C904.8 701.5 906.4 700.4 907.4 700.2 C908.4 700.0 910.0 699.6 911.0 700.1 C912.0 700.6 913.6 703.8 914.6 703.7 C915.6 703.6 917.2 699.5 918.2 699.4 C919.2 699.3 920.8 702.9 921.8 703.1 C922.8 703.2 924.4 700.4 925.4 700.3 C926.4 700.3 928.0 702.4 929.0 702.5 C930.0 702.6 931.6 701.9 932.6 701.2 C933.6 700.5 935.2 697.9 936.2 697.6 C937.2 697.3 938.8 698.3 939.8 698.8 C940.8 699.3 942.4 700.9 943.4 701.0 C944.4 701.2 946.0 700.2 947.0 700.1 C948.0 700.0 949.6 700.5 950.6 700.4 C951.6 700.4 953.2 700.1 954.2 699.8 C955.2 699.5 957.0 698.1 957.8 698.3 C958.6 698.4 959.5 700.6 960.0 701.0 C960.5 701.4 960.7 701.6 961.4 701.4 C962.1 701.2 964.0 699.1 965.0 699.4 C966.0 699.7 967.6 703.0 968.6 703.6 C969.6 704.2 971.2 704.2 972.2 703.6 C973.2 702.9 974.8 699.5 975.8 699.1 C976.8 698.6 978.4 700.4 979.4 700.6 C980.4 700.9 982.0 700.8 983.0 700.9 C984.0 701.0 985.6 701.6 986.6 701.3 C987.6 701.0 989.2 699.0 990.2 698.8 C991.2 698.7 992.8 699.8 993.8 700.3 C994.8 700.9 996.4 702.3 997.4 702.5 C998.4 702.7 1000.0 702.0 1001.0 702.0 C1002.0 701.9 1003.6 701.9 1004.6 702.0 C1005.6 702.0 1007.2 701.9 1008.2 702.3 C1009.2 702.7 1010.8 704.9 1011.8 704.9 C1012.8 704.8 1014.4 702.4 1015.4 702.0 C1016.4 701.7 1018.0 702.5 1019.0 702.4 C1020.0 702.4 1021.6 701.4 1022.6 701.6 C1023.6 701.8 1025.2 703.3 1026.2 703.6 C1027.2 703.9 1028.8 704.2 1029.8 703.6 C1030.8 702.9 1032.4 699.1 1033.4 698.9 C1034.4 698.6 1036.0 701.3 1037.0 701.9 C1038.0 702.5 1039.6 703.4 1040.6 703.3 C1041.6 703.2 1043.2 701.1 1044.2 701.0 C1045.2 700.9 1046.8 702.8 1047.8 702.9 C1048.8 703.1 1050.4 702.5 1051.4 702.2 C1052.4 702.0 1054.0 701.4 1055.0 701.1 C1056.0 700.9 1057.6 700.4 1058.6 700.6 C1059.6 700.8 1061.2 702.0 1062.2 702.6 C1063.2 703.3 1064.8 705.3 1065.8 705.2 C1066.8 705.0 1068.4 702.0 1069.4 701.7 C1070.4 701.3 1072.0 701.9 1073.0 702.5 C1074.0 703.0 1075.6 705.7 1076.6 705.6 C1077.6 705.4 1079.2 701.5 1080.2 701.3 C1081.2 701.1 1082.8 703.4 1083.8 704.1 C1084.8 704.8 1086.4 706.0 1087.4 706.1 C1088.4 706.2 1090.0 705.0 1091.0 705.0 C1092.0 704.9 1093.6 705.6 1094.6 705.6 C1095.6 705.6 1097.4 705.4 1098.2 705.1 C1099.0 704.8 1099.5 703.6 1100.0 703.5 C1100.5 703.4 1101.0 704.2 1101.8 704.2 C1102.6 704.2 1104.4 703.2 1105.4 703.6 C1106.4 704.0 1108.0 706.9 1109.0 707.0 C1110.0 707.0 1111.6 704.4 1112.6 703.7 C1113.6 703.0 1115.2 702.4 1116.2 702.2 C1117.2 701.9 1118.8 701.8 1119.8 701.9 C1120.8 701.9 1122.4 701.9 1123.4 702.3 C1124.4 702.8 1126.0 704.6 1127.0 705.0 C1128.0 705.3 1129.6 704.9 1130.6 704.8 C1131.6 704.7 1133.2 704.5 1134.2 704.3 C1135.2 704.1 1136.8 703.8 1137.8 703.7 C1138.8 703.7 1140.4 704.0 1141.4 704.1 C1142.4 704.1 1144.0 703.8 1145.0 704.0 C1146.0 704.2 1147.6 705.3 1148.6 705.4 C1149.6 705.5 1151.2 705.0 1152.2 704.7 C1153.2 704.5 1154.8 703.8 1155.8 703.7 C1156.8 703.5 1158.4 703.7 1159.4 703.6 C1160.4 703.5 1162.0 702.7 1163.0 703.0 C1164.0 703.4 1165.6 706.0 1166.6 706.3 C1167.6 706.5 1169.2 705.4 1170.2 704.8 C1171.2 704.3 1172.8 702.6 1173.8 702.4 C1174.8 702.2 1176.4 702.8 1177.4 703.3 C1178.4 703.7 1180.0 705.3 1181.0 705.4 C1182.0 705.5 1183.6 703.9 1184.6 704.2 C1185.6 704.5 1187.2 707.7 1188.2 707.6 C1189.2 707.4 1190.8 703.5 1191.8 702.9 C1192.8 702.4 1194.4 703.3 1195.4 703.5 C1196.4 703.8 1198.0 704.8 1199.0 704.8 C1200.0 704.8 1201.6 703.5 1202.6 703.2 C1203.6 702.9 1205.2 702.2 1206.2 702.7 C1207.2 703.2 1208.8 706.6 1209.8 706.7 C1210.8 706.8 1212.4 703.0 1213.4 703.2 C1214.4 703.4 1216.0 707.9 1217.0 707.9 C1218.0 708.0 1219.6 704.2 1220.6 703.6 C1221.6 703.0 1223.2 703.6 1224.2 703.7 C1225.2 703.9 1226.8 703.9 1227.8 704.6 C1228.8 705.2 1230.4 707.6 1231.4 708.3 C1232.4 708.9 1234.0 709.6 1235.0 709.0 C1236.0 708.4 1237.9 704.5 1238.6 704.0 C1239.3 703.5 1239.5 705.5 1240.0 705.7 C1240.5 705.9 1241.4 705.3 1242.2 705.6 C1243.0 705.9 1244.8 708.2 1245.8 707.8 C1246.8 707.3 1248.4 702.5 1249.4 702.4 C1250.4 702.4 1252.0 706.8 1253.0 707.3 C1254.0 707.8 1255.6 706.1 1256.6 705.9 C1257.6 705.7 1259.2 706.3 1260.2 706.0 C1261.2 705.8 1262.8 704.0 1263.8 703.8 C1264.8 703.7 1266.4 704.9 1267.4 705.1 C1268.4 705.3 1270.0 705.4 1271.0 705.2 C1272.0 705.0 1273.6 703.6 1274.6 703.5 C1275.6 703.5 1277.2 704.9 1278.2 704.7 C1279.2 704.5 1280.8 702.6 1281.8 702.4 C1282.8 702.2 1284.4 702.6 1285.4 703.2 C1286.4 703.8 1288.0 706.7 1289.0 706.5 C1290.0 706.4 1291.6 701.9 1292.6 702.0 C1293.6 702.1 1295.2 706.5 1296.2 707.0 C1297.2 707.5 1299.3 705.7 1299.8 705.4 C1300.0 705.1 1299.8 704.9 1300.0 705.0 C1300.5 705.1 1302.4 706.0 1303.4 705.9 C1304.4 705.8 1306.0 704.9 1307.0 704.3 C1308.0 703.6 1309.6 701.4 1310.6 701.3 C1311.6 701.3 1313.2 703.5 1314.2 703.8 C1315.2 704.1 1316.8 703.2 1317.8 703.3 C1318.8 703.3 1320.4 704.2 1321.4 704.2 C1322.4 704.3 1324.0 703.7 1325.0 703.8 C1326.0 703.8 1327.6 704.7 1328.6 704.6 C1329.6 704.5 1331.2 703.3 1332.2 703.2 C1333.2 703.2 1334.8 704.1 1335.8 704.2 C1336.8 704.2 1338.4 703.8 1339.4 703.7 C1340.4 703.5 1342.0 703.3 1343.0 703.4 C1344.0 703.4 1345.6 704.1 1346.6 703.9 C1347.6 703.8 1349.5 702.7 1350.0 702.5 C1350.2 702.3 1350.0 702.2 1350.2 702.2 C1350.7 702.2 1352.8 702.3 1353.8 702.4 C1354.8 702.5 1356.4 703.0 1357.4 702.9 C1358.4 702.9 1360.0 702.1 1361.0 702.1 C1362.0 702.1 1363.6 703.0 1364.6 703.0 C1365.6 703.1 1367.2 702.4 1368.2 702.4 C1369.2 702.5 1370.8 703.0 1371.8 703.1 C1372.8 703.2 1374.4 703.1 1375.4 703.0 C1376.4 702.9 1378.0 702.8 1379.0 702.6 C1380.0 702.3 1381.6 701.6 1382.6 701.4 C1383.6 701.3 1385.2 701.6 1386.2 701.7 C1387.2 701.9 1388.8 702.5 1389.8 702.4 C1390.8 702.2 1392.4 700.9 1393.4 700.8 C1394.4 700.8 1396.0 701.9 1397.0 702.0 C1398.0 702.1 1399.6 701.7 1400.6 701.5 C1401.6 701.4 1403.2 700.8 1404.2 701.0 C1405.2 701.1 1406.8 702.4 1407.8 702.6 C1408.8 702.8 1410.4 702.7 1411.4 702.5 C1412.4 702.2 1414.0 701.0 1415.0 700.9 C1416.0 700.8 1417.6 701.7 1418.6 701.9 C1419.6 702.1 1421.2 702.6 1422.2 702.5 C1423.2 702.5 1424.8 701.8 1425.8 701.6 C1426.8 701.4 1428.4 701.5 1429.4 701.4 C1430.4 701.4 1432.0 701.3 1433.0 701.3 C1434.0 701.3 1435.6 701.6 1436.6 701.6 C1437.6 701.6 1439.2 701.3 1440.2 701.4 C1441.2 701.5 1442.8 702.0 1443.8 702.1 C1444.8 702.2 1446.4 702.2 1447.4 702.2 C1448.4 702.2 1450.0 702.2 1451.0 702.0 C1452.0 701.8 1453.6 700.6 1454.6 700.6 C1455.6 700.5 1457.2 701.5 1458.2 701.8 C1459.2 702.0 1460.8 702.4 1461.8 702.2 C1462.8 702.0 1464.4 700.6 1465.4 700.5 L1469.0 701.3 L1471.0 670.6 L1472.3 550.0 L1472.6 530.0 L1473.5 470.0 L1475.6 426.7 L1476.2 426.5 C1476.8 426.3 1479.0 425.5 1479.8 425.3 C1480.6 425.0 1481.5 425.0 1482.0 424.5 C1482.5 424.0 1482.7 423.0 1483.4 421.6 C1484.1 420.1 1486.0 416.3 1487.0 414.0 C1488.0 411.7 1490.0 406.9 1490.6 405.6 C1491.0 404.3 1490.6 404.8 1491.0 404.7 C1491.5 404.6 1493.6 404.9 1494.2 404.9 L1495.4 405.0 L1497.8 424.5 L1499.7 440.0 L1501.4 466.9 L1504.0 508.0 L1505.0 526.6 L1506.8 560.0 L1508.5 626.8 L1508.6 628.6 L1510.7 666.0 L1512.2 672.1 C1512.7 674.0 1513.5 678.2 1514.0 679.4 C1514.5 680.6 1515.0 679.9 1515.8 680.3 C1516.6 680.7 1518.5 681.6 1519.4 682.0 C1520.3 682.5 1521.6 683.1 1522.0 683.3" stroke="#0068c9"/><path d="M677.0 636.1 C677.5 636.1 679.6 635.9 680.6 635.7 C681.6 635.5 683.2 634.6 684.2 634.5 C685.2 634.4 686.8 635.0 687.8 635.1 C688.8 635.1 690.4 634.9 691.4 634.9 C692.4 634.9 694.0 634.8 695.0 634.8 C696.0 634.8 697.9 634.9 698.6 634.8 C699.3 634.7 699.5 634.0 700.0 634.0 C700.5 634.0 701.4 634.8 702.2 634.7 C703.0 634.7 704.8 633.8 705.8 633.7 C706.8 633.7 708.4 634.7 709.4 634.6 C710.4 634.6 712.0 633.5 713.0 633.5 C714.0 633.5 715.6 634.4 716.6 634.6 C717.6 634.8 719.2 634.9 720.2 635.0 C721.2 635.0 722.8 634.8 723.8 634.8 C724.8 634.7 726.4 634.6 727.4 634.5 C728.4 634.5 730.0 634.4 731.0 634.4 C732.0 634.4 733.6 634.2 734.6 634.3 C735.6 634.4 737.2 634.9 738.2 634.9 C739.2 634.9 740.8 634.3 741.8 634.2 C742.8 634.0 744.4 634.1 745.4 634.1 C746.4 634.0 748.0 633.7 749.0 633.7 C750.0 633.8 751.6 634.1 752.6 634.2 C753.6 634.3 755.2 634.3 756.2 634.3 C757.2 634.3 758.8 634.3 759.8 634.4 C760.8 634.4 762.4 634.6 763.4 634.6 C764.4 634.6 766.0 634.3 767.0 634.3 C768.0 634.2 769.6 634.2 770.6 634.2 C771.6 634.2 773.2 634.3 774.2 634.3 C775.2 634.4 776.8 634.6 777.8 634.6 C778.8 634.7 780.4 634.6 781.4 634.5 C782.4 634.4 784.0 634.1 785.0 634.2 C786.0 634.2 787.6 634.7 788.6 634.8 C789.6 635.0 791.2 635.2 792.2 635.0 C793.2 634.9 794.8 633.9 795.8 633.9 C796.8 633.8 798.8 634.5 799.4 634.6 C800.0 634.7 799.5 634.5 800.0 634.5 C800.5 634.5 802.1 634.5 803.0 634.4 C803.9 634.4 805.6 634.3 806.6 634.2 C807.6 634.1 809.2 633.6 810.2 633.7 C811.2 633.8 812.8 635.0 813.8 635.1 C814.8 635.2 816.4 634.6 817.4 634.5 C818.4 634.4 820.0 634.4 821.0 634.5 C822.0 634.5 823.6 635.0 824.6 635.1 C825.6 635.2 827.2 635.3 828.2 635.3 C829.2 635.3 830.8 635.3 831.8 635.3 C832.8 635.3 834.4 635.0 835.4 635.1 C836.4 635.2 838.0 635.8 839.0 635.9 C840.0 635.9 841.6 635.4 842.6 635.3 C843.6 635.2 845.2 635.0 846.2 635.1 C847.2 635.2 848.8 635.7 849.8 635.8 C850.8 636.0 852.4 636.0 853.4 635.8 C854.4 635.7 856.0 634.7 857.0 634.6 C858.0 634.5 859.6 635.2 860.6 635.2 C861.6 635.3 863.2 635.2 864.2 635.1 C865.2 635.1 866.8 635.0 867.8 635.0 C868.8 635.0 870.4 635.4 871.4 635.4 C872.4 635.4 874.0 634.9 875.0 634.8 C876.0 634.7 877.6 634.7 878.6 634.8 C879.6 635.0 881.2 635.6 882.2 635.6 C883.2 635.6 884.8 634.9 885.8 634.8 C886.8 634.8 888.4 635.1 889.4 635.2 C890.4 635.4 892.0 635.6 893.0 635.8 C894.0 636.0 895.6 636.7 896.6 636.6 C897.6 636.5 899.2 635.2 900.2 635.1 C901.2 634.9 902.8 635.6 903.8 635.7 C904.8 635.7 906.4 635.4 907.4 635.5 C908.4 635.5 910.0 636.0 911.0 636.0 C912.0 636.1 913.6 636.2 914.6 636.2 C915.6 636.1 917.2 635.5 918.2 635.4 C919.2 635.2 920.8 635.1 921.8 635.2 C922.8 635.3 924.4 635.6 925.4 635.9 C926.4 636.1 928.0 636.8 929.0 636.8 C930.0 636.7 931.6 635.8 932.6 635.6 C933.6 635.5 935.2 635.8 936.2 635.8 C937.2 635.8 938.8 635.6 939.8 635.7 C940.8 635.7 942.4 635.8 943.4 636.0 C944.4 636.2 946.0 637.0 947.0 637.1 C948.0 637.1 949.6 636.6 950.6 636.5 C951.6 636.3 953.2 636.0 954.2 636.0 C955.2 636.1 957.0 636.7 957.8 636.7 C958.6 636.8 959.5 636.6 960.0 636.5 C960.5 636.4 960.7 636.3 961.4 636.3 C962.1 636.4 964.0 636.6 965.0 636.7 C966.0 636.8 967.6 636.7 968.6 636.8 C969.6 636.9 971.2 637.4 972.2 637.5 C973.2 637.6 974.8 637.4 975.8 637.3 C976.8 637.2 978.4 636.9 979.4 636.8 C980.4 636.8 982.0 636.5 983.0 636.7 C984.0 636.8 986.0 637.8 986.6 637.9 C987.2 638.0 987.2 638.9 987.5 637.5 L989.0 628.0 L990.2 605.8 L991.0 590.0 L993.8 550.2 L997.4 520.3 L998.0 515.0 L1001.0 491.8 L1001.6 487.0 L1004.6 460.6 L1004.8 459.0 C1005.3 459.3 1007.5 462.6 1008.0 463.0 C1008.2 463.4 1008.0 462.6 1008.2 461.8 C1008.7 460.9 1011.3 457.5 1011.8 456.8 C1012.0 456.2 1011.8 455.4 1012.0 457.0 C1012.5 458.6 1014.9 466.4 1015.4 468.0 L1015.6 468.0 L1017.3 590.0 L1019.0 600.0 L1022.0 618.7 L1022.6 620.5 C1023.2 621.7 1025.2 625.5 1026.2 627.4 C1027.2 629.4 1028.8 632.3 1029.8 634.2 C1030.8 636.1 1032.5 639.5 1033.0 640.6 C1033.4 641.7 1033.0 640.8 1033.4 642.2 C1034.0 643.7 1036.2 648.8 1037.0 650.8 C1037.8 652.7 1038.5 655.0 1039.0 656.0 C1039.5 657.0 1039.9 656.6 1040.6 658.1 C1041.3 659.6 1043.3 664.5 1044.2 666.3 C1045.1 668.1 1046.5 670.3 1047.0 671.0 C1047.5 671.7 1047.2 671.4 1047.8 671.5 C1048.4 671.7 1050.4 671.9 1051.4 672.1 C1052.4 672.3 1054.0 672.4 1055.0 672.6 C1056.0 672.8 1057.6 673.3 1058.6 673.6 C1059.6 673.8 1061.2 674.1 1062.2 674.1 C1063.2 674.2 1064.8 673.9 1065.8 673.8 C1066.8 673.8 1068.4 673.7 1069.4 673.8 C1070.4 674.0 1072.0 674.8 1073.0 674.9 C1074.0 675.0 1075.6 674.5 1076.6 674.7 C1077.6 674.8 1079.5 675.9 1080.0 676.0 C1080.2 676.1 1080.0 675.3 1080.2 675.3 C1080.7 675.3 1082.8 675.9 1083.8 675.9 C1084.8 676.0 1086.4 675.9 1087.4 676.0 C1088.4 676.1 1090.0 676.2 1091.0 676.4 C1092.0 676.5 1093.6 676.8 1094.6 677.0 C1095.6 677.1 1097.2 677.4 1098.2 677.5 C1099.2 677.6 1100.8 677.7 1101.8 677.6 C1102.8 677.6 1104.4 677.5 1105.4 677.4 C1106.4 677.4 1108.0 677.4 1109.0 677.3 C1110.0 677.3 1111.8 677.0 1112.6 677.1 C1113.4 677.2 1114.5 678.0 1115.0 678.0 C1115.5 678.0 1115.5 677.4 1116.2 677.4 C1116.9 677.4 1118.8 678.1 1119.8 678.2 C1120.8 678.4 1122.4 678.2 1123.4 678.3 C1124.4 678.3 1126.0 678.8 1127.0 678.8 C1128.0 678.8 1129.6 678.2 1130.6 678.1 C1131.6 678.1 1133.2 678.2 1134.2 678.4 C1135.2 678.6 1137.0 679.4 1137.8 679.5 C1138.6 679.6 1139.5 679.1 1140.0 679.0 C1140.5 678.9 1140.7 679.0 1141.4 678.9 C1142.1 678.7 1144.0 678.0 1145.0 677.9 C1146.0 677.8 1147.6 678.4 1148.6 678.2 C1149.6 678.0 1151.6 676.8 1152.2 676.6 C1152.6 676.5 1152.2 677.4 1152.6 677.0 C1153.1 676.6 1154.8 674.4 1155.8 673.6 C1156.8 672.9 1158.4 672.3 1159.4 671.7 C1160.4 671.1 1162.1 670.2 1163.0 669.6 C1163.9 669.0 1165.2 668.1 1165.7 667.7 C1166.2 667.3 1166.0 667.6 1166.6 666.9 C1167.2 666.2 1169.2 663.8 1170.2 662.8 C1171.2 661.9 1172.8 661.3 1173.8 660.3 C1174.8 659.2 1176.7 656.3 1177.4 655.5 C1178.1 654.7 1178.4 654.8 1178.9 654.6 C1179.4 654.4 1180.2 654.7 1181.0 654.3 C1181.8 653.8 1183.6 652.1 1184.6 651.4 C1185.6 650.7 1187.2 650.0 1188.2 649.6 C1189.2 649.2 1191.0 648.9 1191.8 648.5 C1192.6 648.1 1193.5 647.3 1194.0 647.0 C1194.5 646.7 1194.7 647.0 1195.4 646.6 C1196.1 646.2 1198.0 644.8 1199.0 644.1 C1200.0 643.5 1202.0 642.2 1202.6 641.8 C1203.2 641.4 1202.8 641.1 1203.3 641.4 C1203.8 641.7 1205.3 643.0 1206.2 643.6 C1207.1 644.3 1209.3 645.7 1209.8 646.1 C1210.0 646.4 1209.8 646.0 1210.0 646.0 C1210.5 646.0 1212.5 645.8 1213.4 645.8 C1214.3 645.8 1216.0 645.9 1216.5 646.0 C1217.0 646.1 1216.5 646.1 1217.0 646.6 C1217.6 647.1 1219.6 648.8 1220.6 649.6 C1221.6 650.3 1223.2 651.0 1224.2 651.7 C1225.2 652.4 1227.2 654.2 1227.7 654.6 C1227.8 655.0 1227.7 653.5 1227.8 654.2 C1228.3 654.8 1230.6 658.0 1231.4 659.1 C1232.2 660.2 1232.9 661.5 1233.4 662.0 C1233.9 662.5 1234.3 662.3 1235.0 662.6 C1235.7 662.8 1237.6 663.5 1238.6 664.0 C1239.6 664.5 1241.6 665.9 1242.2 666.1 C1242.8 666.4 1242.3 665.9 1242.8 665.9 C1243.3 665.9 1244.9 665.8 1245.8 666.2 C1246.7 666.5 1248.4 667.9 1249.4 668.2 C1250.4 668.5 1252.0 668.2 1253.0 668.6 C1254.0 668.9 1255.6 670.5 1256.6 671.0 C1257.6 671.5 1259.5 671.8 1260.2 672.0 C1260.9 672.2 1261.1 672.4 1261.6 672.4 C1262.1 672.4 1263.0 672.3 1263.8 672.3 C1264.6 672.3 1266.4 672.4 1267.4 672.6 C1268.4 672.7 1270.0 673.1 1271.0 673.3 C1272.0 673.4 1273.6 673.6 1274.6 673.7 C1275.6 673.8 1277.4 674.1 1278.2 674.3 C1279.0 674.5 1279.9 674.9 1280.4 675.0 C1280.9 675.1 1281.1 675.3 1281.8 675.3 C1282.5 675.3 1284.4 675.1 1285.4 675.1 C1286.4 675.1 1288.0 675.7 1289.0 675.6 C1290.0 675.6 1291.7 674.8 1292.6 674.8 C1293.5 674.9 1294.9 675.8 1295.4 676.0 C1295.9 676.2 1295.6 675.8 1296.2 676.0 C1296.8 676.3 1298.8 677.3 1299.8 677.5 C1300.8 677.7 1302.7 677.6 1303.4 677.7 C1304.1 677.7 1304.3 678.3 1304.8 678.0 C1305.3 677.7 1306.2 676.5 1307.0 675.5 C1307.8 674.5 1309.7 672.1 1310.6 671.0 C1311.5 669.9 1312.8 668.2 1313.3 667.7 C1313.8 667.2 1313.6 667.1 1314.2 667.4 C1314.8 667.6 1316.8 668.7 1317.8 669.1 C1318.8 669.6 1320.8 670.4 1321.4 670.6 C1321.7 670.8 1321.4 670.5 1321.7 670.6 C1322.2 670.7 1324.0 671.0 1325.0 671.1 C1326.0 671.2 1328.1 671.4 1328.6 671.3 C1328.7 671.2 1328.6 670.9 1328.7 670.6 C1329.2 670.3 1331.2 669.2 1332.2 669.0 C1333.2 668.8 1334.8 669.5 1335.8 669.2 C1336.8 668.9 1338.4 667.2 1339.4 666.7 C1340.4 666.1 1342.0 665.6 1343.0 665.3 C1344.0 665.0 1345.6 665.0 1346.6 664.7 C1347.6 664.4 1349.6 663.3 1350.2 663.0 C1350.6 662.8 1350.2 663.1 1350.6 663.0 C1351.1 662.9 1352.8 662.3 1353.8 662.0 C1354.8 661.7 1356.4 661.2 1357.4 660.9 C1358.4 660.5 1360.0 660.0 1361.0 659.7 C1362.0 659.4 1363.6 659.3 1364.6 659.0 C1365.6 658.6 1367.2 657.7 1368.2 657.2 C1369.2 656.8 1371.2 655.7 1371.8 655.6 C1372.4 655.5 1372.0 656.2 1372.5 656.4 C1373.0 656.6 1374.5 656.9 1375.4 657.3 C1376.3 657.6 1378.0 658.6 1379.0 658.9 C1380.0 659.2 1381.6 659.1 1382.6 659.4 C1383.6 659.6 1385.2 660.4 1386.2 660.6 C1387.2 660.9 1388.8 660.9 1389.8 661.1 C1390.8 661.2 1392.7 661.7 1393.4 662.0 C1394.1 662.2 1394.0 662.9 1394.5 663.0 C1395.0 663.1 1396.1 662.3 1397.0 662.4 C1397.9 662.4 1399.6 663.0 1400.6 663.2 C1401.6 663.4 1403.2 663.8 1404.2 663.8 C1405.2 663.7 1406.8 662.9 1407.8 662.9 C1408.8 662.8 1410.4 663.3 1411.4 663.4 C1412.4 663.5 1414.0 663.6 1415.0 663.4 C1416.0 663.2 1417.6 662.0 1418.6 662.0 C1419.6 662.0 1421.2 663.1 1422.2 663.2 C1423.2 663.3 1424.8 663.1 1425.8 662.9 C1426.8 662.8 1428.4 662.4 1429.4 662.4 C1430.4 662.3 1432.0 662.5 1433.0 662.5 C1434.0 662.5 1435.9 662.4 1436.6 662.5 C1437.3 662.5 1437.5 662.9 1438.0 663.0 C1438.5 663.1 1439.4 663.1 1440.2 663.3 C1441.0 663.5 1442.8 664.3 1443.8 664.6 C1444.8 664.8 1446.4 665.0 1447.4 665.1 C1448.4 665.2 1450.0 665.0 1451.0 665.1 C1452.0 665.2 1453.6 665.3 1454.6 665.6 C1455.6 665.8 1457.2 666.6 1458.2 666.9 C1459.2 667.3 1460.8 667.7 1461.8 667.8 C1462.8 667.9 1464.4 667.5 1465.4 667.6 C1466.4 667.8 1468.2 668.5 1469.0 668.7 C1469.8 669.0 1470.5 669.3 1471.0 669.5 C1471.5 669.7 1471.9 670.0 1472.6 670.2 C1473.3 670.3 1475.2 670.1 1476.2 670.5 C1477.2 670.9 1478.8 672.3 1479.8 672.8 C1480.8 673.2 1482.4 673.7 1483.4 673.9 C1484.4 674.2 1486.0 674.1 1487.0 674.4 C1488.0 674.7 1489.8 675.4 1490.6 675.8 C1491.4 676.2 1492.5 676.8 1493.0 677.0 C1493.5 677.2 1493.5 677.4 1494.2 677.6 C1494.9 677.7 1496.8 677.7 1497.8 678.0 C1498.8 678.3 1500.4 679.6 1501.4 679.9 C1502.4 680.2 1504.0 680.1 1505.0 680.3 C1506.0 680.4 1507.6 680.6 1508.6 680.9 C1509.6 681.1 1511.2 681.8 1512.2 682.0 C1513.2 682.2 1514.8 682.3 1515.8 682.5 C1516.8 682.7 1518.5 683.0 1519.4 683.3 C1520.3 683.7 1521.6 684.5 1522.0 684.7" stroke="#83c9ff"/><path d="M677.0 493.7 C677.5 492.8 679.8 488.7 680.6 487.3 C681.5 485.9 682.5 484.6 683.0 484.0 C683.5 483.4 683.5 483.8 684.2 483.3 C684.9 482.7 687.0 480.9 687.8 480.4 C688.6 479.9 689.5 479.7 690.0 479.5 C690.5 479.3 690.7 479.0 691.4 479.0 C692.1 479.0 694.0 479.3 695.0 479.2 C696.0 479.2 697.9 478.4 698.6 478.5 C699.3 478.6 699.5 479.7 700.0 480.0 C700.5 480.3 701.4 480.4 702.2 480.6 C703.0 480.8 704.8 481.4 705.8 481.4 C706.8 481.4 708.8 480.6 709.4 480.7 C710.0 480.7 709.5 481.3 710.0 481.7 C710.5 482.1 712.1 482.9 713.0 483.2 C713.9 483.6 715.6 483.9 716.6 484.2 C717.6 484.5 719.2 485.1 720.2 485.4 C721.2 485.7 722.8 485.9 723.8 486.2 C724.8 486.5 726.4 487.3 727.4 487.5 C728.4 487.6 730.0 487.0 731.0 487.3 C732.0 487.6 733.6 489.2 734.6 489.6 C735.6 490.1 737.4 490.3 738.2 490.5 C739.0 490.7 739.5 490.9 740.0 491.0 C740.5 491.1 741.0 491.3 741.8 491.5 C742.6 491.7 744.4 492.1 745.4 492.5 C746.4 493.0 748.0 494.5 749.0 494.9 C750.0 495.2 751.6 494.9 752.6 495.2 C753.6 495.4 755.3 496.3 756.2 496.9 C757.1 497.4 758.2 498.6 758.7 499.0 C759.2 499.4 759.1 499.8 759.8 499.8 C760.5 499.8 762.4 499.3 763.4 499.3 C764.4 499.3 766.0 499.5 767.0 499.8 C768.0 500.1 769.6 501.4 770.6 501.5 C771.6 501.7 773.2 500.5 774.2 500.7 C775.2 500.9 776.8 502.7 777.8 503.0 C778.8 503.4 780.4 502.8 781.4 503.0 C782.4 503.2 784.0 503.9 785.0 504.2 C786.0 504.5 787.6 505.1 788.6 505.3 C789.6 505.5 791.2 505.6 792.2 505.6 C793.2 505.6 794.8 505.3 795.8 505.5 C796.8 505.7 798.4 506.5 799.4 507.0 C800.4 507.6 802.0 508.8 803.0 509.3 C804.0 509.7 805.6 510.1 806.6 510.4 C807.6 510.6 809.2 510.9 810.2 511.0 C811.2 511.0 813.0 511.0 813.5 511.0 C813.8 511.0 813.5 511.0 813.8 511.2 C814.4 511.4 816.4 512.5 817.4 512.5 C818.4 512.6 820.0 511.7 821.0 511.8 C822.0 511.9 823.6 512.7 824.6 513.3 C825.6 513.9 827.2 515.9 828.2 516.1 C829.2 516.3 830.8 514.6 831.8 514.6 C832.8 514.6 834.4 515.6 835.4 516.1 C836.4 516.6 838.0 517.8 839.0 518.0 C840.0 518.3 841.6 517.6 842.6 517.9 C843.6 518.1 845.2 519.4 846.2 519.8 C847.2 520.2 848.8 520.2 849.8 520.5 C850.8 520.9 852.4 522.0 853.4 522.2 C854.4 522.4 856.0 522.0 857.0 522.2 C858.0 522.3 859.6 523.3 860.6 523.4 C861.6 523.5 863.2 522.9 864.2 522.9 C865.2 522.9 866.8 522.9 867.8 523.2 C868.8 523.4 870.4 524.4 871.4 524.7 C872.4 525.0 874.0 525.3 875.0 525.3 C876.0 525.3 877.6 524.8 878.6 524.8 C879.6 524.9 881.2 525.4 882.2 525.6 C883.2 525.8 884.8 526.3 885.8 526.5 C886.8 526.6 888.4 526.7 889.4 526.9 C890.4 527.1 892.0 527.5 893.0 527.6 C894.0 527.7 895.6 527.5 896.6 527.6 C897.6 527.7 899.6 528.2 900.2 528.4 C900.8 528.5 900.5 528.5 901.0 528.6 C901.5 528.7 902.9 528.5 903.8 528.7 C904.7 528.9 906.4 529.8 907.4 530.1 C908.4 530.4 910.0 530.4 911.0 530.6 C912.0 530.7 913.6 530.9 914.6 531.1 C915.6 531.2 917.2 531.2 918.2 531.3 C919.2 531.5 920.8 531.5 921.8 531.9 C922.8 532.2 924.4 533.3 925.4 533.6 C926.4 534.0 928.0 534.2 929.0 534.4 C930.0 534.6 931.9 534.8 932.6 534.9 C933.3 534.9 933.5 534.9 934.0 535.0 C934.5 535.1 935.4 535.4 936.2 535.4 C937.0 535.4 938.8 535.1 939.8 535.2 C940.8 535.2 942.4 535.8 943.4 535.9 C944.4 536.1 946.0 536.3 947.0 536.2 C948.0 536.1 949.6 535.6 950.6 535.5 C951.6 535.3 953.2 535.1 954.2 535.3 C955.2 535.4 957.0 536.2 957.8 536.3 C958.6 536.4 959.5 536.1 960.0 536.0 C960.5 535.9 960.7 535.6 961.4 535.8 C962.1 536.0 964.0 536.9 965.0 537.2 C966.0 537.4 967.6 537.4 968.6 537.4 C969.6 537.4 971.2 537.2 972.2 537.2 C973.2 537.2 974.8 537.1 975.8 537.4 C976.8 537.7 978.4 539.0 979.4 539.3 C980.4 539.5 982.0 539.0 983.0 539.0 C984.0 539.1 985.6 539.3 986.6 539.6 C987.6 539.8 989.2 540.5 990.2 540.8 C991.2 541.1 992.8 541.4 993.8 541.5 C994.8 541.7 996.4 541.8 997.4 542.1 C998.4 542.4 1000.0 543.4 1001.0 543.5 C1002.0 543.6 1003.6 542.9 1004.6 542.8 C1005.6 542.8 1007.2 542.9 1008.2 543.1 C1009.2 543.3 1010.8 544.0 1011.8 544.2 C1012.8 544.4 1014.7 544.4 1015.4 544.5 C1016.1 544.6 1016.3 544.9 1016.8 545.0 C1017.3 545.1 1018.2 545.4 1019.0 545.4 C1019.8 545.3 1021.6 544.5 1022.6 544.7 C1023.6 545.0 1025.2 546.7 1026.2 547.0 C1027.2 547.3 1028.8 546.8 1029.8 546.8 C1030.8 546.8 1032.4 547.2 1033.4 547.2 C1034.4 547.2 1036.0 546.8 1037.0 546.9 C1038.0 546.9 1039.6 547.4 1040.6 547.7 C1041.6 547.9 1043.2 548.4 1044.2 548.6 C1045.2 548.8 1046.8 549.1 1047.8 549.3 C1048.8 549.5 1050.4 549.8 1051.4 549.9 C1052.4 549.9 1054.1 549.5 1055.0 549.5 C1055.9 549.5 1057.5 550.1 1058.0 550.0 C1058.5 549.9 1058.0 548.8 1058.6 548.9 C1059.2 549.0 1061.2 550.5 1062.2 550.7 C1063.2 551.0 1064.8 550.6 1065.8 550.8 C1066.8 550.9 1068.4 551.7 1069.4 551.9 C1070.4 552.2 1072.0 552.6 1073.0 552.7 C1074.0 552.8 1075.6 552.6 1076.6 552.8 C1077.6 553.0 1079.2 554.2 1080.2 554.4 C1081.2 554.5 1082.8 553.9 1083.8 554.2 C1084.8 554.4 1086.4 555.9 1087.4 555.9 C1088.4 555.9 1090.0 554.1 1091.0 554.2 C1092.0 554.2 1093.6 556.3 1094.6 556.4 C1095.6 556.5 1097.2 555.0 1098.2 555.1 C1099.2 555.2 1100.8 557.1 1101.8 557.3 C1102.8 557.5 1104.4 556.7 1105.4 556.7 C1106.4 556.6 1108.0 556.6 1109.0 556.8 C1110.0 556.9 1111.8 557.5 1112.6 557.7 C1113.4 558.0 1114.5 558.3 1115.0 558.5 C1115.5 558.7 1115.5 559.3 1116.2 559.2 C1116.9 559.2 1118.8 558.4 1119.8 558.4 C1120.8 558.4 1122.4 559.1 1123.4 559.2 C1124.4 559.3 1126.0 558.7 1127.0 558.9 C1128.0 559.1 1129.6 560.1 1130.6 560.4 C1131.6 560.7 1133.2 560.9 1134.2 560.9 C1135.2 560.9 1136.8 560.4 1137.8 560.5 C1138.8 560.6 1140.4 561.3 1141.4 561.5 C1142.4 561.8 1144.0 562.2 1145.0 562.0 C1146.0 561.9 1147.6 560.5 1148.6 560.5 C1149.6 560.5 1151.2 561.9 1152.2 562.0 C1153.2 562.1 1154.8 561.1 1155.8 561.1 C1156.8 561.0 1158.4 561.0 1159.4 561.3 C1160.4 561.7 1162.0 563.4 1163.0 563.6 C1164.0 563.9 1165.6 563.6 1166.6 563.4 C1167.6 563.2 1169.2 562.3 1170.2 562.3 C1171.2 562.2 1172.8 562.7 1173.8 562.9 C1174.8 563.1 1176.4 563.8 1177.4 563.9 C1178.4 564.0 1180.0 563.6 1181.0 563.5 C1182.0 563.5 1183.6 563.5 1184.6 563.6 C1185.6 563.7 1187.2 564.1 1188.2 564.3 C1189.2 564.5 1190.8 564.6 1191.8 564.8 C1192.8 565.1 1194.4 565.8 1195.4 565.8 C1196.4 565.9 1198.0 565.1 1199.0 565.1 C1200.0 565.2 1201.6 566.3 1202.6 566.4 C1203.6 566.4 1205.2 565.4 1206.2 565.5 C1207.2 565.5 1208.8 566.3 1209.8 566.5 C1210.8 566.7 1212.4 566.8 1213.4 566.9 C1214.4 567.0 1216.0 566.9 1217.0 567.0 C1218.0 567.2 1219.6 567.8 1220.6 567.9 C1221.6 568.0 1223.2 567.6 1224.2 567.8 C1225.2 567.9 1226.8 568.9 1227.8 569.0 C1228.8 569.0 1230.4 567.8 1231.4 567.9 C1232.4 568.1 1234.0 569.8 1235.0 570.0 C1236.0 570.1 1237.9 568.9 1238.6 568.8 C1239.3 568.6 1239.5 569.1 1240.0 569.0 C1240.5 568.9 1241.4 567.7 1242.2 567.9 C1243.0 568.1 1244.8 569.9 1245.8 570.3 C1246.8 570.7 1248.4 570.8 1249.4 570.8 C1250.4 570.7 1252.0 569.7 1253.0 569.8 C1254.0 569.9 1255.6 571.1 1256.6 571.4 C1257.6 571.6 1259.2 571.7 1260.2 571.6 C1261.2 571.6 1262.8 571.1 1263.8 571.0 C1264.8 571.0 1266.4 571.1 1267.4 571.2 C1268.4 571.3 1270.0 571.8 1271.0 571.8 C1272.0 571.8 1273.6 570.9 1274.6 571.0 C1275.6 571.0 1277.2 571.9 1278.2 572.1 C1279.2 572.4 1280.8 572.5 1281.8 572.7 C1282.8 573.0 1284.4 573.8 1285.4 574.0 C1286.4 574.1 1288.0 573.6 1289.0 573.6 C1290.0 573.7 1291.6 574.4 1292.6 574.4 C1293.6 574.5 1295.2 574.0 1296.2 574.0 C1297.2 573.9 1298.8 574.1 1299.8 574.3 C1300.8 574.5 1302.4 575.2 1303.4 575.4 C1304.4 575.5 1306.0 575.6 1307.0 575.5 C1308.0 575.3 1309.6 574.3 1310.6 574.4 C1311.6 574.5 1313.2 575.9 1314.2 576.1 C1315.2 576.3 1317.2 576.0 1317.7 576.0 C1317.8 576.0 1317.7 575.9 1317.8 576.1 C1318.3 576.2 1320.4 577.2 1321.4 577.1 C1322.4 577.0 1324.0 575.2 1325.0 575.3 C1326.0 575.3 1327.6 577.2 1328.6 577.5 C1329.6 577.7 1331.2 576.8 1332.2 576.8 C1333.2 576.8 1334.8 577.4 1335.8 577.5 C1336.8 577.5 1338.4 577.2 1339.4 577.3 C1340.4 577.4 1342.0 578.0 1343.0 578.2 C1344.0 578.4 1345.6 578.6 1346.6 578.6 C1347.6 578.5 1349.2 577.5 1350.2 577.5 C1351.2 577.6 1352.8 578.5 1353.8 578.8 C1354.8 579.1 1356.4 579.6 1357.4 579.5 C1358.4 579.3 1360.0 578.0 1361.0 577.8 C1362.0 577.5 1363.6 577.6 1364.6 577.8 C1365.6 578.1 1367.2 579.4 1368.2 579.5 C1369.2 579.6 1370.8 578.8 1371.8 578.7 C1372.8 578.6 1374.4 578.3 1375.4 578.5 C1376.4 578.7 1378.0 579.8 1379.0 579.8 C1380.0 579.9 1381.6 579.2 1382.6 579.0 C1383.6 578.9 1385.2 578.3 1386.2 578.6 C1387.2 578.8 1388.8 580.5 1389.8 580.8 C1390.8 581.1 1392.4 581.0 1393.4 580.9 C1394.4 580.7 1396.0 579.8 1397.0 579.8 C1398.0 579.9 1399.6 581.1 1400.6 581.1 C1401.6 581.1 1403.6 579.9 1404.2 579.9 C1404.8 579.8 1404.5 580.5 1405.0 580.7 C1405.5 580.9 1406.9 581.1 1407.8 581.2 C1408.7 581.3 1410.4 581.4 1411.4 581.4 C1412.4 581.5 1414.0 581.6 1415.0 581.5 C1416.0 581.4 1417.6 580.7 1418.6 580.8 C1419.6 580.9 1421.2 582.1 1422.2 582.2 C1423.2 582.4 1424.8 582.1 1425.8 582.2 C1426.8 582.2 1428.4 582.4 1429.4 582.5 C1430.4 582.5 1432.0 582.6 1433.0 582.6 C1434.0 582.6 1435.6 582.5 1436.6 582.7 C1437.6 582.9 1439.2 584.0 1440.2 584.0 C1441.2 584.0 1442.8 582.9 1443.8 582.9 C1444.8 583.0 1446.4 584.0 1447.4 584.2 C1448.4 584.5 1450.0 584.5 1451.0 584.6 C1452.0 584.7 1453.6 584.9 1454.6 584.8 C1455.6 584.8 1457.2 584.4 1458.2 584.3 C1459.2 584.2 1460.8 584.0 1461.8 584.1 C1462.8 584.3 1464.4 585.2 1465.4 585.4 C1466.4 585.5 1468.2 585.3 1469.0 585.3 C1469.8 585.2 1470.5 584.9 1471.0 585.0 C1471.5 585.1 1471.9 585.9 1472.6 586.0 C1473.3 586.1 1475.2 585.6 1476.2 585.6 C1477.2 585.5 1478.8 585.7 1479.8 585.6 C1480.8 585.5 1482.4 585.1 1483.4 585.0 C1484.4 585.0 1486.0 585.0 1487.0 585.0 C1488.0 585.1 1489.6 585.2 1490.6 585.3 C1491.6 585.5 1493.2 585.9 1494.2 586.3 C1495.2 586.7 1496.8 587.7 1497.8 587.9 C1498.8 588.1 1500.4 588.0 1501.4 587.8 C1502.4 587.6 1504.0 586.4 1505.0 586.3 C1506.0 586.2 1507.6 587.0 1508.6 587.3 C1509.6 587.5 1511.2 588.3 1512.2 588.4 C1513.2 588.5 1514.8 588.3 1515.8 588.2 C1516.8 588.1 1518.5 587.8 1519.4 587.8 C1520.3 587.8 1521.6 588.2 1522.0 588.3" stroke="#ff2b2b"/><path d="M677.0 632.7 C677.5 632.3 679.8 630.9 680.6 630.4 C681.5 629.9 682.5 629.2 683.0 629.0 C683.5 628.8 683.5 628.8 684.2 628.7 C684.9 628.6 686.8 628.4 687.8 628.3 C688.8 628.1 690.4 627.9 691.4 627.8 C692.4 627.8 694.0 628.2 695.0 628.2 C696.0 628.1 697.9 627.7 698.6 627.5 C699.3 627.4 699.5 627.1 700.0 627.0 C700.5 626.9 701.4 627.0 702.2 627.1 C703.0 627.2 704.8 627.6 705.8 627.6 C706.8 627.6 708.4 627.3 709.4 627.2 C710.4 627.2 712.0 627.4 713.0 627.3 C714.0 627.3 715.6 626.9 716.6 626.8 C717.6 626.8 719.2 627.1 720.2 627.0 C721.2 627.0 722.8 626.6 723.8 626.6 C724.8 626.6 726.4 626.7 727.4 626.9 C728.4 627.1 730.0 628.0 731.0 628.0 C732.0 628.1 733.6 627.6 734.6 627.3 C735.6 627.0 737.2 626.0 738.2 626.0 C739.2 626.1 740.8 627.3 741.8 627.6 C742.8 627.9 744.4 628.1 745.4 628.0 C746.4 627.9 748.0 627.2 749.0 627.2 C750.0 627.2 751.6 627.9 752.6 627.8 C753.6 627.7 755.2 626.8 756.2 626.5 C757.2 626.3 758.8 626.1 759.8 626.2 C760.8 626.3 762.4 627.1 763.4 627.2 C764.4 627.4 766.0 627.1 767.0 627.2 C768.0 627.2 769.6 627.6 770.6 627.7 C771.6 627.7 773.2 627.5 774.2 627.4 C775.2 627.3 776.8 627.0 777.8 626.9 C778.8 626.8 780.4 626.9 781.4 626.9 C782.4 627.0 784.0 627.1 785.0 627.1 C786.0 627.2 787.6 627.3 788.6 627.3 C789.6 627.3 791.2 627.6 792.2 627.4 C793.2 627.3 794.8 626.4 795.8 626.4 C796.8 626.3 798.4 627.0 799.4 627.1 C800.4 627.2 802.0 627.3 803.0 627.2 C804.0 627.1 805.6 626.4 806.6 626.4 C807.6 626.3 809.2 626.7 810.2 626.8 C811.2 626.9 812.8 627.3 813.8 627.3 C814.8 627.4 816.4 627.1 817.4 627.1 C818.4 627.2 820.0 627.7 821.0 627.7 C822.0 627.7 823.6 627.3 824.6 627.2 C825.6 627.1 827.2 627.0 828.2 626.9 C829.2 626.8 830.8 626.5 831.8 626.5 C832.8 626.5 834.4 626.4 835.4 626.6 C836.4 626.8 838.0 627.9 839.0 627.9 C840.0 627.9 841.6 626.8 842.6 626.7 C843.6 626.5 845.2 626.8 846.2 626.9 C847.2 626.9 848.8 627.1 849.8 627.2 C850.8 627.4 852.4 627.8 853.4 627.7 C854.4 627.7 856.0 626.8 857.0 626.7 C858.0 626.6 859.6 627.1 860.6 627.2 C861.6 627.3 863.2 627.4 864.2 627.3 C865.2 627.2 866.8 626.5 867.8 626.5 C868.8 626.4 870.4 626.8 871.4 626.9 C872.4 627.1 874.0 627.5 875.0 627.6 C876.0 627.6 877.6 627.4 878.6 627.3 C879.6 627.1 881.2 626.7 882.2 626.7 C883.2 626.6 884.8 626.9 885.8 627.0 C886.8 627.0 888.4 627.0 889.4 627.1 C890.4 627.2 892.0 627.4 893.0 627.4 C894.0 627.4 895.6 627.1 896.6 627.1 C897.6 627.0 899.2 627.1 900.2 627.0 C901.2 626.9 902.8 626.4 903.8 626.3 C904.8 626.3 906.4 626.5 907.4 626.6 C908.4 626.8 910.0 627.4 911.0 627.5 C912.0 627.6 913.6 627.1 914.6 627.1 C915.6 627.1 917.2 627.3 918.2 627.3 C919.2 627.3 920.8 627.1 921.8 627.2 C922.8 627.3 924.4 628.1 925.4 628.2 C926.4 628.2 928.0 627.6 929.0 627.4 C930.0 627.1 931.6 626.4 932.6 626.4 C933.6 626.4 935.2 627.1 936.2 627.3 C937.2 627.4 938.8 627.4 939.8 627.3 C940.8 627.3 942.4 627.1 943.4 627.0 C944.4 626.9 946.0 626.5 947.0 626.6 C948.0 626.7 949.6 627.5 950.6 627.6 C951.6 627.7 953.2 627.6 954.2 627.4 C955.2 627.2 956.8 626.4 957.8 626.4 C958.8 626.4 960.4 627.3 961.4 627.4 C962.4 627.5 964.0 627.2 965.0 627.2 C966.0 627.2 967.6 627.3 968.6 627.3 C969.6 627.3 971.2 627.1 972.2 627.0 C973.2 626.8 974.8 626.1 975.8 626.2 C976.8 626.4 978.4 627.8 979.4 627.8 C980.4 627.9 982.0 626.6 983.0 626.5 C984.0 626.4 985.6 627.1 986.6 627.2 C987.6 627.3 989.2 627.2 990.2 627.2 C991.2 627.1 992.8 626.6 993.8 626.7 C994.8 626.8 996.5 627.7 997.4 627.8 C998.3 627.9 999.5 627.3 1000.0 627.2 C1000.5 627.1 1000.3 627.4 1001.0 627.4 C1001.7 627.5 1003.6 627.4 1004.6 627.5 C1005.6 627.5 1007.2 627.6 1008.2 627.6 C1009.2 627.5 1010.8 627.3 1011.8 627.3 C1012.8 627.3 1014.4 627.9 1015.4 627.8 C1016.4 627.7 1018.0 626.6 1019.0 626.5 C1020.0 626.5 1021.6 627.6 1022.6 627.7 C1023.6 627.8 1025.2 627.1 1026.2 627.0 C1027.2 626.9 1028.8 627.1 1029.8 627.0 C1030.8 627.0 1032.4 626.6 1033.4 626.8 C1034.4 627.0 1036.0 628.2 1037.0 628.3 C1038.0 628.4 1039.6 627.5 1040.6 627.4 C1041.6 627.3 1043.2 627.9 1044.2 627.8 C1045.2 627.7 1046.8 626.8 1047.8 626.8 C1048.8 626.8 1050.4 627.8 1051.4 627.8 C1052.4 627.7 1054.0 626.6 1055.0 626.5 C1056.0 626.5 1057.6 627.1 1058.6 627.3 C1059.6 627.4 1061.2 627.7 1062.2 627.8 C1063.2 627.9 1064.8 627.8 1065.8 627.7 C1066.8 627.6 1068.4 627.0 1069.4 627.0 C1070.4 627.0 1072.0 627.7 1073.0 627.7 C1074.0 627.8 1075.6 627.5 1076.6 627.4 C1077.6 627.3 1079.2 627.1 1080.2 627.1 C1081.2 627.1 1082.8 627.4 1083.8 627.3 C1084.8 627.3 1086.4 626.8 1087.4 626.8 C1088.4 626.8 1090.0 627.2 1091.0 627.4 C1092.0 627.6 1093.6 627.8 1094.6 627.9 C1095.6 628.0 1097.2 628.2 1098.2 628.2 C1099.2 628.1 1100.8 627.8 1101.8 627.6 C1102.8 627.5 1104.4 627.2 1105.4 627.1 C1106.4 627.0 1108.0 627.1 1109.0 627.1 C1110.0 627.1 1111.6 627.0 1112.6 627.2 C1113.6 627.3 1115.2 628.4 1116.2 628.3 C1117.2 628.3 1118.8 626.8 1119.8 626.7 C1120.8 626.6 1122.4 627.9 1123.4 627.9 C1124.4 628.0 1126.0 627.3 1127.0 627.1 C1128.0 627.0 1129.6 626.8 1130.6 626.8 C1131.6 626.8 1133.2 627.2 1134.2 627.3 C1135.2 627.4 1136.8 627.7 1137.8 627.7 C1138.8 627.8 1140.4 627.4 1141.4 627.4 C1142.4 627.4 1144.0 627.7 1145.0 627.7 C1146.0 627.7 1147.6 627.3 1148.6 627.2 C1149.6 627.2 1151.2 627.4 1152.2 627.5 C1153.2 627.5 1154.8 627.6 1155.8 627.6 C1156.8 627.6 1158.4 627.6 1159.4 627.7 C1160.4 627.8 1162.0 628.1 1163.0 628.2 C1164.0 628.3 1165.6 628.5 1166.6 628.4 C1167.6 628.2 1169.2 627.3 1170.2 627.3 C1171.2 627.2 1172.8 627.7 1173.8 627.8 C1174.8 628.0 1176.4 628.2 1177.4 628.0 C1178.4 627.9 1180.0 626.8 1181.0 626.7 C1182.0 626.7 1183.6 627.5 1184.6 627.7 C1185.6 627.8 1187.2 627.8 1188.2 627.8 C1189.2 627.8 1190.8 627.7 1191.8 627.8 C1192.8 627.9 1194.4 628.3 1195.4 628.3 C1196.4 628.3 1198.0 627.7 1199.0 627.6 C1200.0 627.5 1201.6 627.7 1202.6 627.7 C1203.6 627.7 1205.2 627.5 1206.2 627.6 C1207.2 627.6 1208.8 628.0 1209.8 628.1 C1210.8 628.1 1212.4 628.0 1213.4 627.9 C1214.4 627.9 1216.0 627.7 1217.0 627.7 C1218.0 627.6 1219.6 627.5 1220.6 627.5 C1221.6 627.5 1223.2 627.6 1224.2 627.6 C1225.2 627.6 1226.8 627.6 1227.8 627.6 C1228.8 627.5 1230.4 627.4 1231.4 627.4 C1232.4 627.3 1234.0 627.1 1235.0 627.0 C1236.0 626.9 1237.6 626.7 1238.6 626.9 C1239.6 627.1 1241.2 628.3 1242.2 628.4 C1243.2 628.6 1244.8 627.8 1245.8 627.6 C1246.8 627.4 1248.4 626.9 1249.4 627.0 C1250.4 627.2 1252.0 628.5 1253.0 628.7 C1254.0 629.0 1255.6 628.8 1256.6 628.7 C1257.6 628.6 1259.2 628.2 1260.2 627.9 C1261.2 627.6 1262.8 626.7 1263.8 626.7 C1264.8 626.8 1266.4 628.2 1267.4 628.5 C1268.4 628.7 1270.0 628.3 1271.0 628.2 C1272.0 628.2 1273.6 628.3 1274.6 628.3 C1275.6 628.2 1277.2 627.9 1278.2 627.8 C1279.2 627.7 1280.8 627.9 1281.8 627.8 C1282.8 627.8 1284.4 627.4 1285.4 627.3 C1286.4 627.2 1288.0 626.9 1289.0 627.1 C1290.0 627.4 1291.6 628.7 1292.6 628.8 C1293.6 628.8 1295.2 627.7 1296.2 627.5 C1297.2 627.4 1298.8 627.3 1299.8 627.5 C1300.8 627.7 1302.4 628.6 1303.4 628.8 C1304.4 629.0 1306.0 629.1 1307.0 628.9 C1308.0 628.7 1309.6 627.6 1310.6 627.4 C1311.6 627.3 1313.2 627.6 1314.2 627.8 C1315.2 627.9 1316.8 628.5 1317.8 628.5 C1318.8 628.5 1320.4 628.0 1321.4 627.9 C1322.4 627.9 1324.0 628.2 1325.0 628.1 C1326.0 628.0 1327.6 627.2 1328.6 627.3 C1329.6 627.3 1331.2 628.1 1332.2 628.2 C1333.2 628.4 1334.8 628.3 1335.8 628.3 C1336.8 628.3 1338.4 628.0 1339.4 628.0 C1340.4 628.0 1342.0 628.3 1343.0 628.3 C1344.0 628.3 1345.6 628.1 1346.6 628.2 C1347.6 628.3 1349.2 628.9 1350.2 628.9 C1351.2 629.0 1352.8 628.9 1353.8 628.8 C1354.8 628.7 1356.4 628.4 1357.4 628.3 C1358.4 628.2 1360.0 628.1 1361.0 628.0 C1362.0 627.8 1363.6 627.2 1364.6 627.3 C1365.6 627.5 1367.2 628.9 1368.2 629.0 C1369.2 629.2 1370.8 628.6 1371.8 628.4 C1372.8 628.2 1374.4 627.4 1375.4 627.5 C1376.4 627.6 1378.0 628.7 1379.0 628.7 C1380.0 628.8 1381.6 627.9 1382.6 627.8 C1383.6 627.6 1385.2 627.6 1386.2 627.7 C1387.2 627.8 1388.8 628.3 1389.8 628.3 C1390.8 628.3 1392.4 627.7 1393.4 627.8 C1394.4 627.8 1396.0 628.8 1397.0 628.8 C1398.0 628.9 1399.6 628.3 1400.6 628.2 C1401.6 628.1 1403.2 627.9 1404.2 628.0 C1405.2 628.1 1406.8 628.7 1407.8 628.6 C1408.8 628.6 1410.4 627.8 1411.4 627.7 C1412.4 627.6 1414.0 627.6 1415.0 627.7 C1416.0 627.9 1417.6 628.8 1418.6 628.8 C1419.6 628.9 1421.2 628.3 1422.2 628.2 C1423.2 628.2 1424.8 628.5 1425.8 628.4 C1426.8 628.4 1428.4 627.8 1429.4 627.7 C1430.4 627.6 1432.0 627.3 1433.0 627.5 C1434.0 627.6 1435.6 628.5 1436.6 628.5 C1437.6 628.5 1439.2 627.5 1440.2 627.5 C1441.2 627.5 1442.8 628.5 1443.8 628.6 C1444.8 628.6 1446.4 628.0 1447.4 627.8 C1448.4 627.6 1450.0 627.2 1451.0 627.2 C1452.0 627.2 1453.6 627.4 1454.6 627.6 C1455.6 627.7 1457.2 628.1 1458.2 628.3 C1459.2 628.5 1460.8 629.1 1461.8 629.0 C1462.8 629.0 1464.4 628.0 1465.4 627.8 C1466.4 627.6 1468.0 627.5 1469.0 627.5 C1470.0 627.5 1471.6 627.8 1472.6 627.9 C1473.6 628.1 1475.2 628.5 1476.2 628.5 C1477.2 628.5 1478.8 627.9 1479.8 627.9 C1480.8 627.9 1482.4 628.5 1483.4 628.4 C1484.4 628.3 1486.0 627.5 1487.0 627.3 C1488.0 627.2 1489.6 627.4 1490.6 627.5 C1491.6 627.6 1493.2 627.9 1494.2 628.1 C1495.2 628.3 1496.8 628.8 1497.8 628.9 C1498.8 628.9 1500.4 628.2 1501.4 628.2 C1502.4 628.3 1504.0 629.0 1505.0 629.1 C1506.0 629.2 1507.6 629.0 1508.6 628.8 C1509.6 628.7 1511.2 628.3 1512.2 628.0 C1513.2 627.8 1514.8 627.3 1515.8 627.3 C1516.8 627.3 1518.5 628.1 1519.4 628.2 C1520.3 628.3 1521.6 627.9 1522.0 627.9" stroke="#ffabab"/></g><text transform="translate(547 557) rotate(-90)" text-anchor="middle" font-size="14" fill="#4cd94c">pH</text><text transform="translate(640.2 556.8) rotate(-90)" text-anchor="middle" font-size="14" textLength="61.3" lengthAdjust="spacing" fill="#d02b3a">Biomasse</text><text transform="translate(1600.4 556.4) rotate(-90)" text-anchor="middle" font-size="14" textLength="24.8" lengthAdjust="spacing" fill="#dcd340">PO2</text><path d="M1657.1 404.6 H1694.6" stroke="#0068c9" stroke-width="2.5" fill="none"/><path d="M1657.1 428.4 H1694.6" stroke="#83c9ff" stroke-width="2.5" fill="none"/><path d="M1657.1 452.1 H1694.6" stroke="#ff2b2b" stroke-width="2.5" fill="none"/><path d="M1657.1 475.9 H1694.6" stroke="#ffabab" stroke-width="2.5" fill="none"/><path d="M1657.1 499.6 H1694.6" stroke="#29b09d" stroke-width="2.5" fill="none"/><path d="M1657.1 523.4 H1694.6" stroke="#7defa1" stroke-width="2.5" fill="none"/><path d="M1657.1 547.1 H1694.6" stroke="#ff8700" stroke-width="2.5" fill="none"/><path d="M1657.1 570.9 H1694.6" stroke="#ffd16a" stroke-width="2.5" fill="none"/><path d="M1657.1 594.6 H1694.6" stroke="#6d3fc0" stroke-width="2.5" fill="none"/><path d="M1657.1 618.4 H1694.6" stroke="#d5dae5" stroke-width="2.5" fill="none"/><path d="M1657.1 642.1 H1694.6" stroke="#0068c9" stroke-width="2.5" fill="none"/><path d="M1657.1 665.9 H1694.6" stroke="#83c9ff" stroke-width="2.5" fill="none"/><path d="M1657.1 689.6 H1694.6" stroke="#ff2b2b" stroke-width="2.5" fill="none"/><path d="M1657.1 713.4 H1694.6" stroke="#ffabab" stroke-width="2.5" fill="none"/><path d="M1899.4 395 V585.7" stroke="#a4a9c0" stroke-width="1.2" fill="none"/></svg><div style="position:absolute;left:645.88px;top:386px;font-size:11.7px;line-height:15px;color:#d02b3a;white-space:pre;letter-spacing:-0.3px;">120</div><div style="position:absolute;left:645.88px;top:466px;font-size:11.7px;line-height:15px;color:#d02b3a;white-space:pre;letter-spacing:-0.3px;">100</div><div style="position:absolute;left:652.38px;top:546px;font-size:11.7px;line-height:15px;color:#d02b3a;white-space:pre;letter-spacing:-0.3px;">80</div><div style="position:absolute;left:652.38px;top:626px;font-size:11.7px;line-height:15px;color:#d02b3a;white-space:pre;letter-spacing:-0.3px;">60</div><div style="position:absolute;left:652.38px;top:706px;font-size:11.7px;line-height:15px;color:#d02b3a;white-space:pre;letter-spacing:-0.3px;">40</div><div style="position:absolute;left:562.98px;top:430px;font-size:11.7px;line-height:15px;color:#4cd94c;white-space:pre;letter-spacing:-0.3px;">8</div><div style="position:absolute;left:553.25px;top:486px;font-size:11.7px;line-height:15px;color:#4cd94c;white-space:pre;letter-spacing:-0.3px;">7.5</div><div style="position:absolute;left:562.98px;top:542px;font-size:11.7px;line-height:15px;color:#4cd94c;white-space:pre;letter-spacing:-0.3px;">7</div><div style="position:absolute;left:553.25px;top:598px;font-size:11.7px;line-height:15px;color:#4cd94c;white-space:pre;letter-spacing:-0.3px;">6.5</div><div style="position:absolute;left:562.98px;top:654px;font-size:11.7px;line-height:15px;color:#4cd94c;white-space:pre;letter-spacing:-0.3px;">6</div><div style="position:absolute;left:553.25px;top:710px;font-size:11.7px;line-height:15px;color:#4cd94c;white-space:pre;letter-spacing:-0.3px;">5.5</div><div style="position:absolute;left:1616.48px;top:431px;font-size:11.7px;line-height:15px;color:#dcd340;white-space:pre;letter-spacing:-0.3px;">15</div><div style="position:absolute;left:1616.48px;top:521px;font-size:11.7px;line-height:15px;color:#dcd340;white-space:pre;letter-spacing:-0.3px;">10</div><div style="position:absolute;left:1622.98px;top:612px;font-size:11.7px;line-height:15px;color:#dcd340;white-space:pre;letter-spacing:-0.3px;">5</div><div style="position:absolute;left:1622.98px;top:702px;font-size:11.7px;line-height:15px;color:#dcd340;white-space:pre;letter-spacing:-0.3px;">0</div><div style="position:absolute;left:880.74px;top:737px;font-size:11.7px;line-height:15px;color:#7e8497;white-space:pre;letter-spacing:-0.3px;">5</div><div style="position:absolute;left:1086.89px;top:737px;font-size:11.7px;line-height:15px;color:#7e8497;white-space:pre;letter-spacing:-0.3px;">10</div><div style="position:absolute;left:1296.29px;top:737px;font-size:11.7px;line-height:15px;color:#7e8497;white-space:pre;letter-spacing:-0.3px;">15</div><div style="position:absolute;left:1505.79px;top:737px;font-size:11.7px;line-height:15px;color:#7e8497;white-space:pre;letter-spacing:-0.3px;">20</div><div style="position:absolute;left:1057.79px;top:763px;font-size:13.5px;line-height:17px;color:#7e8497;white-space:pre;letter-spacing:0.469px;">Time (Hours)</div><div style="position:absolute;left:1700.66px;top:399px;font-size:12.3px;line-height:16px;color:#2c2e3a;white-space:pre;letter-spacing:-0.161px;">Biomasse - F01 - Control</div><div style="position:absolute;left:1700.66px;top:423px;font-size:12.3px;line-height:16px;color:#2c2e3a;white-space:pre;letter-spacing:-0.161px;">Biomasse - F02 - Control</div><div style="position:absolute;left:1700.66px;top:447px;font-size:12.3px;line-height:16px;color:#2c2e3a;white-space:pre;letter-spacing:-0.161px;">Biomasse - F03 - Control</div><div style="position:absolute;left:1700.66px;top:471px;font-size:12.3px;line-height:16px;color:#2c2e3a;white-space:pre;letter-spacing:-0.161px;">Biomasse - F04 - Control</div><div style="position:absolute;left:1700.66px;top:494px;font-size:12.3px;line-height:16px;color:#2c2e3a;white-space:pre;letter-spacing:-0.124px;">Biomasse - F05 - Buffer solution 9 A</div><div style="position:absolute;left:1700.66px;top:518px;font-size:12.3px;line-height:16px;color:#2c2e3a;white-space:pre;letter-spacing:-0.143px;">Biomasse - F06 - Buffer solution 9 B</div><div style="position:absolute;left:1700.66px;top:542px;font-size:12.3px;line-height:16px;color:#2c2e3a;white-space:pre;letter-spacing:-0.163px;">Biomasse - F07 - Buffer solution 9 C</div><div style="position:absolute;left:1700.66px;top:566px;font-size:12.3px;line-height:16px;color:#2c2e3a;white-space:pre;letter-spacing:-0.161px;">Biomasse - F08 - Control</div><div style="position:absolute;left:1700.66px;top:589px;font-size:12.3px;line-height:16px;color:#2c2e3a;white-space:pre;letter-spacing:-0.290px;">PO2 - F01 - Control</div><div style="position:absolute;left:1700.66px;top:613px;font-size:12.3px;line-height:16px;color:#2c2e3a;white-space:pre;letter-spacing:-0.290px;">PO2 - F02 - Control</div><div style="position:absolute;left:1700.66px;top:637px;font-size:12.3px;line-height:16px;color:#2c2e3a;white-space:pre;letter-spacing:-0.290px;">PO2 - F03 - Control</div><div style="position:absolute;left:1700.66px;top:661px;font-size:12.3px;line-height:16px;color:#2c2e3a;white-space:pre;letter-spacing:-0.290px;">PO2 - F04 - Control</div><div style="position:absolute;left:1700.66px;top:684px;font-size:12.3px;line-height:16px;color:#2c2e3a;white-space:pre;letter-spacing:-0.172px;">PO2 - F05 - Buffer solution 9 A</div><div style="position:absolute;left:1700.66px;top:708px;font-size:12.3px;line-height:16px;color:#2c2e3a;white-space:pre;letter-spacing:-0.195px;">PO2 - F06 - Buffer solution 9 B</div></body></html>
